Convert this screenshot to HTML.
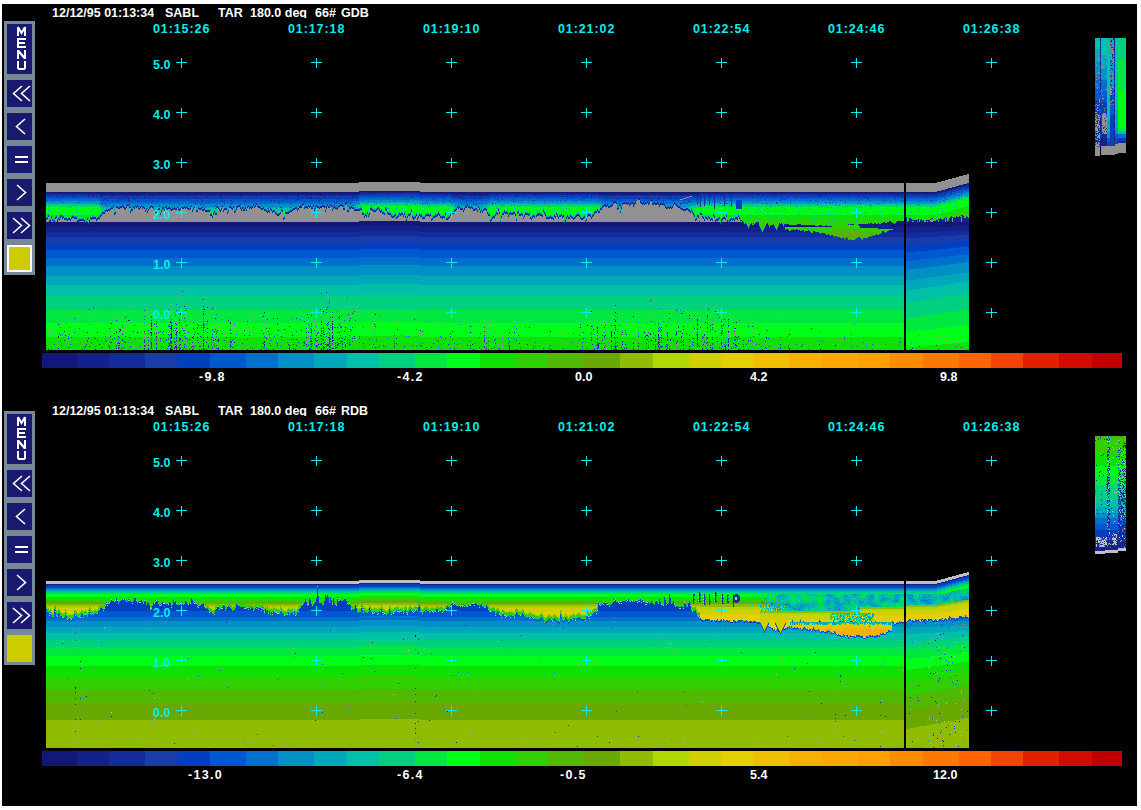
<!DOCTYPE html>
<html><head><meta charset="utf-8">
<style>
html,body{margin:0;padding:0;background:#fff;width:1141px;height:810px;overflow:hidden;position:relative}
.t,.c,.w,.ml{position:absolute;font-family:"Liberation Sans",sans-serif;font-weight:bold;white-space:pre;line-height:14px}
.t{color:#fff;font-size:12.5px;height:12px;overflow:hidden}
.c{color:#00eeee;font-size:12.5px}
.tm{letter-spacing:0.9px}
.w{color:#fff;font-size:12.5px}
.ml{color:#fff;font-size:11.5px;left:7px;width:25px;text-align:center}
svg{position:absolute;left:0;top:0}
</style></head><body>
<svg width="1141" height="810" viewBox="0 0 1141 810" shape-rendering="crispEdges">
<rect x="2" y="4" width="1135" height="802" fill="#000"/>
<path fill="#121878" d="M0 0m967 183h2v1h-2zm-4 1h4v1h-4zm-4 1h4v1h-4zm-3 1h3v1h-3zm-4 1h4v1h-4zm15 0h1v1h-1zm-19 1h4v1h-4zm-3 1h3v1h-3zm14 0h1v1h-1zm-18 1h4v1h-4zm7 0h1v1h-1zm-589 1h61v1h-61zm578 0h4v1h-4zm-891 1h314v1h-314zm374 0h517v1h-517zm-321 1h260v1h-260zm352 0h39v1h-39zm148 0h101v1h-101zm-509 1h1v1h-1zm4 0h1v1h-1zm14 0h1v1h-1zm4 0h1v1h-1zm14 0h1v1h-1zm3 0h2v1h-2zm7 0h1v1h-1zm4 0h1v1h-1zm23 0h1v1h-1zm23 0h1v1h-1zm14 0h1v1h-1zm22 0h1v1h-1zm36 0h1v1h-1zm13 0h1v1h-1zm13 0h2v1h-2zm21 0h1v1h-1zm3 0h1v1h-1zm2 0h1v1h-1zm5 0h1v1h-1zm3 0h3v1h-3zm5 0h1v1h-1zm17 0h1v1h-1zm2 0h1v1h-1zm2 0h1v1h-1zm17 0h1v1h-1zm9 0h1v1h-1zm4 0h1v1h-1zm72 0h1v1h-1zm5 0h1v1h-1zm12 0h1v1h-1zm11 0h1v1h-1zm2 0h1v1h-1zm20 0h1v1h-1zm5 0h1v1h-1zm2 0h1v1h-1zm22 0h1v1h-1zm9 0h2v1h-2zm33 0h1v1h-1zm5 0h1v1h-1zm27 0h1v1h-1zm8 0h2v1h-2zm3 0h1v1h-1zm18 0h1v1h-1zm4 0h1v1h-1zm11 0h1v2h-1zm12 0h1v1h-1zm12 0h1v1h-1zm8 0h1v1h-1zm5 0h1v1h-1zm28 0h1v1h-1zm13 0h1v1h-1zm28 0h1v1h-1zm8 0h1v1h-1zm14 0h1v1h-1zm9 0h1v1h-1zm69 0h1v1h-1zm29 0h1v1h-1zm14 0h1v1h-1zm5 0h1v1h-1zm5 0h1v1h-1zm5 0h1v1h-1zm5 0h1v1h-1zm15 0h1v1h-1zm-839 1h1v1h-1zm4 0h1v2h-1zm27 0h1v1h-1zm18 0h1v2h-1zm12 0h1v1h-1zm3 0h1v1h-1zm12 0h1v1h-1zm24 0h1v1h-1zm27 0h1v1h-1zm4 0h1v1h-1zm21 0h1v1h-1zm2 0h1v1h-1zm11 0h1v1h-1zm3 0h1v1h-1zm25 0h1v1h-1zm17 0h1v2h-1zm22 0h1v1h-1zm18 0h1v1h-1zm16 0h1v1h-1zm102 0h1v1h-1zm25 0h1v1h-1zm3 0h1v1h-1zm2 0h2v1h-2zm29 0h2v1h-2zm3 0h1v1h-1zm62 0h1v1h-1zm7 0h1v1h-1zm33 0h1v1h-1zm34 0h1v1h-1zm6 0h1v1h-1zm16 0h1v1h-1zm7 0h1v1h-1zm27 0h1v1h-1zm63 0h1v1h-1zm45 0h1v1h-1zm2 0h1v1h-1zm38 0h1v1h-1zm26 0h1v1h-1zm5 0h1v1h-1zm6 0h1v1h-1zm42 0h1v1h-1zm-841 1h1v1h-1zm5 0h1v1h-1zm11 0h1v1h-1zm10 0h1v1h-1zm4 0h1v1h-1zm18 0h1v1h-1zm33 0h1v1h-1zm9 0h1v1h-1zm20 0h1v1h-1zm14 0h1v1h-1zm57 0h1v1h-1zm10 0h1v1h-1zm19 0h1v1h-1zm18 0h1v1h-1zm28 0h1v1h-1zm103 0h1v1h-1zm16 0h1v1h-1zm8 0h1v1h-1zm87 0h1v1h-1zm103 0h1v1h-1zm54 0h1v1h-1zm17 0h1v1h-1zm175 0h1v1h-1zm7 0h1v1h-1zm-799 1h1v1h-1zm73 0h1v1h-1zm25 0h1v1h-1zm19 0h1v1h-1zm71 0h1v1h-1zm45 0h1v1h-1zm104 0h1v1h-1zm2 0h1v1h-1zm185 0h1v1h-1zm24 0h1v1h-1zm-553 1h1v1h-1zm143 0h1v1h-1zm49 0h1v1h-1zm341 2h1v1h-1zm-36 2h1v1h-1zm8 1h1v1h-1zm-1 1h1v1h-1zm8 0h1v1h-1zm30 0h1v1h-1zm-523 2h1v1h-1zm163 0h1v1h-1zm21 0h1v1h-1zm-201 1h1v1h-1zm20 0h1v1h-1zm23 0h1v1h-1zm14 0h1v1h-1zm129 0h1v1h-1zm18 0h1v1h-1zm2 0h1v1h-1zm133 0h1v1h-1zm7 0h1v1h-1zm3 0h1v1h-1zm-345 1h1v1h-1zm42 0h1v1h-1zm21 0h1v1h-1zm111 0h1v1h-1zm45 0h1v2h-1zm7 0h1v1h-1zm316 0h1v1h-1zm-445 1h1v1h-1zm11 0h1v1h-1zm247 0h1v1h-1zm6 0h1v1h-1zm-377 1h1v1h-1zm63 0h1v1h-1zm34 0h1v1h-1zm66 0h1v1h-1zm21 0h1v1h-1zm22 0h1v1h-1zm229 0h1v1h-1zm-338 1h2v1h-2zm69 0h1v1h-1zm106 0h1v1h-1zm124 0h1v1h-1zm-374 1h1v1h-1zm350 0h1v1h-1zm-377 1h1v1h-1zm402 0h1v1h-1zm8 0h1v1h-1zm-234 1h1v1h-1zm110 0h1v1h-1zm56 0h1v1h-1zm57 0h1v1h-1zm7 0h1v1h-1zm18 0h1v1h-1zm2 0h1v1h-1zm59 0h1v1h-1zm-310 1h1v1h-1zm88 0h1v1h-1zm50 0h1v1h-1zm160 0h1v1h-1zm386 0h1v1h-1zm-568 1h1v1h-1zm41 0h1v1h-1zm124 0h1v1h-1zm8 0h1v1h-1zm3 0h1v1h-1zm-78 1h1v1h-1zm58 0h1v1h-1zm25 0h1v1h-1zm130 0h1v1h-1zm252 0h1v1h-1zm3 0h1v1h-1zm-905 1h1v1h-1zm44 0h1v1h-1zm324 0h1v1h-1zm19 0h1v1h-1zm138 0h1v1h-1zm373 0h1v1h-1zm-894 1h1v1h-1zm37 0h1v1h-1zm435 0h1v1h-1zm202 0h1v1h-1zm197 0h1v1h-1zm-850 1h1v1h-1zm279 1h61v1h-61zm538 0h1v1h-1zm4 0h1v1h-1zm-855 1h7v1h-7zm8 0h31v1h-31zm33 0h1v1h-1zm2 0h446v2h-446zm447 0h28v2h-28zm29 0h20v1h-20zm21 0h113v1h-113zm114 0h20v1h-20zm21 0h7v2h-7zm8 0h14v1h-14zm160 0h2v1h-2zm8 0h10v1h-10zm11 0h11v1h-11zm12 0h4v1h-4zm6 0h43v1h-43zm-880 1h39v1h-39zm40 0h2v1h-2zm479 0h155v1h-155zm164 0h15v1h-15zm27 0h3v1h-3zm127 0h2v1h-2zm4 0h5v1h-5zm9 0h73v1h-73zm-850 1h42v1h-42zm43 0h631v1h-631zm632 0h23v1h-23zm24 0h1v1h-1zm6 0h1v1h-1zm4 0h4v1h-4zm12 0h1v1h-1zm12 0h1v1h-1zm2 0h1v1h-1zm6 0h1v1h-1zm104 0h78v2h-78zm-845 1h701v1h-701zm704 0h2v1h-2zm4 0h5v1h-5zm12 0h2v1h-2zm7 0h1v1h-1zm6 0h4v2h-4zm5 0h5v1h-5zm11 0h1v1h-1zm2 0h4v1h-4zm29 0h1v1h-1zm33 0h1v1h-1zm-813 1h313v1h-313zm374 0h327v1h-327zm330 0h9v1h-9zm16 0h3v1h-3zm4 0h4v1h-4zm14 0h31v1h-31zm35 0h3v1h-3zm6 0h2v1h-2zm6 0h1v1h-1zm60 0h61v1h-61zm-241 74h1v1h-1zm-466 6h1v1h-1zm28 2h1v1h-1zm-9 1h2v1h-2zm505 0h1v1h-1zm-32 1h1v1h-1zm-353 1h1v1h-1zm392 0h1v1h-1zm-451 1h1v1h-1zm-84 1h1v1h-1zm172 0h1v1h-1zm-45 1h1v1h-1zm68 0h1v1h-1zm-112 2h1v1h-1zm370 0h1v1h-1zm-301 1h1v1h-1zm-176 1h1v1h-1zm59 0h1v1h-1zm199 1h1v1h-1zm314 0h1v1h-1zm-600 1h1v1h-1zm79 1h1v1h-1zm97 0h1v1h-1zm311 0h1v1h-1zm106 0h1v1h-1zm-551 1h1v1h-1zm566 0h1v1h-1zm-625 1h1v1h-1zm45 0h1v1h-1zm19 0h1v1h-1zm55 0h1v1h-1zm97 0h1v1h-1zm5 0h1v1h-1zm-181 1h1v1h-1zm3 0h1v1h-1zm22 0h1v1h-1zm198 0h1v1h-1zm-47 1h1v1h-1zm260 0h1v1h-1zm27 0h1v1h-1zm114 0h1v1h-1zm24 1h1v1h-1zm-581 1h1v1h-1zm161 0h1v1h-1zm248 0h1v1h-1zm24 0h1v1h-1zm74 0h1v1h-1zm-569 1h1v1h-1zm98 0h1v1h-1zm114 0h1v1h-1zm7 0h1v1h-1zm269 0h1v1h-1zm-313 1h1v1h-1zm309 0h1v1h-1zm-473 1h1v1h-1zm28 0h1v1h-1zm96 0h1v1h-1zm34 0h1v1h-1zm-214 1h1v1h-1zm55 0h1v1h-1zm25 0h1v1h-1zm33 0h1v1h-1zm167 0h1v1h-1zm384 0h1v1h-1zm-641 1h1v1h-1zm29 0h1v1h-1zm21 0h1v1h-1zm21 0h1v1h-1zm18 0h1v2h-1zm3 0h1v1h-1zm132 0h1v1h-1zm21 0h1v1h-1zm138 0h1v1h-1zm44 0h1v1h-1zm108 0h1v1h-1zm22 0h1v1h-1zm-327 1h1v1h-1zm350 0h1v1h-1zm54 0h1v1h-1zm-550 1h1v1h-1zm23 0h1v1h-1zm130 0h1v1h-1zm302 0h1v1h-1zm24 0h1v1h-1zm8 0h1v1h-1zm18 0h1v1h-1zm113 0h1v1h-1zm-497 1h1v1h-1zm319 0h1v1h-1zm35 0h1v1h-1zm-588 1h1v1h-1zm52 0h1v1h-1zm8 0h1v1h-1zm7 0h1v1h-1zm31 0h1v1h-1zm15 0h1v2h-1zm433 0h1v1h-1zm-428 1h1v1h-1zm16 0h1v1h-1zm136 0h1v1h-1zm263 0h1v1h-1zm145 0h1v1h-1zm30 0h1v1h-1zm-678 1h1v1h-1zm7 0h1v1h-1zm171 0h1v1h-1zm49 0h1v1h-1zm24 0h1v1h-1zm320 0h1v1h-1zm185 0h1v1h-1zm-732 1h1v1h-1zm10 0h1v1h-1zm34 0h1v1h-1zm33 0h1v1h-1zm14 0h1v1h-1zm141 0h1v1h-1zm311 0h1v1h-1zm3 0h1v1h-1zm12 0h1v1h-1zm42 0h1v1h-1zm16 0h1v1h-1zm-515 1h1v1h-1zm110 0h1v1h-1zm9 0h1v1h-1zm152 0h1v1h-1zm167 0h1v1h-1zm92 0h1v1h-1zm-656 1h1v1h-1zm177 0h1v1h-1zm77 0h1v1h-1zm168 0h1v1h-1zm219 0h1v1h-1zm-584 1h1v1h-1zm453 0h1v1h-1zm84 0h1v1h-1zm26 0h1v1h-1zm14 0h1v2h-1zm-602 1h1v1h-1zm32 0h1v1h-1zm5 0h1v1h-1zm86 0h1v1h-1zm93 0h1v1h-1zm3 0h1v1h-1zm58 0h1v1h-1zm123 0h1v1h-1zm80 0h1v1h-1zm34 0h1v1h-1zm13 0h1v1h-1zm12 0h1v1h-1zm75 0h1v1h-1zm-634 1h1v1h-1zm81 0h1v1h-1zm84 0h1v1h-1zm42 0h1v1h-1zm12 0h1v1h-1zm9 0h1v1h-1zm145 0h1v1h-1zm187 0h1v1h-1zm38 0h1v1h-1zm-528 1h1v1h-1zm10 0h1v1h-1zm51 0h1v1h-1zm47 0h1v1h-1zm12 0h1v1h-1zm7 0h1v1h-1zm20 0h1v1h-1zm19 0h1v1h-1zm135 0h1v1h-1zm365 0h1v1h-1zm-750 1h1v1h-1zm76 0h1v1h-1zm14 0h1v1h-1zm19 0h1v1h-1zm117 0h1v1h-1zm18 0h1v1h-1zm16 0h1v1h-1zm59 0h1v1h-1zm207 0h1v1h-1zm27 0h1v1h-1zm17 0h1v1h-1zm34 0h1v1h-1zm10 0h1v1h-1zm25 0h1v1h-1zm19 0h1v1h-1zm176 0h1v1h-1zm-743 1h1v1h-1zm143 0h1v1h-1zm5 0h1v1h-1zm18 0h1v1h-1zm33 0h1v1h-1zm134 0h1v1h-1zm452 0h1v1h-1zm-845 1h1v1h-1zm58 0h1v1h-1zm19 0h1v1h-1zm10 0h1v1h-1zm90 0h1v1h-1zm30 0h1v1h-1zm9 0h1v1h-1zm211 0h1v1h-1zm68 0h1v1h-1zm13 0h1v1h-1zm2 0h1v1h-1zm95 0h1v1h-1zm10 0h1v1h-1zm58 0h1v1h-1zm-741 1h1v1h-1zm47 0h1v1h-1zm75 0h2v1h-2zm125 0h1v1h-1zm14 0h1v1h-1zm20 0h2v1h-2zm187 0h1v1h-1zm100 0h1v1h-1zm53 0h1v1h-1zm20 0h1v1h-1zm131 0h1v1h-1zm105 274h1v1h-1zm16 1h1v1h-1zm-866 2h1v1h-1zm488 2h1v1h-1zm-233 2h1v1h-1zm610 4h1v1h-1zm-525 1h1v2h-1zm547 0h1v1h-1zm-27 5h1v1h-1zm29 7h1v1h-1zm-546 6h1v1h-1zm-55 4h1v1h-1zm577 1h1v1h-1zm-860 3h1v1h-1zm0 7h1v1h-1zm714 0h1v1h-1zm136 5h1v1h-1zm3 0h1v1h-1zm-93 3h1v1h-1zm0 5h1v1h-1zm-442 2h1v1h-1zm520 2h1v1h-1zm-843 2h1v2h-1zm78 6h1v1h-1zm283 2h1v1h-1zm495 2h1v1h-1zm4 4h1v1h-1zm-488 10h1v1h-1zm492 2h1v1h-1zm-104 1h1v1h-1zm10 1h1v1h-1zm40 1h1v1h-1zm-456 4h1v1h-1zm-11 1h1v1h-1zm537 0h1v1h-1zm4 0h1v1h-1zm-544 2h1v1h-1zm531 4h1v1h-1zm-6 5h1v1h-1zm-7 1h1v1h-1zm0 2h1v1h-1zm4 3h1v1h-1zm6 3h1v1h-1zm-487 1h1v1h-1zm153 0h1v1h-1z"/>
<path fill="#13228a" d="M0 0m1100 38h1v4h-1zm13 0h2v2h-2zm-2 2h1v1h-1zm-1 1h2v1h-2zm4 0h1v4h-1zm-14 2h1v2h-1zm10 1h1v1h-1zm1 1h1v1h-1zm-11 1h1v2h-1zm14 0h1v3h-1zm-3 1h2v1h-2zm-11 2h1v4h-1zm13 0h2v1h-2zm1 1h1v3h-1zm-14 4h1v3h-1zm12 0h1v3h-1zm2 0h1v1h-1zm-1 3h2v1h-2zm-13 1h1v1h-1zm12 0h1v1h-1zm2 0h1v1h-1zm0 2h1v1h-1zm-14 1h1v5h-1zm10 0h2v1h-2zm0 2h1v1h-1zm2 0h1v1h-1zm-2 2h2v1h-2zm4 0h1v1h-1zm-3 3h1v1h-1zm-11 1h1v4h-1zm12 0h1v1h-1zm-2 1h1v1h-1zm4 1h1v1h-1zm0 2h1v7h-1zm-14 2h1v6h-1zm11 0h1v1h-1zm-1 1h1v1h-1zm1 4h1v2h-1zm-11 2h1v8h-1zm10 2h1v1h-1zm4 0h1v4h-1zm-3 1h1v1h-1zm1 3h1v1h-1zm2 1h1v1h-1zm-1 1h2v1h-2zm1 1h1v1h-1zm-2 1h1v1h-1zm-12 1h1v1h-1zm14 0h1v3h-1zm-4 2h1v1h-1zm1 1h1v1h-1zm2 1h1v1h-1zm-2 1h1v1h-1zm-1 1h1v1h-1zm-10 1h1v1h-1zm14 0h1v1h-1zm-14 2h1v4h-1zm12 0h1v1h-1zm2 1h1v3h-1zm-14 4h1v1h-1zm14 1h1v3h-1zm-14 3h1v1h-1zm0 2h1v2h-1zm14 1h1v6h-1zm-14 4h1v9h-1zm14 5h1v5h-1zm-14 6h1v2h-1zm14 1h1v4h-1zm-14 2h1v2h-1zm14 4h1v4h-1zm-14 1h1v1h-1zm0 1h7v1h-7zm1 1h6v1h-6zm-1 1h7v6h-7zm14 2h1v1h-1zm-14 4h1v1h-1zm-133 38h2v1h-2zm-4 1h4v1h-4zm-4 1h4v1h-4zm6 0h1v1h-1zm-9 1h3v1h-3zm-4 1h4v1h-4zm13 0h1v1h-1zm-17 1h4v1h-4zm-3 1h3v1h-3zm6 0h1v1h-1zm-10 1h4v1h-4zm5 0h1v1h-1zm-586 1h60v1h-60zm577 0h4v1h-4zm-891 1h53v1h-53zm313 0h1v1h-1zm9 0h1v1h-1zm4 0h1v1h-1zm12 0h1v1h-1zm35 0h32v1h-32zm71 0h109v1h-109zm210 0h237v1h-237zm245 0h1v1h-1zm6 0h1v1h-1zm-884 1h1v1h-1zm32 0h9v1h-9zm10 0h3v1h-3zm4 0h13v1h-13zm14 0h2v1h-2zm4 0h5v1h-5zm6 0h3v1h-3zm4 0h22v1h-22zm23 0h22v1h-22zm23 0h13v1h-13zm14 0h21v1h-21zm22 0h35v1h-35zm36 0h12v1h-12zm13 0h12v1h-12zm14 0h19v1h-19zm20 0h2v1h-2zm3 0h1v1h-1zm2 0h4v1h-4zm5 0h2v1h-2zm5 0h2v1h-2zm3 0h16v1h-16zm17 0h1v1h-1zm2 0h1v1h-1zm2 0h14v1h-14zm107 0h11v1h-11zm12 0h10v1h-10zm11 0h1v1h-1zm2 0h13v1h-13zm45 0h1v1h-1zm19 0h1v1h-1zm2 0h1v1h-1zm57 0h7v1h-7zm9 0h1v1h-1zm2 0h17v1h-17zm18 0h3v1h-3zm4 0h10v1h-10zm11 0h11v1h-11zm12 0h11v1h-11zm12 0h7v1h-7zm8 0h4v1h-4zm5 0h19v1h-19zm94 0h1v1h-1zm45 0h1v1h-1zm5 0h1v1h-1zm116 0h1v1h-1zm-893 1h1v1h-1zm25 0h1v1h-1zm148 0h1v1h-1zm147 0h1v1h-1zm85 0h1v1h-1zm138 0h1v1h-1zm74 0h1v1h-1zm97 0h1v1h-1zm33 0h1v2h-1zm41 0h1v1h-1zm61 0h1v1h-1zm-827 1h1v1h-1zm190 0h1v1h-1zm23 0h1v1h-1zm52 0h1v1h-1zm84 0h1v1h-1zm40 0h1v1h-1zm15 0h1v1h-1zm42 0h1v1h-1zm8 0h1v1h-1zm97 0h1v1h-1zm89 0h1v1h-1zm19 0h1v1h-1zm22 0h1v1h-1zm151 0h1v1h-1zm27 0h1v1h-1zm13 0h1v1h-1zm-854 1h1v1h-1zm104 0h1v1h-1zm3 0h1v1h-1zm30 0h1v1h-1zm91 0h1v1h-1zm96 0h1v1h-1zm171 0h2v1h-2zm4 0h1v1h-1zm4 0h1v1h-1zm152 0h1v1h-1zm9 0h1v1h-1zm35 0h1v1h-1zm139 0h1v1h-1zm-793 1h1v1h-1zm46 0h1v1h-1zm242 0h1v1h-1zm13 0h1v1h-1zm2 0h1v1h-1zm43 0h1v1h-1zm49 0h1v1h-1zm44 0h1v1h-1zm65 0h1v1h-1zm8 0h1v1h-1zm13 0h1v2h-1zm10 0h1v1h-1zm69 0h1v1h-1zm59 0h1v1h-1zm71 0h1v1h-1zm18 0h1v1h-1zm-781 1h1v1h-1zm24 0h1v2h-1zm6 0h1v1h-1zm152 0h1v1h-1zm11 0h2v1h-2zm165 0h1v1h-1zm176 0h2v1h-2zm38 0h1v1h-1zm8 0h1v1h-1zm-577 1h1v1h-1zm95 0h1v1h-1zm29 0h1v1h-1zm14 0h1v1h-1zm26 0h1v1h-1zm3 0h1v1h-1zm45 0h1v1h-1zm152 0h1v1h-1zm165 0h1v1h-1zm14 0h1v1h-1zm2 0h1v1h-1zm-540 1h1v1h-1zm45 0h1v1h-1zm17 0h1v1h-1zm48 0h1v1h-1zm418 0h1v2h-1zm-26 1h1v1h-1zm33 0h1v1h-1zm-301 1h1v1h-1zm267 0h1v1h-1zm3 0h1v1h-1zm8 0h3v1h-3zm4 0h1v1h-1zm3 0h2v1h-2zm4 0h1v1h-1zm6 0h1v1h-1zm2 0h1v1h-1zm2 0h2v1h-2zm4 0h1v1h-1zm5 0h1v1h-1zm3 0h2v1h-2zm17 0h1v1h-1zm-479 1h1v1h-1zm61 0h1v1h-1zm47 0h1v1h-1zm42 0h1v1h-1zm282 0h1v1h-1zm7 0h1v1h-1zm8 0h1v1h-1zm2 0h1v1h-1zm4 0h1v1h-1zm4 0h2v1h-2zm3 0h2v1h-2zm3 0h1v1h-1zm3 0h3v1h-3zm14 0h1v1h-1zm-548 1h2v1h-2zm126 0h1v1h-1zm49 0h1v1h-1zm25 0h1v1h-1zm3 0h1v1h-1zm10 0h3v1h-3zm127 0h1v1h-1zm137 0h1v1h-1zm3 0h1v1h-1zm5 0h1v1h-1zm7 0h1v1h-1zm10 0h1v1h-1zm35 0h1v1h-1zm9 0h1v1h-1zm3 0h1v1h-1zm-563 1h1v1h-1zm9 0h1v1h-1zm13 0h1v1h-1zm6 0h1v1h-1zm10 0h1v1h-1zm40 0h1v1h-1zm31 0h1v1h-1zm16 0h2v1h-2zm10 0h1v1h-1zm7 0h1v1h-1zm2 0h1v1h-1zm2 0h1v1h-1zm49 0h1v1h-1zm2 0h1v1h-1zm3 0h1v1h-1zm3 0h1v1h-1zm6 0h2v1h-2zm9 0h1v1h-1zm8 0h1v1h-1zm3 0h1v1h-1zm261 0h1v1h-1zm2 0h2v1h-2zm5 0h2v1h-2zm23 0h1v1h-1zm26 0h1v1h-1zm18 0h1v1h-1zm-561 1h2v1h-2zm5 0h1v1h-1zm2 0h2v1h-2zm3 0h1v1h-1zm3 0h1v1h-1zm4 0h1v1h-1zm3 0h1v1h-1zm7 0h1v1h-1zm7 0h1v1h-1zm2 0h1v1h-1zm13 0h1v1h-1zm4 0h1v1h-1zm15 0h1v1h-1zm2 0h1v1h-1zm8 0h1v1h-1zm23 0h1v1h-1zm12 0h2v1h-2zm4 0h1v1h-1zm4 0h1v1h-1zm10 0h1v1h-1zm3 0h1v1h-1zm2 0h1v1h-1zm2 0h1v1h-1zm4 0h2v1h-2zm41 0h3v1h-3zm6 0h1v1h-1zm4 0h1v1h-1zm8 0h2v1h-2zm3 0h2v1h-2zm8 0h2v1h-2zm6 0h1v1h-1zm4 0h1v1h-1zm13 0h1v1h-1zm106 0h1v1h-1zm8 0h1v1h-1zm3 0h1v1h-1zm3 0h1v1h-1zm7 0h1v1h-1zm124 0h1v1h-1zm6 0h2v1h-2zm57 0h1v1h-1zm3 0h1v1h-1zm2 0h1v1h-1zm2 0h1v1h-1zm6 0h2v1h-2zm-567 1h2v1h-2zm7 0h2v1h-2zm16 0h1v1h-1zm4 0h1v1h-1zm4 0h1v1h-1zm2 0h1v1h-1zm5 0h1v1h-1zm4 0h1v1h-1zm10 0h1v1h-1zm5 0h2v1h-2zm6 0h1v1h-1zm7 0h3v1h-3zm4 0h1v1h-1zm5 0h1v1h-1zm8 0h1v1h-1zm3 0h1v1h-1zm17 0h1v1h-1zm13 0h1v1h-1zm9 0h1v1h-1zm2 0h1v1h-1zm3 0h1v1h-1zm4 0h1v1h-1zm2 0h1v1h-1zm9 0h1v1h-1zm3 0h1v1h-1zm32 0h2v1h-2zm9 0h1v1h-1zm3 0h1v1h-1zm4 0h2v1h-2zm4 0h1v1h-1zm4 0h1v1h-1zm7 0h1v1h-1zm7 0h1v1h-1zm2 0h2v1h-2zm14 0h1v1h-1zm3 0h2v1h-2zm26 0h1v1h-1zm80 0h1v1h-1zm12 0h1v1h-1zm2 0h1v1h-1zm146 0h1v1h-1zm3 0h1v1h-1zm46 0h1v1h-1zm2 0h1v1h-1zm2 0h1v1h-1zm9 0h1v1h-1zm6 0h1v1h-1zm-576 1h1v1h-1zm15 0h1v1h-1zm14 0h1v1h-1zm7 0h1v1h-1zm12 0h2v1h-2zm4 0h1v1h-1zm2 0h1v2h-1zm3 0h1v1h-1zm3 0h1v1h-1zm2 0h2v1h-2zm3 0h2v1h-2zm3 0h1v1h-1zm2 0h1v1h-1zm8 0h2v1h-2zm5 0h1v1h-1zm6 0h2v1h-2zm5 0h1v1h-1zm20 0h3v1h-3zm12 0h1v1h-1zm25 0h2v1h-2zm9 0h1v1h-1zm23 0h2v1h-2zm5 0h1v1h-1zm39 0h1v1h-1zm7 0h1v1h-1zm16 0h2v1h-2zm10 0h2v1h-2zm7 0h1v1h-1zm8 0h1v1h-1zm71 0h1v1h-1zm4 0h3v1h-3zm4 0h1v1h-1zm11 0h2v1h-2zm8 0h2v1h-2zm117 0h2v1h-2zm17 0h1v1h-1zm64 0h2v1h-2zm5 0h2v1h-2zm-580 1h1v1h-1zm3 0h1v1h-1zm22 0h2v1h-2zm17 0h1v1h-1zm31 0h1v1h-1zm23 0h2v1h-2zm17 0h1v1h-1zm22 0h1v1h-1zm2 0h2v1h-2zm3 0h1v1h-1zm18 0h2v1h-2zm17 0h1v1h-1zm16 0h1v1h-1zm35 0h1v1h-1zm22 0h6v1h-6zm18 0h1v1h-1zm4 0h1v1h-1zm3 0h1v1h-1zm7 0h1v1h-1zm69 0h1v1h-1zm18 0h2v1h-2zm8 0h1v1h-1zm2 0h1v1h-1zm3 0h1v1h-1zm12 0h1v1h-1zm99 0h1v1h-1zm86 0h3v1h-3zm5 0h1v1h-1zm3 0h1v1h-1zm-586 1h1v1h-1zm2 0h1v1h-1zm38 0h1v1h-1zm9 0h1v1h-1zm3 0h1v1h-1zm4 0h1v1h-1zm31 0h1v1h-1zm4 0h2v1h-2zm11 0h3v1h-3zm13 0h1v1h-1zm3 0h1v1h-1zm5 0h1v1h-1zm7 0h1v1h-1zm31 0h1v1h-1zm2 0h1v1h-1zm5 0h1v1h-1zm9 0h1v1h-1zm8 0h2v1h-2zm35 0h1v1h-1zm22 0h2v1h-2zm26 0h3v1h-3zm8 0h1v1h-1zm30 0h1v1h-1zm43 0h1v1h-1zm9 0h1v1h-1zm14 0h1v1h-1zm66 0h1v1h-1zm146 0h1v1h-1zm-542 1h1v1h-1zm8 0h2v1h-2zm59 0h1v1h-1zm20 0h1v1h-1zm33 0h1v1h-1zm2 0h1v1h-1zm3 0h1v1h-1zm17 0h1v1h-1zm91 0h1v1h-1zm102 0h1v1h-1zm22 0h1v1h-1zm14 0h1v1h-1zm76 0h3v1h-3zm4 0h2v1h-2zm22 0h1v1h-1zm70 0h1v1h-1zm2 0h1v1h-1zm-590 1h1v1h-1zm2 0h1v1h-1zm11 0h1v1h-1zm112 0h1v1h-1zm48 0h1v1h-1zm5 0h1v1h-1zm5 0h4v1h-4zm82 0h1v1h-1zm15 0h2v1h-2zm5 0h1v1h-1zm65 0h2v1h-2zm35 0h1v1h-1zm9 0h1v1h-1zm3 0h1v1h-1zm7 0h2v1h-2zm4 0h1v1h-1zm4 0h1v1h-1zm3 0h1v1h-1zm27 0h1v1h-1zm50 0h1v1h-1zm-480 1h1v1h-1zm46 0h1v1h-1zm53 0h1v1h-1zm2 0h2v1h-2zm61 0h1v1h-1zm86 0h2v1h-2zm7 0h1v1h-1zm15 0h1v1h-1zm4 0h1v1h-1zm2 0h1v1h-1zm9 0h1v1h-1zm2 0h2v1h-2zm3 0h1v1h-1zm6 0h1v1h-1zm6 0h1v1h-1zm22 0h1v1h-1zm59 0h1v1h-1zm6 0h1v1h-1zm8 0h2v1h-2zm10 0h1v1h-1zm4 0h2v1h-2zm14 0h1v1h-1zm17 0h1v1h-1zm137 0h1v1h-1zm7 0h2v1h-2zm-599 1h1v1h-1zm109 0h2v1h-2zm67 0h1v1h-1zm88 0h1v1h-1zm30 0h1v1h-1zm3 0h1v2h-1zm2 0h1v1h-1zm8 0h2v1h-2zm11 0h1v1h-1zm7 0h3v1h-3zm4 0h1v1h-1zm7 0h1v1h-1zm2 0h1v1h-1zm11 0h2v1h-2zm38 0h2v1h-2zm7 0h1v1h-1zm20 0h1v1h-1zm4 0h2v1h-2zm3 0h1v1h-1zm6 0h1v1h-1zm9 0h2v1h-2zm3 0h2v1h-2zm5 0h1v1h-1zm16 0h1v1h-1zm9 0h1v1h-1zm7 0h2v1h-2zm11 0h2v1h-2zm5 0h1v1h-1zm120 0h1v1h-1zm248 0h1v1h-1zm-913 1h1v1h-1zm13 0h1v1h-1zm39 0h1v1h-1zm266 0h1v1h-1zm2 0h1v1h-1zm23 0h1v1h-1zm12 0h1v1h-1zm17 0h2v1h-2zm5 0h1v1h-1zm4 0h1v1h-1zm7 0h1v1h-1zm72 0h1v1h-1zm16 0h1v1h-1zm9 0h1v1h-1zm3 0h1v1h-1zm6 0h1v1h-1zm12 0h1v1h-1zm3 0h1v1h-1zm3 0h1v1h-1zm3 0h1v1h-1zm13 0h1v1h-1zm3 0h1v1h-1zm8 0h1v1h-1zm3 0h1v1h-1zm2 0h1v1h-1zm102 0h1v1h-1zm3 0h1v1h-1zm29 0h1v1h-1zm12 0h1v1h-1zm213 0h1v1h-1zm5 0h1v2h-1zm3 0h1v1h-1zm3 0h2v2h-2zm4 0h1v1h-1zm-915 1h1v1h-1zm5 0h1v1h-1zm4 0h1v1h-1zm3 0h1v1h-1zm9 0h2v1h-2zm140 0h1v1h-1zm152 0h1v1h-1zm28 0h2v1h-2zm5 0h1v1h-1zm8 0h1v1h-1zm2 0h1v1h-1zm5 0h1v1h-1zm3 0h1v1h-1zm3 0h1v1h-1zm15 0h2v1h-2zm7 0h2v1h-2zm3 0h2v1h-2zm6 0h1v1h-1zm44 0h2v1h-2zm8 0h1v1h-1zm31 0h1v1h-1zm2 0h1v1h-1zm12 0h1v1h-1zm9 0h1v1h-1zm7 0h1v1h-1zm9 0h1v1h-1zm13 0h1v1h-1zm114 0h1v1h-1zm4 0h1v1h-1zm6 0h1v1h-1zm6 0h1v1h-1zm192 0h1v3h-1zm39 0h1v1h-1zm5 0h3v1h-3zm4 0h1v1h-1zm4 0h2v1h-2zm8 0h2v1h-2zm-919 1h1v1h-1zm15 0h1v1h-1zm9 0h1v1h-1zm3 0h3v1h-3zm16 0h1v1h-1zm2 0h4v1h-4zm6 0h1v1h-1zm186 0h1v1h-1zm112 0h1v1h-1zm17 0h2v1h-2zm9 0h1v1h-1zm2 0h1v1h-1zm24 0h1v1h-1zm44 0h1v1h-1zm31 0h1v1h-1zm7 0h1v1h-1zm16 0h4v1h-4zm5 0h2v1h-2zm7 0h1v1h-1zm8 0h1v1h-1zm2 0h2v1h-2zm4 0h1v1h-1zm2 0h1v1h-1zm9 0h1v1h-1zm8 0h1v1h-1zm112 0h1v1h-1zm3 0h1v1h-1zm3 0h1v1h-1zm10 0h1v1h-1zm4 0h2v1h-2zm12 0h2v1h-2zm4 0h1v1h-1zm170 0h2v1h-2zm22 0h2v1h-2zm9 0h1v1h-1zm4 0h1v1h-1zm2 0h1v3h-1zm3 0h3v3h-3zm5 0h7v1h-7zm8 0h7v4h-7zm-916 1h1v1h-1zm12 0h1v1h-1zm6 0h3v1h-3zm4 0h2v1h-2zm19 0h1v1h-1zm4 0h1v1h-1zm6 0h1v1h-1zm186 0h1v1h-1zm130 0h1v1h-1zm4 0h1v1h-1zm15 0h1v1h-1zm14 0h2v1h-2zm107 0h1v1h-1zm20 0h1v1h-1zm8 0h2v1h-2zm115 0h1v1h-1zm11 0h1v1h-1zm4 0h1v1h-1zm7 0h1v1h-1zm4 0h1v1h-1zm3 0h1v1h-1zm6 0h1v1h-1zm6 0h1v1h-1zm172 0h3v1h-3zm9 0h1v1h-1zm3 0h1v1h-1zm17 0h4v1h-4zm5 0h2v1h-2zm10 0h8v3h-8zm-901 1h1v1h-1zm15 0h1v1h-1zm3 0h1v1h-1zm9 0h1v1h-1zm2 0h3v1h-3zm15 0h1v1h-1zm310 0h1v1h-1zm25 0h1v1h-1zm60 0h1v1h-1zm25 0h1v1h-1zm49 0h1v2h-1zm21 0h1v1h-1zm109 0h1v1h-1zm9 0h1v1h-1zm6 0h1v1h-1zm2 0h1v1h-1zm4 0h2v1h-2zm14 0h1v1h-1zm2 0h1v1h-1zm2 0h1v1h-1zm6 0h2v1h-2zm165 0h2v1h-2zm4 0h10v1h-10zm11 0h2v1h-2zm3 0h1v1h-1zm3 0h4v1h-4zm10 0h2v1h-2zm3 0h6v2h-6zm-890 1h2v1h-2zm5 0h1v1h-1zm3 0h1v1h-1zm20 0h2v1h-2zm7 0h1v1h-1zm5 0h1v1h-1zm401 0h1v1h-1zm225 0h1v1h-1zm6 0h1v1h-1zm6 0h1v1h-1zm2 0h1v1h-1zm13 0h1v1h-1zm147 0h2v1h-2zm9 0h3v1h-3zm4 0h3v1h-3zm4 0h1v1h-1zm2 0h4v1h-4zm6 0h3v1h-3zm4 0h1v1h-1zm2 0h4v1h-4zm6 0h1v1h-1zm2 0h2v1h-2zm5 0h5v1h-5zm13 0h6v1h-6zm-893 1h1v1h-1zm33 0h1v1h-1zm499 0h1v1h-1zm114 0h1v1h-1zm44 0h1v1h-1zm13 0h3v1h-3zm127 0h2v1h-2zm4 0h2v1h-2zm4 0h1v1h-1zm5 0h1v1h-1zm11 0h1v1h-1zm12 0h1v1h-1zm5 0h2v1h-2zm-839 1h1v1h-1zm450 0h1v1h-1zm29 0h1v1h-1zm164 0h1v1h-1zm17 0h1v1h-1zm10 0h1v1h-1zm12 0h1v1h-1zm12 0h1v1h-1zm2 0h1v1h-1zm87 0h1v1h-1zm2 0h2v1h-2zm4 0h2v1h-2zm4 0h1v1h-1zm3 0h2v1h-2zm4 0h2v1h-2zm7 0h2v1h-2zm3 0h1v1h-1zm-807 1h1v1h-1zm632 0h1v1h-1zm24 0h1v1h-1zm10 0h1v1h-1zm12 0h1v1h-1zm7 0h1v1h-1zm7 0h1v1h-1zm5 0h2v1h-2zm3 0h1v1h-1zm9 0h4v1h-4zm51 0h1v1h-1zm2 0h4v1h-4zm8 0h33v1h-33zm-105 1h1v1h-1zm18 0h2v1h-2zm18 0h6v1h-6zm7 0h1v1h-1zm5 0h14v1h-14zm18 0h3v1h-3zm41 0h31v2h-31zm-501 1h61v1h-61zm456 0h4v1h-4zm7 0h3v1h-3zm5 0h4v1h-4zm125 0h17v1h-17zm-906 1h702v2h-702zm703 0h11v2h-11zm16 0h4v1h-4zm5 0h5v1h-5zm8 0h7v2h-7zm82 0h109v1h-109zm-95 1h10v1h-10zm113 0h91v1h-91zm-832 1h715v2h-715zm718 0h12v2h-12zm13 0h8v1h-8zm9 0h2v1h-2zm7 0h1v1h-1zm3 0h1v1h-1zm97 0h76v1h-76zm-116 1h12v1h-12zm14 0h9v1h-9zm11 0h2v1h-2zm6 0h1v1h-1zm81 0h78v1h-78zm-843 1h313v1h-313zm374 0h342v1h-342zm343 0h41v1h-41zm42 0h5v1h-5zm8 0h2v1h-2zm69 0h2v1h-2zm5 0h55v1h-55zm19 1h11v1h-11zm-724 59h1v1h-1zm21 8h1v1h-1zm-110 8h1v1h-1zm92 3h1v1h-1zm406 1h1v1h-1zm24 1h1v1h-1zm-412 1h1v1h-1zm486 2h1v1h-1zm-564 2h1v1h-1zm59 1h1v1h-1zm89 0h1v1h-1zm23 0h1v1h-1zm43 0h1v1h-1zm350 0h1v1h-1zm8 1h1v1h-1zm27 0h1v1h-1zm-496 1h1v1h-1zm-58 1h1v1h-1zm162 0h1v1h-1zm-153 1h1v1h-1zm526 0h1v1h-1zm-502 2h1v1h-1zm118 0h1v1h-1zm11 0h1v1h-1zm7 0h1v1h-1zm358 0h1v1h-1zm-528 2h1v1h-1zm301 0h1v1h-1zm121 0h1v1h-1zm92 0h1v1h-1zm65 0h1v1h-1zm-48 1h1v1h-1zm7 0h1v1h-1zm-537 1h2v1h-2zm6 0h1v1h-1zm635 0h1v1h-1zm-691 1h1v1h-1zm31 0h1v1h-1zm160 0h1v1h-1zm18 0h1v1h-1zm3 0h1v1h-1zm18 0h1v1h-1zm360 0h1v1h-1zm-537 1h1v1h-1zm30 0h1v1h-1zm98 0h1v1h-1zm119 0h1v1h-1zm-249 1h1v1h-1zm43 0h1v1h-1zm107 0h1v1h-1zm131 0h1v1h-1zm98 0h1v1h-1zm130 0h1v1h-1zm-583 1h1v1h-1zm54 0h1v1h-1zm155 0h1v1h-1zm2 0h1v1h-1zm31 0h1v1h-1zm170 0h1v1h-1zm88 0h1v1h-1zm14 0h1v3h-1zm3 0h1v2h-1zm-500 1h1v1h-1zm102 0h1v1h-1zm15 0h1v1h-1zm90 0h1v1h-1zm355 0h1v1h-1zm6 0h1v1h-1zm-560 1h1v1h-1zm46 0h1v1h-1zm101 0h1v1h-1zm490 0h1v1h-1zm-694 1h1v1h-1zm86 0h1v1h-1zm20 0h1v1h-1zm73 0h1v1h-1zm5 0h1v1h-1zm67 0h1v1h-1zm286 0h1v1h-1zm3 0h1v1h-1zm53 0h1v1h-1zm46 0h1v1h-1zm-504 1h1v1h-1zm81 0h1v1h-1zm42 0h1v1h-1zm31 0h1v1h-1zm5 0h1v1h-1zm91 0h1v1h-1zm43 0h1v1h-1zm145 0h1v1h-1zm43 0h1v1h-1zm54 0h1v1h-1zm3 0h1v1h-1zm-680 1h1v1h-1zm139 0h1v1h-1zm6 0h1v1h-1zm4 0h1v1h-1zm19 0h1v1h-1zm92 0h1v1h-1zm14 0h1v1h-1zm282 0h1v1h-1zm98 0h1v1h-1zm68 0h1v1h-1zm-620 1h1v1h-1zm3 0h1v1h-1zm17 0h1v1h-1zm13 0h1v1h-1zm128 0h1v1h-1zm376 0h1v1h-1zm5 0h1v1h-1zm-487 1h1v1h-1zm3 0h1v1h-1zm75 0h1v1h-1zm37 0h1v1h-1zm337 0h1v1h-1zm-603 1h1v1h-1zm58 0h1v1h-1zm54 0h1v1h-1zm139 0h1v1h-1zm2 0h1v1h-1zm353 0h1v1h-1zm3 0h1v1h-1zm10 0h1v1h-1zm-480 1h1v1h-1zm107 0h2v1h-2zm312 0h1v1h-1zm36 0h1v2h-1zm107 0h1v1h-1zm-654 1h1v1h-1zm14 0h1v1h-1zm46 0h1v1h-1zm63 0h1v1h-1zm30 0h1v1h-1zm34 0h1v1h-1zm51 0h1v1h-1zm-146 1h1v1h-1zm101 0h1v1h-1zm19 0h1v1h-1zm40 0h1v1h-1zm238 0h1v1h-1zm37 0h1v1h-1zm-345 1h1v1h-1zm32 0h1v1h-1zm12 0h1v2h-1zm111 0h1v1h-1zm79 0h1v1h-1zm156 0h1v1h-1zm45 0h1v2h-1zm91 0h1v1h-1zm-549 1h1v1h-1zm38 0h1v1h-1zm86 0h1v1h-1zm299 0h1v1h-1zm42 0h1v1h-1zm53 0h1v1h-1zm148 0h1v1h-1zm-827 1h1v1h-1zm21 0h1v1h-1zm14 0h1v1h-1zm7 0h1v1h-1zm17 0h1v1h-1zm24 0h1v1h-1zm7 0h1v1h-1zm26 0h1v1h-1zm98 0h1v1h-1zm40 0h1v1h-1zm22 0h1v1h-1zm36 0h1v1h-1zm239 0h1v1h-1zm37 0h1v1h-1zm155 0h1v1h-1zm-689 1h1v1h-1zm167 0h1v1h-1zm6 0h1v1h-1zm58 0h1v1h-1zm32 0h1v1h-1zm5 0h1v1h-1zm173 0h1v1h-1zm11 0h1v1h-1zm6 0h1v1h-1zm27 0h1v1h-1zm62 0h1v1h-1zm9 0h1v1h-1zm46 0h1v1h-1zm23 0h1v1h-1zm-730 1h1v1h-1zm60 0h1v1h-1zm33 0h1v1h-1zm25 0h1v1h-1zm113 0h1v2h-1zm20 0h1v1h-1zm177 0h1v1h-1zm63 0h1v1h-1zm14 0h1v1h-1zm120 0h1v1h-1zm-535 1h1v1h-1zm31 0h1v1h-1zm13 0h1v1h-1zm12 0h1v1h-1zm14 0h1v1h-1zm281 0h1v1h-1zm229 0h1v1h-1zm10 0h1v1h-1zm51 0h1v1h-1zm311 87h1v1h-1zm8 0h1v1h-1zm13 0h1v1h-1zm-21 2h1v1h-1zm-2 1h1v1h-1zm6 0h1v1h-1zm2 0h2v1h-2zm3 0h1v1h-1zm-14 1h1v1h-1zm13 0h1v1h-1zm0 3h1v1h-1zm16 0h1v1h-1zm1 2h1v3h-1zm-2 1h1v2h-1zm-15 1h2v1h-2zm1 1h1v2h-1zm11 0h1v1h-1zm3 1h1v1h-1zm-15 1h1v1h-1zm10 0h2v1h-2zm-11 1h2v1h-2zm0 1h1v1h-1zm2 0h1v1h-1zm-6 2h1v1h-1zm4 0h2v2h-2zm18 0h1v1h-1zm-24 1h1v1h-1zm6 1h1v1h-1zm9 0h1v1h-1zm2 0h1v1h-1zm-9 1h1v1h-1zm-2 1h2v1h-2zm18 0h1v1h-1zm-17 1h1v1h-1zm11 0h1v1h-1zm3 0h1v1h-1zm1 2h1v1h-1zm-16 1h1v1h-1zm17 0h1v1h-1zm-15 1h1v2h-1zm12 1h1v1h-1zm-25 1h1v1h-1zm9 1h1v1h-1zm3 0h2v1h-2zm0 2h2v1h-2zm10 0h1v1h-1zm6 0h1v1h-1zm-17 1h1v1h-1zm2 0h1v1h-1zm16 0h1v1h-1zm-18 1h2v1h-2zm15 0h1v1h-1zm2 0h1v1h-1zm-24 1h1v1h-1zm20 0h1v1h-1zm3 0h1v1h-1zm-24 1h1v1h-1zm9 0h1v1h-1zm11 0h1v1h-1zm-10 1h1v2h-1zm14 0h2v1h-2zm-16 1h1v1h-1zm12 0h2v1h-2zm3 0h1v1h-1zm2 0h1v1h-1zm-25 1h1v1h-1zm4 0h1v1h-1zm15 0h1v1h-1zm5 0h1v1h-1zm-16 1h1v1h-1zm17 0h2v1h-2zm-17 1h3v1h-3zm0 1h1v2h-1zm11 0h1v1h-1zm5 0h1v1h-1zm2 0h1v1h-1zm-16 1h1v1h-1zm12 0h2v1h-2zm-25 1h1v1h-1zm11 0h3v1h-3zm0 1h1v1h-1zm13 0h1v1h-1zm2 0h1v1h-1zm2 0h2v1h-2zm-16 1h1v1h-1zm15 0h1v1h-1zm2 0h1v1h-1zm-18 1h3v1h-3zm13 0h1v1h-1zm4 0h1v1h-1zm-18 1h2v1h-2zm12 0h1v1h-1zm4 0h1v1h-1zm-15 1h1v4h-1zm2 0h1v1h-1zm11 0h1v1h-1zm-1 1h1v1h-1zm4 0h2v1h-2zm0 1h1v1h-1zm-14 1h1v1h-1zm9 0h1v2h-1zm2 0h1v1h-1zm2 0h1v1h-1zm3 0h1v1h-1zm-17 1h1v1h-1zm16 0h1v1h-1zm-18 1h1v1h-1zm2 0h2v1h-2zm11 0h2v1h-2zm4 0h1v1h-1zm2 0h1v2h-1zm-30 1h1v1h-1zm14 0h1v1h-1zm11 0h1v1h-1zm-13 1h1v1h-1zm14 0h1v1h-1zm2 0h1v1h-1zm-15 1h2v1h-2zm14 0h4v1h-4zm-21 1h1v1h-1zm6 0h1v1h-1zm13 0h1v1h-1zm-2 1h1v1h-1zm5 0h1v1h-1zm-4 1h1v3h-1zm2 0h1v1h-1zm3 0h1v1h-1zm-16 1h1v1h-1zm14 1h1v1h-1zm2 0h1v2h-1zm-23 1h1v1h-1zm17 0h2v1h-2zm3 0h2v1h-2zm-14 1h3v1h-3zm14 0h3v1h-3zm-14 1h1v1h-1zm2 0h1v1h-1zm10 0h1v1h-1zm3 0h3v1h-3zm-14 1h1v1h-1zm12 0h1v1h-1zm5 0h1v1h-1zm-18 1h1v1h-1zm11 0h1v1h-1zm5 0h2v1h-2zm-22 1h1v1h-1zm8 0h1v1h-1zm10 0h2v1h-2zm4 0h1v1h-1zm2 0h1v2h-1zm-18 1h2v1h-2zm11 0h1v1h-1zm3 0h1v1h-1zm-12 1h1v1h-1zm10 0h2v1h-2zm2 1h3v1h-3zm4 0h1v1h-1zm-20 1h1v1h-1zm6 0h1v1h-1zm8 0h1v1h-1zm2 0h2v1h-2zm-13 1h2v1h-2zm13 0h1v1h-1zm-24 1h1v1h-1zm12 0h1v1h-1zm9 0h1v2h-1zm2 0h1v1h-1zm3 0h2v1h-2zm-2 1h1v2h-1zm2 0h1v1h-1zm-15 1h1v1h-1zm11 0h1v1h-1zm-22 1h1v1h-1zm6 0h1v1h-1zm6 0h1v1h-1zm9 0h1v2h-1zm3 0h3v1h-3zm4 0h1v1h-1zm-17 1h2v1h-2zm12 0h2v1h-2zm3 0h1v2h-1zm-4 1h1v1h-1zm-12 1h1v1h-1zm11 0h1v1h-1zm2 0h1v1h-1zm2 0h1v1h-1zm-15 1h2v1h-2zm16 0h3v1h-3zm-15 1h2v1h-2zm10 0h2v1h-2zm4 0h1v1h-1zm2 0h1v1h-1zm-17 1h1v2h-1zm2 0h1v1h-1zm10 0h1v1h-1zm3 0h2v1h-2zm-4 1h2v1h-2zm7 0h1v1h-1zm-16 1h1v1h-1zm9 0h1v1h-1zm2 0h1v1h-1zm3 0h1v1h-1zm-16 1h3v1h-3zm12 0h1v1h-1zm2 0h1v2h-1zm2 0h2v1h-2zm-14 1h1v2h-1zm16 0h1v1h-1zm-7 1h1v1h-1zm0 1h2v1h-2zm5 0h3v1h-3zm-15 1h1v2h-1zm11 0h2v2h-2zm3 0h2v1h-2zm3 0h1v2h-1zm-3 1h1v1h-1zm-2 1h1v1h-1zm-1 1h1v1h-1zm2 0h1v1h-1zm-14 1h2v2h-2zm11 0h1v1h-1zm2 0h2v1h-2zm4 0h1v1h-1zm-5 1h1v2h-1zm6 0h1v1h-1zm-23 1h1v1h-1zm17 1h3v1h-3zm4 0h1v2h-1zm-16 1h2v1h-2zm11 0h1v1h-1zm2 0h1v2h-1zm5 0h1v1h-1zm-18 1h1v2h-1zm2 0h1v2h-1zm9 1h1v1h-1zm3 0h1v1h-1zm2 0h1v1h-1zm-3 1h2v1h-2zm4 0h1v1h-1zm-17 1h2v1h-2zm11 0h2v1h-2zm-10 1h1v1h-1zm13 0h3v1h-3zm-3 1h2v1h-2zm6 0h1v2h-1zm-16 1h1v2h-1zm-13 1h1v1h-1zm25 0h1v1h-1zm2 0h3v1h-3zm-15 1h1v1h-1zm11 0h4v1h-4zm5 0h3v1h-3zm-6 1h2v1h-2zm4 0h2v1h-2zm3 0h1v2h-1zm-6 1h1v1h-1zm2 0h1v1h-1zm2 0h1v1h-1zm-27 1h1v1h-1zm2 0h2v1h-2zm8 0h2v1h-2zm3 0h13v1h-13zm14 0h2v1h-2zm3 0h1v2h-1zm-30 1h15v1h-15zm16 0h7v1h-7zm8 0h5v1h-5zm-24 1h23v2h-23zm0 2h10v1h-10zm-128 25h2v1h-2zm-4 1h4v1h-4zm-4 1h4v1h-4zm-3 1h3v1h-3zm-4 1h4v1h-4zm-4 1h4v1h-4zm-3 1h3v1h-3zm-4 1h4v1h-4zm-582 1h61v1h-61zm578 0h4v1h-4zm-891 1h313v1h-313zm374 0h517v1h-517zm279 8h1v4h-1zm16 0h1v2h-1zm-11 2h1v1h-1zm18 0h1v3h-1zm5 1h1v1h-1zm-34 1h1v1h-1zm11 0h1v1h-1zm-5 1h1v1h-1zm10 0h1v3h-1zm6 0h1v1h-1zm7 1h1v4h-1zm-29 1h1v2h-1zm6 0h1v1h-1zm28 0h1v3h-1zm-23 1h1v2h-1zm11 0h1v2h-1zm-16 1h1v1h-1zm34 0h1v2h-1zm-24 2h1v1h-1zm13 0h1v1h-1zm11 3h1v1h-1zm216 11h2v1h-2zm10 0h2v1h-2zm7 0h2v1h-2zm-24 1h1v1h-1zm10 0h1v1h-1zm-30 1h1v1h-1zm3 0h1v1h-1zm3 0h1v1h-1zm2 0h1v1h-1zm21 0h1v1h-1zm-246 1h1v1h-1zm2 0h1v1h-1zm208 0h1v1h-1zm3 0h1v1h-1zm3 0h1v1h-1zm34 0h1v1h-1zm-253 1h1v1h-1zm9 0h1v1h-1zm4 0h2v1h-2zm3 0h1v1h-1zm2 0h1v1h-1zm5 0h1v1h-1zm15 0h1v1h-1zm79 0h1v1h-1zm21 0h1v1h-1zm83 0h1v1h-1zm11 0h1v1h-1zm2 0h1v1h-1zm-710 1h1v1h-1zm504 0h1v1h-1zm2 0h1v1h-1zm3 0h1v1h-1zm9 0h1v1h-1zm6 0h1v1h-1zm3 0h1v1h-1zm148 0h2v1h-2zm5 0h1v1h-1zm46 0h1v1h-1zm-195 1h1v1h-1zm139 0h1v1h-1zm2 0h1v1h-1zm9 2h1v1h-1zm41 2h1v1h-1zm-337 1h1v1h-1zm161 1h1v1h-1zm12 0h1v1h-1zm-6 2h1v1h-1zm-703 2h1v1h-1zm868 0h1v1h-1zm-422 2h1v1h-1zm-118 4h1v1h-1zm15 0h1v1h-1zm-46 3h1v1h-1zm-310 1h1v1h-1zm679 9h1v1h-1zm74 0h1v1h-1zm-520 1h1v1h-1zm76 5h1v1h-1zm576 7h1v1h-1zm-494 10h1v1h-1zm486 3h1v1h-1zm18 2h1v1h-1zm-542 8h1v1h-1zm-340 4h1v1h-1zm11 4h1v1h-1zm349 0h1v1h-1zm475 1h1v1h-1zm-835 1h1v1h-1zm843 2h1v1h-1zm-38 2h1v1h-1zm-59 1h1v1h-1zm-746 1h1v1h-1zm834 2h1v1h-1zm58 5h1v1h-1zm-58 2h1v1h-1zm-798 3h1v1h-1zm-36 3h1v1h-1zm240 1h1v1h-1zm640 12h1v1h-1zm-540 1h1v1h-1zm534 1h1v1h-1zm-311 2h1v1h-1zm304 4h1v1h-1zm-30 1h1v1h-1zm-494 1h1v1h-1zm-244 1h1v1h-1zm769 2h1v1h-1zm-366 1h1v1h-1zm303 0h1v1h-1zm78 0h1v1h-1zm-25 1h1v1h-1z"/>
<path fill="#132c9c" d="M0 0m1096 125h1v1h-1zm-1 1h1v1h-1zm3 0h1v1h-1zm-1 1h1v1h-1zm1 1h2v1h-2zm3 0h1v4h-1zm2 0h1v1h-1zm3 0h1v1h-1zm-8 1h1v1h-1zm7 0h1v1h-1zm-7 1h2v1h-2zm-3 1h2v1h-2zm4 0h1v1h-1zm5 0h1v1h-1zm2 0h1v1h-1zm-8 1h2v1h-2zm3 0h2v1h-2zm-6 1h4v1h-4zm6 0h1v1h-1zm2 0h1v1h-1zm-7 1h1v1h-1zm2 0h1v1h-1zm3 0h6v4h-6zm-4 1h1v1h-1zm-2 1h2v2h-2zm1 2h3v1h-3zm-1 1h1v1h-1zm3 0h2v1h-2zm-3 1h4v1h-4zm0 1h5v1h-5zm23 0h8v2h-8zm-23 1h1v1h-1zm2 0h1v2h-1zm2 0h1v1h-1zm-4 2h1v1h-1zm4 0h1v1h-1zm-2 2h1v1h-1zm2 0h1v1h-1zm-132 39h2v1h-2zm-4 1h2v1h-2zm3 0h1v1h-1zm-7 1h4v1h-4zm-3 1h3v1h-3zm-4 1h4v1h-4zm-3 1h2v1h-2zm-4 1h1v1h-1zm2 0h1v1h-1zm-6 1h4v1h-4zm-581 1h8v1h-8zm9 0h3v1h-3zm4 0h11v1h-11zm12 0h34v1h-34zm552 0h4v1h-4zm24 0h1v1h-1zm-915 1h21v1h-21zm22 0h22v1h-22zm23 0h3v1h-3zm4 0h4v1h-4zm264 0h1v1h-1zm27 0h1v1h-1zm34 0h26v1h-26zm27 0h4v1h-4zm43 0h6v1h-6zm7 0h4v1h-4zm5 0h1v1h-1zm2 0h18v1h-18zm19 0h2v1h-2zm3 0h8v1h-8zm10 0h5v1h-5zm6 0h1v1h-1zm2 0h23v1h-23zm24 0h4v1h-4zm5 0h26v1h-26zm127 0h8v1h-8zm9 0h12v1h-12zm13 0h27v1h-27zm28 0h7v1h-7zm8 0h13v1h-13zm14 0h3v1h-3zm4 0h4v1h-4zm5 0h39v1h-39zm40 0h4v1h-4zm5 0h23v1h-23zm24 0h28v1h-28zm29 0h13v1h-13zm14 0h4v1h-4zm5 0h4v1h-4zm5 0h4v1h-4zm5 0h4v1h-4zm5 0h14v1h-14zm15 0h9v1h-9zm17 0h1v1h-1zm-846 1h20v1h-20zm21 0h17v1h-17zm18 0h11v1h-11zm12 0h2v1h-2zm3 0h11v1h-11zm12 0h23v1h-23zm24 0h26v1h-26zm27 0h3v1h-3zm4 0h1v1h-1zm2 0h18v1h-18zm19 0h1v1h-1zm2 0h10v1h-10zm11 0h2v1h-2zm3 0h24v1h-24zm25 0h16v1h-16zm17 0h21v1h-21zm22 0h17v1h-17zm18 0h15v1h-15zm16 0h4v1h-4zm96 0h2v1h-2zm3 0h2v1h-2zm3 0h24v1h-24zm25 0h2v1h-2zm3 0h1v1h-1zm3 0h2v1h-2zm6 0h1v2h-1zm42 0h1v1h-1zm63 0h21v1h-21zm22 0h22v1h-22zm23 0h10v1h-10zm11 0h5v1h-5zm6 0h4v1h-4zm5 0h10v1h-10zm11 0h6v1h-6zm7 0h17v1h-17zm20 0h1v11h-1zm5 0h1v10h-1zm5 0h1v14h-1zm10 0h1v11h-1zm7 0h1v12h-1zm16 0h1v1h-1zm77 0h1v1h-1zm8 0h1v1h-1zm27 0h1v1h-1zm18 0h1v1h-1zm30 0h1v1h-1zm35 0h1v1h-1zm-886 1h1v1h-1zm18 0h1v2h-1zm36 0h1v1h-1zm45 0h1v1h-1zm38 0h1v1h-1zm42 0h1v1h-1zm22 0h1v1h-1zm84 0h1v1h-1zm71 0h1v1h-1zm68 0h1v1h-1zm107 0h1v1h-1zm101 0h1v1h-1zm8 0h2v1h-2zm4 0h1v11h-1zm114 0h1v1h-1zm31 0h1v1h-1zm20 0h1v1h-1zm28 0h1v1h-1zm32 0h1v1h-1zm-862 1h1v1h-1zm62 0h1v1h-1zm19 0h1v1h-1zm9 0h1v1h-1zm54 0h1v1h-1zm15 0h1v1h-1zm55 0h1v1h-1zm24 0h1v1h-1zm86 0h1v1h-1zm55 0h1v1h-1zm19 0h1v1h-1zm80 0h1v1h-1zm93 0h1v1h-1zm14 0h1v1h-1zm32 0h1v1h-1zm17 0h1v8h-1zm105 0h1v1h-1zm3 0h1v1h-1zm17 0h1v1h-1zm42 0h1v1h-1zm37 0h1v1h-1zm43 0h1v1h-1zm-885 1h1v1h-1zm79 0h1v1h-1zm94 0h1v1h-1zm87 0h1v1h-1zm28 0h1v1h-1zm106 0h1v1h-1zm48 0h1v1h-1zm66 0h1v1h-1zm193 0h1v1h-1zm54 0h1v1h-1zm34 0h1v1h-1zm-728 1h1v1h-1zm3 0h1v1h-1zm36 0h1v1h-1zm2 0h1v1h-1zm159 0h1v1h-1zm17 0h1v1h-1zm2 0h1v1h-1zm93 0h1v1h-1zm65 0h1v1h-1zm85 0h1v1h-1zm34 0h1v1h-1zm3 0h1v1h-1zm145 0h1v1h-1zm20 0h1v1h-1zm44 0h1v1h-1zm3 0h1v1h-1zm64 0h1v1h-1zm-849 1h1v1h-1zm46 0h1v1h-1zm11 0h1v1h-1zm22 0h1v1h-1zm45 0h1v1h-1zm27 0h1v1h-1zm81 0h1v1h-1zm78 0h1v1h-1zm93 0h1v1h-1zm37 0h1v1h-1zm47 0h1v1h-1zm27 0h1v1h-1zm113 0h1v1h-1zm98 0h1v1h-1zm39 0h1v1h-1zm30 0h1v1h-1zm91 0h1v1h-1zm-829 1h1v1h-1zm19 0h1v1h-1zm8 0h1v1h-1zm9 0h1v1h-1zm14 0h1v1h-1zm152 0h1v1h-1zm8 0h1v1h-1zm154 0h1v1h-1zm145 0h1v1h-1zm52 0h1v1h-1zm25 0h1v1h-1zm-571 1h1v1h-1zm77 0h1v1h-1zm8 0h1v1h-1zm3 0h1v1h-1zm19 0h1v1h-1zm55 0h1v2h-1zm57 0h1v1h-1zm348 0h1v1h-1zm-453 1h1v1h-1zm29 0h1v1h-1zm359 0h1v1h-1zm68 0h1v1h-1zm-377 2h1v1h-1zm-58 1h1v1h-1zm418 0h1v1h-1zm-355 1h1v1h-1zm-90 1h1v1h-1zm-94 1h1v1h-1zm367 0h1v1h-1zm186 0h2v1h-2zm-221 1h1v1h-1zm-308 1h1v1h-1zm122 3h1v1h-1zm149 0h1v1h-1zm-9 4h1v1h-1zm-338 1h1v1h-1zm625 0h1v1h-1zm263 11h2v1h-2zm-608 1h61v1h-61zm583 0h27v1h-27zm-896 1h716v1h-716zm717 0h48v1h-48zm50 0h6v1h-6zm69 0h3v1h-3zm4 0h20v1h-20zm31 0h52v1h-52zm-871 1h774v1h-774zm775 0h4v1h-4zm60 0h88v1h-88zm-835 1h780v1h-780zm782 0h1v1h-1zm48 0h1v1h-1zm3 0h90v1h-90zm-833 1h784v1h-784zm785 0h2v1h-2zm42 0h1v1h-1zm2 0h81v1h-81zm-829 1h313v1h-313zm374 0h414v1h-414zm415 0h2v1h-2zm34 0h1v1h-1zm2 0h68v1h-68zm35 1h15v1h-15zm-585 56h1v1h-1zm8 8h1v1h-1zm286 4h1v1h-1zm-412 1h1v1h-1zm4 1h1v1h-1zm-118 2h1v1h-1zm237 3h1v1h-1zm-146 2h1v1h-1zm168 0h1v1h-1zm-37 1h1v1h-1zm28 1h1v1h-1zm368 0h1v1h-1zm-633 2h1v1h-1zm203 0h1v1h-1zm73 0h1v1h-1zm-234 2h1v1h-1zm13 0h1v1h-1zm220 0h1v1h-1zm348 0h1v1h-1zm-450 1h1v1h-1zm481 0h1v1h-1zm-498 1h1v1h-1zm98 0h1v1h-1zm-177 1h1v1h-1zm507 0h1v1h-1zm-600 1h1v1h-1zm111 0h1v1h-1zm543 0h1v1h-1zm-541 1h1v2h-1zm15 0h1v1h-1zm12 0h1v1h-1zm5 0h1v1h-1zm463 0h1v1h-1zm44 0h1v1h-1zm-399 1h1v1h-1zm21 0h1v1h-1zm43 0h1v1h-1zm-171 1h1v1h-1zm325 0h1v1h-1zm68 0h1v1h-1zm62 0h1v1h-1zm-508 1h1v1h-1zm181 0h1v1h-1zm326 0h1v1h-1zm39 0h1v1h-1zm38 0h1v1h-1zm-520 1h1v1h-1zm15 0h1v1h-1zm482 0h1v1h-1zm-529 1h1v1h-1zm78 0h1v1h-1zm62 0h1v1h-1zm274 0h1v1h-1zm124 0h1v1h-1zm46 0h1v1h-1zm-604 1h1v1h-1zm515 0h1v1h-1zm44 0h1v1h-1zm-572 1h1v1h-1zm173 0h1v1h-1zm374 0h1v1h-1zm-546 1h1v1h-1zm3 0h1v1h-1zm109 0h1v1h-1zm423 0h1v1h-1zm-517 2h1v1h-1zm152 0h1v1h-1zm11 0h1v2h-1zm315 0h1v1h-1zm74 0h1v1h-1zm-24 1h1v1h-1zm5 0h1v1h-1zm51 0h1v1h-1zm-682 1h1v1h-1zm159 0h1v1h-1zm99 0h1v1h-1zm329 0h1v1h-1zm2 0h1v1h-1zm21 0h1v1h-1zm22 0h1v1h-1zm4 0h1v1h-1zm27 0h1v1h-1zm-666 1h1v1h-1zm117 0h1v1h-1zm147 0h1v1h-1zm20 0h1v1h-1zm7 0h1v1h-1zm37 0h1v1h-1zm49 0h1v1h-1zm248 0h1v1h-1zm38 0h1v1h-1zm8 0h1v1h-1zm29 0h1v1h-1zm-588 1h1v1h-1zm142 0h2v1h-2zm275 0h1v1h-1zm50 0h1v1h-1zm90 0h1v1h-1zm-589 1h1v1h-1zm34 0h1v1h-1zm21 0h1v1h-1zm14 0h2v1h-2zm7 0h1v1h-1zm46 0h1v1h-1zm41 0h1v1h-1zm36 0h1v1h-1zm147 0h1v1h-1zm22 0h1v1h-1zm75 0h1v1h-1zm11 0h1v1h-1zm95 0h1v1h-1zm-526 1h1v1h-1zm3 0h1v2h-1zm56 0h1v1h-1zm100 0h1v1h-1zm12 0h1v1h-1zm10 0h1v1h-1zm117 0h1v1h-1zm142 0h1v1h-1zm66 0h1v1h-1zm40 0h1v1h-1zm-607 1h1v1h-1zm82 0h1v1h-1zm111 0h1v1h-1zm34 0h1v1h-1zm22 0h1v1h-1zm300 0h1v1h-1zm17 0h1v1h-1zm-364 1h1v1h-1zm9 0h1v1h-1zm8 0h1v1h-1zm13 0h1v2h-1zm91 0h1v1h-1zm62 0h1v1h-1zm202 0h1v1h-1zm15 0h1v1h-1zm26 0h1v1h-1zm-652 1h1v1h-1zm98 0h1v1h-1zm104 0h1v1h-1zm40 0h1v2h-1zm45 0h1v1h-1zm219 0h1v1h-1zm30 0h1v1h-1zm99 0h1v1h-1zm14 0h1v1h-1zm45 0h1v1h-1zm16 0h1v1h-1zm-735 1h1v1h-1zm87 0h1v1h-1zm23 0h1v1h-1zm32 0h1v1h-1zm5 0h1v1h-1zm6 0h1v1h-1zm22 0h1v1h-1zm147 0h1v1h-1zm37 0h1v1h-1zm47 0h1v1h-1zm131 0h1v2h-1zm7 0h1v1h-1zm33 0h1v1h-1zm45 0h1v1h-1zm53 0h1v1h-1zm-647 1h1v1h-1zm227 0h1v1h-1zm168 0h1v1h-1zm93 0h1v1h-1zm38 0h2v1h-2zm47 0h1v1h-1zm107 0h1v1h-1zm32 0h1v1h-1zm155 0h1v1h-1zm-887 1h1v1h-1zm109 0h2v1h-2zm301 0h1v1h-1zm15 0h1v1h-1zm-324 1h1v1h-1zm82 0h1v1h-1zm281 0h1v1h-1zm64 0h1v1h-1zm18 0h1v1h-1zm18 0h1v1h-1zm69 0h1v2h-1zm-546 1h1v1h-1zm26 0h1v1h-1zm19 0h1v1h-1zm2 0h1v1h-1zm44 0h1v1h-1zm26 0h1v1h-1zm236 0h1v1h-1zm42 0h1v1h-1zm115 0h1v1h-1zm41 0h1v1h-1zm4 0h1v1h-1zm14 0h1v1h-1zm23 0h1v1h-1zm14 0h1v1h-1zm149 0h1v1h-1zm38 0h1v1h-1zm146 192h3v1h-3zm9 0h1v1h-1zm2 0h2v1h-2zm3 0h4v1h-4zm7 0h4v1h-4zm5 0h2v1h-2zm-24 1h1v1h-1zm3 0h1v1h-1zm2 0h1v1h-1zm5 0h1v1h-1zm2 0h5v1h-5zm8 0h2v1h-2zm4 0h1v1h-1zm-26 1h5v1h-5zm9 0h1v1h-1zm6 0h3v1h-3zm6 0h2v1h-2zm6 0h1v1h-1zm-27 1h1v2h-1zm2 0h2v1h-2zm3 0h3v1h-3zm7 0h1v1h-1zm2 0h1v1h-1zm2 0h1v1h-1zm3 0h1v1h-1zm5 0h2v1h-2zm-22 1h3v1h-3zm7 0h3v1h-3zm4 0h10v1h-10zm11 0h1v1h-1zm4 0h1v1h-1zm-388 49h3v1h-3zm-1 1h5v1h-5zm-1 1h7v1h-7zm0 1h2v3h-2zm4 0h3v3h-3zm-4 3h7v1h-7zm1 1h5v1h-5zm1 1h3v1h-3z"/>
<path fill="#1a3ca8" d="M0 0m1101 110h3v1h-3zm4 0h2v1h-2zm-4 1h6v2h-6zm-4 1h3v1h-3zm-2 1h5v1h-5zm6 0h2v1h-2zm5 0h1v2h-1zm-11 1h1v1h-1zm3 0h2v1h-2zm3 0h1v11h-1zm-5 1h2v1h-2zm-1 1h1v1h-1zm2 0h1v1h-1zm2 0h1v1h-1zm7 0h1v1h-1zm-10 1h2v1h-2zm1 1h2v1h-2zm7 0h1v1h-1zm-9 1h1v1h-1zm2 1h2v1h-2zm8 0h1v2h-1zm-9 1h2v1h-2zm3 0h1v4h-1zm-2 1h1v1h-1zm-2 1h3v1h-3zm6 2h2v1h-2zm0 1h1v2h-1zm4 0h1v1h-1zm-2 1h2v1h-2zm7 8h4v7h-4zm5 4h3v5h-3zm-8 3h7v4h-7zm-140 44h2v1h-2zm-4 1h4v1h-4zm-4 1h4v1h-4zm-3 1h3v1h-3zm10 0h1v1h-1zm-14 1h4v1h-4zm-4 1h4v1h-4zm-3 1h3v1h-3zm14 0h1v1h-1zm-18 1h4v1h-4zm-581 1h1v1h-1zm2 0h8v1h-8zm9 0h3v1h-3zm4 0h11v1h-11zm12 0h33v1h-33zm550 0h4v1h-4zm-891 1h2v1h-2zm3 0h24v1h-24zm25 0h14v1h-14zm15 0h3v1h-3zm4 0h6v1h-6zm266 0h1v1h-1zm19 0h1v2h-1zm41 0h32v1h-32zm71 0h4v1h-4zm5 0h20v1h-20zm22 0h1v1h-1zm2 0h17v1h-17zm18 0h43v1h-43zm44 0h6v1h-6zm7 0h3v1h-3zm4 0h7v1h-7zm109 0h3v1h-3zm4 0h4v1h-4zm6 0h3v1h-3zm4 0h9v1h-9zm10 0h6v1h-6zm7 0h15v1h-15zm16 0h14v1h-14zm15 0h10v1h-10zm11 0h21v1h-21zm22 0h22v1h-22zm23 0h1v1h-1zm2 0h3v1h-3zm4 0h7v1h-7zm8 0h3v1h-3zm4 0h21v1h-21zm23 0h17v1h-17zm18 0h6v1h-6zm7 0h4v1h-4zm5 0h5v1h-5zm6 0h1v1h-1zm2 0h9v1h-9zm10 0h29v1h-29zm51 0h1v1h-1zm-879 1h1v1h-1zm19 0h2v1h-2zm3 0h8v1h-8zm9 0h1v1h-1zm2 0h9v1h-9zm10 0h3v1h-3zm4 0h10v1h-10zm11 0h6v1h-6zm7 0h10v1h-10zm11 0h21v1h-21zm22 0h8v1h-8zm9 0h6v1h-6zm7 0h12v1h-12zm13 0h13v1h-13zm14 0h14v1h-14zm15 0h21v1h-21zm22 0h2v1h-2zm3 0h16v1h-16zm17 0h5v1h-5zm6 0h3v1h-3zm4 0h10v1h-10zm11 0h7v1h-7zm8 0h17v1h-17zm18 0h10v1h-10zm11 0h5v1h-5zm6 0h10v1h-10zm11 0h6v1h-6zm35 0h1v1h-1zm34 0h1v1h-1zm6 0h1v1h-1zm23 0h4v1h-4zm5 0h3v1h-3zm4 0h11v1h-11zm12 0h2v1h-2zm3 0h4v1h-4zm6 0h9v1h-9zm19 0h1v1h-1zm6 0h1v1h-1zm31 0h1v1h-1zm62 0h22v1h-22zm23 0h47v1h-47zm48 0h18v1h-18zm22 0h4v1h-4zm6 0h2v1h-2zm44 0h1v1h-1zm25 0h1v1h-1zm-681 1h1v1h-1zm8 0h1v1h-1zm9 0h20v1h-20zm21 0h1v1h-1zm2 0h18v1h-18zm19 0h8v1h-8zm9 0h38v1h-38zm39 0h2v1h-2zm4 0h10v1h-10zm11 0h13v1h-13zm15 0h2v1h-2zm3 0h14v1h-14zm15 0h36v1h-36zm37 0h23v1h-23zm24 0h9v1h-9zm10 0h4v1h-4zm5 0h35v1h-35zm51 0h1v1h-1zm88 0h1v1h-1zm117 0h1v1h-1zm21 0h1v1h-1zm11 0h29v1h-29zm30 0h12v1h-12zm14 0h22v1h-22zm23 0h8v1h-8zm9 0h5v1h-5zm65 0h1v1h-1zm3 0h1v1h-1zm84 0h1v1h-1zm6 0h1v1h-1zm24 0h1v1h-1zm-816 1h1v1h-1zm72 0h1v2h-1zm41 0h1v1h-1zm24 0h1v1h-1zm33 0h1v1h-1zm41 0h1v1h-1zm18 0h1v1h-1zm15 0h1v1h-1zm115 0h1v1h-1zm52 0h1v1h-1zm25 0h1v1h-1zm30 0h1v1h-1zm24 0h1v1h-1zm6 0h1v1h-1zm56 0h1v1h-1zm28 0h1v1h-1zm91 0h1v1h-1zm26 0h1v1h-1zm42 0h1v1h-1zm72 0h1v1h-1zm-644 1h1v1h-1zm50 0h1v1h-1zm28 0h1v1h-1zm2 0h1v1h-1zm62 0h1v1h-1zm88 0h1v1h-1zm135 0h1v1h-1zm92 0h1v1h-1zm18 0h1v1h-1zm93 0h1v1h-1zm79 0h1v1h-1zm21 0h1v1h-1zm-782 1h1v1h-1zm52 0h1v1h-1zm5 0h1v1h-1zm67 0h1v1h-1zm103 0h1v1h-1zm67 0h1v1h-1zm127 0h1v1h-1zm24 0h1v1h-1zm20 0h1v1h-1zm11 0h1v1h-1zm80 0h1v1h-1zm159 0h1v1h-1zm43 0h1v1h-1zm28 0h1v1h-1zm17 0h1v1h-1zm24 0h1v1h-1zm-875 1h1v1h-1zm143 0h1v1h-1zm26 0h1v1h-1zm24 0h1v1h-1zm41 0h1v1h-1zm9 0h1v1h-1zm110 0h1v1h-1zm37 0h1v1h-1zm7 0h1v1h-1zm24 0h1v1h-1zm25 0h1v1h-1zm20 0h1v1h-1zm97 0h1v1h-1zm4 0h1v1h-1zm93 0h1v1h-1zm5 0h1v1h-1zm128 0h1v1h-1zm56 0h1v1h-1zm17 0h1v1h-1zm-855 1h1v1h-1zm145 0h1v1h-1zm4 0h1v1h-1zm20 0h1v1h-1zm118 0h1v1h-1zm76 0h1v1h-1zm10 0h1v1h-1zm7 0h1v1h-1zm101 0h1v1h-1zm80 0h1v1h-1zm11 0h1v1h-1zm31 0h1v1h-1zm110 0h1v1h-1zm9 0h1v1h-1zm40 0h1v1h-1zm4 0h1v1h-1zm3 0h1v1h-1zm51 0h1v1h-1zm-674 1h1v1h-1zm46 0h1v1h-1zm10 0h1v1h-1zm221 0h1v1h-1zm194 0h1v2h-1zm5 0h1v1h-1zm-579 1h1v1h-1zm23 0h1v1h-1zm72 0h1v1h-1zm29 0h1v1h-1zm10 0h1v1h-1zm4 0h1v1h-1zm46 0h1v1h-1zm12 0h1v1h-1zm32 0h1v1h-1zm139 0h1v1h-1zm132 0h1v1h-1zm68 0h1v1h-1zm-551 1h1v1h-1zm37 0h1v1h-1zm56 0h1v1h-1zm42 0h1v1h-1zm43 0h1v1h-1zm37 0h1v1h-1zm16 0h1v1h-1zm113 0h1v1h-1zm-360 1h1v1h-1zm130 0h1v1h-1zm89 0h1v1h-1zm7 0h1v1h-1zm11 0h1v1h-1zm-224 1h1v1h-1zm123 0h1v1h-1zm19 1h1v1h-1zm-82 1h1v1h-1zm27 1h1v1h-1zm271 0h1v1h-1zm-264 3h1v1h-1zm316 0h1v1h-1zm-120 1h1v1h-1zm16 1h1v1h-1zm313 0h1v1h-1zm-643 2h1v1h-1zm473 0h1v1h-1zm-491 3h1v1h-1zm487 2h1v1h-1zm392 13h13v1h-13zm-597 1h61v1h-61zm580 0h30v1h-30zm-893 1h794v1h-794zm797 0h1v1h-1zm3 0h1v1h-1zm12 0h2v1h-2zm10 0h38v1h-38zm53 0h48v1h-48zm-875 1h798v1h-798zm800 0h2v1h-2zm10 0h5v1h-5zm7 0h106v2h-106zm-817 1h802v1h-802zm804 0h1v1h-1zm5 0h7v1h-7zm-809 1h918v1h-918zm0 1h905v1h-905zm0 1h313v1h-313zm374 0h518v1h-518zm486 1h19v1h-19zm0 1h6v1h-6zm189 292h12v1h-12zm13 0h1v1h-1zm2 0h6v1h-6zm7 0h1v1h-1zm8 0h1v1h-1zm-30 1h1v4h-1zm5 0h3v1h-3zm4 0h2v1h-2zm3 0h6v1h-6zm7 0h2v1h-2zm3 0h2v1h-2zm5 0h2v1h-2zm-24 1h1v1h-1zm4 0h3v1h-3zm8 0h2v2h-2zm6 0h2v1h-2zm4 0h3v1h-3zm-19 1h3v1h-3zm4 0h1v1h-1zm2 0h1v1h-1zm9 0h4v1h-4zm9 0h1v2h-1zm-28 1h1v1h-1zm2 0h3v1h-3zm7 0h8v1h-8zm9 0h1v1h-1zm2 0h1v1h-1zm3 0h1v1h-1zm2 0h2v1h-2zm-155 36h2v1h-2zm-4 1h4v1h-4zm-4 1h4v1h-4zm-3 1h3v1h-3zm-4 1h4v1h-4zm-4 1h4v1h-4zm-3 1h3v1h-3zm-4 1h4v1h-4zm-582 1h61v1h-61zm578 0h4v1h-4zm-891 1h313v1h-313zm374 0h517v1h-517zm273 9h1v2h-1zm16 0h1v3h-1zm6 0h1v3h-1zm18 0h1v2h-1zm-29 1h1v1h-1zm-5 1h1v1h-1zm28 0h1v3h-1zm-34 1h1v2h-1zm11 0h1v3h-1zm18 0h1v1h-1zm-23 1h1v1h-1zm16 0h1v2h-1zm-16 2h1v1h-1zm10 0h1v3h-1zm-16 1h1v3h-1zm11 1h1v3h-1zm18 0h1v1h-1zm5 0h1v1h-1zm6 1h1v3h-1zm-24 1h1v1h-1z"/>
<path fill="#0040c0" d="M0 0m1114 40h1v1h-1zm0 5h1v1h-1zm0 8h1v1h-1zm0 2h1v2h-1zm0 4h1v1h-1zm0 2h1v4h-1zm0 5h1v5h-1zm0 6h1v1h-1zm0 8h1v4h-1zm0 8h1v1h-1zm0 4h1v1h-1zm0 4h1v4h-1zm-19 4h4v3h-4zm19 1h1v2h-1zm-13 1h6v2h-6zm-6 1h5v1h-5zm0 1h1v1h-1zm2 0h2v1h-2zm4 0h1v1h-1zm2 0h4v1h-4zm-7 1h1v1h-1zm3 0h1v1h-1zm2 0h6v3h-6zm-6 1h5v1h-5zm19 0h1v2h-1zm-19 1h2v2h-2zm3 0h2v2h-2zm3 1h3v1h-3zm4 0h2v1h-2zm-10 1h1v1h-1zm2 0h3v1h-3zm4 0h6v1h-6zm-6 1h2v1h-2zm3 0h1v1h-1zm-3 1h5v1h-5zm19 0h1v3h-1zm-4 4h4v5h-4zm0 5h5v3h-5zm0 3h4v5h-4zm0 5h5v2h-5zm0 2h4v4h-4zm0 4h5v1h-5zm4 1h1v1h-1zm4 3h8v3h-8zm-4 2h1v2h-1zm0 3h1v3h-1zm-146 44h1v1h-1zm-5 1h2v1h-2zm3 0h1v1h-1zm-6 1h3v1h-3zm-4 1h3v1h-3zm-4 1h4v1h-4zm-4 1h4v1h-4zm-2 1h2v1h-2zm-4 1h3v1h-3zm-582 1h8v1h-8zm9 0h9v1h-9zm10 0h40v1h-40zm559 0h3v1h-3zm10 0h1v1h-1zm-902 1h10v1h-10zm11 0h13v1h-13zm14 0h3v1h-3zm4 0h5v1h-5zm6 0h11v1h-11zm12 0h3v1h-3zm4 0h2v1h-2zm262 0h1v1h-1zm13 0h1v1h-1zm3 0h1v1h-1zm45 0h2v1h-2zm3 0h5v1h-5zm6 0h22v1h-22zm61 0h4v1h-4zm5 0h5v1h-5zm6 0h5v1h-5zm6 0h9v1h-9zm10 0h7v1h-7zm8 0h12v1h-12zm13 0h28v1h-28zm29 0h20v1h-20zm21 0h11v1h-11zm113 0h3v1h-3zm4 0h4v1h-4zm6 0h3v1h-3zm4 0h8v1h-8zm10 0h4v1h-4zm5 0h1v2h-1zm2 0h8v1h-8zm9 0h1v1h-1zm2 0h8v1h-8zm9 0h15v1h-15zm16 0h27v1h-27zm28 0h18v1h-18zm19 0h30v1h-30zm31 0h19v1h-19zm20 0h27v1h-27zm28 0h8v1h-8zm9 0h12v1h-12zm13 0h6v1h-6zm7 0h2v1h-2zm3 0h3v1h-3zm4 0h7v1h-7zm-831 1h4v1h-4zm253 0h4v1h-4zm5 0h2v1h-2zm42 0h1v1h-1zm9 0h1v1h-1zm3 0h1v1h-1zm40 0h5v1h-5zm6 0h3v1h-3zm6 0h27v1h-27zm31 0h1v1h-1zm99 0h1v1h-1zm6 0h6v1h-6zm90 0h8v1h-8zm9 0h2v1h-2zm69 0h1v1h-1zm7 0h1v2h-1zm88 0h1v1h-1zm91 0h1v1h-1zm-901 1h1v1h-1zm50 0h16v1h-16zm18 0h13v1h-13zm14 0h4v1h-4zm5 0h21v1h-21zm22 0h18v1h-18zm19 0h4v1h-4zm5 0h32v1h-32zm33 0h14v1h-14zm15 0h25v1h-25zm26 0h2v1h-2zm3 0h14v1h-14zm15 0h14v1h-14zm15 0h18v1h-18zm19 0h8v1h-8zm9 0h27v1h-27zm28 0h6v1h-6zm83 0h1v1h-1zm2 0h1v1h-1zm24 0h1v1h-1zm2 0h20v1h-20zm21 0h3v1h-3zm17 0h1v1h-1zm9 0h1v1h-1zm23 0h1v1h-1zm11 0h1v1h-1zm13 0h1v1h-1zm9 0h1v1h-1zm22 0h1v1h-1zm20 0h23v1h-23zm24 0h9v1h-9zm10 0h7v1h-7zm8 0h12v1h-12zm13 0h9v1h-9zm10 0h14v1h-14zm17 0h3v1h-3zm15 0h1v1h-1zm6 0h1v1h-1zm15 0h1v1h-1zm29 0h1v1h-1zm105 0h1v1h-1zm12 0h1v1h-1zm22 0h1v1h-1zm17 0h1v1h-1zm17 0h1v1h-1zm-799 1h1v1h-1zm72 0h1v1h-1zm121 0h1v1h-1zm184 0h1v1h-1zm12 0h1v1h-1zm35 0h1v1h-1zm87 0h1v1h-1zm14 0h2v1h-2zm16 0h1v1h-1zm54 0h1v1h-1zm61 0h1v1h-1zm149 0h1v2h-1zm16 0h1v1h-1zm-892 1h1v1h-1zm30 0h1v1h-1zm33 0h1v1h-1zm21 0h1v1h-1zm7 0h1v1h-1zm76 0h1v1h-1zm61 0h1v1h-1zm80 0h1v1h-1zm83 0h1v1h-1zm9 0h1v1h-1zm96 0h1v1h-1zm7 0h1v1h-1zm18 0h1v1h-1zm7 0h1v1h-1zm32 0h1v2h-1zm7 0h1v1h-1zm23 0h1v1h-1zm44 0h1v1h-1zm38 0h1v1h-1zm10 0h6v9h-6zm44 0h1v2h-1zm90 0h1v1h-1zm14 0h1v1h-1zm22 0h1v1h-1zm37 0h1v1h-1zm-808 1h1v1h-1zm157 0h1v1h-1zm16 0h1v1h-1zm10 0h1v1h-1zm50 0h1v1h-1zm145 0h1v1h-1zm2 0h1v1h-1zm37 0h1v1h-1zm95 0h1v1h-1zm2 0h1v2h-1zm41 0h1v1h-1zm25 0h1v1h-1zm41 0h1v1h-1zm34 0h1v1h-1zm105 0h1v1h-1zm7 0h1v1h-1zm30 0h1v1h-1zm-853 1h1v1h-1zm53 0h1v1h-1zm19 0h1v1h-1zm168 0h1v1h-1zm15 0h1v1h-1zm12 0h1v1h-1zm106 0h1v1h-1zm69 0h1v1h-1zm92 0h1v1h-1zm3 0h1v1h-1zm7 0h1v1h-1zm2 0h2v1h-2zm3 0h1v1h-1zm3 0h2v1h-2zm10 0h1v1h-1zm2 0h1v1h-1zm2 0h2v1h-2zm9 0h1v1h-1zm3 0h1v1h-1zm17 0h1v1h-1zm79 0h1v1h-1zm5 0h1v1h-1zm132 0h1v1h-1zm-789 1h2v1h-2zm4 0h1v1h-1zm50 0h1v1h-1zm40 0h1v1h-1zm61 0h1v1h-1zm47 0h1v1h-1zm19 0h1v1h-1zm17 0h1v1h-1zm6 0h1v1h-1zm5 0h1v1h-1zm72 0h1v1h-1zm3 0h1v1h-1zm49 0h1v1h-1zm18 0h1v1h-1zm130 0h1v1h-1zm5 0h1v1h-1zm3 0h1v1h-1zm4 0h1v1h-1zm8 0h1v1h-1zm2 0h1v1h-1zm4 0h1v1h-1zm4 0h2v1h-2zm3 0h2v1h-2zm5 0h4v1h-4zm15 0h1v1h-1zm45 0h1v1h-1zm5 0h2v1h-2zm37 0h1v1h-1zm4 0h1v1h-1zm11 0h1v1h-1zm13 0h1v1h-1zm70 0h1v1h-1zm-738 1h1v1h-1zm5 0h2v1h-2zm52 0h1v1h-1zm21 0h1v1h-1zm53 0h1v1h-1zm74 0h1v1h-1zm3 0h1v1h-1zm10 0h2v1h-2zm127 0h1v1h-1zm9 0h1v1h-1zm128 0h1v1h-1zm3 0h1v1h-1zm5 0h1v1h-1zm7 0h1v1h-1zm10 0h1v1h-1zm4 0h1v2h-1zm31 0h1v1h-1zm12 0h1v1h-1zm-563 1h1v1h-1zm22 0h1v1h-1zm2 0h1v1h-1zm4 0h1v1h-1zm10 0h1v1h-1zm40 0h1v1h-1zm31 0h1v1h-1zm16 0h2v1h-2zm10 0h1v1h-1zm7 0h1v1h-1zm53 0h1v1h-1zm5 0h1v1h-1zm2 0h2v1h-2zm7 0h2v1h-2zm9 0h1v1h-1zm2 0h1v1h-1zm6 0h1v1h-1zm8 0h1v1h-1zm111 0h1v1h-1zm145 0h1v1h-1zm2 0h2v1h-2zm5 0h2v1h-2zm10 0h1v1h-1zm39 0h1v1h-1zm18 0h1v1h-1zm-561 1h2v1h-2zm4 0h2v1h-2zm3 0h1v1h-1zm3 0h1v1h-1zm3 0h1v1h-1zm4 0h1v1h-1zm3 0h1v1h-1zm2 0h1v2h-1zm2 0h1v1h-1zm3 0h1v1h-1zm7 0h1v1h-1zm2 0h1v1h-1zm7 0h1v1h-1zm6 0h1v1h-1zm12 0h1v1h-1zm7 0h1v1h-1zm2 0h1v1h-1zm8 0h1v1h-1zm10 0h1v1h-1zm12 0h2v1h-2zm13 0h2v1h-2zm4 0h1v1h-1zm4 0h1v1h-1zm10 0h1v1h-1zm3 0h1v1h-1zm4 0h1v1h-1zm4 0h1v1h-1zm41 0h1v1h-1zm2 0h1v1h-1zm4 0h2v1h-2zm4 0h1v1h-1zm8 0h2v1h-2zm3 0h1v1h-1zm4 0h1v1h-1zm2 0h1v1h-1zm2 0h2v1h-2zm6 0h1v1h-1zm4 0h1v1h-1zm13 0h1v1h-1zm106 0h1v1h-1zm2 0h1v1h-1zm6 0h2v1h-2zm3 0h2v1h-2zm3 0h1v1h-1zm7 0h1v1h-1zm124 0h1v1h-1zm6 0h2v1h-2zm57 0h1v1h-1zm3 0h1v1h-1zm4 0h1v1h-1zm6 0h2v1h-2zm-567 1h2v1h-2zm7 0h1v1h-1zm12 0h1v1h-1zm4 0h1v1h-1zm8 0h1v1h-1zm2 0h1v1h-1zm5 0h1v1h-1zm4 0h1v1h-1zm13 0h1v1h-1zm2 0h1v1h-1zm6 0h1v1h-1zm7 0h3v1h-3zm4 0h1v1h-1zm2 0h1v1h-1zm3 0h1v1h-1zm8 0h1v1h-1zm3 0h2v1h-2zm17 0h1v1h-1zm13 0h1v1h-1zm9 0h1v1h-1zm5 0h1v1h-1zm4 0h1v1h-1zm2 0h1v1h-1zm9 0h1v1h-1zm3 0h1v1h-1zm6 0h1v1h-1zm11 0h2v1h-2zm10 0h1v1h-1zm5 0h2v1h-2zm9 0h1v1h-1zm3 0h1v1h-1zm4 0h2v1h-2zm8 0h1v1h-1zm14 0h1v1h-1zm2 0h2v1h-2zm14 0h2v1h-2zm3 0h2v1h-2zm26 0h1v1h-1zm80 0h1v1h-1zm12 0h1v1h-1zm2 0h1v1h-1zm146 0h1v1h-1zm3 0h1v1h-1zm45 0h2v1h-2zm3 0h1v1h-1zm2 0h1v1h-1zm9 0h1v1h-1zm-570 1h1v1h-1zm15 0h1v1h-1zm14 0h1v1h-1zm7 0h1v1h-1zm12 0h2v1h-2zm4 0h1v1h-1zm5 0h1v1h-1zm3 0h1v1h-1zm2 0h2v1h-2zm3 0h2v1h-2zm3 0h1v1h-1zm2 0h1v1h-1zm8 0h2v1h-2zm5 0h1v1h-1zm6 0h2v1h-2zm5 0h1v1h-1zm17 0h1v1h-1zm3 0h1v1h-1zm2 0h1v1h-1zm6 0h1v1h-1zm4 0h1v1h-1zm26 0h1v1h-1zm8 0h1v1h-1zm23 0h2v1h-2zm44 0h1v1h-1zm7 0h1v1h-1zm16 0h2v1h-2zm10 0h2v1h-2zm7 0h1v1h-1zm8 0h1v1h-1zm71 0h1v1h-1zm4 0h3v1h-3zm4 0h1v1h-1zm11 0h2v1h-2zm4 0h1v1h-1zm5 0h2v1h-2zm116 0h2v1h-2zm17 0h1v1h-1zm64 0h2v1h-2zm6 0h1v1h-1zm-581 1h1v1h-1zm2 0h2v1h-2zm24 0h1v1h-1zm16 0h1v1h-1zm23 0h1v1h-1zm31 0h2v1h-2zm17 0h1v1h-1zm22 0h1v1h-1zm2 0h2v1h-2zm3 0h1v1h-1zm18 0h2v1h-2zm7 0h1v1h-1zm10 0h1v1h-1zm11 0h1v1h-1zm5 0h1v1h-1zm17 0h1v1h-1zm18 0h1v1h-1zm22 0h6v1h-6zm18 0h1v1h-1zm4 0h1v1h-1zm3 0h1v1h-1zm7 0h1v1h-1zm69 0h1v1h-1zm18 0h2v1h-2zm8 0h1v1h-1zm5 0h1v1h-1zm111 0h1v1h-1zm86 0h1v1h-1zm5 0h2v1h-2zm3 0h1v1h-1zm-586 1h1v1h-1zm2 0h1v1h-1zm38 0h1v1h-1zm9 0h1v1h-1zm3 0h1v1h-1zm4 0h1v1h-1zm31 0h1v1h-1zm4 0h2v1h-2zm11 0h3v1h-3zm13 0h1v1h-1zm3 0h1v1h-1zm5 0h1v1h-1zm7 0h1v1h-1zm31 0h1v1h-1zm2 0h1v1h-1zm5 0h2v1h-2zm9 0h1v1h-1zm8 0h2v1h-2zm35 0h1v1h-1zm22 0h2v1h-2zm26 0h3v1h-3zm8 0h1v1h-1zm30 0h1v1h-1zm43 0h1v1h-1zm235 0h1v1h-1zm-559 1h1v1h-1zm17 0h1v1h-1zm9 0h1v1h-1zm58 0h1v1h-1zm20 0h1v1h-1zm33 0h1v1h-1zm2 0h1v1h-1zm3 0h1v1h-1zm17 0h1v1h-1zm191 0h1v1h-1zm2 0h1v1h-1zm36 0h1v1h-1zm77 0h2v1h-2zm3 0h2v1h-2zm22 0h1v1h-1zm70 0h1v1h-1zm2 0h1v1h-1zm-590 1h3v1h-3zm13 0h1v1h-1zm112 0h1v1h-1zm48 0h1v1h-1zm5 0h1v1h-1zm5 0h4v1h-4zm82 0h1v1h-1zm15 0h2v1h-2zm5 0h1v1h-1zm65 0h2v1h-2zm35 0h1v1h-1zm9 0h1v1h-1zm3 0h1v1h-1zm6 0h3v1h-3zm5 0h1v1h-1zm3 0h2v1h-2zm4 0h1v1h-1zm27 0h1v1h-1zm-430 1h1v1h-1zm46 0h1v1h-1zm55 0h2v1h-2zm61 0h1v1h-1zm3 0h1v1h-1zm83 0h2v1h-2zm7 0h1v1h-1zm15 0h1v1h-1zm4 0h3v1h-3zm11 0h1v1h-1zm2 0h2v1h-2zm3 0h1v1h-1zm6 0h1v1h-1zm28 0h1v1h-1zm7 0h1v1h-1zm52 0h1v1h-1zm5 0h2v1h-2zm7 0h1v1h-1zm2 0h2v1h-2zm10 0h1v1h-1zm4 0h3v1h-3zm13 0h2v1h-2zm18 0h1v1h-1zm137 0h1v1h-1zm7 0h2v1h-2zm-599 1h1v1h-1zm109 0h2v1h-2zm68 0h1v1h-1zm87 0h1v1h-1zm30 0h1v1h-1zm5 0h1v1h-1zm8 0h1v1h-1zm11 0h1v1h-1zm2 0h1v1h-1zm6 0h2v1h-2zm3 0h1v1h-1zm7 0h1v1h-1zm2 0h1v1h-1zm11 0h2v1h-2zm38 0h2v1h-2zm7 0h1v1h-1zm20 0h1v1h-1zm4 0h2v1h-2zm3 0h1v1h-1zm6 0h1v1h-1zm9 0h2v1h-2zm3 0h2v1h-2zm5 0h1v1h-1zm16 0h1v1h-1zm16 0h2v1h-2zm12 0h1v1h-1zm4 0h1v1h-1zm120 0h1v1h-1zm-665 1h1v1h-1zm12 0h2v1h-2zm40 0h1v1h-1zm268 0h1v1h-1zm23 0h1v1h-1zm3 0h1v1h-1zm9 0h1v1h-1zm17 0h2v1h-2zm9 0h1v1h-1zm6 0h2v1h-2zm73 0h1v1h-1zm16 0h1v1h-1zm9 0h1v1h-1zm3 0h1v1h-1zm6 0h1v1h-1zm12 0h1v1h-1zm3 0h1v1h-1zm2 0h2v1h-2zm4 0h1v1h-1zm4 0h1v1h-1zm12 0h1v1h-1zm8 0h1v1h-1zm3 0h1v1h-1zm2 0h1v1h-1zm102 0h1v1h-1zm3 0h2v1h-2zm29 0h1v1h-1zm-675 1h1v1h-1zm5 0h1v1h-1zm4 0h1v1h-1zm3 0h1v1h-1zm9 0h2v1h-2zm140 0h1v1h-1zm152 0h1v1h-1zm28 0h2v1h-2zm5 0h1v1h-1zm8 0h1v1h-1zm2 0h1v1h-1zm5 0h1v1h-1zm3 0h1v1h-1zm3 0h1v1h-1zm15 0h2v1h-2zm7 0h2v1h-2zm3 0h2v1h-2zm6 0h1v1h-1zm44 0h2v1h-2zm8 0h1v1h-1zm31 0h1v1h-1zm2 0h1v1h-1zm16 0h1v1h-1zm5 0h1v1h-1zm7 0h1v1h-1zm9 0h1v1h-1zm4 0h1v1h-1zm9 0h1v1h-1zm114 0h1v1h-1zm4 0h1v1h-1zm3 0h1v1h-1zm3 0h1v1h-1zm6 0h1v1h-1zm-667 1h1v1h-1zm8 0h1v1h-1zm7 0h1v1h-1zm9 0h1v1h-1zm3 0h3v1h-3zm16 0h1v1h-1zm2 0h3v1h-3zm6 0h2v1h-2zm186 0h1v1h-1zm112 0h1v1h-1zm17 0h2v1h-2zm9 0h3v1h-3zm20 0h1v1h-1zm6 0h1v1h-1zm75 0h1v1h-1zm7 0h1v1h-1zm17 0h3v1h-3zm4 0h2v1h-2zm7 0h1v1h-1zm8 0h1v1h-1zm3 0h1v1h-1zm3 0h1v1h-1zm2 0h1v1h-1zm6 0h1v1h-1zm3 0h1v1h-1zm8 0h1v1h-1zm112 0h1v1h-1zm3 0h1v1h-1zm3 0h1v1h-1zm10 0h1v1h-1zm4 0h2v1h-2zm12 0h2v1h-2zm4 0h1v1h-1zm-693 1h1v1h-1zm12 0h2v1h-2zm6 0h3v1h-3zm4 0h2v1h-2zm19 0h1v1h-1zm4 0h1v1h-1zm6 0h1v1h-1zm186 0h1v1h-1zm149 0h1v1h-1zm14 0h2v1h-2zm85 0h1v1h-1zm22 0h1v1h-1zm20 0h1v1h-1zm8 0h2v1h-2zm115 0h1v1h-1zm11 0h1v1h-1zm4 0h1v1h-1zm7 0h1v1h-1zm4 0h1v1h-1zm3 0h1v1h-1zm6 0h1v1h-1zm2 0h1v1h-1zm4 0h1v1h-1zm-685 1h1v1h-1zm15 0h1v1h-1zm3 0h1v1h-1zm10 0h4v1h-4zm326 0h1v1h-1zm25 0h1v1h-1zm60 0h1v1h-1zm25 0h1v1h-1zm70 0h1v1h-1zm109 0h1v1h-1zm15 0h1v1h-1zm2 0h1v1h-1zm4 0h2v1h-2zm5 0h1v2h-1zm9 0h1v1h-1zm2 0h1v1h-1zm2 0h1v1h-1zm-685 1h2v1h-2zm5 0h1v1h-1zm3 0h1v1h-1zm21 0h1v1h-1zm6 0h1v1h-1zm5 0h1v1h-1zm401 0h1v1h-1zm225 0h1v1h-1zm12 0h1v1h-1zm2 0h1v1h-1zm-676 1h1v1h-1zm33 0h1v1h-1zm414 0h1v1h-1zm85 0h1v1h-1zm114 0h1v1h-1zm-614 1h1v1h-1zm450 0h1v1h-1zm193 0h1v1h-1zm-640 1h1v1h-1zm632 0h1v1h-1zm31 0h1v1h-1zm2 0h1v1h-1zm-7 1h1v1h-1zm4 0h1v1h-1zm32 0h1v1h-1zm2 0h1v1h-1zm-32 1h1v1h-1zm16 0h1v1h-1zm2 0h1v1h-1zm-23 1h1v1h-1zm2 0h1v1h-1zm10 0h1v1h-1zm6 0h1v1h-1zm9 0h1v1h-1zm4 0h1v1h-1zm5 0h1v1h-1zm-14 1h1v1h-1zm-21 1h1v1h-1zm12 0h1v1h-1zm4 0h1v1h-1zm11 0h1v1h-1zm2 0h1v1h-1zm-16 2h1v1h-1zm2 0h1v1h-1zm13 0h1v1h-1zm-14 2h1v1h-1zm202 8h5v1h-5zm-13 1h18v1h-18zm-592 1h61v1h-61zm579 0h31v1h-31zm-892 1h860v2h-860zm879 0h44v1h-44zm-13 1h57v1h-57zm-866 1h923v2h-923zm0 2h913v1h-913zm0 1h903v1h-903zm0 1h313v1h-313zm374 0h518v1h-518zm486 1h22v1h-22zm0 1h11v1h-11zm0 1h1v1h-1zm-580 40h1v1h-1zm21 5h1v1h-1zm-20 10h1v1h-1zm-141 1h1v1h-1zm-18 1h1v1h-1zm158 0h1v1h-1zm-182 1h1v1h-1zm210 1h1v1h-1zm-13 4h1v1h-1zm-33 2h1v1h-1zm22 0h1v1h-1zm389 0h1v1h-1zm-50 1h1v1h-1zm-402 1h1v1h-1zm347 0h1v1h-1zm-463 1h1v1h-1zm28 0h1v1h-1zm-23 1h1v1h-1zm165 0h1v1h-1zm330 0h1v1h-1zm46 0h1v1h-1zm-546 1h1v1h-1zm546 1h1v1h-1zm10 0h1v1h-1zm147 1h1v1h-1zm-703 1h1v2h-1zm460 0h1v1h-1zm9 0h1v1h-1zm77 0h1v1h-1zm26 0h1v1h-1zm-567 1h1v1h-1zm133 0h1v1h-1zm225 0h1v1h-1zm164 0h1v1h-1zm43 0h1v1h-1zm7 0h1v1h-1zm-531 1h1v2h-1zm4 0h1v1h-1zm52 0h1v1h-1zm84 0h1v1h-1zm15 0h1v1h-1zm132 0h1v1h-1zm177 0h1v1h-1zm-468 1h1v1h-1zm10 0h1v1h-1zm63 0h1v1h-1zm3 0h1v1h-1zm37 0h1v1h-1zm4 0h1v1h-1zm13 0h1v1h-1zm24 0h1v1h-1zm347 0h1v1h-1zm28 0h1v1h-1zm-551 1h1v1h-1zm4 1h1v1h-1zm37 0h1v1h-1zm5 0h1v1h-1zm104 0h1v1h-1zm-188 1h1v1h-1zm27 0h1v1h-1zm56 0h1v1h-1zm52 0h1v1h-1zm43 0h1v1h-1zm173 0h1v1h-1zm231 0h1v1h-1zm105 0h1v1h-1zm-746 1h1v1h-1zm114 0h1v1h-1zm19 0h1v1h-1zm111 0h1v1h-1zm19 0h1v1h-1zm246 0h1v1h-1zm84 0h1v1h-1zm9 0h1v1h-1zm45 0h1v1h-1zm7 0h1v1h-1zm-669 1h1v1h-1zm97 0h1v1h-1zm41 0h2v1h-2zm33 0h1v1h-1zm99 0h1v1h-1zm121 0h1v1h-1zm30 0h1v1h-1zm93 0h1v1h-1zm77 0h1v1h-1zm-29 1h1v1h-1zm75 0h2v1h-2zm8 0h1v1h-1zm147 0h1v1h-1zm-791 1h1v1h-1zm122 0h1v1h-1zm147 0h1v1h-1zm332 0h1v1h-1zm6 0h1v2h-1zm30 0h1v1h-1zm-423 1h1v1h-1zm52 0h1v1h-1zm285 0h1v1h-1zm34 0h1v1h-1zm142 0h1v1h-1zm-657 1h1v1h-1zm82 0h1v1h-1zm94 0h1v1h-1zm135 0h1v1h-1zm47 0h1v1h-1zm129 0h1v1h-1zm89 0h1v1h-1zm-592 1h1v1h-1zm54 0h1v1h-1zm2 0h1v1h-1zm6 0h1v1h-1zm21 0h1v1h-1zm145 0h1v1h-1zm12 0h1v1h-1zm130 0h1v1h-1zm99 0h1v1h-1zm124 0h1v1h-1zm59 0h1v1h-1zm-648 1h1v1h-1zm33 0h1v1h-1zm28 0h1v2h-1zm32 0h1v1h-1zm85 0h1v1h-1zm73 0h1v1h-1zm277 0h1v1h-1zm43 0h1v1h-1zm17 0h1v1h-1zm145 0h1v1h-1zm-754 1h1v1h-1zm8 0h1v1h-1zm39 0h1v1h-1zm22 0h1v1h-1zm4 0h1v1h-1zm27 0h1v1h-1zm136 0h1v1h-1zm334 0h1v1h-1zm81 0h1v1h-1zm2 0h1v1h-1zm-644 1h1v1h-1zm18 0h1v1h-1zm26 0h1v1h-1zm13 0h1v1h-1zm55 0h1v1h-1zm98 0h1v1h-1zm13 0h1v1h-1zm47 0h1v1h-1zm112 0h1v1h-1zm127 0h1v1h-1zm65 0h1v1h-1zm21 0h1v1h-1zm198 0h1v1h-1zm-808 1h1v1h-1zm115 0h1v1h-1zm24 0h2v1h-2zm46 0h1v1h-1zm11 0h1v1h-1zm17 0h1v1h-1zm231 0h1v1h-1zm37 0h1v1h-1zm10 0h1v1h-1zm111 0h1v1h-1zm-504 1h1v1h-1zm72 0h1v1h-1zm8 0h1v1h-1zm8 0h1v1h-1zm55 0h1v1h-1zm8 0h1v1h-1zm54 0h1v1h-1zm92 0h1v1h-1zm129 0h1v1h-1zm91 0h1v1h-1zm-636 1h1v1h-1zm99 0h1v1h-1zm6 0h1v1h-1zm36 0h1v1h-1zm246 0h1v1h-1zm140 0h2v1h-2zm28 0h1v1h-1zm78 0h1v1h-1zm40 0h1v1h-1zm3 0h1v1h-1zm10 0h1v1h-1zm46 0h1v1h-1zm70 0h1v1h-1zm13 0h1v1h-1zm-769 1h1v1h-1zm3 0h1v1h-1zm57 0h1v2h-1zm150 0h1v1h-1zm19 0h1v1h-1zm67 0h1v1h-1zm76 0h1v1h-1zm20 0h1v1h-1zm109 0h1v1h-1zm31 0h1v1h-1zm19 0h1v1h-1zm43 0h1v1h-1zm15 0h1v2h-1zm173 0h1v1h-1zm-698 1h1v1h-1zm3 0h1v1h-1zm5 0h1v1h-1zm22 0h1v1h-1zm76 0h1v1h-1zm73 0h1v1h-1zm203 0h1v1h-1zm32 0h1v1h-1zm44 0h1v1h-1zm8 0h1v1h-1zm3 0h1v1h-1zm92 0h1v1h-1zm-700 1h1v1h-1zm7 0h1v1h-1zm51 0h1v1h-1zm5 0h1v1h-1zm32 0h1v2h-1zm19 0h1v1h-1zm16 0h1v1h-1zm42 0h1v1h-1zm56 0h1v1h-1zm195 0h1v1h-1zm175 0h1v1h-1zm2 0h1v1h-1zm51 0h1v1h-1zm21 0h1v1h-1zm47 0h1v2h-1zm-636 1h1v2h-1zm4 0h1v1h-1zm32 0h1v1h-1zm86 0h1v1h-1zm55 0h1v1h-1zm12 0h1v1h-1zm2 0h1v1h-1zm156 0h1v1h-1zm110 0h1v1h-1zm66 0h1v1h-1zm2 0h1v1h-1zm-548 1h1v1h-1zm101 0h1v1h-1zm39 0h1v1h-1zm193 0h1v1h-1zm19 0h1v1h-1zm121 0h1v1h-1zm20 0h1v1h-1zm8 0h1v1h-1zm70 0h1v1h-1zm48 0h1v1h-1zm68 0h1v1h-1zm311 93h1v1h-1zm4 0h1v1h-1zm2 1h1v1h-1zm-2 2h2v1h-2zm-2 6h1v1h-1zm-3 1h1v1h-1zm2 0h1v1h-1zm-1 2h1v1h-1zm4 1h1v1h-1zm-4 1h1v1h-1zm2 1h1v1h-1zm4 2h1v1h-1zm-3 1h1v1h-1zm0 2h2v1h-2zm-4 2h1v1h-1zm4 1h1v1h-1zm0 4h2v1h-2zm-3 1h2v1h-2zm6 1h1v1h-1zm-7 2h2v1h-2zm2 3h2v1h-2zm-2 3h1v1h-1zm0 1h2v1h-2zm1 1h1v1h-1zm6 2h1v1h-1zm-6 1h1v1h-1zm-1 1h1v1h-1zm5 0h1v1h-1zm-4 3h1v1h-1zm1 4h1v1h-1zm-2 1h1v1h-1zm3 0h1v1h-1zm1 1h2v1h-2zm-1 1h1v1h-1zm3 0h1v1h-1zm-6 1h1v1h-1zm2 0h1v1h-1zm3 0h1v1h-1zm-2 1h1v1h-1zm2 1h1v1h-1zm2 0h1v2h-1zm-5 1h1v1h-1zm-2 1h1v3h-1zm2 1h1v1h-1zm-1 2h2v1h-2zm6 0h1v1h-1zm-4 3h2v1h-2zm-2 1h1v1h-1zm-1 1h1v2h-1zm2 0h1v1h-1zm3 1h1v1h-1zm1 2h1v1h-1zm-5 2h1v1h-1zm3 1h1v2h-1zm-4 1h1v1h-1zm6 0h1v1h-1zm-5 1h1v1h-1zm-1 1h2v1h-2zm6 2h1v3h-1zm-3 2h1v1h-1zm-3 1h1v1h-1zm2 0h1v1h-1zm4 1h1v1h-1zm-2 1h2v1h-2zm3 0h1v1h-1zm-3 1h1v1h-1zm-4 2h1v1h-1zm6 0h1v1h-1zm-3 1h1v1h-1zm-3 1h1v1h-1zm-23 1h12v2h-12zm14 0h9v2h-9zm10 0h1v1h-1zm4 0h1v1h-1zm2 0h1v1h-1zm-5 1h5v1h-5zm-25 1h7v1h-7zm8 0h6v1h-6zm7 0h9v1h-9zm10 0h6v1h-6zm-25 1h14v1h-14zm15 0h3v1h-3zm4 0h5v1h-5zm8 0h1v1h-1zm2 0h2v1h-2zm-29 1h12v2h-12zm15 0h4v1h-4zm7 0h1v1h-1zm2 0h1v1h-1zm2 0h2v1h-2zm3 0h1v1h-1zm-14 1h2v1h-2zm3 0h1v1h-1zm2 0h1v1h-1zm2 0h3v1h-3zm4 0h1v1h-1zm2 0h3v1h-3zm-4 1h2v1h-2zm5 0h1v1h-1zm1 1h1v2h-1zm-2 1h1v1h-1zm-3 1h1v1h-1zm4 0h1v1h-1zm-1 2h1v1h-1zm2 0h1v2h-1zm-6 1h1v1h-1zm4 2h1v1h-1zm2 0h1v2h-1zm-4 1h1v2h-1zm3 1h1v1h-1zm-6 1h1v1h-1zm-151 30h2v1h-2zm-4 1h4v1h-4zm-4 1h4v1h-4zm-3 1h3v1h-3zm-4 1h4v1h-4zm-4 1h4v1h-4zm-3 1h3v1h-3zm-4 1h4v1h-4zm-582 1h61v1h-61zm578 0h4v1h-4zm-891 1h271v1h-271zm272 0h41v1h-41zm102 0h517v1h-517zm-103 1h1v9h-1zm399 6h1v1h-1zm-47 1h1v4h-1zm25 0h1v2h-1zm6 0h1v2h-1zm-375 1h1v2h-1zm2 0h1v2h-1zm389 0h1v1h-1zm12 0h1v1h-1zm-411 1h2v2h-2zm8 1h4v4h-4zm5 0h1v3h-1zm7 0h1v1h-1zm327 0h1v3h-1zm36 0h1v2h-1zm5 0h1v1h-1zm-589 1h1v3h-1zm18 0h2v3h-2zm57 0h1v2h-1zm118 0h1v2h-1zm7 0h3v4h-3zm17 0h1v3h-1zm336 0h2v5h-2zm54 0h1v1h-1zm5 0h1v1h-1zm-606 1h1v1h-1zm2 0h1v1h-1zm4 0h1v1h-1zm177 0h1v3h-1zm32 0h1v2h-1zm7 0h2v1h-2zm270 0h1v1h-1zm14 0h1v2h-1zm12 0h1v1h-1zm19 0h1v3h-1zm35 0h1v1h-1zm11 0h1v1h-1zm-594 1h1v1h-1zm10 0h4v1h-4zm5 0h1v1h-1zm15 0h1v1h-1zm14 0h1v1h-1zm18 0h1v2h-1zm18 0h2v3h-2zm118 0h2v4h-2zm21 0h2v3h-2zm10 0h1v1h-1zm3 0h3v1h-3zm272 0h1v1h-1zm11 0h1v1h-1zm12 0h3v1h-3zm4 0h1v1h-1zm22 0h2v3h-2zm-553 1h3v1h-3zm4 0h3v1h-3zm5 0h6v1h-6zm7 0h4v1h-4zm6 0h4v1h-4zm6 0h3v1h-3zm5 0h1v1h-1zm12 0h2v1h-2zm19 0h1v1h-1zm10 0h1v1h-1zm139 0h5v2h-5zm9 0h2v1h-2zm4 0h10v1h-10zm268 0h1v1h-1zm9 0h2v1h-2zm8 0h4v1h-4zm5 0h2v1h-2zm4 0h1v1h-1zm2 0h1v1h-1zm2 0h3v1h-3zm5 0h3v1h-3zm11 0h1v2h-1zm5 0h1v1h-1zm17 0h1v2h-1zm16 0h1v2h-1zm11 0h1v1h-1zm10 0h1v1h-1zm6 0h1v1h-1zm12 0h1v2h-1zm-622 1h1v1h-1zm4 0h27v1h-27zm28 0h1v1h-1zm3 0h2v1h-2zm3 0h2v2h-2zm3 0h1v1h-1zm8 0h3v2h-3zm7 0h1v1h-1zm7 0h1v1h-1zm4 0h3v2h-3zm12 0h2v2h-2zm9 0h1v1h-1zm110 0h3v2h-3zm11 0h4v1h-4zm18 0h1v1h-1zm4 0h11v1h-11zm276 0h5v1h-5zm6 0h18v1h-18zm19 0h3v1h-3zm4 0h3v1h-3zm6 0h1v1h-1zm7 0h3v2h-3zm4 0h2v2h-2zm-549 1h8v1h-8zm9 0h13v1h-13zm14 0h10v1h-10zm14 0h2v2h-2zm6 0h1v1h-1zm8 0h2v1h-2zm8 0h2v2h-2zm20 0h1v1h-1zm2 0h3v1h-3zm12 0h1v1h-1zm111 0h8v1h-8zm10 0h8v2h-8zm9 0h2v2h-2zm4 0h10v1h-10zm115 0h1v1h-1zm23 0h1v1h-1zm123 0h1v2h-1zm5 0h5v1h-5zm9 0h7v1h-7zm8 0h1v1h-1zm2 0h27v1h-27zm28 0h3v1h-3zm14 0h3v1h-3zm4 0h3v1h-3zm4 0h2v1h-2zm12 0h1v1h-1zm4 0h2v1h-2zm35 0h1v1h-1zm-618 1h41v1h-41zm48 0h6v2h-6zm7 0h1v1h-1zm2 0h6v1h-6zm11 0h4v1h-4zm7 0h1v1h-1zm2 0h1v1h-1zm2 0h4v1h-4zm5 0h8v1h-8zm12 0h3v1h-3zm35 0h1v1h-1zm67 0h4v1h-4zm6 0h3v1h-3zm4 0h9v1h-9zm24 0h11v1h-11zm12 0h1v1h-1zm102 0h2v1h-2zm3 0h1v1h-1zm9 0h1v1h-1zm8 0h6v1h-6zm10 0h1v1h-1zm119 0h1v1h-1zm2 0h1v1h-1zm2 0h2v1h-2zm7 0h34v1h-34zm36 0h7v1h-7zm8 0h6v1h-6zm9 0h2v1h-2zm3 0h7v1h-7zm17 0h2v2h-2zm4 0h3v1h-3zm17 0h1v1h-1zm-599 1h1v1h-1zm2 0h42v1h-42zm53 0h10v1h-10zm11 0h26v1h-26zm28 0h4v1h-4zm23 0h1v1h-1zm13 0h2v1h-2zm66 0h5v1h-5zm6 0h4v1h-4zm5 0h23v1h-23zm24 0h14v1h-14zm18 0h1v3h-1zm63 0h1v1h-1zm32 0h1v1h-1zm2 0h4v1h-4zm12 0h1v1h-1zm4 0h1v1h-1zm3 0h3v1h-3zm4 0h4v1h-4zm5 0h2v1h-2zm6 0h1v2h-1zm112 0h2v1h-2zm3 0h62v1h-62zm63 0h11v1h-11zm24 0h2v1h-2zm-583 1h45v3h-45zm47 0h45v1h-45zm46 0h6v1h-6zm25 0h2v1h-2zm5 0h1v1h-1zm8 0h4v1h-4zm65 0h50v2h-50zm60 0h1v1h-1zm58 0h1v1h-1zm28 0h1v1h-1zm4 0h9v1h-9zm10 0h1v1h-1zm2 0h1v1h-1zm2 0h1v1h-1zm3 0h15v1h-15zm130 0h11v1h-11zm12 0h65v1h-65zm66 0h2v1h-2zm5 0h1v1h-1zm3 0h3v1h-3zm4 0h3v1h-3zm-536 1h19v1h-19zm20 0h26v1h-26zm27 0h6v1h-6zm18 0h2v1h-2zm5 0h3v1h-3zm5 0h3v1h-3zm9 0h9v1h-9zm15 0h1v1h-1zm5 0h2v1h-2zm6 0h1v1h-1zm156 0h2v3h-2zm29 0h2v1h-2zm3 0h29v1h-29zm30 0h4v1h-4zm6 0h2v1h-2zm112 0h93v1h-93zm-498 1h2v1h-2zm52 0h54v1h-54zm55 0h1v1h-1zm10 0h3v1h-3zm6 0h2v1h-2zm4 0h4v1h-4zm8 0h9v1h-9zm12 0h3v1h-3zm4 0h2v1h-2zm4 0h1v1h-1zm2 0h4v1h-4zm43 0h51v1h-51zm55 0h2v1h-2zm6 0h2v1h-2zm8 0h1v2h-1zm77 0h3v1h-3zm4 0h38v1h-38zm148 0h81v1h-81zm83 0h2v1h-2zm3 0h7v1h-7zm-638 1h1v2h-1zm8 0h1v1h-1zm46 0h50v1h-50zm51 0h57v1h-57zm65 0h3v1h-3zm4 0h12v1h-12zm15 0h13v1h-13zm14 0h5v1h-5zm6 0h3v1h-3zm4 0h4v1h-4zm6 0h1v2h-1zm34 0h52v1h-52zm53 0h1v1h-1zm2 0h3v1h-3zm7 0h1v1h-1zm20 0h1v1h-1zm8 0h1v1h-1zm21 0h1v1h-1zm26 0h2v2h-2zm11 0h41v1h-41zm151 0h93v1h-93zm-544 1h2v1h-2zm35 0h1v1h-1zm10 0h4v1h-4zm5 0h105v1h-105zm111 0h10v1h-10zm11 0h6v1h-6zm7 0h20v1h-20zm21 0h7v1h-7zm8 0h2v1h-2zm5 0h1v1h-1zm31 0h59v1h-59zm122 0h1v1h-1zm5 0h2v1h-2zm16 0h1v1h-1zm4 0h44v1h-44zm153 0h94v1h-94zm97 0h1v1h-1zm-230 15h1v1h-1zm404 1h1v1h-1zm-56 1h1v1h-1zm-738 13h1v1h-1zm426 0h1v1h-1zm423 1h1v1h-1zm-12 1h1v1h-1zm36 4h1v1h-1zm12 5h1v1h-1zm-529 2h1v1h-1zm513 1h1v1h-1zm7 2h1v1h-1zm-763 2h1v1h-1zm134 6h1v1h-1zm93 4h1v1h-1zm-195 2h1v1h-1zm726 0h1v1h-1zm-488 2h1v1h-1zm477 0h1v1h-1zm-593 1h1v1h-1zm498 2h1v1h-1zm116 0h1v1h-1zm-758 1h1v1h-1zm-49 14h1v1h-1zm660 1h1v1h-1zm-126 1h1v1h-1zm-268 2h1v1h-1zm-335 4h1v1h-1zm335 3h1v1h-1zm-93 11h1v1h-1zm93 1h1v1h-1zm465 2h1v1h-1zm82 1h1v1h-1zm-566 2h1v1h-1zm439 0h1v1h-1zm97 0h1v1h-1zm-852 1h1v1h-1zm755 2h1v1h-1zm-267 4h1v1h-1zm-153 3h1v1h-1zm539 0h1v1h-1zm-879 3h1v1h-1zm480 1h1v1h-1zm42 4h1v1h-1zm257 4h1v1h-1z"/>
<path fill="#0058d0" d="M0 0m1100 42h1v1h-1zm0 3h1v1h-1zm0 3h1v1h-1zm0 5h1v1h-1zm0 4h1v1h-1zm0 2h1v2h-1zm0 7h1v3h-1zm0 7h1v2h-1zm0 8h1v1h-1zm-5 7h2v1h-2zm3 0h2v1h-2zm-3 1h5v1h-5zm0 1h6v2h-6zm16 0h2v1h-2zm1 1h2v1h-2zm-17 1h2v1h-2zm3 0h9v1h-9zm15 0h1v1h-1zm-18 1h5v1h-5zm7 0h5v1h-5zm9 0h2v1h-2zm-16 1h12v1h-12zm17 0h2v1h-2zm-17 1h7v1h-7zm8 0h4v1h-4zm8 0h3v1h-3zm-16 1h12v2h-12zm15 0h1v1h-1zm2 0h2v1h-2zm-2 1h3v1h-3zm-15 1h7v1h-7zm9 0h3v1h-3zm6 0h1v1h-1zm2 0h2v1h-2zm-17 1h4v1h-4zm5 0h7v1h-7zm11 0h3v1h-3zm-10 1h6v1h-6zm9 0h2v1h-2zm-10 1h7v1h-7zm10 0h1v1h-1zm2 0h2v1h-2zm-1 1h1v1h-1zm2 0h1v1h-1zm-3 1h4v1h-4zm1 1h2v1h-2zm-1 1h4v10h-4zm-10 1h1v1h-1zm0 2h1v3h-1zm0 4h1v1h-1zm0 3h1v3h-1zm0 12h1v2h-1zm0 4h1v1h-1zm0 3h1v3h-1zm15 0h3v5h-3zm-8 4h3v4h-3zm-7 1h1v1h-1zm-133 49h2v2h-2zm-4 1h3v1h-3zm-4 1h8v1h-8zm-3 1h7v1h-7zm-4 1h7v1h-7zm9 0h1v1h-1zm-13 1h3v1h-3zm4 0h4v1h-4zm-6 1h6v1h-6zm10 0h1v1h-1zm-15 1h1v1h-1zm2 0h5v1h-5zm18 0h1v1h-1zm6 0h1v1h-1zm-607 1h12v1h-12zm13 0h2v1h-2zm3 0h2v1h-2zm3 0h9v1h-9zm10 0h23v1h-23zm24 0h6v1h-6zm524 0h5v1h-5zm6 0h2v1h-2zm-897 1h17v1h-17zm18 0h10v1h-10zm11 0h11v1h-11zm12 0h1v1h-1zm2 0h5v1h-5zm6 0h4v1h-4zm264 0h9v1h-9zm10 0h18v1h-18zm19 0h11v1h-11zm12 0h8v1h-8zm9 0h2v1h-2zm4 0h29v1h-29zm30 0h8v1h-8zm47 0h4v1h-4zm5 0h46v1h-46zm47 0h31v1h-31zm32 0h9v1h-9zm11 0h2v1h-2zm3 0h3v1h-3zm4 0h1v1h-1zm3 0h4v1h-4zm106 0h3v1h-3zm4 0h4v1h-4zm5 0h4v2h-4zm5 0h9v1h-9zm10 0h5v1h-5zm7 0h11v1h-11zm12 0h2v1h-2zm3 0h2v1h-2zm3 0h2v1h-2zm3 0h14v1h-14zm15 0h6v1h-6zm7 0h12v1h-12zm13 0h14v1h-14zm15 0h2v1h-2zm3 0h16v1h-16zm17 0h10v1h-10zm11 0h5v1h-5zm6 0h22v1h-22zm25 0h36v1h-36zm37 0h24v1h-24zm25 0h14v1h-14zm-881 1h1v1h-1zm2 0h4v1h-4zm5 0h6v1h-6zm7 0h42v1h-42zm294 0h6v1h-6zm17 0h1v1h-1zm49 0h1v1h-1zm2 0h9v1h-9zm10 0h1v1h-1zm3 0h1v1h-1zm2 0h16v1h-16zm17 0h3v1h-3zm30 0h13v1h-13zm14 0h3v1h-3zm4 0h4v1h-4zm5 0h6v1h-6zm7 0h14v1h-14zm16 0h7v1h-7zm8 0h2v1h-2zm3 0h2v1h-2zm3 0h9v1h-9zm10 0h8v1h-8zm9 0h4v1h-4zm5 0h4v1h-4zm5 0h11v1h-11zm12 0h14v1h-14zm15 0h4v1h-4zm89 0h8v1h-8zm9 0h2v2h-2zm4 0h2v1h-2zm3 0h2v1h-2zm3 0h1v1h-1zm7 0h3v1h-3zm4 0h3v1h-3zm4 0h1v1h-1zm2 0h6v1h-6zm7 0h5v1h-5zm6 0h6v1h-6zm7 0h6v1h-6zm7 0h8v1h-8zm9 0h13v1h-13zm14 0h11v1h-11zm12 0h9v1h-9zm10 0h17v1h-17zm18 0h33v1h-33zm34 0h7v1h-7zm8 0h1v1h-1zm2 0h8v1h-8zm10 0h16v1h-16zm17 0h4v1h-4zm5 0h16v1h-16zm17 0h16v1h-16zm17 0h12v1h-12zm-870 1h1v1h-1zm5 0h1v1h-1zm30 0h1v1h-1zm9 0h5v1h-5zm6 0h14v1h-14zm16 0h2v1h-2zm3 0h1v1h-1zm2 0h2v2h-2zm3 0h5v1h-5zm6 0h24v1h-24zm25 0h1v1h-1zm2 0h35v1h-35zm36 0h16v1h-16zm17 0h49v1h-49zm50 0h21v1h-21zm22 0h5v1h-5zm6 0h1v1h-1zm2 0h2v1h-2zm4 0h19v1h-19zm20 0h1v1h-1zm2 0h16v1h-16zm17 0h1v1h-1zm2 0h16v1h-16zm17 0h2v1h-2zm40 0h1v1h-1zm8 0h1v1h-1zm22 0h1v1h-1zm24 0h11v1h-11zm12 0h27v1h-27zm32 0h1v1h-1zm43 0h1v1h-1zm61 0h17v1h-17zm18 0h2v1h-2zm3 0h16v1h-16zm20 0h10v1h-10zm12 0h6v1h-6zm7 0h7v1h-7zm8 0h4v1h-4zm5 0h4v1h-4zm5 0h3v1h-3zm6 0h1v1h-1zm2 0h4v1h-4zm5 0h7v1h-7zm70 0h1v1h-1zm108 0h1v1h-1zm-767 1h2v1h-2zm3 0h3v1h-3zm4 0h9v1h-9zm10 0h7v1h-7zm11 0h9v1h-9zm10 0h6v1h-6zm7 0h6v1h-6zm7 0h4v2h-4zm5 0h12v1h-12zm13 0h26v1h-26zm27 0h4v1h-4zm5 0h18v1h-18zm19 0h2v1h-2zm3 0h6v1h-6zm7 0h13v1h-13zm14 0h25v1h-25zm26 0h2v1h-2zm3 0h3v1h-3zm4 0h3v1h-3zm4 0h36v1h-36zm37 0h7v1h-7zm8 0h27v1h-27zm53 0h1v1h-1zm26 0h2v1h-2zm30 0h1v1h-1zm19 0h15v1h-15zm16 0h13v1h-13zm39 0h1v1h-1zm23 0h1v1h-1zm68 0h12v1h-12zm13 0h6v1h-6zm7 0h14v1h-14zm18 0h4v1h-4zm5 0h5v1h-5zm8 0h3v1h-3zm4 0h16v1h-16zm17 0h14v1h-14zm15 0h3v1h-3zm12 0h1v1h-1zm28 0h2v1h-2zm4 0h1v1h-1zm183 0h1v1h-1zm-856 1h1v1h-1zm43 0h9v1h-9zm10 0h8v1h-8zm9 0h7v1h-7zm8 0h5v1h-5zm6 0h2v1h-2zm3 0h13v1h-13zm19 0h16v1h-16zm17 0h20v1h-20zm21 0h25v1h-25zm27 0h22v1h-22zm23 0h40v1h-40zm41 0h5v1h-5zm6 0h2v1h-2zm3 0h8v1h-8zm9 0h3v1h-3zm4 0h3v1h-3zm4 0h5v1h-5zm6 0h33v1h-33zm70 0h1v1h-1zm37 0h1v1h-1zm8 0h1v1h-1zm16 0h1v1h-1zm135 0h1v1h-1zm11 0h1v1h-1zm2 0h1v1h-1zm15 0h1v1h-1zm85 0h1v1h-1zm109 0h1v1h-1zm9 0h1v1h-1zm128 0h1v1h-1zm-825 1h1v1h-1zm218 0h1v1h-1zm10 0h1v1h-1zm27 0h1v1h-1zm228 0h1v1h-1zm58 0h1v1h-1zm3 0h1v1h-1zm5 0h1v1h-1zm14 0h1v2h-1zm23 0h1v1h-1zm130 0h1v1h-1zm62 0h1v1h-1zm33 0h1v1h-1zm-834 1h1v1h-1zm67 0h1v1h-1zm147 0h1v1h-1zm11 0h1v1h-1zm15 0h1v1h-1zm6 0h1v1h-1zm17 0h1v1h-1zm8 0h1v1h-1zm9 0h1v1h-1zm38 0h1v1h-1zm13 0h1v1h-1zm68 0h1v1h-1zm272 0h1v1h-1zm9 0h1v1h-1zm54 0h1v1h-1zm15 0h1v1h-1zm12 0h1v1h-1zm22 0h1v1h-1zm-780 1h1v1h-1zm104 0h1v1h-1zm13 0h1v1h-1zm8 0h1v1h-1zm15 0h1v1h-1zm74 0h1v1h-1zm148 0h1v1h-1zm31 0h1v1h-1zm53 0h1v1h-1zm272 0h1v1h-1zm-710 1h1v1h-1zm2 0h1v1h-1zm17 0h1v1h-1zm40 0h1v2h-1zm22 0h1v1h-1zm29 0h1v1h-1zm45 0h1v1h-1zm62 0h1v1h-1zm19 0h1v1h-1zm-153 1h1v1h-1zm23 0h1v1h-1zm59 0h1v1h-1zm25 0h1v1h-1zm158 0h1v1h-1zm-293 1h1v1h-1zm9 0h1v1h-1zm45 0h1v1h-1zm27 0h1v1h-1zm142 0h1v1h-1zm-170 1h1v1h-1zm52 0h1v1h-1zm9 0h1v1h-1zm38 0h1v1h-1zm184 0h1v1h-1zm-384 1h1v1h-1zm324 3h1v1h-1zm152 2h1v1h-1zm-148 2h1v1h-1zm295 1h1v1h-1zm222 30h10v1h-10zm-10 1h20v1h-20zm-590 1h61v1h-61zm579 0h31v1h-31zm-892 1h860v3h-860zm882 0h41v1h-41zm-11 1h52v1h-52zm-10 1h62v1h-62zm-861 1h923v1h-923zm0 1h920v1h-920zm0 1h911v1h-911zm0 1h902v1h-902zm0 1h313v1h-313zm374 0h519v1h-519zm486 1h25v1h-25zm0 1h16v1h-16zm0 1h7v1h-7zm-580 42h1v1h-1zm3 1h1v1h-1zm-153 1h1v1h-1zm152 2h1v1h-1zm-149 1h1v1h-1zm120 0h1v1h-1zm361 1h1v1h-1zm-340 1h1v1h-1zm-144 1h1v1h-1zm504 0h1v1h-1zm-477 1h1v1h-1zm134 0h1v1h-1zm346 0h1v1h-1zm-351 1h1v1h-1zm-9 1h1v1h-1zm294 0h1v1h-1zm52 0h1v1h-1zm12 0h2v1h-2zm-478 1h1v1h-1zm13 0h1v1h-1zm100 0h1v1h-1zm401 0h1v1h-1zm-542 1h1v1h-1zm6 0h1v1h-1zm198 0h1v1h-1zm315 0h1v1h-1zm13 0h1v1h-1zm-563 1h1v1h-1zm7 0h1v2h-1zm18 1h1v1h-1zm61 0h1v1h-1zm108 0h1v1h-1zm279 0h1v1h-1zm-414 1h1v1h-1zm88 0h1v1h-1zm416 0h1v1h-1zm-563 1h1v1h-1zm27 0h1v1h-1zm8 0h1v1h-1zm120 0h1v1h-1zm45 1h1v1h-1zm11 0h1v1h-1zm260 0h1v1h-1zm124 0h1v1h-1zm-554 1h1v1h-1zm18 0h1v1h-1zm-32 1h1v2h-1zm22 0h1v1h-1zm128 0h1v1h-1zm317 0h1v1h-1zm95 0h1v1h-1zm-530 1h1v1h-1zm74 0h1v2h-1zm34 0h1v2h-1zm335 0h1v1h-1zm82 0h1v1h-1zm-639 1h1v1h-1zm108 0h1v1h-1zm9 0h1v1h-1zm28 0h1v1h-1zm74 0h1v1h-1zm18 0h1v1h-1zm2 0h1v1h-1zm132 0h1v1h-1zm120 0h1v1h-1zm75 0h1v1h-1zm68 0h1v1h-1zm-601 1h1v1h-1zm12 0h1v1h-1zm34 0h1v2h-1zm4 0h1v1h-1zm9 0h1v1h-1zm20 0h1v1h-1zm3 0h1v1h-1zm126 0h1v1h-1zm275 0h1v1h-1zm10 0h1v1h-1zm43 0h1v1h-1zm63 0h1v1h-1zm-551 1h1v1h-1zm139 0h1v1h-1zm7 0h1v1h-1zm24 0h2v2h-2zm185 0h1v1h-1zm67 0h1v1h-1zm101 0h1v1h-1zm40 0h1v1h-1zm-673 1h1v1h-1zm9 0h1v1h-1zm53 0h1v1h-1zm81 0h1v1h-1zm120 0h1v1h-1zm7 0h1v1h-1zm4 0h2v1h-2zm11 0h1v1h-1zm18 0h1v1h-1zm252 0h1v1h-1zm97 0h1v1h-1zm-633 1h1v1h-1zm95 0h1v1h-1zm8 0h1v1h-1zm334 0h1v1h-1zm144 0h1v2h-1zm47 0h1v1h-1zm27 0h1v1h-1zm-615 1h1v1h-1zm75 0h1v1h-1zm18 0h1v1h-1zm133 0h1v1h-1zm52 0h1v1h-1zm19 0h1v1h-1zm92 0h1v1h-1zm107 0h1v1h-1zm68 0h1v1h-1zm14 0h1v1h-1zm-513 1h1v1h-1zm46 0h1v1h-1zm81 0h1v1h-1zm3 0h1v1h-1zm37 0h1v1h-1zm274 0h1v1h-1zm33 0h2v1h-2zm3 0h1v1h-1zm-545 1h1v1h-1zm64 0h1v1h-1zm116 0h1v1h-1zm27 0h1v1h-1zm27 0h1v1h-1zm72 0h1v1h-1zm72 0h1v1h-1zm103 0h1v1h-1zm14 0h1v1h-1zm6 0h1v1h-1zm41 0h1v1h-1zm2 0h1v1h-1zm16 0h1v1h-1zm31 0h1v1h-1zm3 0h1v1h-1zm24 0h1v1h-1zm-572 1h1v1h-1zm33 0h1v1h-1zm8 0h1v1h-1zm388 0h1v1h-1zm13 0h1v1h-1zm21 0h1v1h-1zm23 0h1v1h-1zm-504 1h1v1h-1zm4 0h1v1h-1zm23 0h1v1h-1zm8 0h2v1h-2zm5 0h1v1h-1zm38 0h1v1h-1zm100 0h1v1h-1zm5 0h1v1h-1zm326 0h1v1h-1zm69 0h1v1h-1zm-660 1h1v1h-1zm7 0h1v1h-1zm82 0h1v1h-1zm12 0h1v1h-1zm7 0h1v1h-1zm5 0h2v1h-2zm37 0h1v1h-1zm24 0h1v1h-1zm87 0h1v1h-1zm268 0h1v1h-1zm3 0h1v1h-1zm44 0h1v1h-1zm-462 1h1v1h-1zm4 0h1v1h-1zm140 0h1v1h-1zm20 0h1v1h-1zm9 0h1v1h-1zm45 0h1v1h-1zm7 0h1v1h-1zm83 0h1v1h-1zm34 0h1v1h-1zm61 0h1v1h-1zm18 0h1v1h-1zm58 0h1v1h-1zm20 0h1v1h-1zm14 0h1v1h-1zm-621 1h1v1h-1zm37 0h1v1h-1zm79 0h1v1h-1zm9 0h1v1h-1zm23 0h1v1h-1zm48 0h1v1h-1zm46 0h1v1h-1zm11 0h1v1h-1zm24 0h1v1h-1zm61 0h1v1h-1zm2 0h1v1h-1zm32 0h1v1h-1zm208 0h1v1h-1zm10 0h1v1h-1zm-564 1h1v1h-1zm25 0h1v1h-1zm10 0h1v1h-1zm19 0h1v1h-1zm8 0h1v1h-1zm14 0h1v1h-1zm31 0h1v1h-1zm10 0h1v1h-1zm24 0h1v1h-1zm30 0h1v1h-1zm17 0h1v1h-1zm59 0h1v1h-1zm97 0h1v1h-1zm41 0h1v1h-1zm132 0h1v1h-1zm33 0h1v1h-1zm9 0h1v1h-1zm44 0h1v1h-1zm19 0h1v1h-1zm21 0h1v1h-1zm13 0h1v1h-1zm166 0h1v1h-1zm-781 1h1v1h-1zm4 0h1v1h-1zm32 0h1v1h-1zm3 0h1v1h-1zm5 0h1v1h-1zm7 0h1v1h-1zm124 0h2v1h-2zm19 0h2v1h-2zm59 0h1v1h-1zm120 0h1v1h-1zm6 0h1v1h-1zm83 0h1v1h-1zm7 0h1v1h-1zm11 0h1v1h-1zm18 0h1v1h-1zm28 0h1v1h-1zm2 0h1v1h-1zm65 0h1v1h-1zm171 0h1v1h-1zm-755 1h1v1h-1zm22 0h1v1h-1zm2 0h1v1h-1zm62 0h1v1h-1zm3 0h1v1h-1zm11 0h1v1h-1zm3 0h1v1h-1zm44 0h1v1h-1zm38 0h1v2h-1zm8 0h1v1h-1zm39 0h1v1h-1zm76 0h1v1h-1zm43 0h1v1h-1zm71 0h1v1h-1zm25 0h1v1h-1zm106 0h1v1h-1zm37 0h2v2h-2zm-647 1h1v1h-1zm14 0h1v1h-1zm53 0h1v1h-1zm6 0h1v1h-1zm27 0h1v1h-1zm45 0h1v1h-1zm27 0h1v1h-1zm90 0h1v1h-1zm23 0h1v1h-1zm65 0h1v1h-1zm142 0h1v1h-1zm32 0h1v1h-1zm44 0h1v2h-1zm4 0h1v1h-1zm2 0h1v1h-1zm60 0h1v1h-1zm7 0h1v1h-1zm92 0h1v1h-1zm-760 1h1v1h-1zm84 0h1v1h-1zm12 0h1v1h-1zm14 0h1v2h-1zm6 0h1v1h-1zm3 0h1v1h-1zm52 0h1v1h-1zm73 0h1v1h-1zm17 0h1v1h-1zm11 0h1v1h-1zm8 0h1v1h-1zm54 0h1v1h-1zm44 0h1v1h-1zm46 0h1v1h-1zm164 0h1v1h-1zm34 0h1v1h-1zm7 0h1v1h-1zm15 0h1v2h-1zm44 0h1v1h-1zm4 0h1v1h-1zm70 0h1v1h-1zm-704 1h1v1h-1zm33 0h1v1h-1zm24 0h1v1h-1zm23 0h1v1h-1zm13 0h1v1h-1zm52 0h1v2h-1zm61 0h1v1h-1zm5 0h1v1h-1zm15 0h1v1h-1zm273 0h1v1h-1zm5 0h1v1h-1zm11 0h1v1h-1zm28 0h1v1h-1zm22 0h1v1h-1zm9 0h1v1h-1zm5 0h1v1h-1zm28 0h1v1h-1zm3 0h1v1h-1zm135 0h1v1h-1zm37 0h1v1h-1zm11 0h1v1h-1zm-794 1h2v1h-2zm51 0h4v1h-4zm143 0h1v1h-1zm36 0h1v1h-1zm75 0h1v1h-1zm21 0h1v1h-1zm11 0h1v1h-1zm6 0h1v1h-1zm14 0h1v1h-1zm34 0h1v1h-1zm89 0h2v1h-2zm7 0h1v1h-1zm72 0h1v1h-1zm-622 1h1v1h-1zm97 0h1v2h-1zm5 0h1v1h-1zm47 0h1v1h-1zm27 0h1v1h-1zm80 0h2v1h-2zm4 0h1v1h-1zm6 0h2v1h-2zm9 0h1v1h-1zm3 0h1v1h-1zm6 0h1v1h-1zm7 0h1v1h-1zm4 0h2v1h-2zm20 0h1v1h-1zm284 0h1v1h-1zm4 0h1v1h-1zm9 0h2v1h-2zm26 0h1v1h-1zm20 0h1v1h-1zm12 0h1v1h-1zm35 0h1v1h-1zm-713 1h1v1h-1zm62 0h1v1h-1zm10 0h1v1h-1zm26 0h2v1h-2zm26 0h1v1h-1zm46 0h1v1h-1zm48 0h1v2h-1zm39 0h2v1h-2zm14 0h1v1h-1zm10 0h1v1h-1zm3 0h1v1h-1zm19 0h1v1h-1zm160 0h1v2h-1zm41 0h1v1h-1zm46 0h2v1h-2zm19 0h1v1h-1zm7 0h1v1h-1zm36 0h1v1h-1zm23 0h1v1h-1zm17 0h1v1h-1zm4 0h1v1h-1zm5 0h1v1h-1zm137 0h1v1h-1zm-749 1h1v1h-1zm21 0h1v1h-1zm24 0h1v1h-1zm31 0h1v3h-1zm13 0h1v2h-1zm2 0h1v1h-1zm7 0h1v1h-1zm38 0h1v1h-1zm30 0h1v1h-1zm19 0h1v1h-1zm35 0h1v1h-1zm101 0h1v1h-1zm22 0h1v1h-1zm67 0h1v1h-1zm28 0h1v1h-1zm2 0h1v1h-1zm4 0h1v1h-1zm94 0h1v1h-1zm28 0h1v1h-1zm4 0h1v1h-1zm40 0h1v1h-1zm17 0h1v1h-1zm6 0h1v1h-1zm8 0h1v1h-1zm121 0h1v1h-1zm9 0h1v1h-1zm-782 1h1v1h-1zm17 0h2v1h-2zm8 0h1v2h-1zm9 0h1v1h-1zm4 0h1v1h-1zm29 0h1v1h-1zm23 0h1v1h-1zm34 0h1v1h-1zm4 0h1v2h-1zm6 0h1v1h-1zm12 0h1v1h-1zm2 0h1v1h-1zm18 0h1v1h-1zm13 0h2v1h-2zm48 0h1v1h-1zm6 0h1v1h-1zm6 0h1v1h-1zm6 0h1v1h-1zm6 0h1v1h-1zm2 0h1v1h-1zm35 0h1v1h-1zm5 0h1v1h-1zm77 0h1v1h-1zm16 0h1v2h-1zm50 0h1v1h-1zm77 0h2v1h-2zm29 0h1v1h-1zm20 0h1v1h-1zm9 0h1v1h-1zm3 0h1v1h-1zm9 0h1v1h-1zm10 0h1v1h-1zm48 0h1v2h-1zm10 0h1v1h-1zm49 0h1v1h-1zm128 0h1v2h-1zm-783 1h1v1h-1zm38 0h1v1h-1zm12 0h1v1h-1zm4 0h1v1h-1zm2 0h1v1h-1zm4 0h1v2h-1zm27 0h3v1h-3zm94 0h1v1h-1zm140 0h1v1h-1zm48 0h1v1h-1zm11 0h1v1h-1zm73 0h1v1h-1zm5 0h1v1h-1zm7 0h1v1h-1zm4 0h1v1h-1zm61 0h1v1h-1zm30 0h1v1h-1zm17 0h1v1h-1zm6 0h1v2h-1zm54 0h1v1h-1zm55 0h1v1h-1zm-770 1h1v1h-1zm31 0h1v1h-1zm90 0h1v1h-1zm4 0h1v1h-1zm23 0h1v1h-1zm7 0h1v1h-1zm24 0h1v1h-1zm35 0h1v1h-1zm3 0h1v1h-1zm42 0h2v1h-2zm11 0h1v1h-1zm2 0h1v1h-1zm4 0h1v1h-1zm15 0h1v1h-1zm85 0h1v1h-1zm14 0h1v1h-1zm40 0h1v1h-1zm4 0h1v1h-1zm3 0h1v1h-1zm32 0h1v1h-1zm60 0h1v1h-1zm23 0h1v1h-1zm12 0h1v1h-1zm18 0h1v1h-1zm5 0h1v1h-1zm8 0h1v1h-1zm9 0h1v1h-1zm2 0h3v1h-3zm23 0h1v1h-1zm43 0h1v1h-1zm20 0h1v1h-1zm129 0h1v1h-1zm66 0h1v1h-1zm157 175h12v1h-12zm13 0h1v1h-1zm2 0h8v1h-8zm9 0h3v1h-3zm5 0h1v1h-1zm-29 1h23v1h-23zm26 0h1v3h-1zm-26 1h12v1h-12zm14 0h10v1h-10zm15 0h1v1h-1zm-29 1h13v1h-13zm14 0h9v1h-9zm14 0h1v1h-1zm-28 1h25v1h-25zm27 0h2v1h-2zm3 0h1v1h-1zm-30 1h12v1h-12zm13 0h1v1h-1zm2 0h8v1h-8zm10 0h1v1h-1zm2 0h4v1h-4zm-155 49h2v1h-2zm-4 1h4v1h-4zm-4 1h4v1h-4zm-3 1h3v1h-3zm-4 1h4v1h-4zm-4 1h4v1h-4zm-3 1h3v1h-3zm-4 1h4v1h-4zm-582 1h61v1h-61zm578 0h4v1h-4zm-891 1h271v1h-271zm272 0h41v1h-41zm102 0h517v1h-517zm-59 23h2v1h-2zm8 0h2v2h-2zm12 0h1v1h-1zm8 0h1v1h-1zm7 0h1v2h-1zm2 0h1v1h-1zm7 0h1v1h-1zm4 0h2v1h-2zm5 0h1v1h-1zm2 0h1v1h-1zm2 0h2v1h-2zm-372 1h1v1h-1zm8 0h1v1h-1zm44 0h111v2h-111zm117 0h49v2h-49zm50 0h3v2h-3zm4 0h1v2h-1zm4 0h1v1h-1zm7 0h1v1h-1zm14 0h1v3h-1zm5 0h58v1h-58zm62 0h4v1h-4zm13 0h1v1h-1zm5 0h1v1h-1zm2 0h2v1h-2zm8 0h2v2h-2zm13 0h1v1h-1zm2 0h3v1h-3zm5 0h3v1h-3zm4 0h1v1h-1zm2 0h5v1h-5zm9 0h1v1h-1zm2 0h3v1h-3zm5 0h1v1h-1zm2 0h1v1h-1zm3 0h2v1h-2zm3 0h4v1h-4zm5 0h45v1h-45zm48 0h3v1h-3zm5 0h1v1h-1zm100 0h95v1h-95zm96 0h3v1h-3zm-647 1h3v2h-3zm4 0h1v1h-1zm4 0h2v2h-2zm35 0h2v1h-2zm121 0h2v1h-2zm61 0h1v1h-1zm2 0h2v1h-2zm7 0h2v1h-2zm8 0h1v1h-1zm4 0h1v1h-1zm5 0h61v1h-61zm62 0h4v1h-4zm5 0h2v1h-2zm4 0h4v1h-4zm5 0h1v1h-1zm2 0h2v1h-2zm3 0h4v1h-4zm16 0h5v1h-5zm6 0h3v1h-3zm4 0h2v1h-2zm4 0h5v1h-5zm6 0h8v1h-8zm9 0h6v1h-6zm7 0h3v1h-3zm4 0h8v1h-8zm9 0h52v1h-52zm54 0h2v1h-2zm19 0h1v1h-1zm78 0h102v1h-102zm-536 1h2v2h-2zm7 0h1v1h-1zm24 0h1v1h-1zm6 0h1v1h-1zm3 0h114v1h-114zm116 0h54v1h-54zm55 0h8v1h-8zm11 0h3v1h-3zm7 0h6v1h-6zm10 0h75v1h-75zm77 0h4v1h-4zm5 0h5v1h-5zm9 0h5v1h-5zm6 0h9v1h-9zm10 0h3v1h-3zm4 0h14v1h-14zm15 0h72v1h-72zm73 0h3v1h-3zm20 0h2v1h-2zm6 0h1v1h-1zm71 0h3v1h-3zm4 0h100v1h-100zm-551 1h5v1h-5zm8 0h3v1h-3zm20 0h2v1h-2zm7 0h2v2h-2zm7 0h3v1h-3zm4 0h1v1h-1zm2 0h120v1h-120zm121 0h55v1h-55zm56 0h1v1h-1zm2 0h11v1h-11zm15 0h1v1h-1zm2 0h3v1h-3zm4 0h2v1h-2zm3 0h80v1h-80zm81 0h5v1h-5zm6 0h2v1h-2zm3 0h4v1h-4zm5 0h15v1h-15zm16 0h91v1h-91zm94 0h2v2h-2zm13 0h3v1h-3zm7 0h2v1h-2zm38 0h1v3h-1zm26 0h1v2h-1zm6 0h105v2h-105zm-546 1h3v1h-3zm4 0h2v1h-2zm4 0h2v1h-2zm3 0h3v1h-3zm8 0h1v1h-1zm9 0h1v1h-1zm2 0h1v1h-1zm8 0h3v1h-3zm4 0h196v1h-196zm197 0h10v1h-10zm11 0h199v1h-199zm200 0h4v1h-4zm13 0h1v1h-1zm2 0h1v1h-1zm4 0h5v1h-5zm6 0h3v1h-3zm67 0h1v1h-1zm377 0h1v2h-1zm-919 1h6v1h-6zm8 0h3v1h-3zm4 0h4v1h-4zm7 0h2v1h-2zm9 0h3v1h-3zm6 0h7v1h-7zm8 0h271v1h-271zm298 0h1v1h-1zm34 0h86v1h-86zm87 0h7v1h-7zm8 0h10v1h-10zm15 0h1v1h-1zm56 0h2v1h-2zm4 0h108v1h-108zm109 0h1v1h-1zm250 0h1v1h-1zm10 0h3v1h-3zm-907 1h2v2h-2zm8 0h2v1h-2zm4 0h1v1h-1zm2 0h1v1h-1zm11 0h2v1h-2zm10 0h1v2h-1zm413 0h1v1h-1zm6 0h3v1h-3zm6 0h2v1h-2zm12 0h1v1h-1zm2 0h1v1h-1zm2 0h2v1h-2zm3 0h1v1h-1zm10 0h1v1h-1zm20 0h1v2h-1zm4 0h1v2h-1zm13 0h2v1h-2zm11 0h1v1h-1zm2 0h1v1h-1zm106 0h2v1h-2zm264 0h5v1h-5zm-899 1h3v1h-3zm7 0h1v1h-1zm3 0h2v2h-2zm5 0h3v1h-3zm437 0h1v1h-1zm11 0h4v1h-4zm6 0h2v1h-2zm3 0h1v1h-1zm6 0h3v1h-3zm9 0h1v1h-1zm5 0h1v1h-1zm19 0h2v2h-2zm3 0h5v1h-5zm124 0h1v1h-1zm245 0h1v1h-1zm3 0h2v2h-2zm3 0h1v1h-1zm2 0h2v1h-2zm3 0h3v1h-3zm5 0h3v1h-3zm7 0h1v1h-1zm-906 1h1v1h-1zm6 0h3v1h-3zm457 0h1v1h-1zm2 0h1v1h-1zm5 0h5v1h-5zm6 0h3v1h-3zm4 0h1v1h-1zm6 0h2v1h-2zm5 0h3v1h-3zm13 0h1v1h-1zm4 0h2v1h-2zm6 0h2v1h-2zm4 0h6v1h-6zm120 0h2v1h-2zm5 0h5v1h-5zm12 0h1v1h-1zm4 0h1v1h-1zm2 0h1v1h-1zm181 0h1v1h-1zm5 0h2v1h-2zm6 0h1v1h-1zm3 0h1v1h-1zm3 0h1v1h-1zm3 0h1v1h-1zm5 0h1v1h-1zm2 0h1v1h-1zm4 0h1v1h-1zm4 0h3v1h-3zm5 0h3v1h-3zm10 0h4v1h-4zm-887 1h2v1h-2zm4 0h1v1h-1zm155 0h1v1h-1zm309 0h5v1h-5zm8 0h1v1h-1zm4 0h2v1h-2zm3 0h2v2h-2zm3 0h1v1h-1zm2 0h2v1h-2zm7 0h1v1h-1zm2 0h1v1h-1zm2 0h2v1h-2zm4 0h3v1h-3zm11 0h4v1h-4zm120 0h4v1h-4zm5 0h1v1h-1zm2 0h2v1h-2zm3 0h2v1h-2zm3 0h1v2h-1zm2 0h2v1h-2zm4 0h2v1h-2zm3 0h2v1h-2zm3 0h2v1h-2zm3 0h1v1h-1zm4 0h2v1h-2zm5 0h5v1h-5zm8 0h1v1h-1zm46 0h1v2h-1zm8 0h1v2h-1zm19 0h1v1h-1zm85 0h2v1h-2zm4 0h3v1h-3zm4 0h1v1h-1zm4 0h2v1h-2zm7 0h4v1h-4zm5 0h2v1h-2zm4 0h1v1h-1zm2 0h3v1h-3zm4 0h6v1h-6zm8 0h2v1h-2zm-409 1h1v1h-1zm6 0h2v1h-2zm3 0h2v1h-2zm10 0h3v1h-3zm6 0h3v1h-3zm5 0h1v1h-1zm2 0h1v1h-1zm6 0h1v1h-1zm135 0h1v1h-1zm2 0h1v1h-1zm7 0h1v2h-1zm3 0h1v1h-1zm5 0h3v1h-3zm6 0h3v1h-3zm4 0h3v1h-3zm6 0h5v1h-5zm6 0h3v1h-3zm4 0h3v1h-3zm50 0h1v1h-1zm17 0h1v1h-1zm13 0h1v1h-1zm6 0h1v1h-1zm3 0h1v1h-1zm8 0h2v1h-2zm15 0h1v1h-1zm6 0h1v1h-1zm4 0h1v1h-1zm17 0h1v1h-1zm7 0h1v1h-1zm6 0h1v1h-1zm2 0h1v1h-1zm4 0h7v1h-7zm8 0h1v1h-1zm5 0h1v2h-1zm3 0h2v1h-2zm3 0h1v2h-1zm2 0h2v1h-2zm5 0h1v1h-1zm5 0h2v1h-2zm5 0h1v1h-1zm-402 1h2v1h-2zm7 0h1v1h-1zm5 0h3v1h-3zm6 0h1v1h-1zm5 0h2v1h-2zm145 0h1v1h-1zm15 0h1v1h-1zm3 0h1v1h-1zm5 0h2v1h-2zm11 0h3v1h-3zm4 0h2v1h-2zm3 0h6v1h-6zm138 0h2v1h-2zm5 0h1v2h-1zm2 0h2v1h-2zm4 0h1v2h-1zm9 0h2v1h-2zm8 0h1v1h-1zm13 0h1v1h-1zm-388 1h1v1h-1zm14 0h1v1h-1zm9 0h1v1h-1zm190 0h3v1h-3zm10 0h1v2h-1zm7 0h1v2h-1zm10 0h1v2h-1zm108 0h1v1h-1zm7 0h1v1h-1zm11 0h1v2h-1zm-151 1h1v1h-1zm134 0h2v1h-2zm-133 1h1v2h-1zm6 0h1v1h-1zm9 0h1v2h-1zm8 0h1v2h-1zm110 0h1v1h-1zm-127 1h2v1h-2zm22 0h1v1h-1zm2 0h1v2h-1zm-29 1h1v2h-1zm4 0h1v2h-1zm3 0h2v1h-2zm8 0h1v2h-1zm6 0h1v2h-1zm4 0h3v1h-3zm7 0h1v1h-1zm3 0h1v1h-1zm7 0h1v1h-1zm-33 1h2v1h-2zm14 0h3v1h-3zm5 0h1v1h-1zm2 0h7v1h-7zm8 0h1v1h-1zm3 0h3v1h-3zm10 0h1v1h-1zm-50 1h1v2h-1zm2 0h1v2h-1zm9 0h1v1h-1zm3 0h2v1h-2zm5 0h2v1h-2zm3 0h1v1h-1zm8 0h1v1h-1zm3 0h1v1h-1zm3 0h2v1h-2zm3 0h2v1h-2zm3 0h3v1h-3zm4 0h2v1h-2zm3 0h3v1h-3zm6 0h1v1h-1zm-93 1h1v1h-1zm48 0h2v1h-2zm3 0h3v1h-3zm6 0h1v1h-1zm19 0h2v1h-2zm6 0h4v1h-4zm5 0h1v1h-1zm2 0h5v1h-5zm14 0h1v1h-1zm60 0h2v1h-2zm-124 1h1v2h-1zm11 0h1v1h-1zm4 0h1v2h-1zm2 0h1v2h-1zm30 0h1v1h-1zm4 0h1v1h-1zm4 0h1v1h-1zm2 0h3v1h-3zm5 0h4v1h-4zm8 0h1v1h-1zm54 0h4v1h-4zm-68 1h2v1h-2zm4 0h4v1h-4zm5 0h1v1h-1zm2 0h1v1h-1zm3 0h2v1h-2zm52 0h2v1h-2zm-106 1h1v2h-1zm45 0h1v1h-1zm5 0h4v1h-4zm5 0h1v1h-1zm45 0h1v1h-1zm2 0h2v1h-2zm4 0h1v1h-1zm-50 1h1v1h-1zm2 0h1v1h-1zm5 0h1v1h-1zm37 0h6v1h-6zm-43 1h4v1h-4zm6 0h2v1h-2zm3 0h2v1h-2zm4 0h1v1h-1zm6 0h4v1h-4zm13 0h2v1h-2zm3 0h1v1h-1zm4 0h2v1h-2zm3 0h1v1h-1zm-39 1h3v1h-3zm4 0h1v1h-1zm3 0h1v1h-1zm2 0h6v1h-6zm7 0h7v1h-7zm10 0h2v1h-2zm3 0h11v1h-11zm-24 1h1v1h-1zm3 0h1v2h-1zm6 0h2v1h-2zm6 0h3v1h-3zm6 0h3v1h-3zm8 0h2v1h-2zm-11 1h3v1h-3zm74 0h1v1h-1zm-227 3h1v1h-1zm-609 1h1v1h-1zm827 1h1v1h-1zm8 4h1v1h-1zm2 3h1v1h-1zm20 3h1v1h-1zm-665 5h1v1h-1zm247 1h1v1h-1zm406 1h1v1h-1zm-62 2h1v1h-1zm64 0h1v1h-1zm4 0h1v1h-1zm-145 1h1v1h-1zm143 7h1v1h-1zm-575 1h1v1h-1zm567 0h1v1h-1zm-474 1h1v1h-1zm86 0h1v1h-1zm396 5h1v1h-1zm-883 1h1v1h-1zm210 1h1v1h-1zm661 1h1v2h-1zm14 2h1v1h-1zm1 2h1v1h-1zm3 0h1v1h-1zm-728 3h1v1h-1zm409 4h1v1h-1zm280 6h1v1h-1zm19 6h1v1h-1zm-250 2h1v1h-1zm-70 6h1v1h-1zm-437 1h1v1h-1zm760 11h1v1h-1zm9 2h1v1h-1zm6 1h1v1h-1zm-13 4h1v1h-1zm-684 4h1v1h-1zm530 2h1v1h-1zm56 0h1v1h-1zm-570 9h1v1h-1z"/>
<path fill="#0070cc" d="M0 0m1095 75h5v1h-5zm0 1h1v1h-1zm3 0h2v1h-2zm-3 1h4v1h-4zm0 1h3v1h-3zm4 0h1v1h-1zm-4 1h1v1h-1zm2 0h3v1h-3zm-2 1h5v3h-5zm6 0h6v9h-6zm-5 3h4v1h-4zm-1 1h1v1h-1zm2 0h3v1h-3zm-2 1h5v2h-5zm0 2h2v1h-2zm3 0h2v1h-2zm3 2h5v1h-5zm1 1h5v1h-5zm-1 1h6v1h-6zm17 43h8v4h-8zm-151 56h2v1h-2zm-4 1h6v1h-6zm-3 1h1v1h-1zm2 0h5v1h-5zm-6 1h5v1h-5zm6 0h1v1h-1zm-10 1h4v1h-4zm5 0h2v1h-2zm-8 1h7v1h-7zm-4 1h7v1h-7zm-4 1h3v1h-3zm4 0h3v1h-3zm-585 1h11v1h-11zm12 0h34v1h-34zm35 0h13v1h-13zm530 0h8v1h-8zm22 0h1v1h-1zm-913 1h9v1h-9zm10 0h4v1h-4zm5 0h29v1h-29zm30 0h8v1h-8zm268 0h38v1h-38zm39 0h7v1h-7zm8 0h21v1h-21zm22 0h4v1h-4zm5 0h11v1h-11zm12 0h6v1h-6zm45 0h5v1h-5zm6 0h1v1h-1zm2 0h4v1h-4zm5 0h11v1h-11zm12 0h23v1h-23zm24 0h10v1h-10zm11 0h29v1h-29zm30 0h2v1h-2zm3 0h16v1h-16zm118 0h3v1h-3zm4 0h4v2h-4zm5 0h4v2h-4zm5 0h5v1h-5zm6 0h3v1h-3zm4 0h6v1h-6zm7 0h28v1h-28zm29 0h3v1h-3zm4 0h16v1h-16zm18 0h1v1h-1zm2 0h43v1h-43zm44 0h2v1h-2zm3 0h29v1h-29zm30 0h6v1h-6zm7 0h13v1h-13zm14 0h12v1h-12zm13 0h34v1h-34zm35 0h10v1h-10zm-884 1h7v1h-7zm8 0h29v1h-29zm30 0h7v1h-7zm8 0h7v1h-7zm262 0h1v1h-1zm2 0h3v1h-3zm16 0h1v1h-1zm28 0h1v1h-1zm19 0h17v1h-17zm18 0h7v1h-7zm8 0h3v1h-3zm4 0h4v1h-4zm5 0h1v1h-1zm30 0h1v1h-1zm2 0h24v1h-24zm25 0h9v1h-9zm10 0h11v1h-11zm13 0h10v1h-10zm11 0h4v1h-4zm5 0h6v1h-6zm7 0h2v1h-2zm3 0h4v1h-4zm5 0h9v1h-9zm11 0h5v1h-5zm6 0h19v1h-19zm109 0h5v1h-5zm6 0h2v1h-2zm4 0h2v1h-2zm13 0h9v1h-9zm10 0h1v1h-1zm2 0h2v1h-2zm5 0h1v1h-1zm2 0h2v1h-2zm8 0h29v1h-29zm30 0h8v1h-8zm9 0h29v1h-29zm30 0h4v1h-4zm5 0h24v1h-24zm25 0h17v1h-17zm18 0h11v1h-11zm12 0h13v1h-13zm14 0h1v1h-1zm2 0h16v1h-16zm17 0h2v1h-2zm3 0h9v1h-9zm10 0h10v1h-10zm11 0h2v1h-2zm4 0h5v1h-5zm-833 1h3v1h-3zm253 0h7v1h-7zm28 0h1v1h-1zm71 0h15v1h-15zm16 0h6v1h-6zm7 0h16v1h-16zm73 0h1v1h-1zm52 0h12v1h-12zm13 0h1v1h-1zm4 0h3v1h-3zm4 0h16v1h-16zm21 0h6v1h-6zm7 0h1v2h-1zm4 0h11v1h-11zm12 0h24v1h-24zm25 0h1v1h-1zm2 0h6v1h-6zm8 0h1v1h-1zm20 0h1v1h-1zm15 0h1v1h-1zm16 0h1v1h-1zm15 0h1v1h-1zm53 0h1v1h-1zm14 0h1v1h-1zm50 0h1v1h-1zm9 0h1v1h-1zm29 0h1v1h-1zm9 0h1v1h-1zm-852 1h1v1h-1zm3 0h1v1h-1zm21 0h16v1h-16zm17 0h1v1h-1zm2 0h12v1h-12zm13 0h18v1h-18zm19 0h42v1h-42zm43 0h7v1h-7zm8 0h2v1h-2zm3 0h2v1h-2zm3 0h3v1h-3zm4 0h11v1h-11zm12 0h7v1h-7zm8 0h46v1h-46zm47 0h39v1h-39zm40 0h14v1h-14zm15 0h1v1h-1zm3 0h8v1h-8zm10 0h2v1h-2zm3 0h6v1h-6zm93 0h1v1h-1zm11 0h31v1h-31zm106 0h1v1h-1zm30 0h1v1h-1zm12 0h10v1h-10zm14 0h6v1h-6zm10 0h1v1h-1zm2 0h2v1h-2zm4 0h2v1h-2zm9 0h1v1h-1zm2 0h1v1h-1zm8 0h2v1h-2zm3 0h2v1h-2zm3 0h2v1h-2zm3 0h2v1h-2zm3 0h2v1h-2zm3 0h1v1h-1zm2 0h5v1h-5zm6 0h7v1h-7zm8 0h1v1h-1zm2 0h9v1h-9zm98 0h1v1h-1zm4 0h1v1h-1zm7 0h1v1h-1zm27 0h1v1h-1zm5 0h1v1h-1zm99 0h1v1h-1zm8 0h1v1h-1zm6 0h1v1h-1zm-836 1h2v1h-2zm3 0h49v1h-49zm50 0h7v1h-7zm8 0h31v1h-31zm32 0h13v1h-13zm14 0h21v1h-21zm22 0h23v1h-23zm25 0h3v1h-3zm4 0h4v1h-4zm5 0h13v1h-13zm14 0h23v1h-23zm24 0h6v1h-6zm7 0h10v1h-10zm12 0h13v1h-13zm14 0h2v1h-2zm3 0h2v1h-2zm3 0h2v1h-2zm4 0h3v1h-3zm4 0h2v1h-2zm66 0h1v1h-1zm2 0h1v1h-1zm10 0h1v1h-1zm29 0h16v1h-16zm17 0h8v1h-8zm29 0h1v1h-1zm13 0h1v1h-1zm79 0h1v1h-1zm8 0h9v1h-9zm13 0h2v1h-2zm3 0h2v1h-2zm9 0h1v1h-1zm4 0h1v1h-1zm26 0h1v1h-1zm5 0h10v1h-10zm12 0h4v1h-4zm5 0h1v1h-1zm2 0h2v1h-2zm3 0h1v1h-1zm32 0h1v1h-1zm9 0h1v1h-1zm81 0h1v1h-1zm69 0h1v1h-1zm13 0h1v1h-1zm-786 1h1v1h-1zm9 0h1v1h-1zm107 0h1v1h-1zm85 0h1v1h-1zm24 0h1v1h-1zm78 0h1v1h-1zm8 0h1v1h-1zm355 0h1v1h-1zm66 0h1v1h-1zm34 0h1v2h-1zm49 0h1v1h-1zm-713 1h1v1h-1zm70 0h1v1h-1zm75 0h2v1h-2zm124 0h1v1h-1zm27 0h1v1h-1zm9 0h1v1h-1zm27 0h1v1h-1zm173 0h1v1h-1zm11 0h1v1h-1zm7 0h1v1h-1zm49 0h1v1h-1zm4 0h1v1h-1zm14 0h1v1h-1zm43 0h1v1h-1zm-665 1h1v1h-1zm96 0h1v1h-1zm428 0h1v1h-1zm-495 1h1v1h-1zm2 0h1v1h-1zm31 0h1v1h-1zm119 0h1v1h-1zm126 0h1v1h-1zm-334 1h1v1h-1zm96 0h1v1h-1zm25 0h1v1h-1zm91 0h1v1h-1zm52 1h1v1h-1zm43 0h1v1h-1zm-350 1h1v1h-1zm165 0h1v1h-1zm19 1h1v1h-1zm-174 1h1v1h-1zm423 1h1v1h-1zm20 1h1v1h-1zm173 4h1v1h-1zm236 36h3v1h-3zm-9 1h12v1h-12zm-9 1h21v1h-21zm-589 1h61v1h-61zm580 0h30v1h-30zm-893 1h860v3h-860zm885 0h38v1h-38zm-9 1h47v1h-47zm-9 1h56v1h-56zm-867 1h923v1h-923zm0 1h919v1h-919zm0 1h911v1h-911zm0 1h903v1h-903zm0 1h313v1h-313zm374 0h521v1h-521zm486 1h27v1h-27zm0 1h20v1h-20zm0 1h12v1h-12zm0 1h4v1h-4zm189 249h12v5h-12zm15 0h8v1h-8zm10 0h2v1h-2zm5 0h1v2h-1zm-17 1h1v1h-1zm2 0h9v1h-9zm10 0h1v1h-1zm-11 1h9v1h-9zm11 0h4v1h-4zm-12 1h1v1h-1zm2 0h4v1h-4zm5 0h3v1h-3zm4 0h1v1h-1zm3 0h1v2h-1zm3 0h1v2h-1zm-15 1h3v1h-3zm4 0h4v1h-4zm-19 1h14v1h-14zm15 0h8v1h-8zm9 0h2v1h-2zm3 0h2v1h-2zm-155 56h2v1h-2zm-4 1h4v1h-4zm-4 1h4v1h-4zm-3 1h3v1h-3zm-4 1h4v1h-4zm-4 1h4v1h-4zm-3 1h3v1h-3zm-4 1h4v1h-4zm-582 1h61v1h-61zm578 0h4v1h-4zm-891 1h271v1h-271zm272 0h41v1h-41zm102 0h517v1h-517zm435 6h1v1h-1zm-25 1h1v1h-1zm41 0h1v1h-1zm39 0h1v1h-1zm-130 1h1v1h-1zm132 0h1v1h-1zm-3 2h1v1h-1zm35 0h1v1h-1zm-61 1h1v1h-1zm84 0h1v1h-1zm-71 1h1v1h-1zm25 0h1v1h-1zm2 0h3v1h-3zm4 0h1v1h-1zm-64 1h1v1h-1zm-26 1h1v1h-1zm23 0h1v1h-1zm67 0h2v1h-2zm-165 1h1v1h-1zm9 0h1v2h-1zm158 0h1v1h-1zm-141 1h1v1h-1zm53 0h1v1h-1zm-47 4h1v1h-1zm64 0h1v1h-1zm-19 1h1v1h-1zm-480 7h27v1h-27zm28 0h33v1h-33zm-341 1h6v2h-6zm8 0h6v1h-6zm11 0h1v1h-1zm9 0h3v2h-3zm7 0h2v1h-2zm3 0h3v1h-3zm4 0h412v1h-412zm414 0h3v1h-3zm7 0h1v1h-1zm2 0h1v1h-1zm4 0h9v1h-9zm45 0h1v2h-1zm26 0h3v2h-3zm4 0h1v1h-1zm2 0h105v1h-105zm-538 1h8v1h-8zm11 0h2v1h-2zm15 0h7v1h-7zm8 0h426v1h-426zm427 0h10v1h-10zm15 0h1v1h-1zm60 0h110v1h-110zm369 0h2v1h-2zm5 0h4v1h-4zm-918 1h16v1h-16zm17 0h4v1h-4zm11 0h451v1h-451zm452 0h1v1h-1zm2 0h4v1h-4zm13 0h1v1h-1zm19 0h2v2h-2zm5 0h1v2h-1zm13 0h2v1h-2zm8 0h114v1h-114zm366 0h2v1h-2zm6 0h11v1h-11zm-912 1h21v1h-21zm23 0h2v1h-2zm3 0h154v1h-154zm155 0h132v1h-132zm193 0h115v1h-115zm120 0h3v1h-3zm9 0h1v1h-1zm5 0h1v1h-1zm19 0h2v1h-2zm3 0h5v1h-5zm10 0h115v1h-115zm345 0h1v1h-1zm13 0h2v1h-2zm4 0h7v1h-7zm8 0h13v1h-13z"/>
<path fill="#0090c4" d="M0 0m1110 60h3v1h-3zm2 1h1v1h-1zm-17 1h5v3h-5zm15 0h2v1h-2zm3 0h1v1h-1zm-3 2h4v1h-4zm-15 1h1v1h-1zm2 0h3v1h-3zm15 0h2v1h-2zm-17 1h5v6h-5zm15 0h3v1h-3zm1 1h2v1h-2zm-10 1h2v1h-2zm3 0h3v1h-3zm6 0h1v1h-1zm2 0h2v1h-2zm-11 1h6v6h-6zm9 0h2v1h-2zm3 0h1v1h-1zm-1 1h2v1h-2zm-1 1h3v1h-3zm-16 1h3v1h-3zm4 0h1v1h-1zm11 0h4v1h-4zm-15 1h2v1h-2zm3 0h2v1h-2zm12 0h2v1h-2zm3 0h1v1h-1zm-18 1h5v1h-5zm16 0h2v1h-2zm-10 1h5v1h-5zm9 0h1v1h-1zm2 0h2v1h-2zm-11 1h4v1h-4zm5 0h1v1h-1zm5 0h1v1h-1zm2 0h1v1h-1zm-11 1h5v1h-5zm8 0h3v1h-3zm-9 1h6v2h-6zm9 0h2v1h-2zm3 0h1v1h-1zm-3 1h4v1h-4zm0 1h1v2h-1zm2 0h2v1h-2zm1 1h1v1h-1zm-3 1h4v1h-4zm0 1h1v1h-1zm3 0h1v1h-1zm-2 1h3v1h-3zm-1 1h1v1h-1zm2 0h2v1h-2zm-1 1h3v1h-3zm-1 1h2v1h-2zm1 1h1v1h-1zm2 0h1v1h-1zm-1 1h2v1h-2zm3 39h3v6h-3zm-8 4h3v6h-3zm-140 60h2v1h-2zm-4 1h6v1h-6zm-4 1h8v1h-8zm-3 1h3v1h-3zm4 0h1v1h-1zm2 0h1v1h-1zm-10 1h7v1h-7zm-4 1h5v1h-5zm6 0h2v1h-2zm-9 1h7v1h-7zm-4 1h5v1h-5zm6 0h1v1h-1zm-587 1h2v1h-2zm3 0h10v1h-10zm11 0h7v1h-7zm8 0h12v1h-12zm13 0h6v1h-6zm7 0h5v1h-5zm7 0h11v1h-11zm528 0h6v1h-6zm7 0h1v1h-1zm-898 1h6v1h-6zm7 0h7v1h-7zm8 0h38v1h-38zm298 0h9v1h-9zm10 0h11v1h-11zm12 0h8v1h-8zm9 0h15v1h-15zm16 0h20v1h-20zm21 0h7v1h-7zm8 0h7v1h-7zm8 0h6v1h-6zm47 0h8v1h-8zm9 0h14v1h-14zm15 0h1v1h-1zm2 0h2v1h-2zm3 0h28v1h-28zm29 0h4v1h-4zm5 0h32v1h-32zm33 0h10v1h-10zm11 0h1v1h-1zm104 0h3v2h-3zm4 0h4v1h-4zm5 0h2v1h-2zm3 0h1v1h-1zm3 0h1v1h-1zm2 0h1v1h-1zm2 0h4v1h-4zm5 0h6v2h-6zm7 0h2v1h-2zm3 0h1v1h-1zm7 0h8v1h-8zm9 0h5v1h-5zm6 0h8v1h-8zm9 0h14v1h-14zm15 0h9v1h-9zm10 0h16v1h-16zm17 0h8v1h-8zm9 0h1v1h-1zm2 0h13v1h-13zm14 0h12v1h-12zm13 0h36v1h-36zm37 0h8v1h-8zm9 0h3v1h-3zm4 0h5v1h-5zm7 0h15v1h-15zm16 0h1v1h-1zm2 0h8v1h-8zm9 0h2v1h-2zm3 0h8v1h-8zm-887 1h17v1h-17zm18 0h13v1h-13zm14 0h1v1h-1zm3 0h20v1h-20zm276 0h3v1h-3zm63 0h6v1h-6zm7 0h9v1h-9zm10 0h6v1h-6zm8 0h7v1h-7zm8 0h2v1h-2zm33 0h35v1h-35zm36 0h22v1h-22zm23 0h16v1h-16zm17 0h29v1h-29zm30 0h10v1h-10zm102 0h3v1h-3zm4 0h2v2h-2zm8 0h3v1h-3zm4 0h4v1h-4zm5 0h9v1h-9zm17 0h4v1h-4zm10 0h11v1h-11zm12 0h4v1h-4zm5 0h17v1h-17zm18 0h6v1h-6zm7 0h1v1h-1zm2 0h1v1h-1zm2 0h6v1h-6zm7 0h26v1h-26zm27 0h3v1h-3zm5 0h2v1h-2zm3 0h2v1h-2zm3 0h2v1h-2zm3 0h47v1h-47zm48 0h6v1h-6zm7 0h6v1h-6zm7 0h27v1h-27zm28 0h4v1h-4zm5 0h2v1h-2zm3 0h3v1h-3zm-835 1h2v1h-2zm254 0h6v1h-6zm27 0h1v1h-1zm5 0h1v1h-1zm48 0h1v1h-1zm18 0h7v1h-7zm32 0h3v1h-3zm4 0h3v1h-3zm42 0h1v1h-1zm5 0h1v1h-1zm22 0h1v1h-1zm43 0h5v1h-5zm89 0h9v1h-9zm64 0h1v1h-1zm75 0h1v1h-1zm-727 1h4v1h-4zm5 0h1v1h-1zm2 0h6v1h-6zm7 0h8v2h-8zm9 0h4v1h-4zm7 0h49v1h-49zm50 0h15v1h-15zm16 0h4v1h-4zm6 0h1v1h-1zm2 0h12v1h-12zm13 0h3v1h-3zm4 0h3v1h-3zm4 0h5v1h-5zm6 0h8v1h-8zm10 0h3v1h-3zm4 0h8v1h-8zm9 0h2v1h-2zm3 0h33v1h-33zm34 0h11v1h-11zm13 0h1v1h-1zm2 0h7v1h-7zm8 0h13v1h-13zm14 0h1v1h-1zm3 0h3v1h-3zm4 0h5v1h-5zm7 0h3v1h-3zm5 0h10v1h-10zm43 0h1v1h-1zm33 0h1v1h-1zm31 0h7v1h-7zm8 0h5v1h-5zm6 0h5v1h-5zm6 0h2v1h-2zm3 0h10v1h-10zm43 0h1v1h-1zm13 0h1v1h-1zm45 0h1v1h-1zm23 0h3v1h-3zm5 0h1v1h-1zm2 0h4v1h-4zm9 0h2v3h-2zm3 0h2v1h-2zm39 0h1v1h-1zm6 0h8v2h-8zm12 0h3v1h-3zm4 0h14v1h-14zm26 0h1v1h-1zm4 0h1v1h-1zm109 0h1v1h-1zm96 0h2v1h-2zm-814 1h5v1h-5zm6 0h1v1h-1zm2 0h3v1h-3zm13 0h3v1h-3zm6 0h6v1h-6zm7 0h1v1h-1zm2 0h3v1h-3zm4 0h9v1h-9zm10 0h7v1h-7zm8 0h6v1h-6zm7 0h21v1h-21zm22 0h2v1h-2zm3 0h3v1h-3zm4 0h10v1h-10zm11 0h8v1h-8zm9 0h1v1h-1zm2 0h4v2h-4zm5 0h15v1h-15zm17 0h8v1h-8zm9 0h4v1h-4zm5 0h1v1h-1zm4 0h4v1h-4zm5 0h13v1h-13zm14 0h23v1h-23zm24 0h1v1h-1zm3 0h4v1h-4zm5 0h1v1h-1zm2 0h2v2h-2zm3 0h1v1h-1zm3 0h5v1h-5zm8 0h2v1h-2zm3 0h2v1h-2zm4 0h1v1h-1zm2 0h3v1h-3zm4 0h1v1h-1zm6 0h1v2h-1zm4 0h3v1h-3zm109 0h1v1h-1zm2 0h7v1h-7zm9 0h7v1h-7zm8 0h8v1h-8zm38 0h1v1h-1zm94 0h2v1h-2zm13 0h1v1h-1zm57 0h12v1h-12zm112 0h1v1h-1zm27 0h1v1h-1zm17 0h1v1h-1zm62 0h1v1h-1zm43 0h1v1h-1zm-870 1h1v1h-1zm34 0h3v1h-3zm4 0h6v1h-6zm7 0h2v1h-2zm4 0h2v1h-2zm6 0h2v1h-2zm6 0h3v1h-3zm4 0h1v1h-1zm5 0h1v1h-1zm3 0h1v1h-1zm2 0h6v1h-6zm9 0h6v1h-6zm7 0h5v1h-5zm7 0h7v1h-7zm8 0h2v1h-2zm3 0h6v1h-6zm7 0h1v1h-1zm2 0h3v1h-3zm5 0h2v1h-2zm4 0h8v1h-8zm9 0h8v1h-8zm9 0h2v1h-2zm9 0h6v1h-6zm8 0h2v1h-2zm3 0h2v1h-2zm6 0h7v1h-7zm9 0h1v1h-1zm2 0h1v1h-1zm9 0h10v1h-10zm11 0h1v1h-1zm2 0h24v1h-24zm25 0h1v1h-1zm6 0h1v1h-1zm3 0h1v1h-1zm7 0h2v1h-2zm5 0h1v1h-1zm14 0h1v1h-1zm2 0h3v1h-3zm12 0h4v1h-4zm82 0h1v1h-1zm90 0h1v1h-1zm30 0h1v1h-1zm71 0h2v1h-2zm46 0h2v1h-2zm3 0h1v1h-1zm2 0h1v1h-1zm9 0h6v1h-6zm90 0h1v1h-1zm39 0h1v1h-1zm13 0h1v1h-1zm3 0h1v1h-1zm22 0h1v1h-1zm-669 1h1v1h-1zm98 0h1v1h-1zm184 0h1v1h-1zm-351 1h1v1h-1zm22 0h1v1h-1zm79 1h1v2h-1zm58 0h1v1h-1zm236 1h1v1h-1zm-66 1h1v1h-1zm101 0h1v1h-1zm-119 2h1v1h-1zm15 0h1v1h-1zm152 0h1v1h-1zm-540 2h1v1h-1zm12 1h1v1h-1zm906 46h4v1h-4zm-8 1h12v1h-12zm-8 1h20v1h-20zm-590 1h61v1h-61zm582 0h28v1h-28zm-895 1h860v4h-860zm887 0h36v1h-36zm-7 1h43v1h-43zm-8 1h51v1h-51zm-8 1h59v1h-59zm-864 1h923v2h-923zm0 2h920v1h-920zm0 1h913v1h-913zm0 1h906v1h-906zm0 1h313v1h-313zm374 0h525v1h-525zm486 1h31v1h-31zm0 1h24v1h-24zm0 1h17v1h-17zm0 1h10v1h-10zm0 1h3v1h-3zm190 233h1v1h-1zm2 0h5v1h-5zm6 0h5v1h-5zm6 0h8v2h-8zm10 0h1v1h-1zm-24 1h12v1h-12zm23 0h1v1h-1zm6 0h1v2h-1zm-30 1h18v1h-18zm19 0h4v1h-4zm6 0h1v1h-1zm-25 1h12v2h-12zm13 0h10v1h-10zm16 0h2v1h-2zm-15 1h9v1h-9zm11 0h3v1h-3zm-153 63h2v1h-2zm-4 1h4v1h-4zm-4 1h4v1h-4zm-3 1h3v1h-3zm-4 1h4v1h-4zm-4 1h4v1h-4zm-3 1h3v1h-3zm-4 1h4v1h-4zm-582 1h61v1h-61zm578 0h4v1h-4zm-891 1h271v1h-271zm272 0h41v1h-41zm102 0h517v1h-517zm537 1h1v1h-1zm-8 3h1v1h-1zm-171 1h1v1h-1zm49 0h2v1h-2zm25 0h1v1h-1zm2 0h1v1h-1zm2 0h1v1h-1zm42 0h2v1h-2zm9 0h1v2h-1zm2 0h2v1h-2zm15 0h1v1h-1zm3 0h1v1h-1zm2 0h1v3h-1zm21 0h1v1h-1zm-171 1h1v2h-1zm3 0h1v1h-1zm44 0h1v1h-1zm2 0h1v1h-1zm16 0h2v1h-2zm11 0h1v1h-1zm17 0h1v1h-1zm23 0h1v1h-1zm2 0h2v1h-2zm12 0h1v1h-1zm3 0h1v1h-1zm33 0h1v1h-1zm-164 1h1v1h-1zm48 0h3v1h-3zm16 0h1v1h-1zm2 0h1v1h-1zm24 0h2v2h-2zm25 0h1v1h-1zm12 0h1v1h-1zm3 0h1v1h-1zm8 0h1v1h-1zm5 0h1v1h-1zm19 0h1v1h-1zm4 0h2v1h-2zm14 0h1v1h-1zm3 0h3v1h-3zm-120 1h1v1h-1zm25 0h1v3h-1zm40 0h2v1h-2zm3 0h1v1h-1zm10 0h3v1h-3zm4 0h1v1h-1zm10 0h1v1h-1zm8 0h5v1h-5zm19 0h2v2h-2zm3 0h1v1h-1zm-138 1h1v1h-1zm6 0h1v1h-1zm2 0h1v1h-1zm36 0h1v1h-1zm11 0h1v1h-1zm2 0h1v2h-1zm23 0h1v1h-1zm2 0h2v1h-2zm8 0h3v1h-3zm6 0h1v1h-1zm3 0h1v1h-1zm15 0h1v1h-1zm5 0h1v1h-1zm14 0h1v1h-1zm6 0h1v1h-1zm-132 1h2v1h-2zm47 0h1v1h-1zm13 0h2v1h-2zm3 0h1v1h-1zm11 0h1v1h-1zm2 0h2v1h-2zm3 0h1v1h-1zm8 0h2v1h-2zm4 0h1v2h-1zm2 0h3v1h-3zm8 0h1v1h-1zm9 0h3v1h-3zm18 0h4v1h-4zm-137 1h1v1h-1zm2 0h1v1h-1zm10 0h1v1h-1zm9 0h1v1h-1zm13 0h1v1h-1zm8 0h1v1h-1zm2 0h1v1h-1zm10 0h5v1h-5zm13 0h1v1h-1zm2 0h1v1h-1zm2 0h1v1h-1zm13 0h1v1h-1zm3 0h1v1h-1zm7 0h1v1h-1zm8 0h1v1h-1zm2 0h1v1h-1zm3 0h2v1h-2zm-172 1h2v1h-2zm65 0h2v1h-2zm3 0h1v1h-1zm5 0h2v1h-2zm5 0h1v1h-1zm9 0h2v1h-2zm23 0h1v1h-1zm23 0h4v1h-4zm17 0h1v1h-1zm3 0h1v1h-1zm9 0h8v1h-8zm20 0h1v1h-1zm12 0h1v1h-1zm-194 1h1v1h-1zm2 0h2v1h-2zm20 0h1v1h-1zm4 0h1v1h-1zm39 0h1v1h-1zm2 0h1v2h-1zm8 0h1v1h-1zm12 0h1v1h-1zm10 0h1v1h-1zm4 0h1v1h-1zm6 0h2v1h-2zm27 0h1v1h-1zm28 0h1v1h-1zm3 0h1v1h-1zm3 0h4v1h-4zm-166 1h1v1h-1zm7 0h1v2h-1zm2 0h1v1h-1zm2 0h1v1h-1zm11 0h2v1h-2zm50 0h1v2h-1zm3 0h1v4h-1zm6 0h1v1h-1zm16 0h1v1h-1zm6 0h1v1h-1zm49 0h1v1h-1zm12 0h1v1h-1zm-161 1h1v1h-1zm7 0h1v1h-1zm4 0h1v1h-1zm8 0h3v1h-3zm15 0h1v1h-1zm7 0h1v1h-1zm56 0h1v1h-1zm7 0h2v1h-2zm3 0h1v1h-1zm44 0h1v1h-1zm-138 1h1v1h-1zm5 0h3v1h-3zm4 0h2v1h-2zm8 0h1v1h-1zm2 0h1v1h-1zm4 0h2v1h-2zm4 0h1v1h-1zm66 0h1v2h-1zm2 0h1v1h-1zm3 0h1v1h-1zm-108 1h1v1h-1zm6 0h1v1h-1zm14 0h1v1h-1zm2 0h1v1h-1zm6 0h2v1h-2zm3 0h3v1h-3zm4 0h1v1h-1zm4 0h1v1h-1zm19 0h1v1h-1zm15 0h1v1h-1zm32 0h3v1h-3zm-96 1h1v1h-1zm7 0h1v1h-1zm7 0h1v1h-1zm8 0h2v1h-2zm36 0h2v1h-2zm21 0h1v1h-1zm-82 1h1v2h-1zm2 0h1v1h-1zm16 0h1v1h-1zm5 0h2v1h-2zm3 0h1v2h-1zm27 0h1v1h-1zm7 0h2v1h-2zm3 0h2v1h-2zm-42 1h1v1h-1zm3 0h1v1h-1zm35 0h1v1h-1zm4 0h1v2h-1zm2 0h1v1h-1zm-63 1h1v1h-1zm22 0h2v1h-2zm36 0h2v1h-2zm23 0h1v1h-1zm-25 3h1v1h-1zm7 0h1v1h-1zm4 0h1v1h-1zm5 0h1v1h-1zm10 0h1v1h-1zm9 0h3v1h-3zm-37 1h1v1h-1zm6 0h1v1h-1zm9 0h1v1h-1zm8 0h1v1h-1zm11 0h1v2h-1zm8 0h1v1h-1zm-33 1h2v1h-2zm4 0h1v1h-1zm28 0h2v1h-2zm-25 1h1v1h-1zm2 0h1v1h-1zm3 0h1v1h-1zm3 0h1v1h-1zm6 0h1v1h-1zm7 0h1v1h-1zm4 0h1v2h-1zm-32 1h1v1h-1zm3 0h1v1h-1zm14 0h1v1h-1zm2 0h1v1h-1zm10 0h2v1h-2zm-21 1h2v1h-2zm12 0h2v1h-2zm-26 1h1v1h-1zm3 0h1v1h-1zm5 0h1v1h-1zm14 0h1v1h-1zm6 0h1v1h-1zm5 0h1v1h-1zm3 0h1v1h-1zm-511 1h61v1h-61zm484 0h1v2h-1zm10 0h1v1h-1zm6 0h1v1h-1zm-813 1h104v1h-104zm105 0h386v1h-386zm387 0h5v1h-5zm10 0h2v1h-2zm5 0h3v1h-3zm7 0h2v1h-2zm5 0h2v1h-2zm5 0h5v1h-5zm6 0h38v1h-38zm39 0h87v1h-87zm88 0h7v1h-7zm14 0h1v1h-1zm4 0h1v1h-1zm2 0h2v1h-2zm3 0h1v1h-1zm15 0h2v1h-2zm111 0h1v2h-1zm3 0h1v1h-1zm2 0h1v1h-1zm47 0h1v1h-1zm4 0h3v1h-3zm10 0h1v1h-1zm3 0h2v1h-2zm4 0h2v1h-2zm6 0h1v1h-1zm4 0h1v1h-1zm3 0h4v1h-4zm6 0h3v1h-3zm4 0h10v1h-10zm11 0h10v1h-10zm-913 1h180v1h-180zm181 0h317v1h-317zm320 0h5v1h-5zm6 0h4v1h-4zm7 0h3v1h-3zm4 0h4v1h-4zm6 0h143v1h-143zm144 0h5v1h-5zm6 0h8v1h-8zm9 0h1v1h-1zm4 0h2v1h-2zm5 0h6v1h-6zm7 0h2v1h-2zm103 0h1v1h-1zm56 0h2v1h-2zm3 0h4v1h-4zm7 0h6v1h-6zm7 0h3v1h-3zm4 0h5v1h-5zm6 0h2v1h-2zm3 0h3v1h-3zm4 0h14v1h-14zm15 0h16v1h-16zm-907 1h499v1h-499zm500 0h13v1h-13zm14 0h8v1h-8zm9 0h188v1h-188zm284 0h1v1h-1zm39 0h1v1h-1zm7 0h1v1h-1zm2 0h2v1h-2zm3 0h7v1h-7zm8 0h13v1h-13zm14 0h9v1h-9zm10 0h17v1h-17zm18 0h15v1h-15zm-908 1h506v1h-506zm507 0h207v1h-207zm339 0h2v2h-2zm4 0h15v1h-15zm16 0h29v1h-29zm30 0h14v1h-14zm15 0h5v1h-5zm6 0h1v1h-1zm2 0h4v1h-4zm-919 1h104v1h-104zm105 0h286v1h-286zm287 0h27v1h-27zm28 0h295v1h-295zm429 0h12v1h-12zm13 0h61v1h-61zm-862 1h29v1h-29zm30 0h283v1h-283zm344 0h158v1h-158zm159 0h182v1h-182zm313 0h54v1h-54zm14 1h5v1h-5z"/>
<path fill="#00a8bc" d="M0 0m1110 38h2v1h-2zm0 1h3v1h-3zm2 1h2v1h-2zm1 1h1v1h-1zm-2 1h3v1h-3zm-1 1h3v1h-3zm1 1h3v1h-3zm1 1h2v1h-2zm-1 1h1v1h-1zm2 0h1v3h-1zm-2 2h1v1h-1zm-16 1h5v5h-5zm15 0h3v1h-3zm0 1h1v1h-1zm3 0h1v1h-1zm-3 1h4v1h-4zm1 1h1v1h-1zm-1 1h4v1h-4zm-15 1h3v1h-3zm4 0h1v1h-1zm11 0h2v1h-2zm3 0h1v2h-1zm-18 1h5v3h-5zm6 0h6v2h-6zm9 1h1v1h-1zm-9 1h4v1h-4zm5 0h1v1h-1zm4 0h3v1h-3zm-15 1h2v1h-2zm3 0h2v1h-2zm4 0h5v1h-5zm8 0h1v1h-1zm3 0h1v1h-1zm-18 1h3v1h-3zm4 0h1v1h-1zm2 0h6v3h-6zm9 0h2v1h-2zm-15 1h5v2h-5zm6 2h2v1h-2zm3 0h3v1h-3zm-3 1h5v1h-5zm0 1h6v2h-6zm0 2h1v2h-1zm2 0h4v2h-4zm12 44h3v18h-3zm-8 10h3v12h-3zm-140 74h2v1h-2zm-4 1h4v1h-4zm-4 1h4v1h-4zm5 0h1v1h-1zm-8 1h3v1h-3zm-4 1h4v1h-4zm-4 1h4v1h-4zm-3 1h3v1h-3zm20 0h1v1h-1zm-24 1h3v1h-3zm9 0h1v1h-1zm-590 1h14v1h-14zm15 0h45v1h-45zm562 0h2v1h-2zm3 0h1v1h-1zm9 0h1v1h-1zm-903 1h50v1h-50zm51 0h2v1h-2zm263 0h1v1h-1zm60 0h2v1h-2zm3 0h2v1h-2zm3 0h1v1h-1zm2 0h1v1h-1zm2 0h3v1h-3zm4 0h17v1h-17zm56 0h2v1h-2zm3 0h2v1h-2zm3 0h8v1h-8zm9 0h12v1h-12zm13 0h11v1h-11zm12 0h4v1h-4zm5 0h21v1h-21zm22 0h39v1h-39zm40 0h2v1h-2zm104 0h3v1h-3zm4 0h4v1h-4zm5 0h4v1h-4zm5 0h3v1h-3zm4 0h1v1h-1zm2 0h3v1h-3zm7 0h3v1h-3zm4 0h4v1h-4zm10 0h10v1h-10zm11 0h9v1h-9zm10 0h3v1h-3zm5 0h8v1h-8zm10 0h12v1h-12zm13 0h17v1h-17zm18 0h18v1h-18zm19 0h2v1h-2zm3 0h14v1h-14zm15 0h11v1h-11zm12 0h2v1h-2zm3 0h16v1h-16zm17 0h1v1h-1zm2 0h10v1h-10zm11 0h46v1h-46zm64 0h1v1h-1zm-598 1h2v1h-2zm70 0h1v1h-1zm2 0h1v1h-1zm22 0h3v1h-3zm36 0h3v1h-3zm112 0h2v1h-2zm96 0h2v1h-2zm3 0h2v1h-2zm55 0h1v1h-1zm79 0h1v1h-1zm28 0h1v1h-1zm49 0h1v1h-1zm-809 1h2v1h-2zm254 0h3v1h-3zm17 0h1v1h-1zm11 0h1v1h-1zm55 0h1v1h-1zm17 0h3v1h-3zm30 0h3v1h-3zm17 0h1v1h-1zm19 0h1v1h-1zm27 0h1v1h-1zm49 0h1v1h-1zm4 0h3v1h-3zm90 0h5v1h-5zm29 0h1v1h-1zm32 0h1v1h-1zm84 0h1v1h-1zm67 0h1v1h-1zm16 0h2v1h-2zm-857 1h1v1h-1zm40 0h2v1h-2zm251 0h3v1h-3zm5 0h1v1h-1zm21 0h1v1h-1zm78 0h1v2h-1zm2 0h1v1h-1zm2 0h5v1h-5zm10 0h1v1h-1zm2 0h6v1h-6zm7 0h6v1h-6zm38 0h1v1h-1zm43 0h1v1h-1zm126 0h5v1h-5zm37 0h1v1h-1zm52 0h1v1h-1zm21 0h1v1h-1zm134 0h1v1h-1zm24 0h1v1h-1zm-888 1h1v1h-1zm3 0h1v1h-1zm2 0h1v1h-1zm32 0h8v1h-8zm11 0h2v1h-2zm11 0h1v1h-1zm6 0h2v1h-2zm8 0h1v1h-1zm6 0h4v1h-4zm9 0h8v1h-8zm10 0h1v2h-1zm3 0h1v1h-1zm3 0h1v1h-1zm2 0h2v1h-2zm3 0h2v1h-2zm4 0h2v1h-2zm9 0h2v1h-2zm4 0h2v1h-2zm4 0h2v1h-2zm3 0h2v1h-2zm5 0h1v1h-1zm2 0h10v1h-10zm13 0h3v1h-3zm4 0h6v1h-6zm9 0h1v1h-1zm2 0h2v1h-2zm7 0h1v2h-1zm3 0h1v2h-1zm2 0h1v2h-1zm15 0h2v1h-2zm3 0h5v1h-5zm6 0h6v1h-6zm7 0h3v1h-3zm5 0h8v1h-8zm9 0h4v1h-4zm6 0h2v1h-2zm17 0h1v1h-1zm11 0h1v1h-1zm7 0h1v2h-1zm5 0h1v1h-1zm6 0h2v1h-2zm4 0h2v1h-2zm13 0h2v1h-2zm10 0h2v1h-2zm7 0h1v1h-1zm84 0h2v1h-2zm3 0h1v1h-1zm11 0h2v1h-2zm4 0h1v1h-1zm5 0h2v1h-2zm12 0h1v2h-1zm6 0h1v1h-1zm23 0h1v1h-1zm75 0h2v1h-2zm17 0h1v1h-1zm3 0h1v1h-1zm61 0h7v1h-7zm66 0h1v1h-1zm72 0h1v1h-1zm8 0h1v1h-1zm4 0h1v1h-1zm6 0h1v1h-1zm8 0h1v1h-1zm14 0h1v1h-1zm2 0h1v1h-1zm10 0h1v1h-1zm34 0h1v1h-1zm5 0h1v1h-1zm-813 1h1v1h-1zm9 0h1v1h-1zm2 0h1v1h-1zm24 0h1v1h-1zm16 0h1v1h-1zm23 0h1v1h-1zm8 0h1v1h-1zm23 0h2v1h-2zm17 0h1v1h-1zm45 0h2v1h-2zm7 0h1v1h-1zm10 0h2v1h-2zm11 0h1v1h-1zm5 0h1v1h-1zm57 0h5v1h-5zm18 0h1v1h-1zm4 0h1v1h-1zm3 0h1v1h-1zm7 0h3v1h-3zm11 0h1v1h-1zm58 0h1v1h-1zm18 0h2v1h-2zm8 0h1v1h-1zm2 0h1v1h-1zm3 0h1v1h-1zm56 0h1v1h-1zm24 0h1v1h-1zm17 0h1v1h-1zm14 0h1v1h-1zm86 0h3v1h-3zm5 0h1v1h-1zm3 0h1v1h-1zm34 0h1v1h-1zm34 0h1v1h-1zm8 0h1v1h-1zm-691 1h1v1h-1zm29 0h1v1h-1zm2 0h1v1h-1zm38 0h1v1h-1zm9 0h1v1h-1zm3 0h1v1h-1zm4 0h1v1h-1zm31 0h1v1h-1zm4 0h2v1h-2zm9 0h5v1h-5zm15 0h1v1h-1zm3 0h1v1h-1zm5 0h1v1h-1zm7 0h1v1h-1zm31 0h1v1h-1zm7 0h2v1h-2zm9 0h1v1h-1zm8 0h2v1h-2zm35 0h1v1h-1zm22 0h2v1h-2zm26 0h3v1h-3zm8 0h1v1h-1zm14 0h1v1h-1zm68 0h1v1h-1zm14 0h1v1h-1zm66 0h1v1h-1zm25 0h1v1h-1zm201 0h1v1h-1zm91 0h1v1h-1zm-812 1h1v1h-1zm43 0h1v1h-1zm2 0h1v1h-1zm37 0h1v1h-1zm17 0h1v1h-1zm8 0h2v1h-2zm59 0h1v1h-1zm20 0h1v1h-1zm33 0h1v1h-1zm5 0h1v1h-1zm17 0h1v1h-1zm91 0h1v1h-1zm37 0h1v1h-1zm63 0h1v1h-1zm2 0h1v1h-1zm36 0h1v1h-1zm18 0h1v1h-1zm59 0h2v1h-2zm3 0h2v1h-2zm22 0h1v1h-1zm70 0h1v1h-1zm2 0h1v1h-1zm72 0h1v1h-1zm13 0h1v1h-1zm-728 1h1v1h-1zm41 0h1v1h-1zm12 0h3v1h-3zm13 0h1v1h-1zm112 0h1v1h-1zm48 0h1v1h-1zm5 0h1v1h-1zm5 0h3v1h-3zm82 0h1v1h-1zm15 0h2v1h-2zm5 0h1v1h-1zm2 0h1v1h-1zm63 0h2v1h-2zm35 0h1v1h-1zm9 0h1v1h-1zm3 0h1v1h-1zm6 0h3v1h-3zm5 0h1v1h-1zm3 0h2v1h-2zm4 0h1v1h-1zm20 0h1v1h-1zm7 0h1v1h-1zm19 0h1v1h-1zm31 0h1v1h-1zm175 0h1v1h-1zm106 0h1v1h-1zm62 0h1v1h-1zm5 0h1v1h-1zm-883 1h1v1h-1zm101 0h1v1h-1zm51 0h1v1h-1zm2 0h1v1h-1zm2 0h2v1h-2zm61 0h1v1h-1zm3 0h1v1h-1zm83 0h2v1h-2zm7 0h1v1h-1zm15 0h1v1h-1zm4 0h3v1h-3zm6 0h1v1h-1zm4 0h2v1h-2zm3 0h2v1h-2zm3 0h2v1h-2zm6 0h1v1h-1zm35 0h1v1h-1zm43 0h1v1h-1zm9 0h1v1h-1zm5 0h2v1h-2zm7 0h1v1h-1zm2 0h2v1h-2zm10 0h1v1h-1zm4 0h3v1h-3zm4 0h1v1h-1zm10 0h1v1h-1zm17 0h1v1h-1zm9 0h1v1h-1zm13 0h1v1h-1zm115 0h1v1h-1zm7 0h2v1h-2zm121 0h1v1h-1zm16 0h1v1h-1zm28 0h1v1h-1zm52 0h1v1h-1zm-816 1h1v1h-1zm109 0h2v1h-2zm67 0h2v1h-2zm88 0h1v1h-1zm30 0h1v1h-1zm5 0h1v1h-1zm8 0h2v1h-2zm8 0h1v1h-1zm3 0h1v1h-1zm7 0h3v1h-3zm4 0h1v1h-1zm7 0h1v1h-1zm2 0h1v1h-1zm11 0h2v1h-2zm38 0h2v1h-2zm7 0h1v1h-1zm20 0h1v1h-1zm4 0h2v1h-2zm3 0h1v1h-1zm6 0h1v1h-1zm12 0h2v1h-2zm5 0h1v1h-1zm16 0h1v1h-1zm16 0h2v1h-2zm11 0h2v1h-2zm5 0h1v1h-1zm120 0h1v1h-1zm36 0h1v1h-1zm115 0h1v1h-1zm69 0h1v1h-1zm-885 1h1v1h-1zm13 0h1v1h-1zm36 0h1v1h-1zm3 0h1v1h-1zm266 0h1v1h-1zm2 0h1v1h-1zm23 0h1v1h-1zm2 0h2v1h-2zm5 0h1v1h-1zm5 0h1v1h-1zm17 0h1v1h-1zm5 0h1v1h-1zm4 0h1v1h-1zm6 0h2v1h-2zm73 0h1v1h-1zm16 0h1v1h-1zm9 0h1v1h-1zm3 0h1v1h-1zm6 0h1v1h-1zm12 0h1v1h-1zm5 0h2v1h-2zm4 0h1v1h-1zm4 0h1v1h-1zm3 0h1v1h-1zm6 0h1v1h-1zm3 0h1v1h-1zm8 0h1v1h-1zm5 0h1v1h-1zm102 0h1v1h-1zm3 0h1v1h-1zm29 0h1v1h-1zm12 0h1v1h-1zm61 0h1v1h-1zm90 0h1v1h-1zm42 0h1v1h-1zm-880 1h1v1h-1zm5 0h1v1h-1zm7 0h1v1h-1zm9 0h2v1h-2zm20 0h2v1h-2zm120 0h1v1h-1zm152 0h1v1h-1zm28 0h2v1h-2zm5 0h1v1h-1zm8 0h1v1h-1zm2 0h1v1h-1zm5 0h1v1h-1zm3 0h1v1h-1zm3 0h1v1h-1zm15 0h2v1h-2zm7 0h2v1h-2zm3 0h2v1h-2zm6 0h1v1h-1zm44 0h2v1h-2zm8 0h1v1h-1zm31 0h1v1h-1zm2 0h1v1h-1zm16 0h1v1h-1zm5 0h1v1h-1zm7 0h1v1h-1zm9 0h1v1h-1zm4 0h1v1h-1zm9 0h1v1h-1zm118 0h1v1h-1zm3 0h1v1h-1zm3 0h1v1h-1zm6 0h1v1h-1zm-667 1h1v1h-1zm8 0h1v1h-1zm7 0h1v1h-1zm9 0h1v1h-1zm3 0h3v1h-3zm16 0h1v1h-1zm2 0h4v1h-4zm6 0h2v1h-2zm186 0h1v1h-1zm112 0h1v1h-1zm18 0h1v1h-1zm8 0h3v1h-3zm26 0h1v1h-1zm44 0h1v1h-1zm31 0h1v1h-1zm7 0h1v1h-1zm16 0h4v1h-4zm5 0h2v1h-2zm7 0h1v1h-1zm8 0h1v1h-1zm2 0h2v1h-2zm4 0h1v1h-1zm2 0h1v1h-1zm6 0h1v1h-1zm3 0h1v1h-1zm8 0h1v1h-1zm112 0h1v1h-1zm3 0h1v1h-1zm3 0h1v1h-1zm10 0h1v1h-1zm4 0h2v1h-2zm8 0h1v2h-1zm4 0h2v1h-2zm4 0h1v1h-1zm-693 1h1v1h-1zm12 0h2v1h-2zm6 0h3v1h-3zm4 0h2v1h-2zm19 0h1v1h-1zm4 0h1v1h-1zm6 0h1v1h-1zm186 0h1v1h-1zm134 0h1v1h-1zm15 0h1v1h-1zm14 0h2v1h-2zm85 0h1v1h-1zm22 0h1v1h-1zm20 0h1v1h-1zm8 0h2v1h-2zm115 0h1v1h-1zm11 0h1v1h-1zm4 0h1v1h-1zm7 0h1v1h-1zm4 0h1v1h-1zm3 0h1v1h-1zm8 0h1v1h-1zm-681 1h1v1h-1zm15 0h1v1h-1zm3 0h1v1h-1zm9 0h5v1h-5zm17 0h1v1h-1zm310 0h1v1h-1zm25 0h1v1h-1zm60 0h1v1h-1zm25 0h1v1h-1zm70 0h1v1h-1zm109 0h1v1h-1zm9 0h1v1h-1zm6 0h1v1h-1zm2 0h1v1h-1zm4 0h2v1h-2zm16 0h1v1h-1zm2 0h1v1h-1zm-685 1h2v1h-2zm5 0h1v1h-1zm3 0h1v1h-1zm20 0h2v1h-2zm7 0h1v1h-1zm5 0h1v1h-1zm401 0h1v1h-1zm75 0h1v1h-1zm150 0h1v1h-1zm12 0h1v1h-1zm2 0h1v1h-1zm-676 1h1v1h-1zm33 0h1v1h-1zm414 0h1v1h-1zm85 0h1v1h-1zm114 0h1v1h-1zm-614 1h1v1h-1zm450 0h1v1h-1zm29 0h1v1h-1zm164 0h1v1h-1zm-640 1h1v1h-1zm632 0h1v1h-1zm246 50h3v1h-3zm-7 1h10v1h-10zm-7 1h17v1h-17zm-593 1h61v1h-61zm586 0h24v1h-24zm-899 1h860v5h-860zm891 0h32v1h-32zm-7 1h39v1h-39zm-7 1h46v1h-46zm-7 1h53v1h-53zm-7 1h60v1h-60zm-863 1h923v1h-923zm0 1h916v1h-916zm0 1h909v1h-909zm0 1h313v1h-313zm374 0h528v1h-528zm486 1h36v1h-36zm0 1h29v1h-29zm0 1h22v1h-22zm0 1h15v1h-15zm0 1h8v1h-8zm0 1h2v1h-2zm-223 7h1v1h-1zm-365 5h1v1h-1zm-167 5h1v1h-1zm-42 2h1v1h-1zm220 2h1v1h-1zm304 1h1v1h-1zm-458 1h1v1h-1zm22 0h1v1h-1zm114 1h1v1h-1zm-141 1h1v1h-1zm497 0h1v1h-1zm-464 1h1v1h-1zm412 0h1v1h-1zm177 0h1v1h-1zm-471 1h1v1h-1zm431 0h1v1h-1zm-585 1h1v1h-1zm133 0h1v1h-1zm387 0h1v1h-1zm10 0h1v1h-1zm-360 1h1v1h-1zm4 0h1v1h-1zm335 0h1v1h-1zm47 0h1v1h-1zm-516 1h1v1h-1zm-83 1h1v1h-1zm539 0h1v2h-1zm-519 1h1v1h-1zm28 0h1v1h-1zm505 0h1v1h-1zm-381 1h1v1h-1zm10 0h1v1h-1zm32 0h1v1h-1zm331 0h1v1h-1zm-322 1h1v1h-1zm313 0h1v1h-1zm51 0h1v1h-1zm-567 1h1v1h-1zm35 0h1v1h-1zm24 1h1v1h-1zm147 0h1v1h-1zm-82 1h1v1h-1zm-149 1h1v1h-1zm367 0h1v1h-1zm105 0h1v1h-1zm24 0h1v1h-1zm-470 1h1v1h-1zm34 0h1v1h-1zm149 0h1v1h-1zm-177 1h1v1h-1zm20 0h1v1h-1zm18 0h1v1h-1zm143 0h1v1h-1zm279 0h1v1h-1zm4 0h1v1h-1zm7 0h1v1h-1zm67 0h1v1h-1zm-513 1h1v1h-1zm29 0h1v1h-1zm16 0h1v1h-1zm120 0h1v1h-1zm6 0h1v1h-1zm482 0h1v1h-1zm-673 1h1v1h-1zm15 0h1v1h-1zm125 0h1v1h-1zm14 0h1v1h-1zm18 0h1v1h-1zm46 0h1v1h-1zm264 0h1v1h-1zm87 0h1v1h-1zm26 0h1v1h-1zm-440 1h1v1h-1zm21 0h1v1h-1zm152 0h1v1h-1zm-213 1h1v1h-1zm5 0h1v1h-1zm71 0h1v1h-1zm26 0h1v1h-1zm117 0h1v1h-1zm125 0h1v1h-1zm51 0h1v1h-1zm-463 1h1v1h-1zm74 0h1v1h-1zm34 0h1v2h-1zm293 0h1v1h-1zm315 0h1v1h-1zm-750 1h1v1h-1zm7 0h1v1h-1zm31 0h1v1h-1zm5 0h1v1h-1zm94 0h1v1h-1zm47 0h1v1h-1zm131 0h1v1h-1zm360 0h1v1h-1zm-741 1h1v1h-1zm6 0h1v1h-1zm19 0h1v1h-1zm16 0h1v1h-1zm7 0h1v2h-1zm81 0h1v1h-1zm142 0h1v1h-1zm188 0h1v1h-1zm-469 1h1v1h-1zm13 0h1v1h-1zm12 0h1v1h-1zm251 0h1v1h-1zm4 0h1v1h-1zm108 0h1v1h-1zm103 0h1v1h-1zm74 0h1v1h-1zm15 0h1v1h-1zm53 0h1v1h-1zm-602 1h1v1h-1zm51 0h1v1h-1zm25 0h1v1h-1zm4 0h1v2h-1zm8 0h1v2h-1zm77 0h1v1h-1zm19 0h1v1h-1zm6 0h1v1h-1zm80 0h1v1h-1zm41 0h1v2h-1zm66 0h1v1h-1zm158 0h1v1h-1zm12 0h1v1h-1zm10 0h1v2h-1zm-512 1h1v1h-1zm147 0h1v1h-1zm-195 1h1v1h-1zm30 0h1v1h-1zm49 0h1v1h-1zm183 0h1v1h-1zm214 0h1v1h-1zm28 0h1v1h-1zm25 0h1v1h-1zm75 0h1v1h-1zm-597 1h1v1h-1zm22 0h1v1h-1zm47 0h1v1h-1zm19 0h1v1h-1zm79 0h1v1h-1zm2 0h1v1h-1zm26 0h1v1h-1zm4 0h1v1h-1zm20 0h1v1h-1zm73 0h1v1h-1zm59 0h1v1h-1zm7 0h1v1h-1zm22 0h2v1h-2zm103 0h1v1h-1zm111 0h1v1h-1zm67 0h1v1h-1zm-728 1h1v1h-1zm2 0h1v1h-1zm113 0h1v1h-1zm3 0h1v1h-1zm22 0h1v1h-1zm13 0h1v1h-1zm16 0h1v1h-1zm100 0h1v1h-1zm42 0h1v1h-1zm112 0h1v1h-1zm98 0h1v1h-1zm113 0h1v1h-1zm39 0h1v3h-1zm14 0h1v1h-1zm71 0h1v1h-1zm-710 1h1v1h-1zm13 0h1v1h-1zm63 0h1v1h-1zm47 0h1v1h-1zm76 0h1v1h-1zm126 0h1v1h-1zm192 0h1v1h-1zm29 0h1v2h-1zm52 0h1v1h-1zm19 0h1v1h-1zm140 0h1v1h-1zm-792 1h1v1h-1zm106 0h1v1h-1zm131 0h1v1h-1zm85 0h1v1h-1zm90 0h1v1h-1zm105 0h1v1h-1zm20 0h1v1h-1zm58 0h1v1h-1zm35 0h1v1h-1zm18 0h1v1h-1zm135 0h1v1h-1zm-750 1h1v1h-1zm49 0h1v1h-1zm56 0h1v1h-1zm86 0h1v1h-1zm32 0h1v1h-1zm9 0h1v1h-1zm35 0h1v1h-1zm83 0h1v1h-1zm93 0h1v1h-1zm47 0h1v1h-1zm62 0h1v1h-1zm31 0h1v1h-1zm-579 1h1v1h-1zm28 0h1v1h-1zm31 0h1v1h-1zm2 0h1v1h-1zm8 0h2v1h-2zm97 0h1v1h-1zm209 0h1v1h-1zm22 0h1v1h-1zm78 0h1v1h-1zm23 0h1v1h-1zm7 0h1v1h-1zm-532 1h1v1h-1zm37 0h1v1h-1zm15 0h1v1h-1zm32 0h1v1h-1zm39 0h1v1h-1zm54 0h1v1h-1zm67 0h1v1h-1zm19 0h1v1h-1zm91 0h1v1h-1zm128 0h1v1h-1zm30 0h1v1h-1zm59 0h1v1h-1zm24 0h1v1h-1zm73 0h1v1h-1zm8 0h1v1h-1zm18 0h2v1h-2zm-626 1h1v1h-1zm168 0h1v1h-1zm262 0h1v1h-1zm15 0h1v1h-1zm14 0h1v1h-1zm133 0h1v1h-1zm363 88h1v1h-1zm1 1h3v1h-3zm-1 6h1v1h-1zm0 3h1v1h-1zm5 6h1v1h-1zm-3 1h1v1h-1zm-1 6h1v1h-1zm1 1h1v1h-1zm0 4h1v1h-1zm-2 1h1v1h-1zm0 2h1v1h-1zm1 3h1v1h-1zm0 4h1v2h-1zm0 3h2v1h-2zm0 6h1v1h-1zm-1 5h1v1h-1zm2 0h1v1h-1zm-1 2h1v1h-1zm0 3h2v1h-2zm0 2h1v1h-1zm7 1h1v1h-1zm2 0h1v1h-1zm-8 1h1v2h-1zm6 3h1v1h-1zm-6 4h1v1h-1zm-13 2h13v1h-13zm14 0h9v1h-9zm10 0h1v1h-1zm4 0h1v1h-1zm-28 1h9v1h-9zm10 0h5v1h-5zm6 0h6v1h-6zm11 0h3v1h-3zm-27 1h12v1h-12zm14 0h8v2h-8zm9 0h2v1h-2zm5 0h2v1h-2zm-28 1h1v1h-1zm2 0h9v1h-9zm10 0h1v1h-1zm13 0h1v1h-1zm4 0h1v2h-1zm-29 1h16v1h-16zm17 0h5v1h-5zm6 0h2v1h-2zm3 0h1v1h-1zm-26 1h11v1h-11zm13 0h10v1h-10zm13 0h4v1h-4zm-15 6h1v1h-1zm0 3h1v1h-1zm6 1h1v1h-1zm-6 7h1v1h-1zm2 5h1v1h-1zm-1 1h1v1h-1zm1 3h1v2h-1zm-1 5h1v2h-1zm-1 2h1v2h-1zm3 2h1v1h-1zm-143 34h2v1h-2zm-4 1h4v1h-4zm-4 1h4v1h-4zm-3 1h3v1h-3zm-4 1h4v1h-4zm-4 1h4v1h-4zm-3 1h3v1h-3zm-4 1h4v1h-4zm-582 1h61v1h-61zm578 0h4v1h-4zm26 0h2v1h-2zm3 0h2v1h-2zm-920 1h271v1h-271zm272 0h41v1h-41zm102 0h517v1h-517zm538 0h2v1h-2zm-6 1h2v1h-2zm3 0h1v1h-1zm-4 1h1v1h-1zm3 0h2v1h-2zm3 0h1v1h-1zm-9 1h1v1h-1zm2 0h2v1h-2zm3 0h1v2h-1zm2 0h2v2h-2zm3 0h1v1h-1zm-185 1h1v1h-1zm2 0h1v1h-1zm4 0h1v1h-1zm2 0h3v1h-3zm29 0h1v1h-1zm5 0h1v1h-1zm14 0h2v1h-2zm20 0h1v1h-1zm4 0h1v1h-1zm4 0h3v1h-3zm13 0h2v1h-2zm11 0h1v2h-1zm2 0h1v2h-1zm4 0h1v1h-1zm9 0h2v1h-2zm4 0h1v1h-1zm2 0h2v1h-2zm6 0h1v2h-1zm3 0h3v1h-3zm9 0h1v1h-1zm3 0h1v1h-1zm2 0h2v1h-2zm3 0h1v1h-1zm2 0h1v1h-1zm3 0h1v1h-1zm6 0h1v1h-1zm6 0h1v1h-1zm4 0h1v1h-1zm10 0h1v1h-1zm-183 1h1v1h-1zm2 0h1v1h-1zm7 0h1v1h-1zm3 0h1v1h-1zm21 0h1v1h-1zm16 0h1v1h-1zm2 0h1v1h-1zm2 0h1v1h-1zm4 0h1v1h-1zm13 0h2v1h-2zm7 0h2v1h-2zm3 0h1v1h-1zm2 0h1v1h-1zm9 0h1v1h-1zm2 0h2v1h-2zm16 0h1v1h-1zm8 0h2v1h-2zm3 0h1v1h-1zm3 0h2v1h-2zm3 0h1v1h-1zm4 0h1v1h-1zm5 0h1v1h-1zm8 0h1v1h-1zm2 0h1v1h-1zm2 0h3v1h-3zm4 0h2v1h-2zm3 0h2v1h-2zm6 0h1v1h-1zm4 0h1v1h-1zm2 0h2v1h-2zm4 0h1v2h-1zm2 0h2v1h-2zm5 0h2v1h-2zm5 0h1v1h-1zm2 0h1v2h-1zm5 0h1v1h-1zm-188 1h2v1h-2zm7 0h2v1h-2zm15 0h1v1h-1zm29 0h1v1h-1zm4 0h2v1h-2zm12 0h1v1h-1zm2 0h1v1h-1zm2 0h1v1h-1zm2 0h1v1h-1zm3 0h1v1h-1zm2 0h1v1h-1zm13 0h3v1h-3zm5 0h1v3h-1zm8 0h3v1h-3zm14 0h1v1h-1zm2 0h3v1h-3zm10 0h1v1h-1zm2 0h2v1h-2zm12 0h3v1h-3zm4 0h2v1h-2zm6 0h2v1h-2zm8 0h4v1h-4zm10 0h2v1h-2zm3 0h1v1h-1zm3 0h3v1h-3zm7 0h2v1h-2zm5 0h1v2h-1zm-201 1h1v1h-1zm15 0h3v1h-3zm4 0h2v1h-2zm44 0h1v2h-1zm2 0h2v1h-2zm4 0h1v2h-1zm8 0h1v1h-1zm3 0h2v1h-2zm3 0h1v1h-1zm8 0h1v1h-1zm10 0h2v1h-2zm3 0h1v1h-1zm10 0h1v1h-1zm2 0h6v1h-6zm7 0h1v2h-1zm5 0h6v1h-6zm13 0h2v1h-2zm4 0h1v1h-1zm10 0h1v1h-1zm4 0h1v2h-1zm2 0h4v1h-4zm5 0h1v1h-1zm2 0h2v1h-2zm5 0h5v1h-5zm20 0h4v1h-4zm6 0h1v1h-1zm-200 1h2v1h-2zm12 0h1v1h-1zm2 0h2v1h-2zm3 0h2v1h-2zm49 0h3v1h-3zm7 0h2v1h-2zm6 0h2v1h-2zm4 0h1v1h-1zm22 0h2v1h-2zm11 0h2v1h-2zm3 0h1v2h-1zm2 0h2v1h-2zm8 0h5v1h-5zm18 0h1v1h-1zm2 0h1v1h-1zm9 0h1v1h-1zm5 0h2v1h-2zm3 0h1v1h-1zm3 0h1v1h-1zm9 0h1v1h-1zm2 0h2v1h-2zm3 0h1v1h-1zm6 0h1v2h-1zm6 0h1v1h-1zm2 0h1v1h-1zm3 0h2v1h-2zm3 0h1v2h-1zm-204 1h1v1h-1zm17 0h1v1h-1zm2 0h1v1h-1zm2 0h1v1h-1zm43 0h1v1h-1zm2 0h1v1h-1zm3 0h1v1h-1zm4 0h2v1h-2zm6 0h1v1h-1zm2 0h5v1h-5zm7 0h1v1h-1zm12 0h1v1h-1zm2 0h2v1h-2zm4 0h3v1h-3zm9 0h3v1h-3zm7 0h3v1h-3zm4 0h1v1h-1zm4 0h1v2h-1zm3 0h1v1h-1zm10 0h2v1h-2zm3 0h1v1h-1zm3 0h1v1h-1zm2 0h1v1h-1zm3 0h1v1h-1zm2 0h2v1h-2zm4 0h2v1h-2zm3 0h1v1h-1zm4 0h3v1h-3zm4 0h1v3h-1zm7 0h1v1h-1zm2 0h1v1h-1zm12 0h1v1h-1zm5 0h2v1h-2zm-182 1h1v1h-1zm48 0h1v1h-1zm2 0h2v1h-2zm4 0h5v1h-5zm13 0h1v1h-1zm2 0h2v1h-2zm8 0h1v1h-1zm2 0h2v1h-2zm3 0h1v1h-1zm6 0h1v2h-1zm4 0h2v1h-2zm8 0h1v1h-1zm6 0h2v1h-2zm3 0h1v1h-1zm4 0h1v1h-1zm6 0h1v2h-1zm10 0h2v1h-2zm3 0h2v1h-2zm3 0h2v1h-2zm8 0h1v1h-1zm7 0h1v1h-1zm2 0h2v1h-2zm10 0h1v1h-1zm2 0h4v1h-4zm5 0h1v1h-1zm8 0h3v1h-3zm4 0h1v1h-1zm2 0h1v1h-1zm-188 1h1v1h-1zm2 0h1v1h-1zm2 0h1v2h-1zm38 0h1v1h-1zm12 0h1v1h-1zm2 0h1v2h-1zm3 0h1v4h-1zm3 0h2v1h-2zm8 0h3v1h-3zm11 0h1v1h-1zm3 0h5v1h-5zm7 0h1v1h-1zm4 0h1v1h-1zm3 0h2v2h-2zm8 0h3v1h-3zm5 0h1v1h-1zm2 0h1v1h-1zm3 0h1v1h-1zm2 0h2v1h-2zm14 0h1v1h-1zm4 0h1v1h-1zm2 0h2v1h-2zm3 0h1v1h-1zm2 0h1v1h-1zm3 0h3v2h-3zm11 0h3v1h-3zm13 0h1v1h-1zm12 0h1v1h-1zm-189 1h2v1h-2zm3 0h3v1h-3zm5 0h2v1h-2zm6 0h1v1h-1zm32 0h1v1h-1zm4 0h1v1h-1zm8 0h1v1h-1zm2 0h1v1h-1zm8 0h1v1h-1zm3 0h2v1h-2zm5 0h1v1h-1zm4 0h1v1h-1zm12 0h1v3h-1zm5 0h1v1h-1zm6 0h1v1h-1zm23 0h2v1h-2zm3 0h1v1h-1zm13 0h8v1h-8zm15 0h2v1h-2zm9 0h1v2h-1zm4 0h1v1h-1zm-171 1h2v1h-2zm7 0h1v1h-1zm3 0h1v1h-1zm6 0h3v1h-3zm5 0h4v1h-4zm11 0h1v1h-1zm2 0h6v1h-6zm8 0h1v1h-1zm6 0h1v1h-1zm2 0h1v1h-1zm9 0h3v1h-3zm4 0h2v1h-2zm7 0h2v2h-2zm3 0h2v2h-2zm3 0h2v1h-2zm3 0h1v1h-1zm3 0h1v1h-1zm13 0h3v1h-3zm7 0h4v1h-4zm5 0h1v1h-1zm2 0h2v1h-2zm37 0h3v1h-3zm5 0h1v1h-1zm5 0h1v1h-1zm2 0h3v1h-3zm4 0h1v1h-1zm2 0h2v2h-2zm-170 1h1v1h-1zm12 0h1v1h-1zm2 0h3v1h-3zm5 0h6v1h-6zm10 0h2v1h-2zm6 0h1v1h-1zm7 0h2v1h-2zm3 0h1v1h-1zm3 0h2v1h-2zm4 0h3v1h-3zm12 0h2v1h-2zm4 0h1v2h-1zm14 0h1v1h-1zm2 0h1v1h-1zm5 0h1v1h-1zm12 0h2v1h-2zm3 0h1v1h-1zm2 0h1v1h-1zm6 0h1v1h-1zm2 0h3v1h-3zm33 0h1v1h-1zm8 0h2v1h-2zm4 0h1v1h-1zm7 0h3v1h-3zm-165 1h3v1h-3zm4 0h1v1h-1zm3 0h8v1h-8zm10 0h1v1h-1zm2 0h1v1h-1zm3 0h1v2h-1zm4 0h1v1h-1zm3 0h2v1h-2zm4 0h1v1h-1zm3 0h1v1h-1zm3 0h2v1h-2zm4 0h2v1h-2zm3 0h1v1h-1zm4 0h2v1h-2zm4 0h1v1h-1zm8 0h1v1h-1zm2 0h2v1h-2zm7 0h1v1h-1zm2 0h4v1h-4zm5 0h3v1h-3zm20 0h2v1h-2zm11 0h1v1h-1zm6 0h1v1h-1zm2 0h2v1h-2zm-115 1h1v1h-1zm8 0h1v1h-1zm5 0h3v1h-3zm9 0h2v1h-2zm3 0h1v1h-1zm2 0h1v1h-1zm2 0h4v1h-4zm7 0h1v1h-1zm4 0h1v1h-1zm3 0h1v2h-1zm4 0h2v1h-2zm23 0h3v1h-3zm4 0h1v1h-1zm2 0h2v1h-2zm5 0h1v1h-1zm27 0h1v1h-1zm2 0h1v1h-1zm4 0h2v1h-2zm3 0h1v1h-1zm-111 1h1v1h-1zm5 0h1v1h-1zm2 0h1v1h-1zm3 0h1v1h-1zm7 0h6v1h-6zm7 0h2v1h-2zm3 0h4v1h-4zm7 0h2v1h-2zm6 0h1v1h-1zm2 0h1v1h-1zm2 0h1v1h-1zm21 0h2v1h-2zm4 0h3v1h-3zm5 0h1v1h-1zm12 0h1v1h-1zm-85 1h1v3h-1zm2 0h2v1h-2zm7 0h2v1h-2zm13 0h1v1h-1zm3 0h3v1h-3zm5 0h1v2h-1zm2 0h1v2h-1zm8 0h1v1h-1zm19 0h2v1h-2zm5 0h1v1h-1zm3 0h1v1h-1zm3 0h3v1h-3zm4 0h1v1h-1zm12 0h2v1h-2zm-88 1h1v1h-1zm9 0h5v1h-5zm13 0h2v1h-2zm3 0h3v1h-3zm4 0h2v2h-2zm11 0h1v1h-1zm19 0h4v1h-4zm6 0h1v1h-1zm2 0h3v1h-3zm6 0h1v1h-1zm4 0h1v2h-1zm9 0h2v1h-2zm4 0h2v1h-2zm-83 1h1v1h-1zm3 0h2v1h-2zm23 0h3v1h-3zm30 0h4v1h-4zm8 0h2v1h-2zm3 0h2v1h-2zm13 0h3v1h-3zm-19 3h1v1h-1zm10 0h1v1h-1zm12 0h1v1h-1zm7 0h1v1h-1zm7 0h1v2h-1zm-30 1h1v1h-1zm3 0h1v1h-1zm4 0h1v1h-1zm6 0h2v1h-2zm6 0h1v1h-1zm6 0h1v1h-1zm-11 1h1v1h-1zm6 0h1v1h-1zm2 0h1v1h-1zm-27 1h1v1h-1zm3 0h1v1h-1zm3 0h1v1h-1zm20 0h1v1h-1zm-32 1h2v1h-2zm3 0h1v1h-1zm10 0h1v1h-1zm16 0h1v1h-1zm8 0h1v1h-1zm-32 1h1v1h-1zm2 0h1v1h-1zm14 0h1v1h-1zm11 0h2v1h-2zm6 0h1v2h-1zm2 0h1v1h-1zm-31 1h1v1h-1zm8 0h1v1h-1zm2 0h1v1h-1zm3 0h1v1h-1zm10 0h3v1h-3zm9 0h1v1h-1zm-14 1h1v1h-1zm2 0h1v1h-1zm-11 1h1v3h-1zm17 0h1v2h-1zm92 0h1v1h-1zm-168 1h3v1h-3zm4 0h1v3h-1zm3 0h4v1h-4zm5 0h3v1h-3zm4 0h1v3h-1zm2 0h1v3h-1zm3 0h4v1h-4zm5 0h2v2h-2zm3 0h3v2h-3zm4 0h4v3h-4zm5 0h1v2h-1zm2 0h6v1h-6zm7 0h3v2h-3zm4 0h2v1h-2zm3 0h1v1h-1zm3 0h1v1h-1zm4 0h1v1h-1zm2 0h2v1h-2zm3 0h1v1h-1zm3 0h2v1h-2zm3 0h1v1h-1zm2 0h1v3h-1zm4 0h2v1h-2zm3 0h1v2h-1zm2 0h1v3h-1zm3 0h10v1h-10zm12 0h3v3h-3zm-98 1h1v2h-1zm2 0h1v2h-1zm5 0h1v2h-1zm2 0h1v2h-1zm5 0h1v2h-1zm8 0h1v2h-1zm2 0h1v2h-1zm18 0h4v2h-4zm9 0h1v1h-1zm13 0h1v2h-1zm3 0h1v2h-1zm3 0h3v1h-3zm9 0h1v1h-1zm7 0h4v1h-4zm5 0h5v1h-5zm-64 1h1v1h-1zm3 0h1v1h-1zm19 0h1v1h-1zm38 0h1v1h-1zm5 0h1v1h-1zm2 0h1v1h-1zm-447 1h1v1h-1zm-78 1h61v1h-61zm219 0h1v1h-1zm368 0h23v1h-23zm-900 1h58v1h-58zm59 0h657v1h-657zm662 0h2v1h-2zm125 0h14v1h-14zm19 0h37v1h-37zm38 0h20v1h-20zm-903 1h517v1h-517zm518 0h47v1h-47zm48 0h150v1h-150zm155 0h4v1h-4zm21 0h2v1h-2zm3 0h1v1h-1zm101 0h77v3h-77zm-846 1h717v1h-717zm720 0h6v1h-6zm20 0h7v1h-7zm8 0h2v1h-2zm3 0h2v1h-2zm7 0h1v1h-1zm-758 1h284v1h-284zm285 0h394v1h-394zm395 0h37v1h-37zm40 0h7v1h-7zm17 0h18v1h-18zm20 0h4v1h-4zm10 0h1v1h-1zm-767 1h718v1h-718zm719 0h10v1h-10zm11 0h2v1h-2zm6 0h29v1h-29zm30 0h3v1h-3zm4 0h3v1h-3zm76 0h66v1h-66zm-846 1h313v1h-313zm374 0h294v1h-294zm295 0h49v1h-49zm50 0h14v1h-14zm17 0h38v1h-38zm40 0h2v1h-2zm6 0h1v1h-1zm60 0h51v1h-51zm18 1h14v1h-14zm50 1h1v1h-1zm-406 1h1v1h-1zm154 1h1v1h-1zm28 3h1v1h-1zm203 0h1v1h-1zm-280 6h1v1h-1zm180 0h1v1h-1zm97 1h1v1h-1zm15 2h1v1h-1zm-872 1h1v1h-1zm340 0h1v1h-1zm90 3h1v1h-1zm463 1h1v1h-1zm-40 3h1v1h-1zm23 1h1v1h-1zm-116 1h1v1h-1zm-744 7h1v1h-1zm789 0h1v1h-1zm-45 3h1v1h-1zm0 6h1v1h-1zm-589 3h1v1h-1zm76 4h1v1h-1zm150 8h1v1h-1zm483 1h1v1h-1zm-27 3h1v1h-1zm40 0h1v1h-1zm-893 1h1v1h-1zm760 0h1v1h-1zm45 3h1v1h-1zm-708 8h1v1h-1zm-105 2h1v1h-1zm134 2h1v1h-1zm147 1h1v1h-1zm-273 4h1v1h-1zm892 3h1v1h-1zm-157 2h1v1h-1zm143 2h1v1h-1zm-801 1h1v1h-1zm-54 3h1v1h-1zm834 4h1v1h-1zm35 1h1v1h-1zm-552 1h1v1h-1zm3 6h1v1h-1zm545 1h1v1h-1zm-720 1h1v1h-1zm172 0h1v1h-1zm255 0h1v1h-1zm258 1h1v1h-1zm-387 1h1v1h-1zm-251 4h1v1h-1zm653 2h1v1h-1z"/>
<path fill="#00c0a8" d="M0 0m1095 38h5v5h-5zm6 0h9v10h-9zm14 0h3v72h-3zm-20 5h1v1h-1zm3 0h2v1h-2zm-3 1h5v2h-5zm0 2h2v1h-2zm3 0h2v1h-2zm-3 1h5v2h-5zm6 1h4v1h-4zm5 0h4v1h-4zm-5 1h9v6h-9zm6 6h3v65h-3zm11 76h8v3h-8zm-150 64h1v1h-1zm-5 1h1v1h-1zm2 0h2v1h-2zm-6 1h4v1h-4zm-3 1h3v1h-3zm-4 1h4v1h-4zm-4 1h4v1h-4zm-3 1h3v1h-3zm6 0h1v1h-1zm7 0h1v1h-1zm-17 1h4v1h-4zm-580 1h6v1h-6zm7 0h8v1h-8zm9 0h3v1h-3zm4 0h4v1h-4zm5 0h28v1h-28zm29 0h2v1h-2zm3 0h1v1h-1zm519 0h4v1h-4zm-891 1h53v1h-53zm313 0h1v1h-1zm9 0h1v1h-1zm38 0h1v1h-1zm14 0h3v1h-3zm4 0h3v1h-3zm4 0h1v1h-1zm2 0h21v1h-21zm60 0h2v1h-2zm3 0h27v1h-27zm28 0h12v1h-12zm13 0h11v1h-11zm12 0h32v1h-32zm33 0h20v1h-20zm122 0h3v1h-3zm4 0h2v1h-2zm3 0h1v1h-1zm2 0h1v1h-1zm2 0h2v1h-2zm3 0h9v1h-9zm10 0h6v1h-6zm7 0h4v1h-4zm10 0h11v1h-11zm12 0h16v1h-16zm17 0h46v1h-46zm47 0h2v1h-2zm3 0h11v1h-11zm12 0h3v1h-3zm4 0h23v1h-23zm24 0h9v1h-9zm10 0h38v1h-38zm39 0h6v1h-6zm8 0h1v1h-1zm2 0h17v1h-17zm-865 1h1v1h-1zm25 0h1v1h-1zm3 0h2v1h-2zm16 0h1v1h-1zm258 0h2v1h-2zm50 0h1v1h-1zm29 0h1v1h-1zm15 0h3v1h-3zm36 0h3v1h-3zm26 0h1v1h-1zm45 0h1v1h-1zm41 0h1v1h-1zm96 0h5v1h-5zm63 0h1v1h-1zm29 0h1v1h-1zm-716 1h1v1h-1zm10 0h2v1h-2zm19 0h1v1h-1zm255 0h2v1h-2zm62 0h1v1h-1zm36 0h2v1h-2zm32 0h3v1h-3zm55 0h1v1h-1zm61 0h1v1h-1zm90 0h5v1h-5zm61 0h1v1h-1zm4 0h1v1h-1zm15 0h1v1h-1zm26 0h1v1h-1zm4 0h1v1h-1zm64 0h1v1h-1zm57 0h1v1h-1zm-873 1h1v1h-1zm27 0h1v1h-1zm25 0h2v1h-2zm253 0h1v1h-1zm42 0h1v2h-1zm32 0h1v1h-1zm35 0h1v2h-1zm10 0h2v1h-2zm4 0h1v2h-1zm3 0h1v2h-1zm2 0h2v1h-2zm53 0h1v1h-1zm59 0h1v1h-1zm94 0h3v1h-3zm20 0h1v1h-1zm113 0h1v1h-1zm21 0h1v1h-1zm55 0h1v2h-1zm59 0h1v1h-1zm-878 1h1v1h-1zm24 0h4v1h-4zm5 0h1v1h-1zm7 0h2v1h-2zm16 0h1v2h-1zm15 0h1v1h-1zm9 0h4v1h-4zm6 0h2v1h-2zm32 0h1v1h-1zm4 0h2v1h-2zm9 0h10v1h-10zm11 0h1v1h-1zm4 0h1v1h-1zm3 0h1v1h-1zm4 0h2v1h-2zm7 0h2v1h-2zm32 0h1v1h-1zm3 0h1v2h-1zm3 0h4v1h-4zm5 0h4v1h-4zm6 0h9v1h-9zm42 0h1v1h-1zm22 0h2v1h-2zm55 0h1v1h-1zm22 0h1v1h-1zm24 0h1v1h-1zm34 0h1v1h-1zm32 0h1v1h-1zm55 0h1v1h-1zm51 0h1v1h-1zm161 0h1v1h-1zm24 0h1v1h-1zm31 0h1v2h-1zm31 0h1v1h-1zm18 0h1v1h-1zm31 0h1v1h-1zm21 0h1v1h-1zm4 0h1v1h-1zm-838 1h2v1h-2zm12 0h1v1h-1zm32 0h1v1h-1zm8 0h2v1h-2zm5 0h1v1h-1zm51 0h6v1h-6zm16 0h1v1h-1zm7 0h1v1h-1zm33 0h1v1h-1zm5 0h1v1h-1zm3 0h6v1h-6zm8 0h7v1h-7zm161 0h1v1h-1zm141 0h1v2h-1zm144 0h1v1h-1zm7 0h1v1h-1zm18 0h1v1h-1zm10 0h1v1h-1zm20 0h2v1h-2zm25 0h1v1h-1zm-732 1h1v1h-1zm291 0h1v1h-1zm69 0h1v1h-1zm68 0h1v1h-1zm49 0h1v1h-1zm7 0h1v1h-1zm140 0h1v1h-1zm12 0h1v1h-1zm68 0h1v1h-1zm58 0h1v1h-1zm103 0h1v1h-1zm-843 1h1v1h-1zm326 0h1v1h-1zm99 0h1v1h-1zm45 0h1v1h-1zm8 0h1v1h-1zm177 0h1v1h-1zm6 0h1v2h-1zm7 0h2v1h-2zm33 0h1v1h-1zm92 0h1v1h-1zm38 0h1v1h-1zm-866 1h1v1h-1zm14 0h1v1h-1zm19 0h1v1h-1zm335 0h1v1h-1zm341 0h1v1h-1zm55 0h1v1h-1zm32 0h1v1h-1zm38 0h1v1h-1zm12 0h1v1h-1zm-496 1h1v1h-1zm151 0h1v1h-1zm2 0h1v1h-1zm196 0h1v1h-1zm36 0h1v1h-1zm27 0h1v1h-1zm124 0h1v1h-1zm-855 1h1v1h-1zm317 0h2v1h-2zm291 0h1v1h-1zm117 0h1v1h-1zm8 0h1v1h-1zm2 0h1v1h-1zm2 0h1v1h-1zm-768 1h1v1h-1zm35 0h1v1h-1zm185 0h1v1h-1zm246 0h1v1h-1zm21 0h1v1h-1zm168 0h1v1h-1zm25 0h1v1h-1zm7 0h1v1h-1zm26 0h1v1h-1zm11 0h1v1h-1zm9 0h1v1h-1zm12 0h1v1h-1zm136 0h1v1h-1zm-216 1h1v1h-1zm21 0h1v1h-1zm79 0h1v1h-1zm50 0h1v1h-1zm-796 1h1v1h-1zm822 0h1v1h-1zm3 0h1v1h-1zm-209 1h1v1h-1zm50 0h1v1h-1zm23 0h1v1h-1zm8 0h1v1h-1zm32 0h1v1h-1zm-759 1h1v1h-1zm909 63h7v1h-7zm-7 1h14v1h-14zm-596 1h61v1h-61zm589 0h21v1h-21zm-902 1h860v6h-860zm896 0h27v1h-27zm-7 1h34v1h-34zm-7 1h41v1h-41zm-7 1h48v1h-48zm-7 1h55v1h-55zm-6 1h61v1h-61zm-862 1h136v1h-136zm137 0h786v1h-786zm-137 1h280v1h-280zm281 0h642v1h-642zm-281 1h140v1h-140zm141 0h134v1h-134zm135 0h647v1h-647zm-276 1h916v1h-916zm0 1h313v1h-313zm374 0h535v1h-535zm486 1h42v1h-42zm0 1h36v1h-36zm0 1h29v1h-29zm0 1h22v1h-22zm0 1h15v1h-15zm0 1h8v1h-8zm0 1h2v1h-2zm190 198h11v2h-11zm14 0h1v1h-1zm2 0h6v1h-6zm7 0h2v1h-2zm5 0h2v1h-2zm-16 1h1v1h-1zm2 0h5v1h-5zm6 0h2v1h-2zm5 0h1v1h-1zm4 0h1v1h-1zm-29 1h12v1h-12zm13 0h9v2h-9zm10 0h1v1h-1zm2 0h4v1h-4zm-25 1h11v1h-11zm25 0h2v2h-2zm-25 1h5v1h-5zm6 0h5v1h-5zm6 0h1v1h-1zm2 0h9v1h-9zm14 0h1v2h-1zm-28 1h11v1h-11zm14 0h8v1h-8zm10 0h1v1h-1zm2 0h1v1h-1zm-26 1h13v1h-13zm14 0h9v1h-9zm13 0h3v1h-3zm-156 76h2v1h-2zm-4 1h4v1h-4zm-4 1h4v1h-4zm-3 1h3v1h-3zm-4 1h4v1h-4zm-4 1h4v1h-4zm-3 1h3v1h-3zm-4 1h4v1h-4zm24 0h1v1h-1zm3 0h1v2h-1zm-609 1h61v1h-61zm578 0h4v1h-4zm23 0h2v1h-2zm5 0h2v1h-2zm-919 1h271v1h-271zm272 0h41v1h-41zm102 0h517v1h-517zm531 0h1v1h-1zm3 0h1v1h-1zm2 0h6v1h-6zm8 0h1v1h-1zm2 0h3v1h-3zm-16 1h1v1h-1zm2 0h2v1h-2zm4 0h1v1h-1zm2 0h4v1h-4zm8 0h1v1h-1zm2 0h1v1h-1zm-21 1h1v1h-1zm5 0h1v1h-1zm2 0h1v2h-1zm3 0h1v1h-1zm2 0h3v1h-3zm7 0h3v1h-3zm-204 1h1v1h-1zm6 0h1v1h-1zm3 0h2v1h-2zm14 0h1v1h-1zm6 0h1v1h-1zm8 0h1v1h-1zm7 0h4v1h-4zm6 0h3v1h-3zm11 0h1v2h-1zm2 0h2v1h-2zm6 0h3v1h-3zm12 0h2v1h-2zm3 0h3v1h-3zm4 0h2v1h-2zm18 0h2v1h-2zm4 0h3v1h-3zm7 0h2v1h-2zm3 0h1v2h-1zm2 0h1v2h-1zm2 0h1v1h-1zm8 0h1v1h-1zm7 0h1v2h-1zm5 0h1v1h-1zm13 0h1v1h-1zm13 0h1v2h-1zm2 0h2v1h-2zm3 0h1v2h-1zm4 0h1v2h-1zm2 0h2v1h-2zm3 0h2v1h-2zm11 0h2v1h-2zm3 0h2v1h-2zm3 0h2v1h-2zm4 0h2v2h-2zm-206 1h1v1h-1zm6 0h1v1h-1zm2 0h1v1h-1zm6 0h1v1h-1zm5 0h2v1h-2zm3 0h2v1h-2zm4 0h1v1h-1zm11 0h1v1h-1zm2 0h1v1h-1zm7 0h2v1h-2zm3 0h1v1h-1zm3 0h1v1h-1zm3 0h1v1h-1zm16 0h1v1h-1zm2 0h2v1h-2zm8 0h2v1h-2zm6 0h5v1h-5zm11 0h1v1h-1zm14 0h1v1h-1zm5 0h3v1h-3zm9 0h1v1h-1zm3 0h2v1h-2zm13 0h1v1h-1zm10 0h1v1h-1zm7 0h1v2h-1zm2 0h1v1h-1zm4 0h1v1h-1zm8 0h1v1h-1zm5 0h1v1h-1zm5 0h1v1h-1zm3 0h1v1h-1zm3 0h3v1h-3zm5 0h1v1h-1zm2 0h1v1h-1zm2 0h1v1h-1zm2 0h4v1h-4zm-206 1h1v1h-1zm2 0h1v1h-1zm11 0h1v1h-1zm7 0h2v1h-2zm7 0h2v1h-2zm4 0h3v1h-3zm10 0h3v1h-3zm13 0h1v1h-1zm12 0h1v1h-1zm4 0h3v1h-3zm9 0h1v1h-1zm7 0h3v1h-3zm8 0h1v1h-1zm2 0h2v1h-2zm3 0h1v1h-1zm2 0h3v1h-3zm10 0h1v1h-1zm8 0h1v3h-1zm5 0h2v1h-2zm5 0h3v1h-3zm5 0h1v1h-1zm3 0h2v1h-2zm8 0h2v2h-2zm6 0h1v2h-1zm7 0h2v1h-2zm14 0h2v1h-2zm3 0h1v1h-1zm3 0h6v1h-6zm11 0h2v1h-2zm7 0h1v1h-1zm2 0h2v1h-2zm5 0h2v1h-2zm10 0h1v2h-1zm-215 1h1v1h-1zm11 0h1v1h-1zm13 0h4v1h-4zm7 0h1v1h-1zm3 0h1v1h-1zm11 0h4v1h-4zm17 0h1v1h-1zm3 0h1v1h-1zm5 0h1v1h-1zm2 0h4v1h-4zm5 0h1v2h-1zm3 0h2v1h-2zm3 0h1v1h-1zm4 0h3v1h-3zm5 0h1v1h-1zm3 0h1v1h-1zm2 0h2v1h-2zm3 0h2v1h-2zm5 0h1v1h-1zm7 0h2v1h-2zm13 0h2v1h-2zm3 0h1v1h-1zm7 0h1v2h-1zm4 0h1v1h-1zm21 0h1v2h-1zm4 0h4v1h-4zm14 0h1v1h-1zm2 0h1v1h-1zm4 0h2v1h-2zm12 0h4v1h-4zm5 0h2v1h-2zm3 0h1v1h-1zm-181 1h1v2h-1zm2 0h1v1h-1zm3 0h1v1h-1zm3 0h5v1h-5zm11 0h1v1h-1zm3 0h1v1h-1zm5 0h1v1h-1zm21 0h1v1h-1zm2 0h1v1h-1zm11 0h1v1h-1zm3 0h1v1h-1zm2 0h2v1h-2zm4 0h2v1h-2zm4 0h3v1h-3zm5 0h6v1h-6zm8 0h6v1h-6zm15 0h1v1h-1zm2 0h1v1h-1zm10 0h4v1h-4zm9 0h1v5h-1zm8 0h1v1h-1zm10 0h1v2h-1zm4 0h2v1h-2zm5 0h1v1h-1zm4 0h1v1h-1zm2 0h2v1h-2zm3 0h1v1h-1zm2 0h5v2h-5zm12 0h2v1h-2zm3 0h2v2h-2zm3 0h2v1h-2zm-193 1h1v1h-1zm3 0h1v3h-1zm13 0h3v1h-3zm4 0h1v2h-1zm2 0h1v1h-1zm16 0h1v1h-1zm26 0h2v1h-2zm3 0h1v1h-1zm2 0h2v4h-2zm3 0h1v1h-1zm5 0h2v2h-2zm3 0h1v1h-1zm2 0h1v1h-1zm7 0h1v1h-1zm5 0h2v1h-2zm3 0h1v1h-1zm2 0h3v1h-3zm7 0h1v1h-1zm5 0h2v2h-2zm16 0h1v1h-1zm2 0h3v1h-3zm15 0h1v1h-1zm13 0h1v1h-1zm15 0h1v1h-1zm9 0h1v1h-1zm5 0h2v1h-2zm7 0h1v1h-1zm2 0h4v1h-4zm-190 1h1v1h-1zm2 0h1v1h-1zm3 0h2v1h-2zm3 0h3v1h-3zm5 0h1v1h-1zm4 0h4v1h-4zm7 0h1v1h-1zm9 0h3v1h-3zm14 0h1v1h-1zm9 0h1v1h-1zm19 0h4v1h-4zm8 0h3v1h-3zm4 0h2v1h-2zm3 0h1v1h-1zm6 0h4v1h-4zm6 0h1v1h-1zm18 0h1v1h-1zm2 0h3v1h-3zm17 0h2v1h-2zm10 0h4v1h-4zm20 0h2v1h-2zm6 0h1v1h-1zm5 0h1v1h-1zm7 0h2v1h-2zm5 0h1v1h-1zm2 0h1v1h-1zm-204 1h1v1h-1zm13 0h3v1h-3zm5 0h1v1h-1zm2 0h1v2h-1zm2 0h3v1h-3zm5 0h1v1h-1zm2 0h3v1h-3zm4 0h2v1h-2zm11 0h1v1h-1zm2 0h1v1h-1zm3 0h1v1h-1zm5 0h5v1h-5zm7 0h1v1h-1zm5 0h3v1h-3zm15 0h1v1h-1zm2 0h1v1h-1zm2 0h2v1h-2zm5 0h1v1h-1zm3 0h2v1h-2zm3 0h2v1h-2zm11 0h1v1h-1zm2 0h1v1h-1zm2 0h1v1h-1zm2 0h1v1h-1zm5 0h1v1h-1zm2 0h1v1h-1zm2 0h1v1h-1zm4 0h2v1h-2zm5 0h2v1h-2zm3 0h1v1h-1zm16 0h3v1h-3zm9 0h1v1h-1zm2 0h2v1h-2zm16 0h1v1h-1zm2 0h3v1h-3zm4 0h3v1h-3zm5 0h4v1h-4zm5 0h2v1h-2zm3 0h2v1h-2zm-180 1h1v1h-1zm6 0h2v1h-2zm3 0h1v1h-1zm2 0h3v1h-3zm4 0h2v1h-2zm4 0h1v2h-1zm8 0h1v1h-1zm2 0h1v1h-1zm2 0h8v1h-8zm10 0h2v1h-2zm7 0h1v1h-1zm2 0h2v1h-2zm6 0h1v1h-1zm5 0h1v3h-1zm6 0h3v1h-3zm4 0h3v1h-3zm5 0h2v1h-2zm5 0h4v1h-4zm7 0h1v1h-1zm2 0h1v1h-1zm2 0h3v1h-3zm9 0h1v2h-1zm2 0h5v1h-5zm6 0h2v1h-2zm5 0h6v1h-6zm10 0h1v2h-1zm4 0h1v1h-1zm2 0h1v1h-1zm4 0h2v2h-2zm10 0h3v1h-3zm17 0h2v1h-2zm4 0h4v1h-4zm9 0h1v1h-1zm-170 1h5v1h-5zm19 0h2v1h-2zm3 0h1v1h-1zm7 0h1v2h-1zm3 0h1v1h-1zm3 0h2v1h-2zm3 0h1v1h-1zm2 0h1v1h-1zm5 0h3v1h-3zm19 0h1v1h-1zm5 0h2v1h-2zm3 0h1v1h-1zm2 0h1v2h-1zm5 0h1v1h-1zm2 0h1v1h-1zm6 0h2v1h-2zm3 0h1v1h-1zm5 0h1v1h-1zm6 0h5v1h-5zm12 0h1v1h-1zm3 0h1v1h-1zm2 0h1v1h-1zm15 0h2v1h-2zm6 0h1v1h-1zm2 0h4v1h-4zm5 0h1v1h-1zm12 0h1v1h-1zm2 0h4v1h-4zm-179 1h1v1h-1zm33 0h2v1h-2zm3 0h1v1h-1zm2 0h4v1h-4zm5 0h1v1h-1zm3 0h1v1h-1zm6 0h2v1h-2zm5 0h4v1h-4zm7 0h1v1h-1zm4 0h2v1h-2zm3 0h3v1h-3zm14 0h1v1h-1zm2 0h1v1h-1zm2 0h2v1h-2zm10 0h2v1h-2zm3 0h1v1h-1zm5 0h1v1h-1zm2 0h3v1h-3zm10 0h1v1h-1zm2 0h2v1h-2zm9 0h1v2h-1zm4 0h1v1h-1zm2 0h1v1h-1zm12 0h1v1h-1zm2 0h3v1h-3zm4 0h3v1h-3zm6 0h1v1h-1zm2 0h6v1h-6zm9 0h1v1h-1zm3 0h1v1h-1zm2 0h5v1h-5zm-174 1h1v1h-1zm17 0h1v1h-1zm4 0h1v1h-1zm11 0h2v1h-2zm3 0h1v1h-1zm4 0h1v1h-1zm9 0h3v1h-3zm5 0h1v1h-1zm3 0h1v1h-1zm2 0h2v1h-2zm6 0h1v1h-1zm3 0h1v1h-1zm2 0h2v1h-2zm13 0h5v1h-5zm6 0h1v2h-1zm2 0h1v1h-1zm2 0h2v1h-2zm6 0h1v1h-1zm3 0h9v1h-9zm10 0h1v1h-1zm2 0h1v1h-1zm2 0h1v1h-1zm5 0h1v1h-1zm6 0h1v1h-1zm5 0h1v1h-1zm-131 1h2v1h-2zm5 0h2v1h-2zm5 0h1v1h-1zm2 0h1v1h-1zm2 0h1v1h-1zm5 0h2v1h-2zm3 0h1v1h-1zm5 0h1v1h-1zm9 0h1v1h-1zm9 0h1v3h-1zm2 0h1v1h-1zm2 0h1v1h-1zm3 0h7v1h-7zm11 0h1v1h-1zm2 0h2v1h-2zm3 0h1v1h-1zm3 0h2v1h-2zm5 0h1v1h-1zm5 0h1v1h-1zm2 0h1v1h-1zm2 0h1v2h-1zm7 0h1v1h-1zm5 0h6v1h-6zm13 0h1v1h-1zm9 0h1v1h-1zm2 0h1v1h-1zm2 0h1v1h-1zm3 0h3v1h-3zm17 0h1v1h-1zm-142 1h1v1h-1zm10 0h1v1h-1zm2 0h1v1h-1zm4 0h1v1h-1zm4 0h4v1h-4zm14 0h1v1h-1zm7 0h1v1h-1zm5 0h2v1h-2zm3 0h1v1h-1zm2 0h1v2h-1zm2 0h2v1h-2zm4 0h1v1h-1zm6 0h2v1h-2zm3 0h7v1h-7zm14 0h2v1h-2zm6 0h2v1h-2zm4 0h1v1h-1zm7 0h2v1h-2zm-96 1h1v1h-1zm5 0h2v1h-2zm7 0h1v1h-1zm11 0h1v1h-1zm2 0h2v1h-2zm3 0h2v1h-2zm13 0h1v1h-1zm4 0h3v1h-3zm9 0h1v1h-1zm8 0h1v1h-1zm2 0h2v1h-2zm5 0h3v1h-3zm12 0h1v1h-1zm2 0h3v1h-3zm7 0h2v1h-2zm7 0h1v1h-1zm-94 1h1v2h-1zm8 0h1v1h-1zm9 0h2v1h-2zm5 0h1v1h-1zm5 0h1v1h-1zm12 0h2v1h-2zm5 0h2v1h-2zm6 0h2v1h-2zm11 0h1v2h-1zm5 0h2v1h-2zm11 0h3v1h-3zm4 0h2v1h-2zm3 0h2v1h-2zm7 0h2v1h-2zm-88 1h1v1h-1zm5 0h2v1h-2zm7 0h1v1h-1zm6 0h1v1h-1zm3 0h1v1h-1zm4 0h4v1h-4zm11 0h1v1h-1zm2 0h1v1h-1zm2 0h1v1h-1zm9 0h2v1h-2zm3 0h2v1h-2zm4 0h1v1h-1zm4 0h2v1h-2zm9 0h1v1h-1zm4 0h1v1h-1zm3 0h1v1h-1zm2 0h6v1h-6zm13 0h1v1h-1zm-16 3h1v1h-1zm5 0h1v1h-1zm6 0h1v1h-1zm9 0h1v1h-1zm3 0h1v2h-1zm-34 1h1v1h-1zm15 0h1v1h-1zm21 0h1v1h-1zm-38 1h1v1h-1zm8 0h1v1h-1zm9 0h2v1h-2zm4 0h1v1h-1zm3 0h1v1h-1zm-21 1h1v1h-1zm8 0h1v1h-1zm12 0h1v1h-1zm5 0h1v1h-1zm6 0h1v1h-1zm3 0h1v1h-1zm3 0h1v1h-1zm-20 1h1v1h-1zm2 0h1v1h-1zm4 0h1v1h-1zm9 0h1v1h-1zm6 0h1v1h-1zm-37 1h1v1h-1zm3 0h1v1h-1zm7 0h1v2h-1zm12 0h3v1h-3zm10 0h1v1h-1zm-35 1h1v1h-1zm4 0h1v1h-1zm16 0h1v1h-1zm7 0h1v1h-1zm2 0h1v1h-1zm-27 1h2v1h-2zm7 0h1v1h-1zm7 0h1v2h-1zm2 0h1v1h-1zm17 0h2v1h-2zm4 0h1v1h-1zm-26 1h1v1h-1zm-51 1h1v3h-1zm2 0h2v2h-2zm6 0h1v3h-1zm4 0h1v2h-1zm2 0h1v3h-1zm2 0h2v1h-2zm6 0h1v2h-1zm3 0h1v3h-1zm4 0h1v3h-1zm5 0h1v3h-1zm2 0h1v1h-1zm7 0h1v3h-1zm4 0h1v3h-1zm3 0h1v2h-1zm3 0h1v1h-1zm17 0h1v1h-1zm2 0h1v2h-1zm2 0h1v2h-1zm3 0h1v3h-1zm2 0h1v3h-1zm2 0h2v1h-2zm12 0h2v1h-2zm5 0h1v1h-1zm-82 1h1v1h-1zm36 0h1v2h-1zm13 0h1v2h-1zm16 0h1v2h-1zm12 0h1v2h-1zm-91 1h1v1h-1zm163 7h11v1h-11zm-599 1h61v1h-61zm580 0h30v1h-30zm-893 1h29v1h-29zm30 0h704v1h-704zm705 0h44v1h-44zm45 0h4v1h-4zm8 0h1v1h-1zm53 0h19v1h-19zm33 0h17v1h-17zm18 0h5v1h-5zm6 0h25v1h-25zm-898 1h734v1h-734zm735 0h55v1h-55zm105 0h54v1h-54zm55 0h15v1h-15zm16 0h12v1h-12zm-911 1h369v2h-369zm370 0h105v1h-105zm106 0h28v1h-28zm29 0h286v1h-286zm329 0h82v1h-82zm83 0h6v1h-6zm-547 1h243v1h-243zm244 0h44v1h-44zm45 0h135v1h-135zm138 0h1v1h-1zm3 0h1v1h-1zm34 0h89v1h-89zm-834 1h799v1h-799zm800 0h2v1h-2zm3 0h5v1h-5zm7 0h4v1h-4zm13 0h5v1h-5zm7 0h87v1h-87zm-830 1h802v1h-802zm803 0h14v1h-14zm17 0h71v1h-71zm72 0h12v1h-12zm-892 1h313v1h-313zm374 0h312v1h-312zm313 0h199v1h-199zm200 0h2v1h-2zm3 0h1v1h-1zm-30 1h18v1h-18zm0 1h4v1h-4z"/>
<path fill="#00d080" d="M0 0m1118 38h8v22h-8zm-151 158h2v1h-2zm-4 1h4v1h-4zm-3 1h3v1h-3zm-4 1h3v1h-3zm12 0h1v1h-1zm-16 1h4v1h-4zm-4 1h2v1h-2zm-3 1h3v1h-3zm5 0h1v1h-1zm-9 1h4v1h-4zm17 0h1v1h-1zm3 0h1v1h-1zm-601 1h8v1h-8zm9 0h21v1h-21zm22 0h15v1h-15zm17 0h7v1h-7zm8 0h4v1h-4zm521 0h4v1h-4zm18 0h1v1h-1zm-909 1h9v1h-9zm10 0h24v1h-24zm25 0h2v1h-2zm4 0h14v1h-14zm274 0h1v1h-1zm37 0h1v1h-1zm9 0h1v1h-1zm15 0h16v1h-16zm18 0h13v1h-13zm52 0h11v1h-11zm13 0h8v1h-8zm9 0h1v1h-1zm3 0h5v1h-5zm6 0h17v1h-17zm18 0h8v1h-8zm9 0h10v1h-10zm11 0h37v1h-37zm38 0h2v1h-2zm104 0h3v1h-3zm4 0h6v1h-6zm7 0h2v1h-2zm3 0h4v1h-4zm5 0h2v1h-2zm3 0h1v1h-1zm2 0h4v1h-4zm5 0h1v1h-1zm2 0h4v1h-4zm10 0h9v1h-9zm10 0h6v1h-6zm7 0h19v1h-19zm20 0h3v1h-3zm4 0h4v1h-4zm5 0h2v1h-2zm3 0h5v1h-5zm6 0h20v1h-20zm21 0h16v1h-16zm18 0h3v1h-3zm4 0h30v1h-30zm31 0h25v1h-25zm26 0h5v1h-5zm6 0h15v1h-15zm17 0h17v1h-17zm41 0h1v1h-1zm-864 1h1v1h-1zm2 0h1v1h-1zm259 0h1v1h-1zm27 0h2v1h-2zm66 0h2v1h-2zm37 0h2v1h-2zm16 0h1v1h-1zm95 0h2v1h-2zm97 0h2v1h-2zm3 0h1v1h-1zm46 0h1v1h-1zm20 0h1v1h-1zm142 0h1v1h-1zm25 0h1v1h-1zm27 0h1v1h-1zm-859 1h1v1h-1zm256 0h2v1h-2zm66 0h1v1h-1zm31 0h3v1h-3zm33 0h2v1h-2zm7 0h1v2h-1zm15 0h1v1h-1zm30 0h1v1h-1zm41 0h1v1h-1zm112 0h5v1h-5zm58 0h1v1h-1zm9 0h1v1h-1zm12 0h1v1h-1zm60 0h1v1h-1zm23 0h1v1h-1zm78 0h1v1h-1zm15 0h1v1h-1zm-845 1h1v1h-1zm324 0h1v1h-1zm16 0h1v1h-1zm50 0h1v1h-1zm16 0h1v1h-1zm40 0h1v1h-1zm7 0h1v1h-1zm6 0h1v1h-1zm4 0h1v1h-1zm125 0h2v1h-2zm56 0h1v1h-1zm3 0h1v1h-1zm60 0h1v1h-1zm111 0h1v1h-1zm40 0h1v1h-1zm4 0h1v1h-1zm-861 1h1v1h-1zm335 0h1v1h-1zm43 0h1v1h-1zm2 0h1v1h-1zm6 0h1v1h-1zm132 0h1v1h-1zm70 0h1v1h-1zm84 0h1v1h-1zm94 0h1v1h-1zm59 0h1v1h-1zm40 0h1v1h-1zm-864 1h1v1h-1zm11 0h2v1h-2zm46 0h1v1h-1zm51 0h3v1h-3zm4 0h2v1h-2zm12 0h1v1h-1zm48 0h6v1h-6zm8 0h6v1h-6zm140 0h1v1h-1zm101 0h1v1h-1zm39 0h1v1h-1zm19 0h1v1h-1zm149 0h1v1h-1zm25 0h1v1h-1zm124 0h1v1h-1zm39 0h1v1h-1zm20 0h1v1h-1zm-876 1h1v1h-1zm349 0h1v1h-1zm181 0h1v1h-1zm182 0h1v1h-1zm12 0h1v1h-1zm-392 1h1v1h-1zm135 0h1v1h-1zm37 0h1v1h-1zm152 0h1v1h-1zm37 0h2v1h-2zm11 0h1v1h-1zm11 0h1v1h-1zm18 0h1v1h-1zm19 0h1v1h-1zm4 0h1v1h-1zm28 0h1v1h-1zm35 0h1v1h-1zm20 0h1v1h-1zm9 0h1v1h-1zm23 0h1v1h-1zm-834 1h1v1h-1zm336 0h1v1h-1zm133 0h1v1h-1zm153 0h1v1h-1zm28 0h1v1h-1zm125 0h1v1h-1zm16 0h1v1h-1zm3 0h2v1h-2zm-810 1h1v1h-1zm15 0h1v1h-1zm739 0h1v1h-1zm24 0h1v1h-1zm16 0h1v1h-1zm69 0h1v1h-1zm2 0h1v1h-1zm18 0h1v1h-1zm-554 1h1v1h-1zm344 0h1v1h-1zm5 0h1v1h-1zm30 0h1v1h-1zm161 0h1v1h-1zm-249 1h1v1h-1zm30 0h1v1h-1zm31 0h1v1h-1zm5 0h1v1h-1zm136 0h1v1h-1zm30 0h1v1h-1zm-887 1h1v1h-1zm681 0h1v1h-1zm43 0h1v1h-1zm14 0h1v1h-1zm65 0h1v1h-1zm-36 1h1v1h-1zm83 0h1v1h-1zm-135 1h1v1h-1zm20 0h1v1h-1zm66 0h1v1h-1zm15 0h1v1h-1zm-121 1h1v1h-1zm33 0h1v1h-1zm13 0h1v1h-1zm24 0h1v1h-1zm18 0h1v1h-1zm2 0h1v1h-1zm10 0h1v1h-1zm12 0h1v1h-1zm41 0h1v1h-1zm-135 1h1v1h-1zm69 0h1v1h-1zm-38 1h1v1h-1zm35 0h1v1h-1zm-10 1h1v1h-1zm3 0h1v1h-1zm31 0h1v1h-1zm25 0h1v1h-1zm85 71h7v1h-7zm-603 1h61v1h-61zm596 0h14v1h-14zm-909 1h134v1h-134zm135 0h725v1h-725zm767 0h21v1h-21zm-902 1h301v1h-301zm302 0h335v1h-335zm336 0h222v1h-222zm258 0h27v1h-27zm-896 1h860v1h-860zm889 0h34v1h-34zm-889 1h157v2h-157zm158 0h702v1h-702zm724 0h41v1h-41zm-724 1h446v1h-446zm447 0h255v1h-255zm270 0h48v1h-48zm-875 1h283v1h-283zm284 0h576v1h-576zm584 0h55v1h-55zm-868 1h272v1h-272zm273 0h7v1h-7zm8 0h579v1h-579zm581 0h61v1h-61zm-862 1h157v1h-157zm158 0h125v1h-125zm126 0h639v1h-639zm-284 1h130v1h-130zm131 0h26v1h-26zm27 0h765v1h-765zm-158 1h123v1h-123zm124 0h445v1h-445zm446 0h353v1h-353zm-570 1h83v1h-83zm84 0h54v1h-54zm55 0h18v1h-18zm19 0h124v1h-124zm125 0h640v1h-640zm-283 1h47v1h-47zm48 0h57v1h-57zm58 0h27v1h-27zm28 0h27v1h-27zm28 0h91v1h-91zm92 0h27v1h-27zm28 0h21v1h-21zm22 0h619v1h-619zm-304 1h105v1h-105zm106 0h34v1h-34zm35 0h25v1h-25zm26 0h447v1h-447zm448 0h308v1h-308zm-615 1h43v1h-43zm44 0h19v1h-19zm20 0h58v1h-58zm59 0h34v1h-34zm36 0h115v1h-115zm116 0h2v1h-2zm3 0h2v1h-2zm3 0h32v1h-32zm93 0h261v1h-261zm262 0h26v1h-26zm27 0h259v1h-259zm197 1h55v1h-55zm0 1h47v1h-47zm0 1h40v1h-40zm0 1h33v1h-33zm0 1h25v1h-25zm0 1h18v1h-18zm0 1h11v1h-11zm0 1h4v1h-4zm189 168h12v5h-12zm13 0h1v1h-1zm2 0h8v1h-8zm9 0h1v1h-1zm2 0h2v1h-2zm4 0h1v2h-1zm-17 1h11v1h-11zm12 0h3v1h-3zm-11 1h11v1h-11zm12 0h2v1h-2zm3 0h2v1h-2zm-14 1h8v2h-8zm11 0h1v1h-1zm2 0h2v1h-2zm-4 1h5v1h-5zm6 0h1v1h-1zm-30 1h11v1h-11zm12 0h1v1h-1zm3 0h9v1h-9zm11 0h2v1h-2zm3 0h1v1h-1zm-28 1h12v1h-12zm14 0h10v1h-10zm11 0h4v1h-4zm-26 1h12v1h-12zm13 0h6v1h-6zm7 0h1v1h-1zm2 0h2v1h-2zm5 0h1v1h-1zm2 0h2v1h-2zm-29 1h13v1h-13zm15 0h8v1h-8zm9 0h2v1h-2zm-24 1h6v1h-6zm7 0h5v1h-5zm8 0h10v1h-10zm11 0h1v1h-1zm-26 1h23v1h-23zm27 0h1v2h-1zm3 0h1v1h-1zm-29 1h12v2h-12zm13 0h9v1h-9zm0 1h6v1h-6zm7 0h1v1h-1zm2 0h1v1h-1zm2 0h1v1h-1zm2 0h4v1h-4zm-26 1h13v1h-13zm14 0h9v1h-9zm11 0h1v1h-1zm-25 1h5v1h-5zm6 0h6v1h-6zm8 0h8v1h-8zm13 0h1v1h-1zm-156 84h2v1h-2zm-4 1h4v1h-4zm-4 1h4v1h-4zm-3 1h3v1h-3zm-4 1h4v1h-4zm-4 1h4v1h-4zm-3 1h3v1h-3zm-4 1h4v1h-4zm21 0h3v1h-3zm5 0h1v1h-1zm-608 1h61v1h-61zm578 0h4v1h-4zm25 0h2v2h-2zm3 0h1v2h-1zm-919 1h271v1h-271zm272 0h41v1h-41zm102 0h279v1h-279zm280 0h15v1h-15zm16 0h221v1h-221zm232 0h2v1h-2zm19 0h1v1h-1zm-28 1h8v1h-8zm23 0h1v2h-1zm2 0h2v1h-2zm-210 1h1v1h-1zm4 0h1v1h-1zm9 0h1v1h-1zm17 0h1v1h-1zm2 0h5v1h-5zm6 0h5v1h-5zm6 0h1v1h-1zm2 0h2v1h-2zm5 0h1v1h-1zm6 0h1v1h-1zm5 0h2v1h-2zm4 0h1v1h-1zm2 0h1v1h-1zm2 0h1v2h-1zm10 0h3v1h-3zm5 0h1v1h-1zm3 0h1v1h-1zm3 0h1v1h-1zm15 0h3v1h-3zm5 0h3v1h-3zm11 0h1v1h-1zm2 0h1v1h-1zm7 0h1v1h-1zm3 0h1v2h-1zm2 0h2v1h-2zm3 0h1v1h-1zm2 0h1v1h-1zm19 0h5v1h-5zm7 0h2v1h-2zm10 0h1v1h-1zm5 0h1v1h-1zm2 0h1v2h-1zm2 0h1v1h-1zm2 0h1v1h-1zm6 0h1v1h-1zm3 0h2v1h-2zm14 0h2v1h-2zm-215 1h1v1h-1zm5 0h2v1h-2zm7 0h1v1h-1zm3 0h1v1h-1zm3 0h1v1h-1zm2 0h2v1h-2zm3 0h1v1h-1zm13 0h1v1h-1zm3 0h4v1h-4zm5 0h4v1h-4zm5 0h1v1h-1zm5 0h2v1h-2zm7 0h2v1h-2zm3 0h1v1h-1zm3 0h3v1h-3zm4 0h1v1h-1zm10 0h1v1h-1zm5 0h1v1h-1zm2 0h1v1h-1zm2 0h1v1h-1zm17 0h1v1h-1zm4 0h2v1h-2zm3 0h1v1h-1zm2 0h1v1h-1zm2 0h1v1h-1zm6 0h2v1h-2zm18 0h1v1h-1zm22 0h1v1h-1zm2 0h3v1h-3zm17 0h1v1h-1zm2 0h1v1h-1zm21 0h1v1h-1zm10 0h1v1h-1zm-207 1h1v1h-1zm13 0h1v1h-1zm2 0h1v1h-1zm15 0h2v1h-2zm4 0h1v1h-1zm7 0h3v1h-3zm4 0h1v1h-1zm2 0h2v1h-2zm6 0h5v1h-5zm7 0h2v1h-2zm3 0h3v1h-3zm13 0h3v1h-3zm4 0h2v1h-2zm20 0h3v1h-3zm6 0h1v1h-1zm2 0h1v1h-1zm8 0h1v1h-1zm3 0h1v1h-1zm9 0h2v1h-2zm3 0h2v2h-2zm4 0h1v1h-1zm8 0h2v1h-2zm13 0h4v1h-4zm-161 1h1v1h-1zm4 0h1v1h-1zm3 0h1v1h-1zm8 0h1v1h-1zm4 0h1v1h-1zm3 0h1v1h-1zm12 0h5v1h-5zm7 0h3v1h-3zm8 0h1v1h-1zm4 0h3v1h-3zm4 0h1v1h-1zm2 0h2v1h-2zm3 0h2v1h-2zm3 0h1v1h-1zm2 0h1v1h-1zm3 0h1v1h-1zm13 0h3v1h-3zm15 0h1v1h-1zm3 0h2v1h-2zm4 0h1v1h-1zm2 0h3v1h-3zm14 0h3v2h-3zm18 0h1v1h-1zm21 0h3v1h-3zm39 0h1v1h-1zm3 0h1v1h-1zm2 0h1v1h-1zm-195 1h1v1h-1zm4 0h2v1h-2zm7 0h2v1h-2zm15 0h3v1h-3zm4 0h1v1h-1zm3 0h2v1h-2zm4 0h2v1h-2zm10 0h6v1h-6zm7 0h2v1h-2zm8 0h1v3h-1zm2 0h1v1h-1zm14 0h1v4h-1zm8 0h1v1h-1zm4 0h2v1h-2zm8 0h2v1h-2zm18 0h1v1h-1zm21 0h2v1h-2zm6 0h1v1h-1zm9 0h1v1h-1zm21 0h1v1h-1zm15 0h1v1h-1zm6 0h3v1h-3zm-197 1h1v1h-1zm9 0h1v1h-1zm3 0h2v1h-2zm14 0h1v1h-1zm4 0h1v1h-1zm7 0h3v1h-3zm6 0h1v2h-1zm5 0h6v1h-6zm7 0h5v1h-5zm8 0h1v1h-1zm27 0h1v1h-1zm3 0h3v1h-3zm5 0h1v1h-1zm2 0h1v1h-1zm5 0h1v1h-1zm10 0h1v1h-1zm2 0h2v1h-2zm23 0h1v1h-1zm16 0h1v1h-1zm34 0h2v1h-2zm-195 1h1v1h-1zm13 0h1v1h-1zm2 0h2v1h-2zm11 0h1v1h-1zm2 0h1v1h-1zm6 0h2v1h-2zm5 0h1v1h-1zm2 0h1v1h-1zm2 0h1v2h-1zm10 0h2v1h-2zm4 0h2v1h-2zm3 0h3v1h-3zm7 0h1v1h-1zm31 0h1v1h-1zm9 0h1v1h-1zm14 0h3v1h-3zm24 0h2v2h-2zm38 0h3v1h-3zm11 0h5v1h-5zm-199 1h1v2h-1zm32 0h1v1h-1zm3 0h1v1h-1zm4 0h1v1h-1zm4 0h1v1h-1zm2 0h2v1h-2zm5 0h1v1h-1zm2 0h1v1h-1zm2 0h2v1h-2zm3 0h4v1h-4zm10 0h1v1h-1zm2 0h4v1h-4zm33 0h1v1h-1zm4 0h2v1h-2zm18 0h1v1h-1zm2 0h1v1h-1zm2 0h1v1h-1zm8 0h1v1h-1zm17 0h1v1h-1zm36 0h1v1h-1zm10 0h1v1h-1zm3 0h1v1h-1zm-162 1h2v1h-2zm3 0h5v1h-5zm6 0h1v1h-1zm4 0h1v1h-1zm9 0h1v1h-1zm4 0h1v1h-1zm3 0h1v1h-1zm3 0h1v1h-1zm30 0h2v1h-2zm19 0h1v1h-1zm4 0h1v1h-1zm6 0h1v1h-1zm3 0h3v1h-3zm14 0h1v2h-1zm2 0h1v1h-1zm2 0h1v1h-1zm4 0h1v2h-1zm30 0h1v2h-1zm6 0h2v1h-2zm4 0h1v1h-1zm2 0h3v1h-3zm-193 1h1v1h-1zm2 0h2v1h-2zm34 0h1v1h-1zm3 0h2v1h-2zm13 0h1v1h-1zm3 0h2v1h-2zm8 0h3v1h-3zm13 0h2v1h-2zm19 0h1v2h-1zm2 0h4v1h-4zm5 0h1v1h-1zm20 0h1v1h-1zm6 0h2v1h-2zm4 0h3v1h-3zm4 0h2v1h-2zm3 0h1v1h-1zm2 0h1v1h-1zm4 0h4v1h-4zm9 0h1v1h-1zm23 0h1v1h-1zm2 0h1v1h-1zm7 0h4v1h-4zm-184 1h1v1h-1zm36 0h1v1h-1zm26 0h1v1h-1zm2 0h1v1h-1zm2 0h1v1h-1zm9 0h1v1h-1zm14 0h1v1h-1zm8 0h3v1h-3zm24 0h1v1h-1zm3 0h1v2h-1zm2 0h1v2h-1zm4 0h1v1h-1zm2 0h3v1h-3zm4 0h1v1h-1zm4 0h4v1h-4zm6 0h1v1h-1zm8 0h1v1h-1zm22 0h1v1h-1zm-167 1h1v1h-1zm48 0h1v1h-1zm6 0h3v1h-3zm11 0h1v1h-1zm2 0h1v1h-1zm14 0h1v1h-1zm2 0h1v1h-1zm2 0h1v1h-1zm5 0h2v1h-2zm34 0h1v1h-1zm2 0h1v1h-1zm3 0h1v1h-1zm7 0h2v1h-2zm-83 1h1v2h-1zm2 0h1v1h-1zm3 0h1v1h-1zm5 0h2v1h-2zm20 0h3v1h-3zm6 0h2v1h-2zm8 0h5v1h-5zm6 0h1v1h-1zm15 0h2v1h-2zm5 0h2v1h-2zm4 0h1v1h-1zm6 0h2v1h-2zm-139 1h1v1h-1zm3 0h1v1h-1zm3 0h1v2h-1zm51 0h1v2h-1zm4 0h3v1h-3zm5 0h1v1h-1zm18 0h1v1h-1zm2 0h1v1h-1zm3 0h2v1h-2zm4 0h2v1h-2zm3 0h1v1h-1zm-92 1h1v1h-1zm17 0h2v1h-2zm3 0h1v1h-1zm5 0h1v1h-1zm15 0h1v1h-1zm2 0h1v1h-1zm5 0h1v1h-1zm3 0h2v1h-2zm5 0h3v1h-3zm6 0h1v1h-1zm24 0h3v1h-3zm5 0h2v1h-2zm-87 1h1v1h-1zm17 0h3v1h-3zm4 0h2v1h-2zm15 0h1v1h-1zm3 0h2v1h-2zm5 0h2v1h-2zm6 0h3v1h-3zm6 0h3v1h-3zm25 0h1v1h-1zm3 0h3v1h-3zm-90 1h2v1h-2zm21 0h2v1h-2zm3 0h1v1h-1zm2 0h2v1h-2zm3 0h3v1h-3zm15 0h1v1h-1zm4 0h1v1h-1zm4 0h4v1h-4zm6 0h1v1h-1zm3 0h2v1h-2zm3 0h1v1h-1zm2 0h1v1h-1zm3 0h1v1h-1zm22 0h3v1h-3zm-15 3h1v1h-1zm2 0h1v2h-1zm25 0h1v1h-1zm9 0h1v1h-1zm-39 1h1v1h-1zm9 0h1v1h-1zm19 0h1v1h-1zm-3 1h2v1h-2zm7 0h1v1h-1zm-31 1h2v1h-2zm4 0h1v1h-1zm3 0h1v1h-1zm2 0h1v1h-1zm13 0h1v1h-1zm8 0h1v1h-1zm8 0h1v1h-1zm-43 1h1v2h-1zm16 0h1v1h-1zm7 0h1v1h-1zm-14 1h1v1h-1zm2 0h1v1h-1zm13 0h1v2h-1zm16 0h1v1h-1zm-34 1h1v1h-1zm7 0h1v1h-1zm16 0h1v1h-1zm9 0h1v1h-1zm5 0h1v1h-1zm-35 1h1v2h-1zm3 0h1v1h-1zm7 0h1v1h-1zm2 0h1v1h-1zm19 0h1v1h-1zm-15 1h1v1h-1zm8 0h1v1h-1zm-17 1h1v1h-1zm5 0h1v1h-1zm5 0h1v1h-1zm2 0h1v1h-1zm-6 1h2v1h-2zm5 0h1v1h-1zm107 14h6v1h-6zm-13 1h19v1h-19zm-591 1h44v1h-44zm45 0h14v1h-14zm15 0h1v1h-1zm518 0h32v1h-32zm-891 1h29v1h-29zm30 0h425v1h-425zm426 0h404v1h-404zm422 0h11v1h-11zm12 0h33v1h-33zm-890 1h664v1h-664zm665 0h195v1h-195zm199 0h14v1h-14zm15 0h44v1h-44zm-879 1h55v1h-55zm56 0h270v1h-270zm271 0h539v1h-539zm540 0h42v1h-42zm43 0h13v1h-13zm-910 1h16v1h-16zm17 0h607v1h-607zm608 0h257v1h-257zm258 0h38v1h-38zm-883 1h29v1h-29zm30 0h881v1h-881zm-30 1h609v1h-609zm610 0h179v1h-179zm180 0h62v1h-62zm63 0h48v1h-48zm-853 1h313v1h-313zm374 0h512v1h-512zm513 0h4v1h-4zm-27 1h20v1h-20zm0 1h10v1h-10z"/>
<path fill="#00e840" d="M0 0m1118 60h8v30h-8zm0 68h8v3h-8zm-151 69h2v1h-2zm-4 1h4v1h-4zm-4 1h4v1h-4zm5 0h2v1h-2zm-8 1h3v1h-3zm-4 1h4v1h-4zm-4 1h1v1h-1zm3 0h1v1h-1zm-6 1h3v1h-3zm20 0h1v1h-1zm-24 1h4v1h-4zm-581 1h11v1h-11zm12 0h10v1h-10zm11 0h13v1h-13zm14 0h8v1h-8zm9 0h1v1h-1zm2 0h12v1h-12zm529 0h2v1h-2zm3 0h1v1h-1zm9 0h1v1h-1zm-903 1h15v1h-15zm16 0h7v1h-7zm8 0h1v1h-1zm2 0h9v1h-9zm11 0h14v1h-14zm15 0h1v1h-1zm261 0h3v1h-3zm11 0h2v1h-2zm7 0h1v1h-1zm43 0h9v1h-9zm10 0h21v1h-21zm60 0h14v1h-14zm15 0h12v1h-12zm13 0h1v1h-1zm2 0h20v1h-20zm21 0h8v1h-8zm9 0h10v1h-10zm11 0h38v1h-38zm140 0h13v1h-13zm14 0h8v1h-8zm9 0h7v1h-7zm8 0h4v1h-4zm10 0h3v1h-3zm4 0h6v1h-6zm7 0h3v1h-3zm4 0h8v1h-8zm9 0h4v1h-4zm6 0h3v1h-3zm4 0h20v1h-20zm22 0h3v1h-3zm4 0h7v1h-7zm8 0h12v1h-12zm13 0h2v1h-2zm3 0h21v1h-21zm22 0h17v1h-17zm18 0h41v1h-41zm42 0h14v1h-14zm15 0h7v1h-7zm8 0h1v1h-1zm2 0h4v1h-4zm-839 1h1v1h-1zm5 0h1v1h-1zm259 0h2v1h-2zm14 0h2v1h-2zm4 0h1v1h-1zm3 0h1v1h-1zm4 0h1v1h-1zm3 0h1v1h-1zm33 0h1v1h-1zm32 0h2v1h-2zm37 0h3v1h-3zm10 0h1v1h-1zm16 0h1v1h-1zm51 0h1v1h-1zm8 0h1v1h-1zm24 0h1v1h-1zm2 0h1v1h-1zm97 0h4v1h-4zm10 0h1v2h-1zm16 0h1v1h-1zm21 0h1v1h-1zm44 0h1v1h-1zm31 0h1v1h-1zm10 0h1v2h-1zm21 0h1v1h-1zm7 0h1v1h-1zm91 0h1v1h-1zm-882 1h1v1h-1zm35 0h1v1h-1zm273 0h3v1h-3zm8 0h1v1h-1zm14 0h1v1h-1zm16 0h1v1h-1zm25 0h1v1h-1zm17 0h2v1h-2zm34 0h1v1h-1zm12 0h1v1h-1zm22 0h1v1h-1zm22 0h1v1h-1zm8 0h1v1h-1zm19 0h1v1h-1zm7 0h1v1h-1zm115 0h4v1h-4zm78 0h1v1h-1zm99 0h1v1h-1zm-768 1h1v1h-1zm279 0h1v1h-1zm9 0h1v1h-1zm8 0h1v1h-1zm33 0h1v1h-1zm74 0h1v1h-1zm14 0h1v1h-1zm8 0h1v1h-1zm11 0h1v1h-1zm44 0h1v1h-1zm14 0h2v1h-2zm3 0h2v1h-2zm94 0h1v1h-1zm87 0h1v1h-1zm27 0h1v1h-1zm4 0h1v1h-1zm34 0h1v1h-1zm3 0h1v1h-1zm6 0h1v1h-1zm-795 1h1v1h-1zm44 0h1v1h-1zm265 0h1v1h-1zm15 0h2v1h-2zm5 0h1v1h-1zm52 0h1v1h-1zm13 0h2v1h-2zm35 0h1v1h-1zm9 0h1v1h-1zm3 0h1v1h-1zm7 0h2v1h-2zm4 0h1v1h-1zm3 0h2v1h-2zm4 0h1v1h-1zm27 0h1v1h-1zm18 0h1v1h-1zm10 0h1v1h-1zm22 0h1v1h-1zm241 0h1v1h-1zm19 0h1v1h-1zm35 0h1v1h-1zm40 0h1v1h-1zm-860 1h1v1h-1zm16 0h1v1h-1zm29 0h1v1h-1zm46 0h1v1h-1zm50 0h4v1h-4zm5 0h2v1h-2zm61 0h4v1h-4zm7 0h2v1h-2zm79 0h2v1h-2zm7 0h1v1h-1zm15 0h1v1h-1zm4 0h1v1h-1zm2 0h1v1h-1zm9 0h1v1h-1zm2 0h2v1h-2zm3 0h1v1h-1zm3 0h1v1h-1zm3 0h1v1h-1zm35 0h1v1h-1zm52 0h1v1h-1zm5 0h2v1h-2zm7 0h1v1h-1zm2 0h2v1h-2zm10 0h1v1h-1zm4 0h3v1h-3zm4 0h1v1h-1zm3 0h1v1h-1zm24 0h1v1h-1zm137 0h1v1h-1zm7 0h2v1h-2zm25 0h1v1h-1zm17 0h1v1h-1zm23 0h1v1h-1zm6 0h1v1h-1zm28 0h1v1h-1zm15 0h1v1h-1zm33 0h1v1h-1zm49 0h1v1h-1zm40 0h1v1h-1zm23 0h1v1h-1zm7 0h1v1h-1zm-877 1h1v1h-1zm12 0h1v1h-1zm109 0h1v1h-1zm67 0h2v1h-2zm88 0h1v1h-1zm35 0h1v1h-1zm8 0h2v1h-2zm8 0h1v1h-1zm3 0h1v1h-1zm3 0h1v1h-1zm4 0h3v1h-3zm4 0h1v1h-1zm7 0h1v1h-1zm2 0h1v1h-1zm11 0h2v1h-2zm39 0h1v1h-1zm6 0h1v1h-1zm20 0h1v1h-1zm4 0h2v1h-2zm3 0h1v1h-1zm6 0h1v1h-1zm9 0h2v1h-2zm3 0h2v1h-2zm5 0h1v1h-1zm16 0h1v1h-1zm16 0h1v1h-1zm11 0h2v1h-2zm5 0h1v1h-1zm120 0h1v1h-1zm22 0h1v1h-1zm105 0h1v1h-1zm8 0h1v1h-1zm13 0h1v1h-1zm-813 1h1v1h-1zm13 0h1v1h-1zm305 0h1v1h-1zm2 0h1v1h-1zm23 0h1v1h-1zm3 0h1v1h-1zm4 0h1v1h-1zm5 0h1v1h-1zm2 0h1v2h-1zm16 0h1v1h-1zm4 0h1v1h-1zm4 0h1v1h-1zm79 0h1v1h-1zm16 0h1v1h-1zm9 0h1v1h-1zm3 0h1v1h-1zm6 0h1v1h-1zm12 0h1v1h-1zm3 0h1v1h-1zm2 0h2v1h-2zm4 0h1v1h-1zm7 0h2v1h-2zm6 0h1v1h-1zm3 0h1v1h-1zm11 0h1v1h-1zm2 0h1v1h-1zm102 0h1v1h-1zm3 0h1v1h-1zm29 0h1v1h-1zm12 0h1v1h-1zm119 0h1v2h-1zm66 0h1v1h-1zm-872 1h1v1h-1zm3 0h1v1h-1zm2 0h1v1h-1zm4 0h1v1h-1zm3 0h1v1h-1zm9 0h2v1h-2zm6 0h1v1h-1zm2 0h1v1h-1zm132 0h1v1h-1zm152 0h1v1h-1zm28 0h1v1h-1zm5 0h1v1h-1zm10 0h1v1h-1zm8 0h1v1h-1zm3 0h1v1h-1zm15 0h2v1h-2zm7 0h2v1h-2zm3 0h2v1h-2zm6 0h1v1h-1zm44 0h2v1h-2zm8 0h1v1h-1zm31 0h1v1h-1zm2 0h1v1h-1zm16 0h1v1h-1zm5 0h1v1h-1zm7 0h1v1h-1zm9 0h1v1h-1zm4 0h1v1h-1zm9 0h1v1h-1zm114 0h1v1h-1zm4 0h1v1h-1zm3 0h1v1h-1zm3 0h1v1h-1zm6 0h1v1h-1zm56 0h1v1h-1zm73 0h1v2h-1zm3 0h1v1h-1zm45 0h1v1h-1zm5 0h1v1h-1zm42 0h1v1h-1zm-883 1h1v1h-1zm7 0h1v1h-1zm9 0h1v1h-1zm3 0h3v1h-3zm10 0h1v1h-1zm6 0h1v1h-1zm4 0h2v1h-2zm4 0h1v1h-1zm298 0h1v1h-1zm18 0h1v1h-1zm8 0h3v1h-3zm20 0h1v1h-1zm6 0h1v1h-1zm44 0h1v1h-1zm31 0h1v1h-1zm23 0h4v1h-4zm6 0h1v1h-1zm6 0h1v1h-1zm8 0h1v1h-1zm2 0h2v1h-2zm4 0h1v1h-1zm2 0h1v1h-1zm6 0h1v1h-1zm3 0h1v1h-1zm8 0h1v1h-1zm112 0h1v1h-1zm3 0h1v1h-1zm3 0h1v1h-1zm14 0h2v1h-2zm12 0h2v1h-2zm4 0h1v1h-1zm7 0h1v1h-1zm106 0h1v1h-1zm107 0h1v1h-1zm8 0h1v1h-1zm-921 1h1v1h-1zm12 0h1v1h-1zm6 0h3v1h-3zm4 0h2v1h-2zm19 0h1v1h-1zm4 0h1v1h-1zm6 0h1v1h-1zm186 0h1v1h-1zm130 0h1v1h-1zm4 0h1v1h-1zm15 0h1v1h-1zm14 0h2v1h-2zm85 0h1v1h-1zm22 0h1v1h-1zm20 0h1v1h-1zm8 0h2v1h-2zm115 0h1v1h-1zm11 0h1v1h-1zm4 0h1v1h-1zm7 0h1v1h-1zm2 0h1v1h-1zm2 0h1v1h-1zm3 0h1v1h-1zm8 0h1v1h-1zm4 0h1v1h-1zm207 0h1v1h-1zm-892 1h1v1h-1zm15 0h1v1h-1zm3 0h1v1h-1zm9 0h4v1h-4zm17 0h1v1h-1zm310 0h1v1h-1zm25 0h1v1h-1zm60 0h1v1h-1zm25 0h1v1h-1zm70 0h1v1h-1zm109 0h1v1h-1zm9 0h1v1h-1zm6 0h1v1h-1zm2 0h1v1h-1zm4 0h2v1h-2zm16 0h1v1h-1zm2 0h1v1h-1zm64 0h1v1h-1zm52 0h1v1h-1zm3 0h1v1h-1zm8 0h1v1h-1zm52 0h1v1h-1zm-864 1h2v1h-2zm5 0h1v1h-1zm3 0h1v1h-1zm20 0h2v1h-2zm7 0h1v1h-1zm5 0h1v1h-1zm401 0h1v1h-1zm75 0h1v1h-1zm150 0h1v1h-1zm6 0h1v1h-1zm6 0h1v1h-1zm2 0h1v1h-1zm49 0h1v1h-1zm5 0h1v1h-1zm10 0h1v1h-1zm18 0h1v1h-1zm105 0h1v1h-1zm-830 1h1v1h-1zm414 0h1v1h-1zm85 0h1v1h-1zm114 0h1v1h-1zm165 0h1v1h-1zm18 0h1v1h-1zm20 0h1v1h-1zm-817 1h1v1h-1zm450 0h1v1h-1zm29 0h1v1h-1zm164 0h1v1h-1zm194 0h1v1h-1zm-834 1h1v1h-1zm632 0h1v1h-1zm66 0h1v1h-1zm70 0h1v1h-1zm-6 1h1v1h-1zm4 0h1v1h-1zm26 0h1v1h-1zm-74 1h1v1h-1zm29 0h1v1h-1zm2 0h1v1h-1zm-30 1h1v1h-1zm-448 85h61v1h-61zm609 0h1v1h-1zm-922 1h98v1h-98zm99 0h25v1h-25zm26 0h5v1h-5zm6 0h8v1h-8zm9 0h17v1h-17zm18 0h117v2h-117zm118 0h34v1h-34zm35 0h312v1h-312zm313 0h6v1h-6zm7 0h3v1h-3zm5 0h224v1h-224zm279 0h8v1h-8zm-915 1h123v1h-123zm124 0h33v1h-33zm152 0h1v1h-1zm2 0h5v1h-5zm6 0h7v1h-7zm8 0h16v1h-16zm17 0h236v1h-236zm237 0h91v1h-91zm92 0h31v1h-31zm32 0h190v1h-190zm237 0h16v1h-16zm-907 1h157v1h-157zm158 0h60v2h-60zm61 0h61v1h-61zm62 0h5v2h-5zm6 0h282v1h-282zm283 0h17v1h-17zm18 0h272v1h-272zm312 0h23v1h-23zm-900 1h125v1h-125zm126 0h3v1h-3zm5 0h3v1h-3zm4 0h16v1h-16zm17 0h5v1h-5zm67 0h58v1h-58zm59 0h2v1h-2zm9 0h19v1h-19zm20 0h262v1h-262zm263 0h1v1h-1zm2 0h51v1h-51zm52 0h11v1h-11zm13 0h223v1h-223zm256 0h30v1h-30zm-893 1h47v1h-47zm48 0h86v1h-86zm87 0h22v1h-22zm23 0h12v1h-12zm13 0h90v1h-90zm91 0h3v1h-3zm4 0h4v1h-4zm5 0h31v1h-31zm32 0h26v1h-26zm27 0h274v1h-274zm275 0h56v1h-56zm57 0h9v1h-9zm10 0h188v1h-188zm213 0h38v1h-38zm-885 1h103v1h-103zm104 0h20v1h-20zm21 0h4v1h-4zm5 0h3v1h-3zm6 0h11v1h-11zm12 0h9v1h-9zm10 0h74v1h-74zm75 0h32v1h-32zm33 0h11v1h-11zm12 0h17v1h-17zm18 0h37v1h-37zm38 0h287v1h-287zm288 0h21v1h-21zm22 0h4v1h-4zm5 0h12v1h-12zm13 0h198v1h-198zm216 0h45v1h-45zm-878 1h98v1h-98zm99 0h3v1h-3zm4 0h2v1h-2zm3 0h51v1h-51zm52 0h3v1h-3zm4 0h41v1h-41zm42 0h13v1h-13zm14 0h65v1h-65zm66 0h9v1h-9zm10 0h275v1h-275zm276 0h17v1h-17zm18 0h63v1h-63zm64 0h9v1h-9zm10 0h84v1h-84zm85 0h113v1h-113zm124 0h52v1h-52zm-871 1h79v1h-79zm80 0h25v1h-25zm26 0h17v1h-17zm18 0h19v1h-19zm20 0h13v1h-13zm14 0h26v1h-26zm27 0h33v1h-33zm34 0h3v1h-3zm4 0h38v1h-38zm40 0h12v1h-12zm13 0h8v1h-8zm9 0h1v1h-1zm2 0h5v1h-5zm6 0h278v1h-278zm279 0h17v1h-17zm18 0h31v1h-31zm32 0h51v1h-51zm52 0h32v1h-32zm33 0h25v1h-25zm26 0h127v1h-127zm131 0h59v1h-59zm-864 1h28v1h-28zm29 0h41v1h-41zm42 0h34v1h-34zm35 0h4v1h-4zm5 0h10v1h-10zm11 0h15v1h-15zm17 0h18v1h-18zm19 0h11v1h-11zm12 0h57v1h-57zm58 0h3v1h-3zm4 0h11v1h-11zm12 0h1v1h-1zm2 0h4v1h-4zm5 0h3v1h-3zm4 0h31v1h-31zm32 0h6v1h-6zm7 0h10v1h-10zm11 0h264v1h-264zm265 0h53v1h-53zm54 0h17v1h-17zm18 0h1v1h-1zm2 0h2v1h-2zm3 0h4v1h-4zm5 0h9v2h-9zm10 0h261v1h-261zm-662 1h98v1h-98zm99 0h11v1h-11zm12 0h14v1h-14zm15 0h7v1h-7zm8 0h23v2h-23zm24 0h8v1h-8zm9 0h4v1h-4zm5 0h49v1h-49zm50 0h31v1h-31zm32 0h29v1h-29zm30 0h7v1h-7zm8 0h3v1h-3zm4 0h72v1h-72zm73 0h197v1h-197zm198 0h1v1h-1zm2 0h19v1h-19zm20 0h41v1h-41zm42 0h12v1h-12zm13 0h7v1h-7zm18 0h15v1h-15zm17 0h3v1h-3zm4 0h240v1h-240zm-683 1h70v1h-70zm71 0h11v1h-11zm13 0h21v1h-21zm22 0h27v1h-27zm52 0h3v2h-3zm4 0h20v1h-20zm21 0h85v1h-85zm86 0h17v1h-17zm18 0h8v1h-8zm9 0h2v1h-2zm3 0h4v1h-4zm5 0h5v1h-5zm6 0h259v1h-259zm260 0h53v1h-53zm54 0h27v1h-27zm28 0h23v2h-23zm24 0h17v1h-17zm18 0h229v1h-229zm-694 1h78v1h-78zm79 0h19v1h-19zm20 0h11v1h-11zm12 0h13v1h-13zm14 0h5v1h-5zm6 0h8v1h-8zm9 0h17v1h-17zm22 0h39v1h-39zm40 0h41v1h-41zm42 0h14v1h-14zm15 0h16v1h-16zm17 0h4v1h-4zm5 0h2v1h-2zm4 0h1v1h-1zm2 0h50v1h-50zm51 0h231v1h-231zm232 0h35v1h-35zm36 0h11v1h-11zm12 0h33v1h-33zm58 0h6v1h-6zm7 0h240v1h-240zm-683 1h98v1h-98zm99 0h6v1h-6zm7 0h18v1h-18zm21 0h3v1h-3zm4 0h2v1h-2zm3 0h13v1h-13zm14 0h9v1h-9zm10 0h26v1h-26zm27 0h80v1h-80zm81 0h9v1h-9zm10 0h6v1h-6zm7 0h12v1h-12zm13 0h17v1h-17zm78 0h186v1h-186zm187 0h24v1h-24zm25 0h6v1h-6zm7 0h24v1h-24zm25 0h13v1h-13zm14 0h19v1h-19zm20 0h7v1h-7zm8 0h6v1h-6zm7 0h20v1h-20zm21 0h1v1h-1zm3 0h232v1h-232zm169 1h63v2h-63zm0 2h57v1h-57zm0 1h48v1h-48zm0 1h40v1h-40zm0 1h31v1h-31zm0 1h23v1h-23zm0 1h14v1h-14zm0 1h6v1h-6zm189 145h12v4h-12zm14 0h11v1h-11zm14 0h1v1h-1zm-13 1h8v4h-8zm9 0h3v1h-3zm4 0h3v1h-3zm-3 1h3v1h-3zm4 0h1v1h-1zm-16 1h1v1h-1zm11 0h2v1h-2zm4 0h3v2h-3zm-28 1h1v1h-1zm2 0h10v1h-10zm23 0h2v1h-2zm-25 1h12v1h-12zm13 0h10v1h-10zm13 0h1v1h-1zm2 0h1v1h-1zm-28 1h13v1h-13zm14 0h14v1h-14zm15 0h1v1h-1zm-29 1h12v1h-12zm15 0h10v1h-10zm11 0h2v1h-2zm-26 1h11v1h-11zm15 0h8v1h-8zm10 0h1v1h-1zm3 0h3v1h-3zm-156 100h2v1h-2zm-4 1h4v1h-4zm-4 1h4v1h-4zm-3 1h3v1h-3zm-4 1h4v1h-4zm-4 1h4v1h-4zm-3 1h3v1h-3zm-4 1h4v1h-4zm-582 1h61v1h-61zm578 0h4v1h-4zm8 0h3v1h-3zm19 0h1v1h-1zm-918 1h271v1h-271zm272 0h41v1h-41zm102 0h279v1h-279zm280 0h15v1h-15zm17 0h220v1h-220zm246 0h1v1h-1zm-645 1h1v1h-1zm7 0h1v1h-1zm2 0h1v1h-1zm470 0h1v1h-1zm5 0h3v1h-3zm16 0h2v1h-2zm3 0h1v1h-1zm16 0h2v1h-2zm3 0h2v1h-2zm23 0h2v1h-2zm12 0h1v1h-1zm2 0h1v1h-1zm12 0h1v2h-1zm3 0h1v1h-1zm-141 1h1v1h-1zm42 0h1v1h-1zm8 0h3v1h-3zm5 0h1v1h-1zm9 0h1v1h-1zm5 0h1v1h-1zm2 0h1v1h-1zm15 0h1v1h-1zm2 0h1v1h-1zm2 0h1v1h-1zm19 0h1v1h-1zm3 0h1v1h-1zm2 0h1v1h-1zm11 0h2v2h-2zm10 0h1v1h-1zm29 0h1v1h-1zm-589 1h1v1h-1zm2 0h1v1h-1zm2 0h1v1h-1zm3 0h1v1h-1zm4 0h1v1h-1zm327 0h1v1h-1zm97 0h2v1h-2zm10 0h1v1h-1zm20 0h2v1h-2zm3 0h2v1h-2zm9 0h1v1h-1zm2 0h1v1h-1zm3 0h1v1h-1zm2 0h2v1h-2zm7 0h2v1h-2zm21 0h1v1h-1zm24 0h3v1h-3zm-746 1h1v1h-1zm18 0h2v1h-2zm57 0h1v1h-1zm118 0h1v1h-1zm7 0h1v1h-1zm354 0h1v1h-1zm104 0h1v1h-1zm19 0h2v1h-2zm9 0h1v2h-1zm2 0h3v1h-3zm6 0h1v1h-1zm2 0h1v1h-1zm8 0h1v1h-1zm2 0h1v1h-1zm38 0h1v1h-1zm4 0h1v1h-1zm38 0h2v2h-2zm-791 1h1v1h-1zm11 0h3v1h-3zm6 0h1v1h-1zm177 0h1v1h-1zm39 0h2v1h-2zm270 0h2v1h-2zm14 0h1v1h-1zm12 0h1v1h-1zm19 0h1v1h-1zm112 0h3v1h-3zm21 0h1v1h-1zm2 0h1v1h-1zm5 0h1v1h-1zm5 0h6v1h-6zm12 0h1v1h-1zm3 0h5v1h-5zm97 0h1v1h-1zm-801 1h1v1h-1zm2 0h1v1h-1zm4 0h1v1h-1zm5 0h1v1h-1zm10 0h1v1h-1zm5 0h1v1h-1zm3 0h1v1h-1zm11 0h2v1h-2zm18 0h1v1h-1zm19 0h1v1h-1zm118 0h1v1h-1zm21 0h1v1h-1zm7 0h1v1h-1zm2 0h1v1h-1zm3 0h1v1h-1zm283 0h2v1h-2zm10 0h1v1h-1zm2 0h2v1h-2zm4 0h1v1h-1zm23 0h1v1h-1zm88 0h1v1h-1zm17 0h1v1h-1zm17 0h3v1h-3zm4 0h6v1h-6zm10 0h2v1h-2zm3 0h4v2h-4zm10 0h1v1h-1zm6 0h3v1h-3zm4 0h1v2h-1zm52 0h1v1h-1zm25 0h3v1h-3zm-789 1h3v1h-3zm8 0h1v1h-1zm5 0h1v1h-1zm2 0h1v1h-1zm2 0h2v1h-2zm4 0h1v1h-1zm6 0h2v1h-2zm18 0h1v1h-1zm17 0h2v1h-2zm11 0h1v1h-1zm139 0h1v1h-1zm10 0h1v1h-1zm5 0h1v1h-1zm2 0h2v1h-2zm5 0h1v1h-1zm259 0h1v1h-1zm15 0h1v1h-1zm2 0h4v1h-4zm9 0h3v1h-3zm4 0h1v1h-1zm2 0h1v1h-1zm4 0h1v1h-1zm2 0h1v1h-1zm8 0h1v1h-1zm5 0h1v1h-1zm17 0h1v1h-1zm16 0h1v1h-1zm99 0h1v1h-1zm4 0h2v1h-2zm3 0h1v1h-1zm2 0h1v2h-1zm2 0h1v2h-1zm11 0h2v1h-2zm8 0h4v1h-4zm57 0h1v1h-1zm27 0h2v1h-2zm-796 1h1v1h-1zm4 0h1v1h-1zm8 0h2v1h-2zm13 0h2v1h-2zm7 0h1v1h-1zm4 0h1v1h-1zm3 0h1v1h-1zm2 0h1v1h-1zm15 0h1v1h-1zm7 0h1v1h-1zm17 0h1v1h-1zm8 0h1v1h-1zm110 0h1v1h-1zm2 0h1v1h-1zm9 0h1v1h-1zm32 0h1v1h-1zm105 0h1v1h-1zm161 0h1v1h-1zm3 0h4v1h-4zm5 0h1v1h-1zm8 0h2v1h-2zm5 0h1v1h-1zm10 0h1v1h-1zm3 0h2v1h-2zm8 0h1v1h-1zm2 0h1v1h-1zm3 0h1v1h-1zm24 0h1v1h-1zm71 0h1v1h-1zm37 0h1v1h-1zm2 0h1v1h-1zm108 0h1v1h-1zm-765 1h1v1h-1zm11 0h1v1h-1zm5 0h2v1h-2zm8 0h1v1h-1zm2 0h2v1h-2zm7 0h1v1h-1zm6 0h1v1h-1zm4 0h1v1h-1zm9 0h2v1h-2zm4 0h1v1h-1zm2 0h1v1h-1zm8 0h1v1h-1zm110 0h2v1h-2zm6 0h3v1h-3zm10 0h1v1h-1zm20 0h1v1h-1zm124 0h1v1h-1zm2 0h1v1h-1zm123 0h1v1h-1zm5 0h2v1h-2zm3 0h2v1h-2zm6 0h1v1h-1zm33 0h2v1h-2zm5 0h1v1h-1zm2 0h1v1h-1zm6 0h1v1h-1zm8 0h1v1h-1zm2 0h1v1h-1zm4 0h1v1h-1zm16 0h1v1h-1zm110 0h1v1h-1zm3 0h1v1h-1zm17 0h1v1h-1zm2 0h1v1h-1zm31 0h1v1h-1zm93 0h2v1h-2zm-839 1h1v1h-1zm2 0h3v1h-3zm36 0h1v1h-1zm15 0h1v1h-1zm2 0h1v1h-1zm5 0h4v1h-4zm16 0h2v1h-2zm3 0h1v1h-1zm3 0h2v1h-2zm9 0h1v1h-1zm4 0h3v1h-3zm23 0h1v1h-1zm13 0h1v1h-1zm66 0h2v1h-2zm6 0h1v1h-1zm3 0h1v1h-1zm21 0h1v1h-1zm119 0h1v1h-1zm2 0h2v1h-2zm10 0h1v1h-1zm8 0h2v1h-2zm3 0h1v1h-1zm2 0h1v1h-1zm5 0h1v1h-1zm118 0h2v1h-2zm3 0h1v1h-1zm9 0h1v1h-1zm38 0h1v1h-1zm4 0h1v1h-1zm8 0h1v1h-1zm6 0h1v1h-1zm4 0h1v1h-1zm3 0h1v1h-1zm11 0h1v1h-1zm5 0h1v1h-1zm62 0h1v2h-1zm41 0h1v1h-1zm28 0h1v1h-1zm64 0h2v1h-2zm14 0h1v1h-1zm-753 1h1v1h-1zm3 0h1v1h-1zm23 0h1v1h-1zm5 0h3v1h-3zm6 0h1v1h-1zm14 0h1v1h-1zm40 0h1v1h-1zm75 0h1v1h-1zm10 0h2v1h-2zm13 0h2v1h-2zm13 0h1v1h-1zm2 0h1v1h-1zm5 0h1v1h-1zm63 0h1v1h-1zm32 0h1v1h-1zm5 0h1v1h-1zm9 0h1v1h-1zm4 0h1v1h-1zm2 0h1v1h-1zm7 0h2v1h-2zm3 0h1v1h-1zm2 0h1v1h-1zm4 0h1v1h-1zm115 0h1v1h-1zm7 0h3v1h-3zm46 0h1v1h-1zm8 0h2v1h-2zm93 0h1v1h-1zm65 0h1v1h-1zm32 0h2v1h-2zm30 0h1v3h-1zm2 0h3v1h-3zm11 0h2v1h-2zm6 0h2v1h-2zm-749 1h1v1h-1zm7 0h1v1h-1zm12 0h1v1h-1zm27 0h2v1h-2zm6 0h1v1h-1zm13 0h1v1h-1zm7 0h1v1h-1zm3 0h2v1h-2zm11 0h2v1h-2zm19 0h1v1h-1zm44 0h1v1h-1zm6 0h1v1h-1zm54 0h1v1h-1zm58 0h1v1h-1zm28 0h1v1h-1zm9 0h7v1h-7zm9 0h1v1h-1zm2 0h1v1h-1zm2 0h1v1h-1zm10 0h1v1h-1zm196 0h3v1h-3zm6 0h1v1h-1zm5 0h1v1h-1zm131 0h1v1h-1zm37 0h2v1h-2zm30 0h2v1h-2zm3 0h1v1h-1zm2 0h1v1h-1zm4 0h2v1h-2zm3 0h6v1h-6zm-691 1h1v1h-1zm13 0h1v1h-1zm4 0h1v1h-1zm7 0h1v1h-1zm11 0h5v1h-5zm7 0h1v1h-1zm4 0h1v1h-1zm5 0h1v1h-1zm6 0h1v1h-1zm186 0h1v1h-1zm18 0h1v1h-1zm17 0h1v1h-1zm4 0h1v1h-1zm191 0h3v1h-3zm4 0h2v1h-2zm5 0h1v1h-1zm133 0h1v2h-1zm2 0h1v1h-1zm24 0h2v1h-2zm7 0h2v1h-2zm15 0h1v1h-1zm23 0h2v1h-2zm3 0h5v1h-5zm7 0h2v1h-2zm-801 1h2v1h-2zm4 0h1v1h-1zm47 0h1v1h-1zm56 0h1v1h-1zm12 0h1v1h-1zm2 0h1v1h-1zm9 0h1v1h-1zm5 0h1v1h-1zm10 0h1v1h-1zm3 0h2v1h-2zm4 0h1v1h-1zm3 0h1v1h-1zm3 0h3v1h-3zm42 0h1v1h-1zm56 0h1v1h-1zm6 0h1v1h-1zm7 0h1v1h-1zm77 0h1v1h-1zm38 0h2v1h-2zm332 0h1v1h-1zm36 0h1v1h-1zm-806 1h1v1h-1zm8 0h1v1h-1zm45 0h1v1h-1zm3 0h2v1h-2zm48 0h1v1h-1zm56 0h1v1h-1zm10 0h1v1h-1zm4 0h1v1h-1zm5 0h2v1h-2zm6 0h1v1h-1zm15 0h1v1h-1zm4 0h1v1h-1zm3 0h1v1h-1zm8 0h1v1h-1zm4 0h1v1h-1zm34 0h1v1h-1zm52 0h2v1h-2zm3 0h1v1h-1zm27 0h1v1h-1zm8 0h1v1h-1zm21 0h1v1h-1zm26 0h2v1h-2zm9 0h1v1h-1zm4 0h1v1h-1zm39 0h1v1h-1zm203 0h1v1h-1zm95 0h1v1h-1zm27 0h1v1h-1zm5 0h1v1h-1zm4 0h2v1h-2zm26 0h1v1h-1zm-793 1h1v1h-1zm34 0h1v1h-1zm119 0h1v1h-1zm7 0h1v1h-1zm18 0h2v1h-2zm21 0h1v1h-1zm9 0h1v1h-1zm4 0h1v1h-1zm13 0h1v1h-1zm18 0h1v1h-1zm55 0h1v1h-1zm17 0h1v1h-1zm26 0h1v1h-1zm2 0h1v1h-1zm7 0h1v1h-1zm4 0h1v1h-1zm5 0h3v1h-3zm6 0h1v1h-1zm5 0h2v1h-2zm15 0h2v1h-2zm157 0h1v1h-1zm98 0h1v1h-1zm66 0h1v1h-1zm52 0h2v1h-2zm7 0h3v1h-3zm-722 1h1v1h-1zm134 0h1v1h-1zm34 0h1v1h-1zm3 0h1v1h-1zm4 0h2v1h-2zm21 0h1v1h-1zm69 0h2v1h-2zm11 0h1v1h-1zm5 0h1v1h-1zm3 0h1v1h-1zm8 0h1v1h-1zm4 0h1v1h-1zm3 0h1v1h-1zm5 0h1v1h-1zm2 0h1v1h-1zm2 0h1v1h-1zm5 0h1v1h-1zm2 0h1v1h-1zm4 0h1v1h-1zm7 0h1v1h-1zm3 0h2v1h-2zm4 0h3v1h-3zm7 0h2v1h-2zm4 0h1v1h-1zm2 0h1v1h-1zm46 0h1v1h-1zm2 0h3v1h-3zm5 0h1v1h-1zm195 0h3v1h-3zm92 0h1v1h-1zm23 0h1v1h-1zm3 0h3v1h-3zm-763 1h2v1h-2zm3 0h1v1h-1zm40 0h1v1h-1zm119 0h3v1h-3zm55 0h1v1h-1zm7 0h1v1h-1zm5 0h1v1h-1zm5 0h1v1h-1zm7 0h1v1h-1zm4 0h1v1h-1zm5 0h1v1h-1zm60 0h1v1h-1zm2 0h2v1h-2zm6 0h1v1h-1zm3 0h1v1h-1zm3 0h1v1h-1zm2 0h1v1h-1zm2 0h2v1h-2zm3 0h1v1h-1zm2 0h1v1h-1zm15 0h1v1h-1zm5 0h2v1h-2zm8 0h1v1h-1zm4 0h1v1h-1zm9 0h1v1h-1zm2 0h1v1h-1zm7 0h1v1h-1zm4 0h2v1h-2zm9 0h1v1h-1zm46 0h1v1h-1zm2 0h1v1h-1zm7 0h1v1h-1zm18 0h1v1h-1zm78 0h3v1h-3zm-536 1h2v1h-2zm7 0h1v1h-1zm30 0h1v1h-1zm119 0h1v1h-1zm54 0h1v1h-1zm2 0h1v1h-1zm2 0h1v1h-1zm3 0h1v1h-1zm2 0h2v1h-2zm5 0h1v1h-1zm5 0h1v1h-1zm2 0h3v1h-3zm69 0h1v1h-1zm8 0h2v1h-2zm6 0h1v1h-1zm5 0h1v1h-1zm6 0h2v1h-2zm5 0h1v1h-1zm3 0h3v1h-3zm8 0h1v1h-1zm23 0h1v1h-1zm7 0h1v1h-1zm67 0h1v1h-1zm6 0h1v1h-1zm13 0h1v1h-1zm2 0h1v1h-1zm5 0h1v1h-1zm71 0h1v1h-1zm103 0h1v1h-1zm-647 1h1v1h-1zm7 0h1v1h-1zm18 0h2v1h-2zm7 0h2v1h-2zm4 0h1v1h-1zm3 0h1v1h-1zm4 0h1v1h-1zm2 0h1v1h-1zm2 0h2v1h-2zm116 0h2v1h-2zm67 0h1v1h-1zm4 0h1v1h-1zm12 0h1v1h-1zm90 0h1v1h-1zm2 0h1v1h-1zm16 0h1v1h-1zm4 0h1v1h-1zm88 0h1v1h-1zm4 0h1v1h-1zm4 0h1v1h-1zm20 0h1v1h-1zm37 0h1v1h-1zm26 0h1v1h-1zm6 0h1v1h-1zm240 0h1v1h-1zm3 0h1v1h-1zm3 0h1v1h-1zm3 0h2v1h-2zm6 0h1v1h-1zm4 0h2v1h-2zm4 0h2v1h-2zm5 0h3v1h-3zm-809 1h1v1h-1zm6 0h1v1h-1zm19 0h1v1h-1zm8 0h1v1h-1zm2 0h1v1h-1zm5 0h1v1h-1zm2 0h1v1h-1zm191 0h3v1h-3zm9 0h1v1h-1zm3 0h1v1h-1zm90 0h1v1h-1zm118 0h1v1h-1zm5 0h1v1h-1zm2 0h1v1h-1zm7 0h4v1h-4zm69 0h2v1h-2zm3 0h1v1h-1zm243 0h1v1h-1zm3 0h1v1h-1zm4 0h1v1h-1zm8 0h1v1h-1zm4 0h2v1h-2zm5 0h2v1h-2zm6 0h1v2h-1zm-803 1h2v1h-2zm6 0h1v1h-1zm14 0h1v1h-1zm3 0h1v1h-1zm417 0h2v1h-2zm5 0h4v1h-4zm5 0h1v1h-1zm2 0h2v1h-2zm12 0h1v1h-1zm6 0h1v1h-1zm61 0h1v1h-1zm106 0h3v1h-3zm140 0h1v1h-1zm6 0h1v1h-1zm24 0h1v1h-1zm2 0h1v2h-1zm-817 1h2v1h-2zm11 0h2v1h-2zm14 0h3v1h-3zm10 0h1v1h-1zm427 0h1v1h-1zm12 0h1v1h-1zm2 0h2v1h-2zm3 0h1v1h-1zm10 0h1v1h-1zm20 0h1v1h-1zm4 0h1v1h-1zm13 0h2v1h-2zm11 0h1v1h-1zm241 0h2v1h-2zm4 0h1v1h-1zm25 0h2v1h-2zm-797 1h1v1h-1zm7 0h2v1h-2zm3 0h2v1h-2zm453 0h1v1h-1zm2 0h1v1h-1zm5 0h3v1h-3zm8 0h1v1h-1zm2 0h1v1h-1zm7 0h1v1h-1zm5 0h1v1h-1zm19 0h2v1h-2zm3 0h2v1h-2zm4 0h1v1h-1zm257 0h1v1h-1zm2 0h1v1h-1zm27 0h2v1h-2zm-799 1h2v1h-2zm4 0h1v1h-1zm464 0h2v1h-2zm3 0h2v1h-2zm10 0h1v1h-1zm5 0h1v1h-1zm2 0h1v1h-1zm11 0h1v1h-1zm4 0h3v1h-3zm11 0h5v1h-5zm261 0h2v1h-2zm5 0h1v1h-1zm3 0h1v1h-1zm5 0h1v1h-1zm13 0h1v1h-1zm36 0h1v1h-1zm-367 1h1v1h-1zm6 0h1v1h-1zm4 0h1v1h-1zm3 0h2v1h-2zm6 0h1v1h-1zm6 0h1v1h-1zm2 0h1v1h-1zm3 0h1v1h-1zm8 0h1v1h-1zm255 0h1v1h-1zm9 0h1v1h-1zm10 0h1v1h-1zm22 0h1v1h-1zm34 0h1v1h-1zm-361 1h1v1h-1zm2 0h1v1h-1zm6 0h1v1h-1zm5 0h2v1h-2zm6 0h1v1h-1zm6 0h1v1h-1zm273 0h1v1h-1zm3 0h2v1h-2zm6 0h1v1h-1zm5 0h2v1h-2zm7 0h1v1h-1zm2 0h1v1h-1zm65 0h1v1h-1zm-385 1h1v1h-1zm14 0h1v1h-1zm9 0h1v1h-1zm273 0h1v1h-1zm5 0h1v1h-1zm13 0h3v1h-3zm-1 1h1v1h-1zm3 0h1v1h-1zm50 0h1v1h-1zm-61 1h1v1h-1zm5 0h1v1h-1zm112 20h2v1h-2zm-10 1h12v1h-12zm-10 1h22v1h-22zm-588 1h61v1h-61zm578 0h11v1h-11zm12 0h20v1h-20zm-903 1h860v1h-860zm880 0h10v1h-10zm11 0h27v1h-27zm28 0h4v1h-4zm-919 1h369v1h-369zm370 0h490v1h-490zm500 0h31v1h-31zm32 0h21v1h-21zm-902 1h29v1h-29zm30 0h339v1h-339zm340 0h553v1h-553zm-370 1h362v1h-362zm363 0h6v1h-6zm7 0h522v1h-522zm523 0h12v1h-12zm13 0h17v1h-17zm-906 1h361v1h-361zm362 0h528v1h-528zm529 0h23v1h-23zm24 0h8v1h-8zm-915 1h459v1h-459zm460 0h167v1h-167zm168 0h67v1h-67zm68 0h73v1h-73zm74 0h146v1h-146zm-770 1h249v1h-249zm250 0h122v1h-122zm123 0h12v1h-12zm13 0h448v1h-448zm449 0h72v1h-72zm-835 1h898v1h-898zm0 1h313v1h-313zm374 0h517v1h-517zm486 1h22v1h-22zm0 1h15v1h-15zm0 1h7v1h-7z"/>
<path fill="#00ff18" d="M0 0m1118 90h8v38h-8zm-151 108h2v1h-2zm-4 1h1v1h-1zm3 0h2v1h-2zm-7 1h6v1h-6zm7 0h3v1h-3zm-10 1h2v1h-2zm3 0h10v1h-10zm-7 1h17v1h-17zm-4 1h7v1h-7zm8 0h2v1h-2zm3 0h2v1h-2zm3 0h3v1h-3zm4 0h3v1h-3zm-21 1h10v1h-10zm11 0h13v1h-13zm-15 1h8v1h-8zm9 0h11v1h-11zm12 0h7v1h-7zm-600 1h8v4h-8zm10 0h5v1h-5zm7 0h6v1h-6zm8 0h30v1h-30zm31 0h2v1h-2zm519 0h17v1h-17zm18 0h4v1h-4zm5 0h7v1h-7zm-914 1h3v1h-3zm4 0h16v1h-16zm17 0h2v1h-2zm3 0h1v1h-1zm2 0h4v1h-4zm5 0h17v1h-17zm18 0h4v1h-4zm279 0h2v1h-2zm6 0h3v1h-3zm4 0h1v1h-1zm3 0h9v1h-9zm10 0h22v1h-22zm23 0h2v1h-2zm3 0h5v1h-5zm6 0h22v1h-22zm62 0h2v1h-2zm3 0h2v2h-2zm3 0h1v2h-1zm2 0h3v1h-3zm4 0h5v1h-5zm6 0h5v1h-5zm6 0h10v1h-10zm11 0h9v1h-9zm10 0h2v1h-2zm3 0h26v1h-26zm27 0h7v1h-7zm8 0h5v1h-5zm6 0h14v1h-14zm15 0h2v1h-2zm3 0h1v1h-1zm102 0h6v1h-6zm7 0h1v1h-1zm2 0h5v1h-5zm6 0h7v1h-7zm8 0h13v1h-13zm19 0h1v1h-1zm2 0h3v1h-3zm4 0h1v1h-1zm2 0h8v1h-8zm9 0h11v1h-11zm12 0h16v1h-16zm17 0h30v1h-30zm32 0h1v1h-1zm2 0h5v1h-5zm7 0h1v1h-1zm3 0h5v1h-5zm6 0h4v1h-4zm5 0h2v1h-2zm3 0h3v1h-3zm4 0h3v1h-3zm4 0h2v1h-2zm3 0h2v1h-2zm3 0h1v1h-1zm2 0h9v1h-9zm10 0h25v1h-25zm26 0h7v1h-7zm8 0h4v1h-4zm5 0h20v1h-20zm21 0h14v1h-14zm16 0h8v1h-8zm9 0h6v1h-6zm-911 1h19v1h-19zm20 0h12v1h-12zm13 0h18v1h-18zm19 0h2v1h-2zm282 0h1v1h-1zm2 0h3v2h-3zm7 0h6v1h-6zm9 0h4v1h-4zm5 0h8v1h-8zm9 0h12v1h-12zm14 0h10v1h-10zm11 0h4v1h-4zm5 0h6v1h-6zm7 0h4v1h-4zm39 0h3v1h-3zm4 0h1v1h-1zm8 0h7v1h-7zm8 0h6v1h-6zm7 0h6v1h-6zm7 0h20v1h-20zm22 0h3v1h-3zm4 0h3v1h-3zm4 0h2v1h-2zm3 0h5v1h-5zm6 0h3v1h-3zm4 0h1v1h-1zm2 0h2v1h-2zm4 0h6v1h-6zm7 0h5v1h-5zm6 0h13v1h-13zm14 0h2v1h-2zm98 0h10v1h-10zm11 0h7v1h-7zm8 0h10v1h-10zm11 0h10v1h-10zm16 0h3v1h-3zm4 0h2v1h-2zm3 0h10v1h-10zm11 0h7v1h-7zm8 0h2v1h-2zm3 0h10v1h-10zm11 0h23v1h-23zm24 0h2v1h-2zm3 0h19v1h-19zm20 0h7v1h-7zm8 0h30v1h-30zm31 0h1v1h-1zm2 0h15v1h-15zm16 0h11v1h-11zm12 0h18v1h-18zm19 0h2v1h-2zm3 0h17v1h-17zm18 0h3v1h-3zm4 0h17v1h-17zm24 0h1v1h-1zm-920 1h30v1h-30zm31 0h24v1h-24zm310 0h2v1h-2zm3 0h5v1h-5zm6 0h1v1h-1zm2 0h13v1h-13zm14 0h18v1h-18zm19 0h6v1h-6zm7 0h6v1h-6zm7 0h9v1h-9zm42 0h1v1h-1zm2 0h9v1h-9zm10 0h5v1h-5zm6 0h13v1h-13zm14 0h7v1h-7zm8 0h10v1h-10zm11 0h5v1h-5zm6 0h24v1h-24zm25 0h12v1h-12zm13 0h3v1h-3zm4 0h9v1h-9zm107 0h36v1h-36zm37 0h6v1h-6zm7 0h17v1h-17zm18 0h9v1h-9zm10 0h4v1h-4zm5 0h4v1h-4zm5 0h4v1h-4zm5 0h4v1h-4zm6 0h20v1h-20zm21 0h2v1h-2zm4 0h25v1h-25zm26 0h7v1h-7zm8 0h2v1h-2zm3 0h5v1h-5zm6 0h6v1h-6zm7 0h7v1h-7zm8 0h58v1h-58zm59 0h28v1h-28zm36 0h1v1h-1zm-918 1h2v1h-2zm3 0h9v1h-9zm10 0h18v1h-18zm19 0h13v1h-13zm14 0h1v1h-1zm2 0h8v1h-8zm268 0h5v1h-5zm7 0h1v1h-1zm15 0h1v1h-1zm4 0h23v1h-23zm24 0h5v1h-5zm6 0h5v1h-5zm6 0h13v1h-13zm14 0h1v1h-1zm2 0h12v1h-12zm48 0h8v2h-8zm9 0h1v1h-1zm3 0h4v1h-4zm8 0h2v1h-2zm3 0h2v1h-2zm4 0h2v2h-2zm4 0h5v1h-5zm6 0h11v1h-11zm12 0h6v1h-6zm8 0h9v1h-9zm10 0h6v1h-6zm9 0h8v1h-8zm9 0h9v1h-9zm10 0h2v1h-2zm3 0h8v1h-8zm107 0h8v1h-8zm9 0h11v1h-11zm12 0h17v1h-17zm18 0h24v1h-24zm25 0h7v1h-7zm8 0h12v1h-12zm13 0h3v1h-3zm4 0h53v1h-53zm54 0h3v1h-3zm4 0h14v1h-14zm15 0h25v1h-25zm26 0h8v1h-8zm9 0h29v1h-29zm30 0h9v1h-9zm10 0h9v1h-9zm10 0h2v1h-2zm3 0h9v1h-9zm24 0h1v1h-1zm-921 1h3v1h-3zm4 0h13v1h-13zm14 0h5v1h-5zm6 0h15v1h-15zm16 0h4v1h-4zm5 0h8v1h-8zm9 0h2v1h-2zm264 0h3v1h-3zm4 0h1v2h-1zm23 0h8v1h-8zm9 0h1v1h-1zm3 0h1v2h-1zm2 0h2v1h-2zm3 0h2v1h-2zm5 0h12v1h-12zm13 0h12v1h-12zm13 0h6v1h-6zm7 0h6v1h-6zm54 0h2v3h-2zm8 0h1v2h-1zm11 0h2v1h-2zm3 0h2v1h-2zm6 0h1v1h-1zm2 0h2v1h-2zm3 0h4v1h-4zm5 0h1v1h-1zm2 0h3v1h-3zm5 0h11v1h-11zm12 0h6v1h-6zm7 0h5v1h-5zm6 0h7v1h-7zm8 0h15v1h-15zm116 0h6v2h-6zm8 0h23v1h-23zm24 0h16v1h-16zm17 0h11v1h-11zm12 0h5v1h-5zm6 0h4v1h-4zm5 0h1v1h-1zm4 0h1v1h-1zm2 0h3v1h-3zm4 0h11v1h-11zm12 0h11v1h-11zm13 0h13v1h-13zm14 0h32v1h-32zm33 0h27v1h-27zm28 0h16v1h-16zm17 0h3v1h-3zm4 0h33v1h-33zm34 0h5v1h-5zm7 0h4v1h-4zm5 0h5v1h-5zm-897 1h13v1h-13zm14 0h4v1h-4zm5 0h13v1h-13zm14 0h10v1h-10zm11 0h7v1h-7zm8 0h3v1h-3zm114 0h1v2h-1zm71 0h2v3h-2zm81 0h1v2h-1zm2 0h1v1h-1zm25 0h3v1h-3zm5 0h2v2h-2zm10 0h2v2h-2zm6 0h4v1h-4zm5 0h2v2h-2zm3 0h2v1h-2zm3 0h3v1h-3zm6 0h1v1h-1zm2 0h1v1h-1zm2 0h4v1h-4zm7 0h5v2h-5zm6 0h4v2h-4zm44 0h5v2h-5zm26 0h1v3h-1zm7 0h2v1h-2zm8 0h6v1h-6zm11 0h1v1h-1zm4 0h10v1h-10zm11 0h4v1h-4zm5 0h3v1h-3zm4 0h1v2h-1zm2 0h9v1h-9zm11 0h9v1h-9zm11 0h3v1h-3zm112 0h11v2h-11zm12 0h5v1h-5zm6 0h15v1h-15zm16 0h20v1h-20zm22 0h2v1h-2zm3 0h6v1h-6zm7 0h5v1h-5zm6 0h4v1h-4zm5 0h17v1h-17zm18 0h18v1h-18zm19 0h3v1h-3zm4 0h1v1h-1zm2 0h6v1h-6zm7 0h8v1h-8zm9 0h2v1h-2zm3 0h6v1h-6zm8 0h11v1h-11zm13 0h3v1h-3zm4 0h16v1h-16zm17 0h15v1h-15zm16 0h3v1h-3zm4 0h7v1h-7zm9 0h5v1h-5zm6 0h16v1h-16zm17 0h10v1h-10zm-889 1h2v2h-2zm3 0h12v1h-12zm13 0h38v1h-38zm330 0h2v1h-2zm20 0h2v1h-2zm3 0h1v1h-1zm7 0h3v2h-3zm9 0h4v1h-4zm92 0h1v2h-1zm7 0h3v1h-3zm4 0h2v1h-2zm12 0h8v1h-8zm9 0h1v1h-1zm3 0h1v2h-1zm4 0h1v1h-1zm2 0h1v1h-1zm4 0h1v1h-1zm4 0h4v1h-4zm8 0h7v1h-7zm11 0h1v2h-1zm104 0h2v3h-2zm3 0h2v1h-2zm16 0h8v1h-8zm9 0h3v1h-3zm4 0h11v2h-11zm12 0h10v1h-10zm12 0h12v1h-12zm13 0h35v1h-35zm36 0h26v1h-26zm27 0h30v1h-30zm31 0h6v1h-6zm7 0h10v1h-10zm11 0h15v1h-15zm16 0h2v1h-2zm4 0h27v1h-27zm28 0h9v1h-9zm10 0h7v1h-7zm27 0h1v1h-1zm7 0h1v1h-1zm-919 1h2v1h-2zm3 0h2v1h-2zm3 0h1v1h-1zm2 0h3v1h-3zm5 0h1v1h-1zm2 0h8v1h-8zm10 0h4v1h-4zm5 0h1v1h-1zm2 0h3v1h-3zm4 0h10v1h-10zm11 0h1v1h-1zm2 0h1v1h-1zm333 0h2v1h-2zm11 0h1v1h-1zm4 0h3v1h-3zm44 0h3v1h-3zm10 0h1v1h-1zm30 0h2v1h-2zm5 0h1v1h-1zm11 0h4v1h-4zm5 0h3v1h-3zm13 0h3v1h-3zm4 0h2v1h-2zm4 0h3v1h-3zm8 0h4v1h-4zm5 0h2v1h-2zm114 0h1v2h-1zm5 0h1v1h-1zm2 0h2v1h-2zm3 0h4v1h-4zm6 0h11v1h-11zm24 0h31v1h-31zm32 0h28v1h-28zm29 0h20v1h-20zm21 0h7v1h-7zm8 0h1v1h-1zm2 0h1v1h-1zm2 0h5v1h-5zm6 0h4v1h-4zm5 0h2v1h-2zm3 0h10v1h-10zm11 0h4v1h-4zm5 0h15v1h-15zm16 0h10v1h-10zm11 0h1v1h-1zm2 0h4v1h-4zm5 0h34v1h-34zm35 0h5v1h-5zm-649 1h1v1h-1zm504 0h1v1h-1zm96 0h1v2h-1zm35 0h1v1h-1zm18 0h2v1h-2zm21 0h1v1h-1zm-262 1h1v1h-1zm49 0h1v1h-1zm7 0h1v1h-1zm59 0h1v1h-1zm11 0h1v1h-1zm11 0h1v1h-1zm88 0h1v1h-1zm32 0h1v1h-1zm-173 1h1v1h-1zm160 0h1v1h-1zm10 0h1v1h-1zm-103 1h1v1h-1zm2 0h1v1h-1zm74 0h1v1h-1zm-156 1h1v1h-1zm16 0h1v1h-1zm26 0h1v1h-1zm-24 1h1v1h-1zm29 0h1v1h-1zm89 0h1v1h-1zm-158 1h1v1h-1zm11 0h1v1h-1zm20 0h1v1h-1zm7 0h1v1h-1zm15 1h1v1h-1zm-6 1h1v1h-1zm9 0h1v1h-1zm76 0h1v1h-1zm-517 99h37v1h-37zm38 0h23v1h-23zm-351 1h65v1h-65zm66 0h39v1h-39zm40 0h4v1h-4zm5 0h14v1h-14zm15 0h3v1h-3zm4 0h3v1h-3zm4 0h23v1h-23zm24 0h3v1h-3zm4 0h22v1h-22zm23 0h46v1h-46zm47 0h11v1h-11zm12 0h6v1h-6zm7 0h9v1h-9zm10 0h4v1h-4zm5 0h11v1h-11zm12 0h3v1h-3zm4 0h4v1h-4zm5 0h5v1h-5zm6 0h10v1h-10zm11 0h85v1h-85zm86 0h210v1h-210zm211 0h11v1h-11zm12 0h10v1h-10zm11 0h13v1h-13zm14 0h13v1h-13zm14 0h9v1h-9zm10 0h20v1h-20zm21 0h177v1h-177zm-683 1h12v1h-12zm13 0h30v1h-30zm31 0h34v1h-34zm35 0h4v1h-4zm5 0h18v1h-18zm19 0h2v1h-2zm3 0h2v1h-2zm3 0h14v1h-14zm15 0h1v1h-1zm2 0h4v1h-4zm5 0h20v1h-20zm21 0h4v1h-4zm6 0h2v1h-2zm4 0h26v1h-26zm27 0h29v1h-29zm30 0h12v1h-12zm13 0h30v1h-30zm31 0h2v1h-2zm3 0h4v1h-4zm5 0h4v1h-4zm5 0h1v1h-1zm2 0h2v1h-2zm3 0h1v1h-1zm2 0h3v1h-3zm4 0h6v1h-6zm7 0h7v1h-7zm8 0h26v1h-26zm27 0h85v1h-85zm86 0h29v1h-29zm30 0h89v1h-89zm90 0h36v1h-36zm37 0h8v1h-8zm9 0h28v1h-28zm29 0h4v1h-4zm5 0h36v1h-36zm37 0h13v1h-13zm15 0h10v1h-10zm11 0h130v1h-130zm131 0h51v1h-51zm-809 1h30v1h-30zm31 0h45v1h-45zm46 0h11v1h-11zm12 0h6v1h-6zm7 0h2v1h-2zm3 0h6v1h-6zm7 0h16v1h-16zm17 0h2v1h-2zm4 0h3v1h-3zm4 0h2v1h-2zm3 0h1v1h-1zm2 0h4v1h-4zm5 0h11v1h-11zm12 0h2v1h-2zm3 0h1v1h-1zm3 0h122v1h-122zm123 0h2v1h-2zm3 0h1v1h-1zm2 0h21v1h-21zm22 0h232v1h-232zm233 0h3v1h-3zm4 0h13v1h-13zm14 0h5v1h-5zm6 0h2v1h-2zm4 0h4v1h-4zm5 0h37v1h-37zm38 0h7v1h-7zm8 0h16v1h-16zm17 0h13v1h-13zm14 0h12v1h-12zm13 0h10v1h-10zm11 0h1v1h-1zm2 0h4v1h-4zm5 0h177v1h-177zm234 0h6v1h-6zm-917 1h105v1h-105zm107 0h3v1h-3zm4 0h11v1h-11zm15 0h11v1h-11zm12 0h9v1h-9zm10 0h9v1h-9zm10 0h10v1h-10zm11 0h3v1h-3zm4 0h15v1h-15zm16 0h54v1h-54zm55 0h19v1h-19zm20 0h1v1h-1zm2 0h4v1h-4zm5 0h15v1h-15zm16 0h7v1h-7zm10 0h4v1h-4zm5 0h2v1h-2zm3 0h24v1h-24zm25 0h67v1h-67zm68 0h26v1h-26zm27 0h15v1h-15zm16 0h27v1h-27zm28 0h10v1h-10zm11 0h65v1h-65zm67 0h18v1h-18zm19 0h3v1h-3zm4 0h62v1h-62zm63 0h4v1h-4zm5 0h9v1h-9zm10 0h3v1h-3zm4 0h23v1h-23zm24 0h6v1h-6zm7 0h4v1h-4zm5 0h14v1h-14zm15 0h3v1h-3zm4 0h153v1h-153zm201 0h15v1h-15zm-908 1h14v1h-14zm15 0h8v1h-8zm9 0h31v1h-31zm32 0h5v1h-5zm6 0h2v1h-2zm3 0h11v1h-11zm12 0h6v1h-6zm7 0h11v1h-11zm12 0h9v1h-9zm10 0h19v1h-19zm20 0h4v1h-4zm5 0h2v1h-2zm3 0h14v1h-14zm15 0h2v1h-2zm3 0h3v1h-3zm4 0h1v1h-1zm3 0h2v1h-2zm3 0h8v1h-8zm9 0h36v1h-36zm37 0h14v1h-14zm15 0h22v1h-22zm23 0h14v1h-14zm15 0h5v1h-5zm6 0h3v1h-3zm4 0h6v1h-6zm7 0h6v1h-6zm7 0h1v1h-1zm2 0h1v1h-1zm3 0h1v1h-1zm2 0h2v1h-2zm4 0h3v1h-3zm4 0h6v1h-6zm7 0h10v1h-10zm11 0h79v1h-79zm80 0h3v1h-3zm4 0h36v1h-36zm37 0h44v1h-44zm45 0h50v1h-50zm51 0h16v1h-16zm17 0h6v1h-6zm7 0h10v1h-10zm11 0h10v1h-10zm11 0h31v1h-31zm33 0h1v1h-1zm2 0h16v1h-16zm17 0h18v1h-18zm19 0h2v1h-2zm3 0h6v1h-6zm7 0h4v2h-4zm5 0h10v1h-10zm11 0h22v1h-22zm23 0h159v1h-159zm199 0h23v1h-23zm-900 1h33v1h-33zm34 0h29v1h-29zm30 0h9v1h-9zm10 0h4v1h-4zm5 0h26v1h-26zm27 0h17v1h-17zm20 0h2v1h-2zm3 0h1v1h-1zm2 0h5v1h-5zm6 0h1v1h-1zm2 0h8v1h-8zm9 0h3v1h-3zm4 0h5v1h-5zm6 0h3v2h-3zm4 0h24v1h-24zm25 0h13v1h-13zm14 0h19v1h-19zm20 0h2v1h-2zm3 0h23v1h-23zm24 0h12v1h-12zm13 0h3v1h-3zm5 0h9v1h-9zm10 0h1v1h-1zm2 0h4v2h-4zm5 0h3v1h-3zm4 0h6v1h-6zm7 0h7v1h-7zm8 0h24v1h-24zm25 0h113v1h-113zm114 0h29v1h-29zm30 0h74v1h-74zm75 0h5v1h-5zm6 0h17v1h-17zm18 0h42v1h-42zm43 0h1v1h-1zm2 0h33v1h-33zm34 0h2v2h-2zm3 0h4v1h-4zm5 0h2v1h-2zm3 0h1v1h-1zm7 0h8v1h-8zm10 0h11v1h-11zm13 0h75v1h-75zm76 0h94v1h-94zm125 0h32v1h-32zm-891 1h73v1h-73zm75 0h24v1h-24zm25 0h5v1h-5zm6 0h4v4h-4zm5 0h14v2h-14zm15 0h4v1h-4zm5 0h2v1h-2zm3 0h14v1h-14zm15 0h8v1h-8zm13 0h4v1h-4zm5 0h2v1h-2zm3 0h14v1h-14zm15 0h24v1h-24zm25 0h28v1h-28zm29 0h15v1h-15zm16 0h10v1h-10zm11 0h11v1h-11zm18 0h2v1h-2zm3 0h12v1h-12zm13 0h4v1h-4zm5 0h46v1h-46zm47 0h18v1h-18zm19 0h91v1h-91zm92 0h84v1h-84zm85 0h3v1h-3zm4 0h11v1h-11zm12 0h5v1h-5zm6 0h31v1h-31zm32 0h12v1h-12zm13 0h8v1h-8zm9 0h1v1h-1zm2 0h11v1h-11zm12 0h10v1h-10zm14 0h6v1h-6zm7 0h5v1h-5zm6 0h1v1h-1zm2 0h6v1h-6zm7 0h8v1h-8zm9 0h177v1h-177zm200 0h40v1h-40zm-883 1h4v1h-4zm5 0h36v1h-36zm37 0h30v1h-30zm31 0h1v1h-1zm3 0h15v1h-15zm16 0h10v1h-10zm11 0h2v1h-2zm23 0h1v1h-1zm2 0h1v1h-1zm3 0h6v1h-6zm8 0h4v1h-4zm5 0h13v1h-13zm14 0h2v1h-2zm3 0h5v1h-5zm6 0h4v1h-4zm6 0h11v1h-11zm12 0h13v1h-13zm14 0h16v1h-16zm17 0h16v1h-16zm17 0h22v1h-22zm23 0h9v1h-9zm10 0h2v1h-2zm3 0h6v1h-6zm7 0h1v2h-1zm2 0h6v1h-6zm7 0h1v1h-1zm2 0h18v1h-18zm19 0h68v1h-68zm69 0h63v1h-63zm64 0h24v1h-24zm25 0h87v1h-87zm88 0h6v1h-6zm7 0h6v1h-6zm7 0h3v2h-3zm4 0h6v1h-6zm7 0h2v1h-2zm3 0h32v1h-32zm34 0h1v1h-1zm2 0h14v2h-14zm15 0h12v1h-12zm13 0h7v1h-7zm8 0h17v1h-17zm18 0h5v1h-5zm6 0h12v1h-12zm13 0h32v1h-32zm33 0h138v1h-138zm152 0h49v1h-49zm-874 1h18v2h-18zm19 0h32v1h-32zm33 0h11v1h-11zm12 0h6v1h-6zm7 0h2v1h-2zm4 0h12v1h-12zm13 0h10v1h-10zm11 0h6v1h-6zm12 0h3v1h-3zm4 0h2v1h-2zm3 0h5v1h-5zm8 0h4v1h-4zm6 0h2v1h-2zm3 0h13v1h-13zm14 0h8v1h-8zm9 0h1v1h-1zm2 0h8v1h-8zm9 0h1v1h-1zm2 0h4v1h-4zm5 0h8v1h-8zm9 0h1v1h-1zm2 0h35v1h-35zm36 0h27v1h-27zm28 0h14v1h-14zm15 0h9v1h-9zm12 0h8v1h-8zm9 0h8v1h-8zm9 0h2v1h-2zm3 0h2v1h-2zm3 0h2v1h-2zm3 0h13v1h-13zm14 0h57v1h-57zm58 0h29v1h-29zm30 0h31v1h-31zm32 0h9v1h-9zm10 0h13v1h-13zm14 0h41v1h-41zm42 0h46v1h-46zm47 0h13v1h-13zm18 0h1v1h-1zm2 0h40v1h-40zm41 0h1v1h-1zm18 0h1v1h-1zm2 0h1v1h-1zm2 0h16v1h-16zm17 0h4v1h-4zm5 0h4v1h-4zm5 0h2v1h-2zm3 0h4v1h-4zm5 0h6v1h-6zm7 0h5v1h-5zm6 0h5v2h-5zm6 0h85v1h-85zm86 0h8v1h-8zm9 0h76v1h-76zm82 0h57v1h-57zm-847 1h9v1h-9zm10 0h12v1h-12zm13 0h9v1h-9zm10 0h12v1h-12zm13 0h5v1h-5zm6 0h5v1h-5zm6 0h6v1h-6zm7 0h7v1h-7zm8 0h6v1h-6zm7 0h5v1h-5zm12 0h1v1h-1zm2 0h3v1h-3zm4 0h7v1h-7zm9 0h2v1h-2zm3 0h1v1h-1zm2 0h2v1h-2zm3 0h6v1h-6zm7 0h1v1h-1zm2 0h6v1h-6zm7 0h7v1h-7zm8 0h3v1h-3zm4 0h8v1h-8zm9 0h35v1h-35zm36 0h11v1h-11zm12 0h31v1h-31zm32 0h9v1h-9zm10 0h1v1h-1zm2 0h1v1h-1zm3 0h4v1h-4zm5 0h1v1h-1zm2 0h4v1h-4zm5 0h4v1h-4zm6 0h2v4h-2zm3 0h4v1h-4zm5 0h1v1h-1zm2 0h34v1h-34zm35 0h95v1h-95zm96 0h38v1h-38zm39 0h4v1h-4zm5 0h42v1h-42zm43 0h4v1h-4zm5 0h19v1h-19zm21 0h7v1h-7zm8 0h5v1h-5zm6 0h6v1h-6zm7 0h6v1h-6zm7 0h2v2h-2zm3 0h7v1h-7zm8 0h2v1h-2zm3 0h12v1h-12zm13 0h5v1h-5zm6 0h3v1h-3zm4 0h9v1h-9zm10 0h5v1h-5zm6 0h2v1h-2zm3 0h8v1h-8zm9 0h15v1h-15zm16 0h4v1h-4zm5 0h23v1h-23zm24 0h3v1h-3zm4 0h2v1h-2zm9 0h16v1h-16zm18 0h216v1h-216zm-707 1h13v1h-13zm14 0h54v1h-54zm55 0h3v1h-3zm4 0h25v1h-25zm26 0h3v1h-3zm4 0h2v1h-2zm3 0h2v1h-2zm3 0h1v1h-1zm2 0h4v1h-4zm5 0h9v1h-9zm10 0h4v1h-4zm6 0h1v1h-1zm3 0h3v1h-3zm4 0h12v1h-12zm14 0h2v1h-2zm3 0h1v1h-1zm2 0h12v1h-12zm13 0h5v1h-5zm6 0h7v1h-7zm9 0h16v1h-16zm17 0h14v1h-14zm15 0h47v1h-47zm48 0h5v1h-5zm6 0h3v1h-3zm6 0h3v1h-3zm4 0h1v1h-1zm5 0h117v1h-117zm118 0h29v1h-29zm30 0h3v1h-3zm4 0h24v1h-24zm25 0h63v1h-63zm64 0h23v1h-23zm25 0h12v1h-12zm16 0h20v1h-20zm21 0h14v1h-14zm15 0h2v1h-2zm3 0h13v1h-13zm14 0h1v1h-1zm2 0h6v1h-6zm7 0h4v1h-4zm6 0h3v1h-3zm4 0h3v1h-3zm4 0h3v1h-3zm4 0h2v1h-2zm3 0h5v1h-5zm6 0h17v1h-17zm19 0h12v1h-12zm13 0h233v1h-233zm-690 1h4v1h-4zm5 0h11v1h-11zm12 0h6v1h-6zm7 0h13v1h-13zm14 0h5v1h-5zm6 0h32v1h-32zm33 0h28v1h-28zm29 0h4v1h-4zm5 0h6v1h-6zm7 0h4v1h-4zm5 0h1v1h-1zm3 0h3v1h-3zm5 0h17v1h-17zm18 0h8v1h-8zm9 0h8v1h-8zm9 0h11v1h-11zm12 0h11v1h-11zm12 0h32v1h-32zm33 0h1v1h-1zm2 0h4v1h-4zm5 0h34v1h-34zm35 0h4v2h-4zm5 0h6v1h-6zm8 0h4v1h-4zm9 0h13v1h-13zm14 0h25v1h-25zm26 0h46v1h-46zm47 0h1v1h-1zm2 0h61v1h-61zm62 0h5v1h-5zm6 0h100v1h-100zm101 0h2v1h-2zm3 0h2v1h-2zm3 0h13v1h-13zm14 0h3v2h-3zm4 0h5v1h-5zm7 0h3v1h-3zm4 0h11v1h-11zm12 0h7v1h-7zm9 0h2v1h-2zm3 0h7v1h-7zm8 0h7v1h-7zm9 0h8v1h-8zm9 0h5v1h-5zm6 0h8v1h-8zm9 0h4v1h-4zm6 0h6v2h-6zm7 0h23v1h-23zm24 0h4v1h-4zm6 0h24v1h-24zm25 0h29v1h-29zm30 0h61v1h-61zm62 0h117v1h-117zm-806 1h14v1h-14zm15 0h4v1h-4zm5 0h18v1h-18zm19 0h36v1h-36zm37 0h17v1h-17zm18 0h4v1h-4zm5 0h6v1h-6zm7 0h2v1h-2zm3 0h1v1h-1zm2 0h12v2h-12zm13 0h1v1h-1zm2 0h4v2h-4zm6 0h1v1h-1zm3 0h1v1h-1zm2 0h1v1h-1zm2 0h15v1h-15zm16 0h2v1h-2zm3 0h3v2h-3zm4 0h4v2h-4zm5 0h31v1h-31zm32 0h4v1h-4zm5 0h27v1h-27zm28 0h14v1h-14zm15 0h13v1h-13zm14 0h4v1h-4zm10 0h3v1h-3zm5 0h1v2h-1zm2 0h5v1h-5zm9 0h7v1h-7zm8 0h8v1h-8zm9 0h13v1h-13zm14 0h30v1h-30zm31 0h6v1h-6zm7 0h50v1h-50zm51 0h12v1h-12zm13 0h17v1h-17zm19 0h33v1h-33zm34 0h60v1h-60zm61 0h17v1h-17zm18 0h4v1h-4zm5 0h1v1h-1zm3 0h5v1h-5zm10 0h30v1h-30zm32 0h7v1h-7zm8 0h2v1h-2zm3 0h2v2h-2zm3 0h5v2h-5zm6 0h7v1h-7zm8 0h13v1h-13zm14 0h7v1h-7zm15 0h16v1h-16zm17 0h16v1h-16zm17 0h180v1h-180zm181 0h49v1h-49zm-874 1h12v1h-12zm13 0h9v1h-9zm10 0h36v1h-36zm37 0h4v1h-4zm5 0h7v1h-7zm8 0h6v1h-6zm7 0h18v1h-18zm19 0h3v1h-3zm4 0h2v1h-2zm3 0h4v1h-4zm25 0h7v1h-7zm9 0h6v1h-6zm8 0h6v1h-6zm8 0h1v1h-1zm11 0h3v1h-3zm4 0h38v1h-38zm39 0h8v1h-8zm9 0h3v1h-3zm4 0h5v1h-5zm6 0h6v1h-6zm7 0h24v1h-24zm25 0h1v1h-1zm2 0h1v1h-1zm3 0h3v1h-3zm4 0h5v1h-5zm8 0h2v1h-2zm3 0h5v1h-5zm6 0h4v1h-4zm5 0h3v1h-3zm4 0h3v1h-3zm4 0h7v1h-7zm9 0h4v1h-4zm65 0h20v1h-20zm21 0h9v1h-9zm10 0h33v1h-33zm34 0h8v1h-8zm9 0h8v1h-8zm9 0h94v1h-94zm96 0h5v1h-5zm6 0h6v1h-6zm7 0h19v1h-19zm20 0h6v1h-6zm7 0h6v1h-6zm7 0h2v1h-2zm3 0h9v1h-9zm19 0h13v1h-13zm16 0h13v1h-13zm14 0h4v1h-4zm7 0h23v1h-23zm24 0h6v1h-6zm7 0h2v1h-2zm3 0h14v1h-14zm15 0h33v1h-33zm34 0h51v1h-51zm52 0h4v1h-4zm5 0h93v1h-93zm94 0h30v1h-30zm-33 1h10v1h-10zm11 0h52v1h-52zm-11 1h63v2h-63zm0 2h40v1h-40zm41 0h22v1h-22zm-41 1h63v1h-63zm0 1h5v1h-5zm6 0h44v1h-44zm45 0h8v1h-8zm-51 1h47v1h-47zm0 1h35v1h-35zm0 1h23v1h-23zm0 1h11v1h-11zm189 120h10v1h-10zm11 0h1v1h-1zm4 0h9v1h-9zm10 0h5v1h-5zm-25 1h12v4h-12zm13 0h18v1h-18zm2 1h8v1h-8zm9 0h5v1h-5zm6 0h1v1h-1zm-17 1h1v1h-1zm2 0h11v1h-11zm14 0h1v1h-1zm-15 1h10v1h-10zm12 0h1v1h-1zm4 0h1v1h-1zm-30 1h5v1h-5zm6 0h7v1h-7zm8 0h11v1h-11zm12 0h2v1h-2zm3 0h1v1h-1zm-29 1h4v1h-4zm5 0h8v1h-8zm10 0h9v1h-9zm10 0h4v1h-4zm5 0h1v3h-1zm-30 1h14v1h-14zm15 0h8v1h-8zm10 0h2v1h-2zm-25 1h12v1h-12zm13 0h1v1h-1zm2 0h9v1h-9zm11 0h1v1h-1zm2 0h1v1h-1zm-28 1h4v1h-4zm5 0h3v1h-3zm4 0h3v1h-3zm5 0h9v1h-9zm10 0h4v1h-4zm5 0h2v1h-2zm-29 21h1v19h-1zm-128 89h2v1h-2zm-4 1h6v1h-6zm-4 1h10v1h-10zm-3 1h11v1h-11zm-4 1h11v1h-11zm-4 1h9v1h-9zm-3 1h6v1h-6zm-4 1h4v1h-4zm-582 1h61v1h-61zm578 0h2v1h-2zm-891 1h271v3h-271zm273 0h6v3h-6zm7 0h1v2h-1zm2 0h341v2h-341zm342 0h23v3h-23zm25 0h3v1h-3zm6 0h3v2h-3zm4 0h4v3h-4zm5 0h4v1h-4zm6 0h6v1h-6zm7 0h10v1h-10zm11 0h1v1h-1zm4 0h16v1h-16zm17 0h3v1h-3zm4 0h3v1h-3zm4 0h4v1h-4zm6 0h2v1h-2zm5 0h1v2h-1zm2 0h2v1h-2zm4 0h1v1h-1zm124 0h2v3h-2zm-209 1h4v1h-4zm15 0h5v2h-5zm7 0h5v1h-5zm6 0h4v2h-4zm6 0h4v1h-4zm10 0h11v1h-11zm13 0h3v1h-3zm5 0h4v1h-4zm6 0h2v1h-2zm3 0h1v1h-1zm6 0h1v1h-1zm5 0h1v1h-1zm-448 1h1v1h-1zm2 0h2v1h-2zm3 0h3v1h-3zm4 0h21v1h-21zm82 0h244v1h-244zm245 0h4v1h-4zm29 0h5v1h-5zm6 0h3v1h-3zm16 0h5v1h-5zm12 0h5v1h-5zm12 0h15v1h-15zm16 0h1v1h-1zm2 0h1v1h-1zm2 0h1v1h-1zm3 0h5v1h-5zm6 0h2v1h-2zm4 0h1v1h-1zm189 56h7v1h-7zm-9 1h5v1h-5zm6 0h9v1h-9zm-14 1h24v1h-24zm-586 1h61v1h-61zm578 0h32v1h-32zm-891 1h860v1h-860zm883 0h22v1h-22zm23 0h2v1h-2zm3 0h14v1h-14zm-909 1h317v1h-317zm318 0h542v1h-542zm557 0h30v1h-30zm31 0h17v1h-17zm-906 1h142v1h-142zm143 0h104v1h-104zm105 0h77v1h-77zm78 0h463v1h-463zm464 0h70v1h-70zm77 0h27v1h-27zm28 0h16v1h-16zm17 0h11v1h-11zm-912 1h494v1h-494zm495 0h200v1h-200zm201 0h227v1h-227zm-696 1h736v1h-736zm737 0h163v1h-163zm164 0h12v1h-12zm13 0h9v1h-9zm-914 1h34v1h-34zm35 0h885v1h-885zm-35 1h548v1h-548zm549 0h289v1h-289zm290 0h63v1h-63zm64 0h3v1h-3zm4 0h6v1h-6zm-907 1h34v1h-34zm35 0h726v1h-726zm727 0h144v1h-144zm-762 1h276v1h-276zm277 0h255v1h-255zm256 0h366v1h-366zm-533 1h45v1h-45zm46 0h267v1h-267zm328 0h460v1h-460zm461 0h58v1h-58zm25 1h26v1h-26zm0 1h19v1h-19zm0 1h12v1h-12zm0 1h5v1h-5z"/>
<path fill="#10e000" d="M0 0m967 206h2v1h-2zm-4 1h6v1h-6zm-3 1h3v1h-3zm4 0h2v1h-2zm3 0h2v1h-2zm-11 1h8v1h-8zm9 0h2v1h-2zm3 0h1v1h-1zm-16 1h15v1h-15zm-4 1h11v1h-11zm12 0h3v1h-3zm-15 1h14v1h-14zm-4 1h9v1h-9zm10 0h5v1h-5zm-555 1h1v1h-1zm10 0h1v3h-1zm8 0h1v1h-1zm3 0h1v2h-1zm520 0h1v1h-1zm2 0h8v1h-8zm9 0h1v1h-1zm2 0h2v1h-2zm-904 1h1v1h-1zm3 0h2v2h-2zm3 0h3v2h-3zm5 0h3v1h-3zm8 0h6v1h-6zm12 0h7v1h-7zm8 0h5v1h-5zm6 0h1v1h-1zm5 0h2v1h-2zm335 0h2v1h-2zm15 0h2v1h-2zm44 0h2v2h-2zm10 0h1v4h-1zm16 0h1v2h-1zm15 0h1v1h-1zm4 0h1v4h-1zm18 0h1v1h-1zm11 0h2v3h-2zm9 0h1v1h-1zm8 0h2v1h-2zm4 0h2v2h-2zm119 0h1v1h-1zm3 0h1v1h-1zm3 0h3v1h-3zm5 0h4v1h-4zm5 0h3v1h-3zm5 0h1v1h-1zm2 0h8v1h-8zm10 0h1v1h-1zm3 0h4v2h-4zm5 0h1v1h-1zm2 0h4v1h-4zm5 0h5v1h-5zm6 0h4v1h-4zm5 0h14v1h-14zm15 0h9v1h-9zm11 0h3v1h-3zm4 0h4v1h-4zm5 0h11v1h-11zm12 0h33v1h-33zm34 0h8v1h-8zm9 0h30v1h-30zm31 0h34v1h-34zm35 0h17v1h-17zm19 0h7v1h-7zm8 0h2v1h-2zm-889 1h1v2h-1zm10 0h1v1h-1zm3 0h1v1h-1zm7 0h10v1h-10zm11 0h2v2h-2zm8 0h1v1h-1zm335 0h1v1h-1zm268 0h1v2h-1zm11 0h1v1h-1zm2 0h1v1h-1zm3 0h3v1h-3zm6 0h1v1h-1zm6 0h2v1h-2zm3 0h1v1h-1zm2 0h1v1h-1zm13 0h5v1h-5zm7 0h13v1h-13zm14 0h4v1h-4zm5 0h39v1h-39zm40 0h10v1h-10zm11 0h7v1h-7zm8 0h2v1h-2zm3 0h46v1h-46zm47 0h3v1h-3zm4 0h22v1h-22zm23 0h13v1h-13zm14 0h15v1h-15zm16 0h7v1h-7zm-887 1h1v1h-1zm3 0h2v1h-2zm24 0h2v1h-2zm7 0h3v1h-3zm406 0h1v1h-1zm95 0h1v2h-1zm130 0h1v1h-1zm5 0h2v1h-2zm7 0h3v1h-3zm13 0h33v1h-33zm34 0h5v1h-5zm6 0h7v1h-7zm8 0h10v1h-10zm11 0h51v1h-51zm52 0h1v1h-1zm3 0h7v1h-7zm8 0h43v1h-43zm45 0h1v1h-1zm2 0h4v1h-4zm5 0h25v1h-25zm26 0h1v1h-1zm-887 1h1v1h-1zm32 0h2v1h-2zm3 0h1v1h-1zm476 0h1v1h-1zm156 0h1v1h-1zm8 0h1v1h-1zm12 0h9v1h-9zm10 0h22v1h-22zm23 0h5v1h-5zm6 0h1v1h-1zm2 0h2v1h-2zm3 0h9v1h-9zm10 0h17v1h-17zm19 0h3v1h-3zm4 0h29v1h-29zm30 0h1v1h-1zm2 0h50v1h-50zm51 0h6v1h-6zm7 0h2v1h-2zm4 0h5v1h-5zm6 0h5v1h-5zm6 0h8v1h-8zm10 0h5v1h-5zm14 0h1v1h-1zm-176 1h1v1h-1zm53 0h1v1h-1zm30 0h1v1h-1zm-34 1h1v1h-1zm14 1h1v1h-1zm-88 1h1v2h-1zm4 0h2v1h-2zm3 0h1v1h-1zm29 0h1v2h-1zm2 0h1v2h-1zm55 0h1v1h-1zm36 0h1v1h-1zm-125 1h1v1h-1zm39 0h1v2h-1zm8 0h1v1h-1zm5 0h1v1h-1zm13 0h1v1h-1zm30 0h1v1h-1zm-22 1h1v1h-1zm17 0h1v1h-1zm9 0h1v1h-1zm5 0h1v1h-1zm-494 112h46v1h-46zm47 0h1v1h-1zm2 0h11v1h-11zm-363 1h12v1h-12zm13 0h10v1h-10zm11 0h1v1h-1zm2 0h8v1h-8zm9 0h13v1h-13zm14 0h8v1h-8zm9 0h5v1h-5zm6 0h9v1h-9zm10 0h8v1h-8zm11 0h13v1h-13zm14 0h3v2h-3zm4 0h2v1h-2zm3 0h4v2h-4zm5 0h13v1h-13zm15 0h4v1h-4zm5 0h15v1h-15zm16 0h4v1h-4zm5 0h3v1h-3zm4 0h1v1h-1zm2 0h3v1h-3zm4 0h3v1h-3zm5 0h12v1h-12zm14 0h3v1h-3zm4 0h1v1h-1zm2 0h2v1h-2zm3 0h29v1h-29zm30 0h16v1h-16zm17 0h23v1h-23zm24 0h4v1h-4zm5 0h4v1h-4zm5 0h1v1h-1zm2 0h2v1h-2zm3 0h1v2h-1zm2 0h4v2h-4zm6 0h2v1h-2zm3 0h4v1h-4zm5 0h3v1h-3zm4 0h32v1h-32zm33 0h63v1h-63zm64 0h2v1h-2zm3 0h37v1h-37zm39 0h7v1h-7zm8 0h73v1h-73zm74 0h28v1h-28zm29 0h2v1h-2zm3 0h2v1h-2zm3 0h10v1h-10zm11 0h2v1h-2zm3 0h2v1h-2zm4 0h1v1h-1zm2 0h20v1h-20zm21 0h5v1h-5zm6 0h8v1h-8zm9 0h4v1h-4zm5 0h1v1h-1zm2 0h9v1h-9zm10 0h10v1h-10zm11 0h3v1h-3zm4 0h11v1h-11zm12 0h4v2h-4zm6 0h2v1h-2zm4 0h4v1h-4zm5 0h3v1h-3zm4 0h11v1h-11zm12 0h5v1h-5zm6 0h1v1h-1zm3 0h2v1h-2zm3 0h9v1h-9zm10 0h15v1h-15zm16 0h13v1h-13zm14 0h125v1h-125zm-735 1h22v1h-22zm23 0h19v1h-19zm20 0h4v1h-4zm5 0h1v1h-1zm2 0h10v1h-10zm11 0h7v1h-7zm8 0h3v1h-3zm4 0h16v1h-16zm17 0h3v1h-3zm4 0h4v1h-4zm10 0h1v1h-1zm7 0h3v1h-3zm4 0h2v1h-2zm3 0h4v1h-4zm8 0h2v2h-2zm3 0h1v1h-1zm2 0h2v1h-2zm4 0h4v1h-4zm6 0h6v1h-6zm7 0h3v1h-3zm4 0h5v1h-5zm6 0h8v1h-8zm9 0h1v1h-1zm2 0h51v1h-51zm52 0h43v1h-43zm45 0h3v1h-3zm5 0h4v1h-4zm14 0h1v2h-1zm2 0h6v1h-6zm7 0h2v1h-2zm3 0h9v1h-9zm10 0h1v1h-1zm2 0h4v1h-4zm5 0h9v1h-9zm10 0h3v1h-3zm4 0h14v1h-14zm15 0h7v1h-7zm8 0h43v1h-43zm44 0h4v1h-4zm5 0h33v1h-33zm34 0h1v1h-1zm2 0h2v1h-2zm3 0h17v1h-17zm18 0h5v1h-5zm7 0h4v1h-4zm5 0h42v1h-42zm43 0h25v1h-25zm27 0h12v1h-12zm13 0h6v1h-6zm7 0h6v1h-6zm7 0h3v1h-3zm4 0h15v1h-15zm16 0h1v1h-1zm2 0h18v1h-18zm19 0h5v1h-5zm9 0h1v1h-1zm2 0h9v1h-9zm10 0h19v1h-19zm20 0h3v1h-3zm9 0h3v1h-3zm5 0h18v1h-18zm19 0h1v1h-1zm2 0h2v1h-2zm3 0h7v1h-7zm8 0h26v1h-26zm27 0h1v1h-1zm2 0h75v1h-75zm76 0h54v1h-54zm55 0h6v1h-6zm-854 1h65v1h-65zm67 0h5v1h-5zm6 0h3v1h-3zm4 0h1v1h-1zm2 0h19v1h-19zm20 0h6v1h-6zm7 0h2v2h-2zm3 0h1v2h-1zm2 0h9v1h-9zm10 0h1v1h-1zm2 0h1v1h-1zm8 0h1v1h-1zm4 0h8v1h-8zm9 0h3v1h-3zm4 0h6v1h-6zm7 0h2v1h-2zm4 0h6v1h-6zm8 0h2v1h-2zm3 0h2v1h-2zm3 0h11v1h-11zm12 0h2v1h-2zm3 0h2v1h-2zm3 0h7v1h-7zm8 0h2v1h-2zm3 0h16v1h-16zm17 0h24v1h-24zm25 0h1v1h-1zm2 0h1v1h-1zm2 0h2v1h-2zm3 0h11v1h-11zm12 0h2v2h-2zm3 0h2v1h-2zm3 0h7v1h-7zm9 0h3v1h-3zm4 0h1v3h-1zm5 0h2v1h-2zm3 0h1v1h-1zm2 0h3v1h-3zm5 0h1v1h-1zm2 0h9v1h-9zm10 0h14v1h-14zm15 0h6v1h-6zm7 0h17v1h-17zm18 0h25v1h-25zm26 0h14v1h-14zm15 0h16v1h-16zm17 0h16v1h-16zm17 0h14v1h-14zm15 0h8v1h-8zm9 0h1v1h-1zm2 0h5v1h-5zm6 0h7v1h-7zm8 0h33v1h-33zm34 0h22v1h-22zm23 0h24v1h-24zm25 0h5v2h-5zm6 0h13v1h-13zm14 0h10v1h-10zm12 0h22v1h-22zm24 0h7v1h-7zm8 0h2v5h-2zm4 0h1v2h-1zm2 0h2v1h-2zm3 0h2v1h-2zm3 0h2v2h-2zm4 0h9v1h-9zm10 0h7v1h-7zm8 0h5v1h-5zm6 0h1v1h-1zm2 0h8v2h-8zm9 0h1v1h-1zm2 0h3v1h-3zm4 0h7v1h-7zm8 0h1v1h-1zm2 0h5v1h-5zm6 0h5v3h-5zm7 0h1v2h-1zm2 0h51v1h-51zm52 0h48v1h-48zm49 0h12v1h-12zm13 0h54v1h-54zm-806 1h18v1h-18zm19 0h22v1h-22zm23 0h7v1h-7zm8 0h1v1h-1zm2 0h3v1h-3zm4 0h3v1h-3zm4 0h16v1h-16zm17 0h21v1h-21zm22 0h3v1h-3zm4 0h2v1h-2zm8 0h3v1h-3zm4 0h5v1h-5zm6 0h2v1h-2zm5 0h4v1h-4zm5 0h2v2h-2zm3 0h2v1h-2zm3 0h3v1h-3zm5 0h9v1h-9zm10 0h2v1h-2zm4 0h1v1h-1zm3 0h7v1h-7zm9 0h3v1h-3zm5 0h5v1h-5zm6 0h7v1h-7zm8 0h2v1h-2zm3 0h23v1h-23zm24 0h10v1h-10zm11 0h35v1h-35zm36 0h1v1h-1zm5 0h3v1h-3zm6 0h5v1h-5zm6 0h2v1h-2zm6 0h2v1h-2zm4 0h13v1h-13zm14 0h1v1h-1zm2 0h4v1h-4zm5 0h17v1h-17zm18 0h62v1h-62zm63 0h1v1h-1zm2 0h43v1h-43zm44 0h2v1h-2zm3 0h1v1h-1zm3 0h6v1h-6zm7 0h21v1h-21zm22 0h62v1h-62zm63 0h11v1h-11zm18 0h4v1h-4zm5 0h8v1h-8zm9 0h3v1h-3zm4 0h1v1h-1zm2 0h7v1h-7zm8 0h7v1h-7zm8 0h7v1h-7zm8 0h9v1h-9zm10 0h3v1h-3zm10 0h5v1h-5zm9 0h2v1h-2zm3 0h7v1h-7zm8 0h1v1h-1zm2 0h1v1h-1zm2 0h7v1h-7zm8 0h3v1h-3zm13 0h14v1h-14zm15 0h6v1h-6zm17 0h4v1h-4zm5 0h4v1h-4zm5 0h1v1h-1zm2 0h69v1h-69zm70 0h15v1h-15zm16 0h69v1h-69zm-791 1h14v1h-14zm15 0h17v1h-17zm18 0h8v1h-8zm9 0h10v1h-10zm11 0h7v1h-7zm8 0h14v1h-14zm15 0h2v1h-2zm3 0h14v1h-14zm15 0h4v1h-4zm5 0h5v2h-5zm7 0h4v8h-4zm5 0h6v1h-6zm7 0h5v1h-5zm8 0h2v3h-2zm3 0h1v1h-1zm5 0h13v1h-13zm14 0h6v1h-6zm7 0h2v1h-2zm4 0h9v1h-9zm10 0h1v1h-1zm2 0h1v1h-1zm2 0h11v1h-11zm14 0h31v1h-31zm32 0h5v1h-5zm6 0h17v1h-17zm18 0h15v1h-15zm16 0h5v1h-5zm7 0h4v2h-4zm6 0h3v1h-3zm4 0h1v1h-1zm2 0h3v1h-3zm7 0h1v3h-1zm2 0h7v1h-7zm10 0h1v1h-1zm2 0h2v2h-2zm3 0h4v1h-4zm5 0h4v1h-4zm5 0h18v1h-18zm19 0h6v1h-6zm7 0h10v1h-10zm11 0h43v1h-43zm44 0h8v1h-8zm9 0h21v1h-21zm22 0h14v1h-14zm15 0h3v1h-3zm4 0h20v1h-20zm21 0h10v1h-10zm11 0h30v1h-30zm31 0h5v1h-5zm6 0h39v1h-39zm40 0h13v1h-13zm14 0h1v1h-1zm2 0h1v1h-1zm2 0h6v1h-6zm7 0h2v1h-2zm3 0h6v1h-6zm7 0h5v1h-5zm6 0h9v1h-9zm10 0h1v1h-1zm2 0h4v1h-4zm8 0h10v1h-10zm11 0h7v1h-7zm8 0h2v1h-2zm3 0h1v1h-1zm2 0h6v1h-6zm7 0h7v1h-7zm8 0h3v2h-3zm5 0h1v1h-1zm2 0h7v1h-7zm8 0h4v1h-4zm5 0h7v1h-7zm8 0h2v2h-2zm9 0h13v1h-13zm14 0h3v2h-3zm4 0h12v1h-12zm14 0h55v1h-55zm56 0h48v1h-48zm49 0h16v1h-16zm17 0h10v1h-10zm11 0h6v1h-6zm-854 1h39v1h-39zm40 0h5v1h-5zm6 0h18v1h-18zm20 0h4v1h-4zm5 0h1v1h-1zm2 0h6v1h-6zm7 0h2v1h-2zm3 0h15v1h-15zm28 0h13v1h-13zm20 0h9v1h-9zm10 0h5v1h-5zm6 0h4v1h-4zm6 0h4v1h-4zm5 0h2v1h-2zm3 0h4v1h-4zm6 0h3v1h-3zm4 0h13v1h-13zm16 0h1v1h-1zm2 0h28v1h-28zm30 0h11v1h-11zm12 0h10v1h-10zm11 0h7v1h-7zm8 0h1v1h-1zm3 0h4v1h-4zm6 0h1v2h-1zm2 0h4v2h-4zm10 0h6v1h-6zm8 0h2v1h-2zm8 0h4v1h-4zm5 0h1v1h-1zm2 0h4v1h-4zm8 0h1v1h-1zm2 0h9v1h-9zm10 0h60v1h-60zm61 0h48v1h-48zm49 0h9v1h-9zm10 0h4v1h-4zm5 0h1v2h-1zm2 0h2v1h-2zm3 0h18v1h-18zm20 0h25v1h-25zm26 0h26v1h-26zm27 0h9v1h-9zm10 0h5v1h-5zm6 0h3v1h-3zm4 0h14v1h-14zm15 0h10v1h-10zm11 0h2v1h-2zm3 0h3v4h-3zm4 0h1v1h-1zm2 0h4v1h-4zm5 0h10v1h-10zm11 0h4v2h-4zm5 0h2v1h-2zm3 0h5v1h-5zm6 0h7v1h-7zm12 0h1v1h-1zm2 0h5v1h-5zm6 0h1v1h-1zm2 0h6v2h-6zm7 0h4v2h-4zm5 0h1v2h-1zm2 0h7v1h-7zm10 0h3v1h-3zm8 0h2v1h-2zm3 0h2v1h-2zm3 0h11v1h-11zm12 0h1v1h-1zm3 0h2v1h-2zm6 0h6v1h-6zm7 0h12v1h-12zm17 0h1v1h-1zm2 0h34v1h-34zm35 0h73v1h-73zm74 0h36v1h-36zm37 0h5v1h-5zm64 0h4v1h-4zm-919 1h12v1h-12zm13 0h2v1h-2zm3 0h1v1h-1zm2 0h4v1h-4zm5 0h38v1h-38zm39 0h8v1h-8zm12 0h24v1h-24zm25 0h6v1h-6zm12 0h11v1h-11zm20 0h2v1h-2zm4 0h8v1h-8zm9 0h10v1h-10zm12 0h1v1h-1zm2 0h8v1h-8zm9 0h1v1h-1zm2 0h15v1h-15zm16 0h11v1h-11zm12 0h18v1h-18zm19 0h1v1h-1zm2 0h5v1h-5zm6 0h7v1h-7zm8 0h3v1h-3zm4 0h8v1h-8zm9 0h5v1h-5zm6 0h7v1h-7zm16 0h3v1h-3zm4 0h4v1h-4zm5 0h1v2h-1zm2 0h2v1h-2zm3 0h2v1h-2zm6 0h2v1h-2zm3 0h1v1h-1zm3 0h1v1h-1zm2 0h1v1h-1zm2 0h2v2h-2zm3 0h1v2h-1zm2 0h4v1h-4zm5 0h10v1h-10zm11 0h8v1h-8zm9 0h21v1h-21zm22 0h1v1h-1zm2 0h25v1h-25zm26 0h10v1h-10zm11 0h9v1h-9zm10 0h10v1h-10zm11 0h5v1h-5zm6 0h13v1h-13zm14 0h9v1h-9zm12 0h8v1h-8zm9 0h12v1h-12zm13 0h10v1h-10zm11 0h62v1h-62zm63 0h11v1h-11zm12 0h1v1h-1zm5 0h1v1h-1zm2 0h2v1h-2zm3 0h6v1h-6zm11 0h17v1h-17zm23 0h7v1h-7zm8 0h8v1h-8zm12 0h1v1h-1zm3 0h7v1h-7zm22 0h11v1h-11zm12 0h1v1h-1zm2 0h8v1h-8zm9 0h5v1h-5zm6 0h5v1h-5zm6 0h2v1h-2zm4 0h5v1h-5zm6 0h4v1h-4zm6 0h2v1h-2zm4 0h9v1h-9zm10 0h17v1h-17zm18 0h52v1h-52zm53 0h86v1h-86zm133 0h16v1h-16zm-907 1h8v1h-8zm9 0h15v1h-15zm16 0h13v1h-13zm14 0h1v1h-1zm2 0h10v1h-10zm11 0h1v1h-1zm2 0h9v1h-9zm10 0h3v1h-3zm4 0h4v1h-4zm5 0h3v1h-3zm4 0h6v1h-6zm7 0h11v1h-11zm12 0h2v1h-2zm3 0h3v1h-3zm4 0h1v1h-1zm8 0h12v1h-12zm15 0h3v1h-3zm5 0h3v1h-3zm4 0h3v1h-3zm5 0h6v1h-6zm8 0h9v1h-9zm10 0h7v1h-7zm9 0h17v1h-17zm18 0h1v1h-1zm2 0h9v1h-9zm10 0h21v1h-21zm22 0h23v1h-23zm24 0h4v1h-4zm5 0h12v1h-12zm13 0h1v1h-1zm2 0h1v1h-1zm3 0h2v1h-2zm3 0h1v1h-1zm2 0h1v1h-1zm2 0h1v1h-1zm5 0h1v1h-1zm2 0h1v1h-1zm4 0h2v1h-2zm3 0h4v1h-4zm6 0h3v1h-3zm9 0h1v1h-1zm3 0h18v1h-18zm19 0h3v1h-3zm4 0h20v1h-20zm22 0h38v1h-38zm39 0h2v1h-2zm3 0h10v1h-10zm11 0h8v1h-8zm9 0h14v1h-14zm15 0h11v1h-11zm12 0h8v1h-8zm9 0h4v1h-4zm5 0h3v1h-3zm4 0h6v1h-6zm7 0h17v1h-17zm18 0h57v1h-57zm58 0h5v1h-5zm7 0h4v1h-4zm6 0h5v1h-5zm7 0h5v2h-5zm10 0h1v2h-1zm2 0h4v2h-4zm5 0h2v1h-2zm4 0h26v1h-26zm27 0h1v1h-1zm2 0h1v1h-1zm4 0h1v2h-1zm2 0h4v1h-4zm6 0h2v1h-2zm3 0h5v1h-5zm6 0h6v1h-6zm7 0h8v1h-8zm9 0h4v1h-4zm5 0h4v1h-4zm7 0h1v1h-1zm3 0h4v1h-4zm5 0h8v1h-8zm9 0h2v1h-2zm3 0h1v1h-1zm2 0h1v1h-1zm2 0h5v2h-5zm7 0h7v1h-7zm8 0h2v1h-2zm3 0h9v1h-9zm10 0h2v1h-2zm3 0h2v1h-2zm3 0h6v1h-6zm7 0h10v1h-10zm11 0h7v1h-7zm8 0h7v1h-7zm8 0h5v1h-5zm6 0h16v1h-16zm17 0h46v1h-46zm47 0h5v1h-5zm6 0h12v1h-12zm13 0h20v1h-20zm55 0h28v1h-28zm-894 1h11v1h-11zm12 0h2v1h-2zm3 0h12v1h-12zm13 0h33v1h-33zm34 0h7v1h-7zm8 0h1v2h-1zm3 0h9v1h-9zm10 0h14v1h-14zm16 0h2v1h-2zm3 0h2v5h-2zm8 0h4v2h-4zm5 0h7v1h-7zm10 0h4v1h-4zm5 0h2v1h-2zm4 0h1v1h-1zm2 0h18v1h-18zm19 0h1v1h-1zm2 0h3v1h-3zm5 0h5v1h-5zm6 0h1v1h-1zm2 0h13v1h-13zm14 0h5v1h-5zm6 0h7v1h-7zm8 0h19v1h-19zm20 0h5v1h-5zm6 0h5v1h-5zm7 0h11v1h-11zm12 0h6v1h-6zm7 0h6v1h-6zm8 0h3v1h-3zm4 0h2v1h-2zm3 0h4v1h-4zm6 0h5v1h-5zm6 0h2v1h-2zm7 0h1v3h-1zm2 0h2v1h-2zm3 0h1v1h-1zm2 0h7v1h-7zm8 0h3v1h-3zm4 0h33v1h-33zm34 0h10v1h-10zm11 0h1v1h-1zm2 0h15v1h-15zm16 0h2v1h-2zm3 0h4v1h-4zm5 0h17v1h-17zm18 0h13v1h-13zm14 0h14v1h-14zm15 0h2v1h-2zm3 0h13v1h-13zm14 0h1v1h-1zm2 0h1v1h-1zm2 0h19v1h-19zm21 0h36v1h-36zm37 0h3v1h-3zm4 0h11v1h-11zm12 0h28v1h-28zm29 0h4v1h-4zm7 0h6v1h-6zm24 0h15v1h-15zm16 0h9v1h-9zm10 0h6v1h-6zm7 0h2v4h-2zm6 0h5v1h-5zm6 0h1v5h-1zm2 0h1v1h-1zm2 0h9v1h-9zm10 0h1v1h-1zm2 0h9v1h-9zm10 0h3v1h-3zm5 0h3v1h-3zm4 0h1v1h-1zm3 0h1v2h-1zm2 0h2v3h-2zm4 0h10v1h-10zm11 0h2v1h-2zm3 0h2v5h-2zm11 0h7v1h-7zm8 0h12v1h-12zm13 0h4v1h-4zm5 0h25v1h-25zm27 0h45v1h-45zm46 0h2v1h-2zm3 0h5v1h-5zm6 0h12v1h-12zm13 0h40v1h-40zm41 0h7v1h-7zm30 0h7v1h-7zm8 0h18v1h-18zm19 0h13v1h-13zm-910 1h39v1h-39zm40 0h3v1h-3zm4 0h5v1h-5zm6 0h11v1h-11zm12 0h1v1h-1zm2 0h6v1h-6zm9 0h3v1h-3zm4 0h6v1h-6zm8 0h3v1h-3zm4 0h5v1h-5zm6 0h3v1h-3zm4 0h3v4h-3zm17 0h6v1h-6zm7 0h1v1h-1zm3 0h2v1h-2zm5 0h3v1h-3zm5 0h2v2h-2zm5 0h5v1h-5zm8 0h2v1h-2zm3 0h1v1h-1zm3 0h2v1h-2zm3 0h4v2h-4zm5 0h3v2h-3zm4 0h5v2h-5zm7 0h5v1h-5zm6 0h4v1h-4zm6 0h12v1h-12zm13 0h16v1h-16zm17 0h2v1h-2zm3 0h15v1h-15zm16 0h17v1h-17zm18 0h7v1h-7zm8 0h4v1h-4zm5 0h3v1h-3zm5 0h4v1h-4zm5 0h1v4h-1zm2 0h4v1h-4zm9 0h4v1h-4zm5 0h1v1h-1zm2 0h1v1h-1zm2 0h3v1h-3zm4 0h17v1h-17zm18 0h10v1h-10zm12 0h3v1h-3zm4 0h5v1h-5zm6 0h8v1h-8zm9 0h9v1h-9zm10 0h11v1h-11zm12 0h4v1h-4zm5 0h16v1h-16zm17 0h15v1h-15zm16 0h2v1h-2zm5 0h9v1h-9zm10 0h14v1h-14zm15 0h17v1h-17zm18 0h2v1h-2zm3 0h3v1h-3zm4 0h23v1h-23zm24 0h1v1h-1zm2 0h3v1h-3zm4 0h10v1h-10zm11 0h26v1h-26zm27 0h4v1h-4zm5 0h11v1h-11zm12 0h1v1h-1zm4 0h12v1h-12zm13 0h2v1h-2zm5 0h5v1h-5zm6 0h10v1h-10zm11 0h4v1h-4zm5 0h16v1h-16zm24 0h2v1h-2zm7 0h6v1h-6zm7 0h6v1h-6zm7 0h5v4h-5zm7 0h1v1h-1zm2 0h4v1h-4zm5 0h1v1h-1zm2 0h5v1h-5zm11 0h1v2h-1zm2 0h9v1h-9zm10 0h1v1h-1zm6 0h4v2h-4zm6 0h1v1h-1zm2 0h6v1h-6zm7 0h17v1h-17zm18 0h7v1h-7zm8 0h4v1h-4zm5 0h26v1h-26zm27 0h50v1h-50zm51 0h4v1h-4zm5 0h8v1h-8zm9 0h39v1h-39zm50 0h2v1h-2zm3 0h36v1h-36zm37 0h12v1h-12zm-911 1h15v1h-15zm16 0h6v1h-6zm8 0h14v1h-14zm15 0h10v1h-10zm11 0h1v1h-1zm2 0h3v1h-3zm5 0h3v1h-3zm4 0h2v1h-2zm3 0h1v1h-1zm2 0h6v1h-6zm8 0h2v1h-2zm3 0h1v1h-1zm2 0h14v1h-14zm15 0h4v1h-4zm17 0h6v1h-6zm7 0h5v1h-5zm9 0h1v1h-1zm4 0h1v1h-1zm8 0h6v1h-6zm7 0h1v1h-1zm3 0h8v1h-8zm24 0h11v2h-11zm12 0h1v1h-1zm3 0h2v1h-2zm3 0h10v1h-10zm11 0h2v1h-2zm3 0h7v1h-7zm8 0h4v1h-4zm6 0h3v1h-3zm4 0h8v1h-8zm9 0h11v1h-11zm12 0h21v1h-21zm22 0h4v2h-4zm8 0h1v1h-1zm5 0h2v1h-2zm8 0h2v1h-2zm5 0h3v2h-3zm5 0h28v1h-28zm30 0h2v1h-2zm3 0h1v1h-1zm2 0h16v1h-16zm17 0h16v1h-16zm17 0h8v1h-8zm9 0h5v1h-5zm6 0h1v1h-1zm2 0h2v1h-2zm3 0h22v1h-22zm23 0h15v1h-15zm16 0h8v1h-8zm9 0h4v1h-4zm5 0h1v2h-1zm2 0h3v1h-3zm4 0h3v1h-3zm4 0h13v1h-13zm15 0h6v1h-6zm7 0h3v1h-3zm4 0h21v1h-21zm22 0h7v1h-7zm8 0h35v1h-35zm36 0h7v1h-7zm8 0h2v1h-2zm4 0h5v1h-5zm6 0h4v1h-4zm5 0h1v1h-1zm2 0h3v2h-3zm6 0h3v1h-3zm5 0h3v1h-3zm4 0h8v1h-8zm9 0h10v1h-10zm11 0h1v1h-1zm2 0h6v1h-6zm13 0h5v1h-5zm8 0h7v1h-7zm8 0h1v1h-1zm2 0h3v2h-3zm10 0h4v1h-4zm5 0h2v1h-2zm3 0h6v1h-6zm7 0h2v1h-2zm8 0h6v1h-6zm7 0h5v1h-5zm16 0h29v1h-29zm30 0h14v1h-14zm15 0h3v1h-3zm4 0h3v1h-3zm4 0h123v1h-123zm124 0h48v1h-48zm49 0h7v1h-7zm-916 1h12v1h-12zm13 0h2v1h-2zm3 0h22v1h-22zm23 0h24v1h-24zm25 0h6v2h-6zm7 0h1v2h-1zm2 0h2v2h-2zm3 0h7v1h-7zm8 0h6v1h-6zm7 0h7v1h-7zm20 0h10v1h-10zm15 0h1v1h-1zm3 0h1v1h-1zm2 0h2v2h-2zm4 0h2v1h-2zm3 0h1v1h-1zm2 0h3v1h-3zm4 0h2v2h-2zm4 0h9v1h-9zm10 0h3v1h-3zm4 0h4v1h-4zm5 0h1v1h-1zm2 0h1v1h-1zm16 0h21v1h-21zm22 0h8v1h-8zm9 0h4v1h-4zm5 0h22v1h-22zm23 0h3v1h-3zm4 0h13v1h-13zm14 0h1v1h-1zm9 0h4v1h-4zm7 0h4v1h-4zm6 0h2v1h-2zm4 0h1v1h-1zm2 0h1v2h-1zm6 0h5v1h-5zm6 0h1v1h-1zm2 0h5v1h-5zm6 0h37v1h-37zm38 0h11v2h-11zm12 0h29v1h-29zm30 0h2v1h-2zm4 0h10v1h-10zm11 0h19v1h-19zm20 0h13v1h-13zm16 0h4v1h-4zm5 0h6v1h-6zm7 0h10v1h-10zm11 0h23v1h-23zm24 0h9v1h-9zm10 0h5v1h-5zm6 0h13v1h-13zm14 0h2v1h-2zm3 0h15v1h-15zm16 0h4v1h-4zm5 0h6v1h-6zm7 0h1v1h-1zm4 0h2v1h-2zm3 0h2v1h-2zm3 0h1v1h-1zm2 0h4v1h-4zm9 0h8v1h-8zm9 0h1v1h-1zm2 0h6v1h-6zm7 0h21v1h-21zm26 0h1v2h-1zm2 0h4v1h-4zm8 0h6v1h-6zm7 0h2v1h-2zm13 0h7v1h-7zm8 0h4v2h-4zm5 0h3v1h-3zm4 0h5v1h-5zm6 0h8v1h-8zm9 0h3v1h-3zm7 0h2v1h-2zm3 0h20v1h-20zm21 0h7v1h-7zm8 0h5v1h-5zm6 0h11v1h-11zm14 0h8v1h-8zm9 0h31v1h-31zm32 0h90v1h-90zm91 0h56v1h-56zm-867 1h2v1h-2zm3 0h2v1h-2zm3 0h17v1h-17zm18 0h12v1h-12zm13 0h12v1h-12zm13 0h10v1h-10zm11 0h2v1h-2zm15 0h22v1h-22zm31 0h3v1h-3zm4 0h13v1h-13zm16 0h3v1h-3zm7 0h2v1h-2zm3 0h6v1h-6zm10 0h6v1h-6zm7 0h1v1h-1zm2 0h1v1h-1zm3 0h1v1h-1zm4 0h3v1h-3zm4 0h5v1h-5zm6 0h3v1h-3zm4 0h7v1h-7zm8 0h16v1h-16zm17 0h13v1h-13zm14 0h3v1h-3zm4 0h2v1h-2zm3 0h4v1h-4zm5 0h3v1h-3zm4 0h11v1h-11zm12 0h5v1h-5zm6 0h3v1h-3zm4 0h9v1h-9zm13 0h7v1h-7zm12 0h2v1h-2zm6 0h1v1h-1zm2 0h2v1h-2zm6 0h3v1h-3zm4 0h50v1h-50zm63 0h14v1h-14zm15 0h6v1h-6zm7 0h5v1h-5zm6 0h7v1h-7zm8 0h3v1h-3zm4 0h8v1h-8zm9 0h15v1h-15zm16 0h2v1h-2zm3 0h2v1h-2zm3 0h2v1h-2zm3 0h1v1h-1zm2 0h2v1h-2zm4 0h2v1h-2zm3 0h10v1h-10zm11 0h6v1h-6zm7 0h2v1h-2zm3 0h6v1h-6zm7 0h3v1h-3zm4 0h30v1h-30zm31 0h8v1h-8zm9 0h19v1h-19zm20 0h1v1h-1zm2 0h11v1h-11zm12 0h2v1h-2zm4 0h4v1h-4zm5 0h5v1h-5zm6 0h1v1h-1zm2 0h2v1h-2zm6 0h4v1h-4zm5 0h9v1h-9zm11 0h4v1h-4zm5 0h7v1h-7zm8 0h6v1h-6zm7 0h1v1h-1zm2 0h1v1h-1zm6 0h2v1h-2zm3 0h1v1h-1zm5 0h10v1h-10zm11 0h2v1h-2zm9 0h2v1h-2zm3 0h4v1h-4zm10 0h4v1h-4zm5 0h3v1h-3zm5 0h2v1h-2zm3 0h7v1h-7zm8 0h1v1h-1zm5 0h5v1h-5zm7 0h2v1h-2zm3 0h1v1h-1zm2 0h1v1h-1zm4 0h2v1h-2zm4 0h13v1h-13zm14 0h26v1h-26zm27 0h10v1h-10zm11 0h7v1h-7zm8 0h11v1h-11zm12 0h51v1h-51zm52 0h38v1h-38zm39 0h26v1h-26zm27 0h10v1h-10zm11 0h19v1h-19zm145 104h17v1h-17zm18 0h13v1h-13zm-18 1h8v1h-8zm9 0h3v1h-3zm6 0h9v1h-9zm10 0h5v1h-5zm-25 1h6v1h-6zm7 0h5v1h-5zm7 0h12v1h-12zm13 0h1v1h-1zm2 0h2v1h-2zm-29 1h12v1h-12zm13 0h8v1h-8zm9 0h1v1h-1zm3 0h6v1h-6zm-25 1h14v1h-14zm15 0h3v1h-3zm4 0h7v1h-7zm8 0h4v1h-4zm-27 1h12v1h-12zm15 0h15v1h-15zm-15 1h13v2h-13zm14 0h10v2h-10zm12 0h1v1h-1zm2 0h2v1h-2zm-3 1h2v1h-2zm4 0h2v1h-2zm-29 1h12v2h-12zm15 0h12v1h-12zm15 0h1v3h-1zm-17 1h14v1h-14zm-13 1h14v1h-14zm15 0h6v1h-6zm7 0h1v1h-1zm2 0h4v1h-4zm-24 1h12v1h-12zm13 0h1v1h-1zm2 0h8v1h-8zm9 0h2v1h-2zm3 0h4v1h-4zm-27 1h1v1h-1zm2 0h12v1h-12zm13 0h12v1h-12zm13 0h3v1h-3zm-156 123h2v1h-2zm-608 8h61v1h-61zm-313 1h70v1h-70zm71 0h17v1h-17zm19 0h55v2h-55zm56 0h117v1h-117zm118 0h6v2h-6zm9 0h6v2h-6zm10 0h1v2h-1zm2 0h2v2h-2zm3 0h3v2h-3zm4 0h326v1h-326zm327 0h4v2h-4zm6 0h22v2h-22zm23 0h4v1h-4zm7 0h3v2h-3zm5 0h3v1h-3zm4 0h4v1h-4zm6 0h6v2h-6zm7 0h4v1h-4zm5 0h5v1h-5zm12 0h13v1h-13zm15 0h3v1h-3zm4 0h2v1h-2zm3 0h2v1h-2zm3 0h1v1h-1zm2 0h2v1h-2zm3 0h3v1h-3zm5 0h1v1h-1zm129 0h2v2h-2zm-858 1h65v1h-65zm66 0h4v1h-4zm5 0h5v1h-5zm8 0h3v1h-3zm4 0h5v1h-5zm63 0h113v1h-113zm114 0h3v1h-3zm32 0h6v1h-6zm8 0h13v1h-13zm74 0h194v1h-194zm196 0h12v1h-12zm13 0h11v1h-11zm12 0h18v1h-18zm19 0h4v1h-4zm34 0h5v1h-5zm11 0h4v1h-4zm5 0h5v1h-5zm14 0h3v1h-3zm5 0h4v1h-4zm11 0h23v1h-23zm24 0h1v1h-1zm5 0h2v1h-2zm-657 1h3v1h-3zm8 0h1v1h-1zm5 0h1v1h-1zm2 0h1v1h-1zm2 0h2v1h-2zm4 0h1v1h-1zm6 0h2v1h-2zm18 0h1v1h-1zm17 0h2v1h-2zm11 0h1v1h-1zm139 0h1v1h-1zm10 0h1v1h-1zm5 0h1v1h-1zm2 0h2v1h-2zm5 0h1v1h-1zm259 0h1v1h-1zm15 0h1v1h-1zm2 0h4v1h-4zm9 0h3v1h-3zm4 0h1v1h-1zm2 0h1v1h-1zm4 0h1v1h-1zm2 0h1v1h-1zm8 0h1v1h-1zm5 0h1v1h-1zm17 0h1v1h-1zm16 0h1v1h-1zm-583 1h1v1h-1zm4 0h1v1h-1zm8 0h2v1h-2zm13 0h2v1h-2zm7 0h1v1h-1zm4 0h1v1h-1zm3 0h1v1h-1zm2 0h1v1h-1zm15 0h1v1h-1zm7 0h1v1h-1zm17 0h1v1h-1zm8 0h1v1h-1zm110 0h1v1h-1zm2 0h1v1h-1zm9 0h1v1h-1zm32 0h1v1h-1zm105 0h1v1h-1zm161 0h1v1h-1zm3 0h4v1h-4zm5 0h1v1h-1zm8 0h2v1h-2zm5 0h1v1h-1zm10 0h1v1h-1zm3 0h2v1h-2zm8 0h1v1h-1zm2 0h1v1h-1zm3 0h1v1h-1zm24 0h1v1h-1zm-547 1h1v1h-1zm11 0h1v1h-1zm5 0h2v1h-2zm8 0h1v1h-1zm2 0h2v1h-2zm7 0h1v1h-1zm6 0h1v1h-1zm4 0h1v1h-1zm9 0h2v1h-2zm4 0h1v1h-1zm2 0h1v1h-1zm8 0h1v1h-1zm110 0h2v1h-2zm6 0h3v1h-3zm10 0h1v1h-1zm20 0h1v1h-1zm124 0h1v1h-1zm2 0h1v1h-1zm123 0h1v1h-1zm5 0h2v1h-2zm3 0h2v1h-2zm6 0h1v1h-1zm33 0h2v1h-2zm5 0h1v1h-1zm2 0h1v1h-1zm6 0h1v1h-1zm8 0h1v1h-1zm2 0h1v1h-1zm4 0h1v1h-1zm16 0h1v1h-1zm-583 1h1v1h-1zm2 0h3v1h-3zm36 0h1v1h-1zm15 0h1v1h-1zm2 0h1v1h-1zm5 0h4v1h-4zm16 0h2v1h-2zm3 0h1v1h-1zm3 0h2v1h-2zm9 0h1v1h-1zm4 0h3v1h-3zm23 0h1v1h-1zm13 0h1v1h-1zm66 0h2v1h-2zm6 0h1v1h-1zm3 0h1v1h-1zm21 0h1v1h-1zm119 0h1v1h-1zm2 0h2v1h-2zm10 0h1v1h-1zm8 0h2v1h-2zm3 0h1v1h-1zm2 0h1v1h-1zm5 0h1v1h-1zm118 0h2v1h-2zm3 0h1v1h-1zm9 0h1v1h-1zm38 0h1v1h-1zm4 0h1v1h-1zm8 0h1v1h-1zm6 0h1v1h-1zm4 0h1v1h-1zm3 0h1v1h-1zm11 0h1v1h-1zm5 0h1v1h-1zm-544 1h1v1h-1zm3 0h1v1h-1zm23 0h1v1h-1zm5 0h3v1h-3zm6 0h1v1h-1zm14 0h1v1h-1zm40 0h1v1h-1zm75 0h1v1h-1zm10 0h2v1h-2zm13 0h2v1h-2zm13 0h1v1h-1zm2 0h1v1h-1zm5 0h1v1h-1zm63 0h1v1h-1zm32 0h1v1h-1zm5 0h1v1h-1zm9 0h1v1h-1zm4 0h1v1h-1zm2 0h1v1h-1zm7 0h2v1h-2zm3 0h1v1h-1zm2 0h1v1h-1zm4 0h1v1h-1zm115 0h1v1h-1zm7 0h3v1h-3zm46 0h1v1h-1zm8 0h2v1h-2zm-510 1h1v1h-1zm7 0h1v1h-1zm12 0h1v1h-1zm27 0h2v1h-2zm6 0h1v1h-1zm13 0h1v1h-1zm7 0h1v1h-1zm3 0h2v1h-2zm11 0h2v1h-2zm19 0h1v1h-1zm44 0h1v1h-1zm6 0h1v1h-1zm54 0h1v1h-1zm58 0h1v1h-1zm28 0h1v1h-1zm9 0h7v1h-7zm9 0h1v1h-1zm2 0h1v1h-1zm2 0h1v1h-1zm10 0h1v1h-1zm196 0h3v1h-3zm6 0h1v1h-1zm5 0h1v1h-1zm-481 1h1v1h-1zm13 0h1v1h-1zm4 0h1v1h-1zm7 0h1v1h-1zm11 0h5v1h-5zm7 0h1v1h-1zm4 0h1v1h-1zm5 0h1v1h-1zm6 0h1v1h-1zm186 0h1v1h-1zm18 0h1v1h-1zm17 0h1v1h-1zm4 0h1v1h-1zm191 0h3v1h-3zm4 0h2v1h-2zm5 0h1v1h-1zm-587 1h2v1h-2zm4 0h1v1h-1zm47 0h1v1h-1zm56 0h1v1h-1zm12 0h1v1h-1zm2 0h1v1h-1zm9 0h1v1h-1zm5 0h1v1h-1zm10 0h1v1h-1zm3 0h2v1h-2zm4 0h1v1h-1zm3 0h1v1h-1zm3 0h3v1h-3zm42 0h1v1h-1zm56 0h1v1h-1zm6 0h1v1h-1zm7 0h1v1h-1zm77 0h1v1h-1zm38 0h2v1h-2zm-438 1h1v1h-1zm8 0h1v1h-1zm45 0h1v1h-1zm3 0h2v1h-2zm48 0h1v1h-1zm56 0h1v1h-1zm10 0h1v1h-1zm4 0h1v1h-1zm5 0h2v1h-2zm6 0h1v1h-1zm15 0h1v1h-1zm4 0h1v1h-1zm3 0h1v1h-1zm8 0h1v1h-1zm4 0h1v1h-1zm34 0h1v1h-1zm52 0h2v1h-2zm3 0h1v1h-1zm27 0h1v1h-1zm8 0h1v1h-1zm21 0h1v1h-1zm26 0h2v1h-2zm9 0h1v1h-1zm4 0h1v1h-1zm39 0h1v1h-1zm203 0h1v1h-1zm-636 1h1v1h-1zm34 0h1v1h-1zm119 0h1v1h-1zm7 0h1v1h-1zm18 0h2v1h-2zm21 0h1v1h-1zm9 0h1v1h-1zm4 0h1v1h-1zm13 0h1v1h-1zm18 0h1v1h-1zm55 0h1v1h-1zm17 0h1v1h-1zm26 0h1v1h-1zm2 0h1v1h-1zm7 0h1v1h-1zm4 0h1v1h-1zm5 0h3v1h-3zm6 0h1v1h-1zm5 0h2v1h-2zm15 0h2v1h-2zm157 0h1v1h-1zm98 0h1v1h-1zm-597 1h1v1h-1zm134 0h1v1h-1zm34 0h1v1h-1zm3 0h1v1h-1zm4 0h2v1h-2zm21 0h1v1h-1zm69 0h2v1h-2zm11 0h1v1h-1zm5 0h1v1h-1zm3 0h1v1h-1zm8 0h1v1h-1zm4 0h1v1h-1zm3 0h1v1h-1zm5 0h1v1h-1zm2 0h1v1h-1zm2 0h1v1h-1zm5 0h1v1h-1zm2 0h1v1h-1zm4 0h1v1h-1zm7 0h1v1h-1zm3 0h2v1h-2zm4 0h3v1h-3zm7 0h2v1h-2zm4 0h1v1h-1zm2 0h1v1h-1zm46 0h1v1h-1zm2 0h3v1h-3zm5 0h1v1h-1zm195 0h3v1h-3zm-645 1h2v1h-2zm3 0h1v1h-1zm40 0h1v1h-1zm119 0h3v1h-3zm55 0h1v1h-1zm7 0h1v1h-1zm5 0h1v1h-1zm5 0h1v1h-1zm7 0h1v1h-1zm4 0h1v1h-1zm5 0h1v1h-1zm60 0h1v1h-1zm2 0h2v1h-2zm6 0h1v1h-1zm3 0h1v1h-1zm3 0h1v1h-1zm2 0h1v1h-1zm2 0h2v1h-2zm3 0h1v1h-1zm2 0h1v1h-1zm15 0h1v1h-1zm5 0h2v1h-2zm8 0h1v1h-1zm4 0h1v1h-1zm9 0h1v1h-1zm2 0h1v1h-1zm7 0h1v1h-1zm4 0h2v1h-2zm9 0h1v1h-1zm46 0h1v1h-1zm2 0h1v1h-1zm7 0h1v1h-1zm18 0h1v1h-1zm78 0h3v1h-3zm-536 1h2v1h-2zm7 0h1v1h-1zm30 0h1v1h-1zm119 0h1v1h-1zm54 0h1v1h-1zm2 0h1v1h-1zm2 0h1v1h-1zm3 0h1v1h-1zm2 0h2v1h-2zm5 0h1v1h-1zm5 0h1v1h-1zm2 0h3v1h-3zm69 0h1v1h-1zm8 0h2v1h-2zm6 0h1v1h-1zm5 0h1v1h-1zm6 0h2v1h-2zm5 0h1v1h-1zm3 0h3v1h-3zm8 0h1v1h-1zm23 0h1v1h-1zm7 0h1v1h-1zm67 0h1v1h-1zm6 0h1v1h-1zm13 0h1v1h-1zm2 0h1v1h-1zm5 0h1v1h-1zm71 0h1v1h-1zm103 0h1v1h-1zm-647 1h1v1h-1zm7 0h1v1h-1zm18 0h2v1h-2zm7 0h2v1h-2zm4 0h1v1h-1zm3 0h1v1h-1zm4 0h1v1h-1zm2 0h1v1h-1zm2 0h2v1h-2zm116 0h2v1h-2zm67 0h1v1h-1zm4 0h1v1h-1zm12 0h1v1h-1zm90 0h1v1h-1zm2 0h1v1h-1zm16 0h1v1h-1zm4 0h1v1h-1zm88 0h1v1h-1zm4 0h1v1h-1zm4 0h1v1h-1zm20 0h1v1h-1zm37 0h1v1h-1zm26 0h1v1h-1zm6 0h1v1h-1zm-541 1h1v1h-1zm6 0h1v1h-1zm19 0h1v1h-1zm8 0h1v1h-1zm2 0h1v1h-1zm5 0h1v1h-1zm2 0h1v1h-1zm191 0h3v1h-3zm9 0h1v1h-1zm3 0h1v1h-1zm90 0h1v1h-1zm118 0h1v1h-1zm5 0h1v1h-1zm2 0h1v1h-1zm7 0h4v1h-4zm69 0h2v1h-2zm3 0h1v1h-1zm-530 1h2v1h-2zm6 0h1v1h-1zm14 0h1v1h-1zm3 0h1v1h-1zm417 0h2v1h-2zm5 0h4v1h-4zm5 0h1v1h-1zm2 0h2v1h-2zm12 0h1v1h-1zm6 0h1v1h-1zm61 0h1v1h-1zm106 0h3v1h-3zm-645 1h2v1h-2zm11 0h2v1h-2zm14 0h3v1h-3zm10 0h1v1h-1zm427 0h1v1h-1zm12 0h1v1h-1zm2 0h2v1h-2zm3 0h1v1h-1zm10 0h1v1h-1zm20 0h1v1h-1zm4 0h1v1h-1zm13 0h2v1h-2zm11 0h1v1h-1zm-527 1h1v1h-1zm7 0h2v1h-2zm3 0h2v1h-2zm453 0h1v1h-1zm2 0h1v1h-1zm5 0h3v1h-3zm8 0h1v1h-1zm2 0h1v1h-1zm7 0h1v1h-1zm5 0h1v1h-1zm19 0h2v1h-2zm3 0h2v1h-2zm4 0h1v1h-1zm-513 1h2v1h-2zm4 0h1v1h-1zm464 0h2v1h-2zm3 0h2v1h-2zm10 0h1v1h-1zm5 0h1v1h-1zm2 0h1v1h-1zm11 0h1v1h-1zm4 0h3v1h-3zm11 0h5v1h-5zm323 0h1v1h-1zm-367 1h1v1h-1zm6 0h1v1h-1zm4 0h1v1h-1zm3 0h2v1h-2zm6 0h1v1h-1zm6 0h1v1h-1zm2 0h1v1h-1zm3 0h1v1h-1zm8 0h1v1h-1zm330 0h1v1h-1zm-361 1h1v1h-1zm2 0h1v1h-1zm6 0h1v1h-1zm5 0h2v1h-2zm6 0h1v1h-1zm6 0h1v1h-1zm-24 1h1v1h-1zm14 0h1v1h-1zm9 0h1v1h-1zm398 41h3v1h-3zm-7 1h10v1h-10zm-7 1h17v1h-17zm-7 1h24v1h-24zm-586 1h61v1h-61zm580 0h8v1h-8zm9 0h21v1h-21zm-902 1h860v2h-860zm886 0h37v1h-37zm-7 1h3v1h-3zm4 0h1v1h-1zm2 0h38v1h-38zm-885 1h34v1h-34zm35 0h334v1h-334zm335 0h378v1h-378zm379 0h40v1h-40zm41 0h70v1h-70zm82 0h44v1h-44zm45 0h6v1h-6zm-917 1h860v1h-860zm865 0h17v1h-17zm18 0h40v1h-40zm-883 1h174v1h-174zm175 0h682v1h-682zm683 0h42v1h-42zm43 0h3v1h-3zm4 0h18v1h-18zm-905 1h329v1h-329zm330 0h566v1h-566zm567 0h26v1h-26zm-897 1h412v1h-412zm413 0h9v1h-9zm10 0h85v1h-85zm86 0h379v1h-379zm381 0h3v1h-3zm4 0h25v1h-25zm-894 1h296v1h-296zm297 0h587v1h-587zm588 0h2v1h-2zm3 0h3v1h-3zm4 0h4v1h-4zm5 0h14v1h-14zm15 0h1v1h-1zm-912 1h730v1h-730zm731 0h58v1h-58zm59 0h117v1h-117zm-790 1h407v1h-407zm408 0h386v1h-386zm387 0h106v1h-106zm-795 1h152v1h-152zm153 0h160v1h-160zm221 0h420v1h-420zm421 0h54v1h-54zm55 0h45v1h-45zm10 1h29v1h-29zm0 1h23v1h-23zm0 1h17v1h-17zm0 1h10v1h-10zm0 1h4v1h-4z"/>
<path fill="#30d000" d="M0 0m968 210h1v1h-1zm-5 1h3v1h-3zm4 0h2v1h-2zm-8 1h10v1h-10zm-3 1h5v1h-5zm6 0h6v1h-6zm-10 1h15v1h-15zm16 0h1v2h-1zm-20 1h5v1h-5zm6 0h3v1h-3zm4 0h1v1h-1zm2 0h1v2h-1zm3 0h4v1h-4zm-18 1h6v1h-6zm8 0h3v1h-3zm4 0h2v1h-2zm7 0h2v2h-2zm3 0h2v1h-2zm-26 1h4v1h-4zm5 0h3v1h-3zm7 0h1v1h-1zm2 0h1v1h-1zm13 0h1v1h-1zm-30 1h2v1h-2zm3 0h3v1h-3zm7 0h1v1h-1zm-863 1h1v1h-1zm3 0h1v2h-1zm447 0h1v1h-1zm29 0h1v1h-1zm156 0h1v2h-1zm8 0h1v1h-1zm12 0h24v1h-24zm25 0h1v1h-1zm2 0h4v1h-4zm5 0h10v1h-10zm11 0h1v1h-1zm2 0h23v1h-23zm24 0h15v1h-15zm16 0h25v1h-25zm26 0h3v1h-3zm4 0h9v1h-9zm11 0h16v1h-16zm17 0h19v1h-19zm20 0h3v1h-3zm4 0h2v2h-2zm5 0h6v1h-6zm7 0h2v1h-2zm3 0h8v1h-8zm11 0h5v1h-5zm9 0h1v1h-1zm5 0h2v2h-2zm-205 1h2v1h-2zm3 0h32v1h-32zm33 0h6v1h-6zm7 0h5v1h-5zm6 0h22v1h-22zm24 0h5v1h-5zm6 0h11v1h-11zm12 0h1v1h-1zm2 0h9v1h-9zm10 0h11v1h-11zm12 0h40v1h-40zm41 0h4v1h-4zm5 0h2v1h-2zm16 0h1v2h-1zm5 0h2v2h-2zm9 0h3v1h-3zm-190 1h1v1h-1zm2 0h10v1h-10zm11 0h6v1h-6zm7 0h12v1h-12zm13 0h6v1h-6zm7 0h3v1h-3zm4 0h44v1h-44zm45 0h2v1h-2zm3 0h21v1h-21zm22 0h32v1h-32zm34 0h6v1h-6zm16 0h1v1h-1zm-163 1h2v1h-2zm3 0h3v4h-3zm5 0h1v2h-1zm2 0h2v1h-2zm5 0h23v1h-23zm24 0h1v4h-1zm2 0h8v1h-8zm9 0h3v1h-3zm4 0h30v1h-30zm31 0h10v1h-10zm11 0h10v1h-10zm11 0h3v1h-3zm4 0h20v1h-20zm21 0h4v1h-4zm5 0h2v1h-2zm4 0h2v1h-2zm7 0h4v1h-4zm-148 1h1v1h-1zm10 0h1v1h-1zm5 0h8v1h-8zm9 0h11v1h-11zm12 0h1v1h-1zm5 0h4v1h-4zm5 0h1v1h-1zm2 0h5v1h-5zm6 0h2v1h-2zm3 0h1v1h-1zm2 0h3v1h-3zm4 0h8v1h-8zm9 0h2v1h-2zm3 0h2v1h-2zm3 0h13v1h-13zm14 0h1v1h-1zm2 0h7v1h-7zm8 0h6v1h-6zm7 0h15v1h-15zm16 0h1v1h-1zm3 0h2v1h-2zm7 0h2v1h-2zm15 0h1v1h-1zm-142 1h2v1h-2zm7 0h7v2h-7zm9 0h5v1h-5zm6 0h5v2h-5zm16 0h7v1h-7zm11 0h6v1h-6zm7 0h15v1h-15zm16 0h16v1h-16zm17 0h7v1h-7zm14 0h3v1h-3zm-86 1h1v2h-1zm46 0h4v1h-4zm7 0h4v1h-4zm5 0h32v1h-32zm-79 1h1v2h-1zm12 0h5v2h-5zm15 0h3v2h-3zm57 0h28v1h-28zm-47 1h75v1h-75zm-24 1h3v2h-3zm15 0h1v2h-1zm9 0h93v1h-93zm0 1h1v1h-1zm3 0h5v1h-5zm6 0h2v1h-2zm3 0h37v1h-37zm62 0h34v1h-34zm-97 1h1v2h-1zm27 0h2v1h-2zm11 0h2v1h-2zm4 0h4v1h-4zm5 0h23v1h-23zm52 0h28v1h-28zm-57 1h1v1h-1zm6 0h1v1h-1zm5 0h4v1h-4zm47 0h20v1h-20zm22 0h3v1h-3zm-73 1h2v1h-2zm8 0h1v1h-1zm2 0h4v1h-4zm57 0h4v1h-4zm7 0h1v1h-1zm-65 1h1v1h-1zm5 0h1v1h-1zm3 0h1v1h-1zm48 0h1v1h-1zm3 0h2v1h-2zm-53 1h2v1h-2zm3 0h1v1h-1zm2 0h2v1h-2zm42 0h1v1h-1zm2 0h1v1h-1zm2 0h2v1h-2zm-47 1h1v1h-1zm3 0h1v1h-1zm2 0h2v1h-2zm34 0h1v1h-1zm2 0h2v1h-2zm3 0h1v1h-1zm-40 1h1v1h-1zm3 0h3v1h-3zm6 0h1v1h-1zm3 0h1v1h-1zm12 0h2v1h-2zm10 0h1v1h-1zm2 0h1v1h-1zm-30 1h3v1h-3zm7 0h1v1h-1zm9 0h2v1h-2zm4 0h1v1h-1zm3 0h5v1h-5zm-19 1h2v1h-2zm6 0h1v1h-1zm5 0h1v1h-1zm6 0h1v1h-1zm-13 1h2v1h-2zm3 0h4v1h-4zm11 0h1v1h-1zm233 200h3v1h-3zm4 0h5v1h-5zm6 0h1v1h-1zm3 0h1v1h-1zm2 0h16v1h-16zm-14 1h12v1h-12zm13 0h9v1h-9zm10 0h7v1h-7zm-24 1h12v1h-12zm15 0h16v1h-16zm-15 1h24v1h-24zm25 0h3v1h-3zm4 0h2v1h-2zm-29 1h13v1h-13zm14 0h7v1h-7zm8 0h7v1h-7zm-22 1h12v1h-12zm13 0h1v1h-1zm2 0h16v1h-16zm-15 1h28v2h-28zm29 1h1v2h-1zm-29 1h12v1h-12zm15 0h2v1h-2zm3 0h10v1h-10zm-18 1h13v1h-13zm15 0h9v1h-9zm11 0h5v1h-5zm-26 1h14v1h-14zm15 0h3v1h-3zm4 0h9v1h-9zm11 0h1v1h-1zm-30 1h13v1h-13zm14 0h9v1h-9zm11 0h6v1h-6zm-25 1h12v2h-12zm14 0h12v1h-12zm13 0h4v1h-4zm-14 1h1v1h-1zm2 0h8v1h-8zm9 0h1v1h-1zm2 0h2v1h-2zm3 0h2v1h-2zm-765 146h61v1h-61zm-313 1h65v1h-65zm72 0h2v1h-2zm13 0h2v1h-2zm6 0h2v1h-2zm5 0h2v1h-2zm3 0h10v1h-10zm13 0h15v1h-15zm18 0h9v2h-9zm10 0h5v1h-5zm7 0h112v1h-112zm113 0h3v1h-3zm5 0h5v1h-5zm8 0h5v2h-5zm10 0h1v2h-1zm3 0h1v2h-1zm3 0h2v2h-2zm12 0h258v1h-258zm259 0h8v1h-8zm10 0h4v1h-4zm5 0h1v1h-1zm8 0h2v1h-2zm5 0h1v1h-1zm10 0h7v1h-7zm8 0h4v1h-4zm5 0h2v1h-2zm3 0h4v1h-4zm6 0h3v2h-3zm5 0h2v2h-2zm3 0h15v1h-15zm16 0h3v2h-3zm5 0h4v1h-4zm5 0h3v1h-3zm6 0h3v1h-3zm4 0h5v1h-5zm6 0h5v1h-5zm7 0h4v2h-4zm5 0h5v2h-5zm12 0h13v1h-13zm14 0h6v1h-6zm7 0h1v1h-1zm2 0h1v1h-1zm3 0h3v1h-3zm5 0h1v1h-1zm3 0h2v1h-2zm3 0h1v1h-1zm127 0h2v2h-2zm-858 1h60v1h-60zm61 0h3v1h-3zm30 0h1v1h-1zm6 0h1v1h-1zm3 0h1v1h-1zm2 0h7v1h-7zm10 0h4v1h-4zm5 0h6v1h-6zm7 0h3v1h-3zm17 0h4v1h-4zm6 0h1v1h-1zm2 0h109v1h-109zm112 0h2v1h-2zm4 0h4v1h-4zm37 0h11v1h-11zm72 0h32v1h-32zm33 0h152v1h-152zm153 0h7v1h-7zm39 0h2v1h-2zm4 0h2v1h-2zm3 0h3v1h-3zm6 0h1v1h-1zm3 0h3v1h-3zm13 0h10v1h-10zm11 0h4v1h-4zm9 0h4v1h-4zm6 0h4v1h-4zm5 0h4v1h-4zm5 0h4v1h-4zm6 0h6v1h-6zm24 0h15v1h-15zm16 0h9v1h-9zm10 0h1v1h-1zm8 0h1v1h-1zm4 0h1v1h-1zm187 72h4v1h-4zm-6 1h10v1h-10zm-6 1h16v1h-16zm-6 1h9v1h-9zm10 0h12v1h-12zm-598 1h61v1h-61zm582 0h28v1h-28zm-895 1h200v1h-200zm201 0h659v1h-659zm688 0h15v1h-15zm16 0h18v1h-18zm-905 1h21v1h-21zm22 0h119v1h-119zm120 0h718v1h-718zm741 0h10v1h-10zm11 0h29v1h-29zm-894 1h231v1h-231zm232 0h628v1h-628zm645 0h46v1h-46zm-877 1h29v1h-29zm30 0h830v1h-830zm840 0h1v1h-1zm2 0h20v1h-20zm21 0h14v1h-14zm15 0h3v1h-3zm4 0h11v1h-11zm-912 1h276v1h-276zm277 0h517v1h-517zm518 0h65v1h-65zm69 0h28v1h-28zm29 0h30v1h-30zm-893 1h906v1h-906zm907 0h16v1h-16zm-907 1h352v1h-352zm353 0h133v1h-133zm134 0h436v1h-436zm-487 1h907v1h-907zm908 0h2v1h-2zm3 0h12v1h-12zm-911 1h872v1h-872zm873 0h48v1h-48zm-873 1h915v1h-915zm0 1h29v2h-29zm30 0h152v1h-152zm153 0h727v1h-727zm-153 1h339v1h-339zm340 0h534v1h-534zm-370 1h34v1h-34zm35 0h278v1h-278zm339 0h52v1h-52zm53 0h472v1h-472zm433 1h33v1h-33zm0 1h27v1h-27zm0 1h22v1h-22zm0 1h16v1h-16zm0 1h11v1h-11zm0 1h5v1h-5z"/>
<path fill="#50b800" d="M0 0m834 229h25v1h-25zm-2 1h29v1h-29zm-21 1h2v1h-2zm8 0h43v1h-43zm1 1h1v1h-1zm5 0h53v1h-53zm1 1h2v1h-2zm3 0h5v1h-5zm30 0h17v1h-17zm18 0h2v1h-2zm-47 1h1v1h-1zm3 0h1v1h-1zm2 0h2v1h-2zm26 0h12v1h-12zm13 0h1v1h-1zm-40 1h1v1h-1zm3 0h3v1h-3zm6 0h1v1h-1zm3 0h1v1h-1zm12 0h2v1h-2zm4 0h7v1h-7zm8 0h1v1h-1zm-30 1h3v1h-3zm7 0h1v1h-1zm9 0h2v1h-2zm4 0h1v1h-1zm3 0h5v1h-5zm-19 1h2v1h-2zm6 0h1v1h-1zm5 0h1v1h-1zm6 0h1v1h-1zm-13 1h2v1h-2zm3 0h4v1h-4zm11 0h1v1h-1zm233 198h5v1h-5zm6 0h6v1h-6zm8 0h12v1h-12zm13 0h4v1h-4zm-27 1h12v1h-12zm13 0h18v1h-18zm-13 1h5v1h-5zm6 0h7v1h-7zm10 0h15v1h-15zm-752 162h61v1h-61zm-313 1h60v1h-60zm61 0h3v1h-3zm36 0h1v1h-1zm3 0h1v2h-1zm3 0h4v2h-4zm9 0h3v1h-3zm7 0h4v1h-4zm6 0h2v2h-2zm6 0h3v2h-3zm4 0h4v1h-4zm6 0h2v1h-2zm9 0h7v1h-7zm8 0h100v1h-100zm103 0h2v1h-2zm4 0h2v1h-2zm11 0h2v2h-2zm10 0h1v1h-1zm3 0h2v2h-2zm13 0h1v2h-1zm2 0h102v1h-102zm103 0h20v1h-20zm21 0h1v1h-1zm2 0h122v1h-122zm123 0h4v1h-4zm9 0h4v1h-4zm41 0h1v1h-1zm4 0h2v1h-2zm8 0h3v1h-3zm6 0h1v1h-1zm4 0h1v1h-1zm3 0h10v1h-10zm11 0h3v1h-3zm5 0h3v1h-3zm4 0h5v1h-5zm7 0h3v1h-3zm4 0h4v2h-4zm6 0h4v1h-4zm6 0h5v1h-5zm6 0h4v2h-4zm6 0h4v2h-4zm10 0h11v1h-11zm12 0h4v1h-4zm5 0h1v1h-1zm2 0h3v1h-3zm5 0h2v1h-2zm3 0h4v1h-4zm7 0h1v1h-1zm10 0h1v1h-1zm121 0h2v2h-2zm-858 1h59v1h-59zm113 0h1v2h-1zm24 0h1v1h-1zm14 0h3v1h-3zm7 0h19v1h-19zm20 0h12v1h-12zm13 0h65v1h-65zm70 0h1v2h-1zm5 0h1v1h-1zm38 0h9v1h-9zm68 0h1v1h-1zm2 0h31v1h-31zm35 0h8v1h-8zm9 0h7v1h-7zm13 0h4v1h-4zm5 0h116v1h-116zm119 0h1v1h-1zm7 0h3v1h-3zm46 0h1v1h-1zm8 0h2v1h-2zm13 0h9v1h-9zm11 0h2v1h-2zm5 0h2v1h-2zm3 0h9v1h-9zm16 0h11v1h-11zm24 0h1v1h-1zm4 0h12v1h-12zm13 0h10v1h-10zm11 0h1v1h-1zm3 0h2v1h-2zm4 0h1v1h-1zm5 0h1v1h-1zm-622 1h1v1h-1zm19 0h1v1h-1zm27 0h2v1h-2zm6 0h1v1h-1zm13 0h1v1h-1zm7 0h1v1h-1zm3 0h2v1h-2zm11 0h2v1h-2zm19 0h1v1h-1zm44 0h1v1h-1zm60 0h1v1h-1zm58 0h1v1h-1zm28 0h1v1h-1zm9 0h7v1h-7zm9 0h1v1h-1zm2 0h1v1h-1zm2 0h1v1h-1zm10 0h1v1h-1zm196 0h3v1h-3zm6 0h1v1h-1zm5 0h1v1h-1zm-481 1h1v1h-1zm13 0h1v1h-1zm4 0h1v1h-1zm7 0h1v1h-1zm11 0h5v1h-5zm7 0h1v1h-1zm4 0h1v1h-1zm5 0h1v1h-1zm6 0h1v1h-1zm186 0h1v1h-1zm18 0h1v1h-1zm17 0h1v1h-1zm4 0h1v1h-1zm191 0h3v1h-3zm4 0h2v1h-2zm5 0h1v1h-1zm-587 1h2v1h-2zm4 0h1v1h-1zm47 0h1v1h-1zm56 0h1v1h-1zm12 0h1v1h-1zm2 0h1v1h-1zm9 0h1v1h-1zm5 0h1v1h-1zm10 0h1v1h-1zm3 0h2v1h-2zm4 0h1v1h-1zm3 0h1v1h-1zm3 0h3v1h-3zm42 0h1v1h-1zm56 0h1v1h-1zm6 0h1v1h-1zm7 0h1v1h-1zm77 0h1v1h-1zm38 0h2v1h-2zm-438 1h1v1h-1zm8 0h1v1h-1zm45 0h1v1h-1zm3 0h2v1h-2zm48 0h1v1h-1zm56 0h1v1h-1zm10 0h1v1h-1zm4 0h1v1h-1zm5 0h2v1h-2zm6 0h1v1h-1zm15 0h1v1h-1zm4 0h1v1h-1zm3 0h1v1h-1zm8 0h1v1h-1zm4 0h1v1h-1zm34 0h1v1h-1zm52 0h2v1h-2zm3 0h1v1h-1zm27 0h1v1h-1zm8 0h1v1h-1zm21 0h1v1h-1zm26 0h2v1h-2zm9 0h1v1h-1zm4 0h1v1h-1zm39 0h1v1h-1zm203 0h1v1h-1zm-636 1h1v1h-1zm34 0h1v1h-1zm119 0h1v1h-1zm7 0h1v1h-1zm18 0h2v1h-2zm21 0h1v1h-1zm9 0h1v1h-1zm4 0h1v1h-1zm13 0h1v1h-1zm18 0h1v1h-1zm55 0h1v1h-1zm17 0h1v1h-1zm26 0h1v1h-1zm2 0h1v1h-1zm7 0h1v1h-1zm4 0h1v1h-1zm5 0h3v1h-3zm6 0h1v1h-1zm5 0h2v1h-2zm15 0h2v1h-2zm157 0h1v1h-1zm98 0h1v1h-1zm-597 1h1v1h-1zm134 0h1v1h-1zm34 0h1v1h-1zm3 0h1v1h-1zm4 0h2v1h-2zm21 0h1v1h-1zm69 0h2v1h-2zm11 0h1v1h-1zm5 0h1v1h-1zm3 0h1v1h-1zm8 0h1v1h-1zm4 0h1v1h-1zm3 0h1v1h-1zm5 0h1v1h-1zm2 0h1v1h-1zm2 0h1v1h-1zm5 0h1v1h-1zm2 0h1v1h-1zm4 0h1v1h-1zm7 0h1v1h-1zm3 0h2v1h-2zm4 0h3v1h-3zm7 0h2v1h-2zm4 0h1v1h-1zm2 0h1v1h-1zm46 0h1v1h-1zm2 0h3v1h-3zm5 0h1v1h-1zm195 0h3v1h-3zm-645 1h2v1h-2zm3 0h1v1h-1zm40 0h1v1h-1zm119 0h3v1h-3zm55 0h1v1h-1zm7 0h1v1h-1zm5 0h1v1h-1zm5 0h1v1h-1zm7 0h1v1h-1zm4 0h1v1h-1zm5 0h1v1h-1zm60 0h1v1h-1zm2 0h2v1h-2zm6 0h1v1h-1zm3 0h1v1h-1zm3 0h1v1h-1zm2 0h1v1h-1zm2 0h2v1h-2zm3 0h1v1h-1zm2 0h1v1h-1zm15 0h1v1h-1zm5 0h2v1h-2zm8 0h1v1h-1zm4 0h1v1h-1zm9 0h1v1h-1zm2 0h1v1h-1zm7 0h1v1h-1zm4 0h2v1h-2zm9 0h1v1h-1zm46 0h1v1h-1zm2 0h1v1h-1zm7 0h1v1h-1zm18 0h1v1h-1zm78 0h3v1h-3zm-536 1h2v1h-2zm7 0h1v1h-1zm30 0h1v1h-1zm119 0h1v1h-1zm54 0h1v1h-1zm2 0h1v1h-1zm2 0h1v1h-1zm3 0h1v1h-1zm2 0h2v1h-2zm5 0h1v1h-1zm5 0h1v1h-1zm2 0h3v1h-3zm69 0h1v1h-1zm8 0h2v1h-2zm6 0h1v1h-1zm5 0h1v1h-1zm6 0h2v1h-2zm5 0h1v1h-1zm3 0h3v1h-3zm8 0h1v1h-1zm23 0h1v1h-1zm7 0h1v1h-1zm67 0h1v1h-1zm6 0h1v1h-1zm13 0h1v1h-1zm2 0h1v1h-1zm5 0h1v1h-1zm71 0h1v1h-1zm103 0h1v1h-1zm-647 1h1v1h-1zm7 0h1v1h-1zm18 0h2v1h-2zm7 0h2v1h-2zm4 0h1v1h-1zm3 0h1v1h-1zm4 0h1v1h-1zm2 0h1v1h-1zm2 0h2v1h-2zm116 0h2v1h-2zm67 0h1v1h-1zm4 0h1v1h-1zm12 0h1v1h-1zm90 0h1v1h-1zm2 0h1v1h-1zm16 0h1v1h-1zm4 0h1v1h-1zm88 0h1v1h-1zm4 0h1v1h-1zm4 0h1v1h-1zm20 0h1v1h-1zm37 0h1v1h-1zm26 0h1v1h-1zm6 0h1v1h-1zm-541 1h1v1h-1zm6 0h1v1h-1zm19 0h1v1h-1zm8 0h1v1h-1zm2 0h1v1h-1zm5 0h1v1h-1zm2 0h1v1h-1zm191 0h3v1h-3zm9 0h1v1h-1zm3 0h1v1h-1zm90 0h1v1h-1zm118 0h1v1h-1zm5 0h1v1h-1zm2 0h1v1h-1zm7 0h4v1h-4zm69 0h2v1h-2zm3 0h1v1h-1zm-530 1h2v1h-2zm6 0h1v1h-1zm14 0h1v1h-1zm3 0h1v1h-1zm417 0h2v1h-2zm5 0h4v1h-4zm5 0h1v1h-1zm2 0h2v1h-2zm12 0h1v1h-1zm6 0h1v1h-1zm61 0h1v1h-1zm106 0h3v1h-3zm-645 1h2v1h-2zm11 0h2v1h-2zm14 0h3v1h-3zm10 0h1v1h-1zm427 0h1v1h-1zm12 0h1v1h-1zm2 0h2v1h-2zm3 0h1v1h-1zm10 0h1v1h-1zm20 0h1v1h-1zm4 0h1v1h-1zm13 0h2v1h-2zm11 0h1v1h-1zm-527 1h1v1h-1zm7 0h2v1h-2zm3 0h2v1h-2zm453 0h1v1h-1zm2 0h1v1h-1zm5 0h3v1h-3zm8 0h1v1h-1zm2 0h1v1h-1zm7 0h1v1h-1zm5 0h1v1h-1zm19 0h2v1h-2zm3 0h2v1h-2zm4 0h1v1h-1zm-513 1h2v1h-2zm4 0h1v1h-1zm464 0h2v1h-2zm3 0h2v1h-2zm10 0h1v1h-1zm5 0h1v1h-1zm2 0h1v1h-1zm11 0h1v1h-1zm4 0h3v1h-3zm11 0h5v1h-5zm323 0h1v1h-1zm-367 1h1v1h-1zm6 0h1v1h-1zm4 0h1v1h-1zm3 0h2v1h-2zm6 0h1v1h-1zm6 0h1v1h-1zm2 0h1v1h-1zm3 0h1v1h-1zm8 0h1v1h-1zm330 0h1v1h-1zm-361 1h1v1h-1zm2 0h1v1h-1zm6 0h1v1h-1zm5 0h2v1h-2zm6 0h1v1h-1zm6 0h1v1h-1zm-24 1h1v1h-1zm14 0h1v1h-1zm9 0h1v1h-1zm399 66h2v1h-2zm-6 1h8v1h-8zm-5 1h13v1h-13zm-6 1h19v1h-19zm-591 1h61v1h-61zm586 0h24v1h-24zm-899 1h103v1h-103zm104 0h756v1h-756zm789 0h16v1h-16zm17 0h5v1h-5zm6 0h7v1h-7zm-916 1h591v1h-591zm592 0h171v1h-171zm172 0h96v1h-96zm123 0h36v1h-36zm-887 1h29v1h-29zm30 0h607v1h-607zm608 0h222v1h-222zm244 0h33v1h-33zm34 0h7v1h-7zm-916 1h107v1h-107zm108 0h752v1h-752zm768 0h6v1h-6zm7 0h39v1h-39zm-883 1h29v1h-29zm30 0h317v1h-317zm318 0h21v1h-21zm22 0h419v1h-419zm420 0h70v1h-70zm81 0h52v1h-52zm-871 1h390v1h-390zm391 0h469v1h-469zm474 0h58v1h-58zm-865 1h40v1h-40zm41 0h348v1h-348zm349 0h533v1h-533zm-390 1h834v1h-834zm835 0h29v1h-29zm30 0h6v1h-6zm7 0h13v1h-13zm14 0h37v1h-37zm-886 1h29v1h-29zm30 0h4v1h-4zm5 0h73v1h-73zm74 0h814v1h-814zm-109 1h369v1h-369zm370 0h550v1h-550zm-370 1h872v1h-872zm873 0h41v1h-41zm-873 1h369v1h-369zm370 0h286v1h-286zm287 0h232v1h-232zm233 0h19v1h-19zm-890 1h313v1h-313zm374 0h460v1h-460zm461 0h69v1h-69zm25 1h30v1h-30zm31 0h7v1h-7zm-31 1h33v1h-33zm0 1h27v1h-27zm0 1h3v1h-3zm4 0h18v1h-18zm-4 1h17v1h-17zm0 1h11v1h-11zm0 1h6v1h-6z"/>
<path fill="#68a800" d="M0 0m834 233h25v1h-25zm0 1h1v1h-1zm3 0h24v1h-24zm3 1h3v1h-3zm4 0h2v2h-2zm3 0h11v1h-11zm13 0h2v1h-2zm-12 1h8v1h-8zm13 0h2v1h-2zm-13 1h2v1h-2zm3 0h4v1h-4zm11 0h1v1h-1zm-503 365h59v1h-59zm60 0h1v1h-1zm-373 1h59v1h-59zm104 0h2v1h-2zm55 0h12v1h-12zm13 0h5v1h-5zm7 0h2v1h-2zm4 0h7v1h-7zm11 0h17v1h-17zm18 0h43v1h-43zm93 0h4v1h-4zm5 0h3v1h-3zm64 0h27v1h-27zm28 0h2v1h-2zm18 0h1v1h-1zm17 0h3v1h-3zm4 0h111v1h-111zm191 0h3v1h-3zm4 0h2v1h-2zm5 0h1v1h-1zm4 0h2v1h-2zm3 0h10v1h-10zm11 0h4v1h-4zm5 0h12v1h-12zm14 0h9v1h-9zm10 0h18v1h-18zm19 0h2v1h-2zm3 0h1v1h-1zm3 0h3v1h-3zm5 0h2v1h-2zm4 0h2v1h-2zm7 0h1v1h-1zm129 0h2v1h-2zm62 96h3v1h-3zm-6 1h4v1h-4zm5 0h4v1h-4zm-10 1h14v1h-14zm-596 1h61v1h-61zm591 0h19v1h-19zm-904 1h775v1h-775zm776 0h84v1h-84zm122 0h2v1h-2zm3 0h9v1h-9zm10 0h12v1h-12zm-911 1h29v1h-29zm30 0h830v1h-830zm863 0h30v2h-30zm-893 1h126v1h-126zm127 0h513v1h-513zm514 0h219v1h-219zm246 0h5v1h-5zm-887 1h29v1h-29zm30 0h272v1h-272zm273 0h557v1h-557zm579 0h41v1h-41zm-882 1h21v1h-21zm22 0h838v1h-838zm855 0h46v1h-46zm-877 1h860v1h-860zm871 0h52v1h-52zm-871 1h155v1h-155zm156 0h704v1h-704zm710 0h49v1h-49zm50 0h7v1h-7zm-916 1h302v1h-302zm303 0h620v1h-620zm-303 1h29v1h-29zm30 0h371v1h-371zm372 0h168v1h-168zm169 0h350v1h-350zm351 0h1v1h-1zm-922 1h65v1h-65zm66 0h67v1h-67zm68 0h142v1h-142zm143 0h512v1h-512zm513 0h133v1h-133zm-790 1h369v1h-369zm370 0h493v1h-493zm494 0h29v1h-29zm30 0h22v1h-22zm23 0h6v1h-6zm-917 1h29v1h-29zm30 0h759v1h-759zm760 0h133v1h-133zm-790 1h799v1h-799zm800 0h34v1h-34zm35 0h88v1h-88zm-835 1h65v1h-65zm66 0h773v1h-773zm774 0h76v1h-76zm77 0h6v1h-6zm-917 1h921v1h-921zm922 0h1v1h-1zm-922 1h350v1h-350zm351 0h438v1h-438zm439 0h93v1h-93zm94 0h2v1h-2zm4 0h3v1h-3zm4 0h27v1h-27zm-892 1h29v1h-29zm30 0h4v1h-4zm5 0h73v1h-73zm74 0h204v1h-204zm265 0h390v1h-390zm391 0h120v1h-120zm121 0h27v1h-27zm-26 1h30v1h-30zm31 0h17v1h-17zm-31 1h38v1h-38zm39 0h3v1h-3zm-39 1h36v1h-36zm0 1h31v1h-31zm0 1h25v1h-25zm0 1h20v1h-20zm0 1h14v1h-14zm0 1h9v1h-9zm0 1h3v1h-3z"/>
<path fill="#90bc00" d="M0 0m963 600h6v1h-6zm-6 1h12v1h-12zm-6 1h12v1h-12zm-592 1h2v1h-2zm3 0h56v2h-56zm583 0h12v1h-12zm-899 1h59v1h-59zm104 0h2v1h-2zm56 0h11v1h-11zm13 0h3v1h-3zm6 0h2v2h-2zm5 0h6v1h-6zm15 0h2v1h-2zm3 0h3v1h-3zm4 0h4v1h-4zm6 0h4v1h-4zm5 0h38v1h-38zm88 0h4v2h-4zm5 0h5v1h-5zm64 0h27v1h-27zm29 0h1v2h-1zm35 0h2v1h-2zm4 0h110v2h-110zm203 0h13v1h-13zm15 0h3v1h-3zm4 0h23v1h-23zm24 0h18v1h-18zm19 0h2v1h-2zm3 0h1v1h-1zm3 0h1v1h-1zm2 0h5v1h-5zm6 0h3v1h-3zm11 0h1v1h-1zm126 0h2v1h-2zm35 0h12v1h-12zm-893 1h54v1h-54zm56 0h2v1h-2zm48 0h1v1h-1zm56 0h1v1h-1zm2 0h9v1h-9zm12 0h1v1h-1zm11 0h4v1h-4zm15 0h1v1h-1zm4 0h1v1h-1zm3 0h2v1h-2zm8 0h1v1h-1zm2 0h37v1h-37zm94 0h2v1h-2zm24 0h1v1h-1zm8 0h1v1h-1zm21 0h1v1h-1zm10 0h26v1h-26zm271 0h42v1h-42zm43 0h26v2h-26zm30 0h1v1h-1zm3 0h1v1h-1zm9 0h1v1h-1zm6 0h1v1h-1zm122 0h41v1h-41zm-849 1h1v1h-1zm34 0h1v1h-1zm119 0h1v1h-1zm7 0h1v1h-1zm18 0h2v1h-2zm21 0h1v1h-1zm9 0h1v1h-1zm4 0h1v1h-1zm13 0h1v1h-1zm18 0h1v1h-1zm55 0h1v1h-1zm17 0h1v1h-1zm26 0h1v1h-1zm2 0h1v1h-1zm7 0h1v1h-1zm4 0h1v1h-1zm5 0h3v1h-3zm6 0h1v1h-1zm5 0h2v1h-2zm15 0h2v1h-2zm157 0h1v1h-1zm98 0h1v1h-1zm5 0h33v1h-33zm206 0h33v1h-33zm-808 1h1v1h-1zm134 0h1v1h-1zm34 0h1v1h-1zm3 0h1v1h-1zm4 0h2v1h-2zm21 0h1v1h-1zm69 0h2v1h-2zm11 0h1v1h-1zm5 0h1v1h-1zm3 0h1v1h-1zm8 0h1v1h-1zm4 0h1v1h-1zm3 0h1v1h-1zm5 0h1v1h-1zm2 0h1v1h-1zm2 0h1v1h-1zm5 0h1v1h-1zm2 0h1v1h-1zm4 0h1v1h-1zm7 0h1v1h-1zm3 0h2v1h-2zm4 0h3v1h-3zm7 0h2v1h-2zm4 0h1v1h-1zm2 0h1v1h-1zm46 0h1v1h-1zm2 0h3v1h-3zm5 0h1v1h-1zm195 0h3v1h-3zm168 0h44v2h-44zm-813 1h2v1h-2zm3 0h1v1h-1zm40 0h1v1h-1zm119 0h3v1h-3zm55 0h1v1h-1zm7 0h1v1h-1zm5 0h1v1h-1zm5 0h1v1h-1zm7 0h1v1h-1zm4 0h1v1h-1zm5 0h1v1h-1zm60 0h1v1h-1zm2 0h2v1h-2zm6 0h1v1h-1zm3 0h1v1h-1zm3 0h1v1h-1zm2 0h1v1h-1zm2 0h2v1h-2zm3 0h1v1h-1zm2 0h1v1h-1zm15 0h1v1h-1zm5 0h2v1h-2zm8 0h1v1h-1zm4 0h1v1h-1zm9 0h1v1h-1zm2 0h1v1h-1zm7 0h1v1h-1zm4 0h2v1h-2zm9 0h1v1h-1zm46 0h1v1h-1zm2 0h1v1h-1zm7 0h1v1h-1zm18 0h1v1h-1zm78 0h3v1h-3zm-536 1h2v1h-2zm7 0h1v1h-1zm30 0h1v1h-1zm119 0h1v1h-1zm54 0h1v1h-1zm2 0h1v1h-1zm2 0h1v1h-1zm3 0h1v1h-1zm2 0h2v1h-2zm5 0h1v1h-1zm5 0h1v1h-1zm2 0h3v1h-3zm69 0h1v1h-1zm8 0h2v1h-2zm6 0h1v1h-1zm5 0h1v1h-1zm6 0h2v1h-2zm5 0h1v1h-1zm3 0h3v1h-3zm8 0h1v1h-1zm23 0h1v1h-1zm7 0h1v1h-1zm67 0h1v1h-1zm6 0h1v1h-1zm13 0h1v1h-1zm2 0h1v1h-1zm5 0h1v1h-1zm71 0h1v1h-1zm103 0h1v1h-1zm-647 1h1v1h-1zm7 0h1v1h-1zm18 0h2v1h-2zm7 0h2v1h-2zm4 0h1v1h-1zm3 0h1v1h-1zm4 0h1v1h-1zm2 0h1v1h-1zm2 0h2v1h-2zm116 0h2v1h-2zm67 0h1v1h-1zm4 0h1v1h-1zm12 0h1v1h-1zm90 0h1v1h-1zm2 0h1v1h-1zm16 0h1v1h-1zm4 0h1v1h-1zm88 0h1v1h-1zm4 0h1v1h-1zm4 0h1v1h-1zm20 0h1v1h-1zm37 0h1v1h-1zm26 0h1v1h-1zm6 0h1v1h-1zm-541 1h1v1h-1zm6 0h1v1h-1zm19 0h1v1h-1zm8 0h1v1h-1zm2 0h1v1h-1zm5 0h1v1h-1zm2 0h1v1h-1zm191 0h3v1h-3zm9 0h1v1h-1zm3 0h1v1h-1zm90 0h1v1h-1zm118 0h1v1h-1zm5 0h1v1h-1zm2 0h1v1h-1zm7 0h4v1h-4zm69 0h2v1h-2zm3 0h1v1h-1zm170 0h100v2h-100zm-700 1h2v1h-2zm6 0h1v1h-1zm14 0h1v1h-1zm3 0h1v1h-1zm417 0h2v1h-2zm5 0h4v1h-4zm5 0h1v1h-1zm2 0h2v1h-2zm12 0h1v1h-1zm6 0h1v1h-1zm61 0h1v1h-1zm106 0h3v1h-3zm-645 1h2v1h-2zm11 0h2v1h-2zm14 0h3v1h-3zm10 0h1v1h-1zm427 0h1v1h-1zm12 0h1v1h-1zm2 0h2v1h-2zm3 0h1v1h-1zm10 0h1v1h-1zm20 0h1v1h-1zm4 0h1v1h-1zm13 0h2v1h-2zm11 0h1v1h-1zm-527 1h1v1h-1zm7 0h2v1h-2zm3 0h2v1h-2zm453 0h1v1h-1zm2 0h1v1h-1zm5 0h3v1h-3zm8 0h1v1h-1zm2 0h1v1h-1zm7 0h1v1h-1zm5 0h1v1h-1zm19 0h2v1h-2zm3 0h2v1h-2zm4 0h1v1h-1zm-513 1h2v1h-2zm4 0h1v1h-1zm464 0h2v1h-2zm3 0h2v1h-2zm10 0h1v1h-1zm5 0h1v1h-1zm2 0h1v1h-1zm11 0h1v1h-1zm4 0h3v1h-3zm11 0h5v1h-5zm323 0h1v1h-1zm-367 1h1v1h-1zm6 0h1v1h-1zm4 0h1v1h-1zm3 0h2v1h-2zm6 0h1v1h-1zm6 0h1v1h-1zm2 0h1v1h-1zm3 0h1v1h-1zm8 0h1v1h-1zm330 0h1v1h-1zm-361 1h1v1h-1zm2 0h1v1h-1zm6 0h1v1h-1zm5 0h2v1h-2zm6 0h1v1h-1zm6 0h1v1h-1zm-24 1h1v1h-1zm14 0h1v1h-1zm9 0h1v1h-1zm224 1h1v1h-1zm8 0h1v1h-1zm-7 2h1v1h-1zm6 0h1v1h-1zm-39 1h1v1h-1zm8 0h1v1h-1zm7 0h1v1h-1zm10 0h1v1h-1zm-24 2h1v1h-1zm6 0h1v1h-1zm9 0h1v1h-1zm8 0h1v1h-1zm-22 2h1v1h-1zm4 0h1v1h-1zm11 0h1v1h-1zm6 0h1v1h-1zm-20 2h1v1h-1zm2 0h1v1h-1zm13 0h1v1h-1zm4 0h1v1h-1zm-18 2h1v1h-1zm15 0h1v1h-1zm2 0h1v1h-1zm-1 2h1v1h-1zm185 86h4v1h-4zm-606 1h61v1h-61zm600 0h10v1h-10zm-913 1h269v1h-269zm270 0h113v1h-113zm114 0h476v1h-476zm524 0h15v1h-15zm-908 1h372v1h-372zm373 0h416v1h-416zm417 0h70v1h-70zm112 0h5v1h-5zm6 0h1v1h-1zm2 0h3v1h-3zm4 0h9v1h-9zm-914 1h106v1h-106zm107 0h753v1h-753zm789 0h27v1h-27zm-896 1h29v1h-29zm30 0h339v1h-339zm340 0h490v1h-490zm521 0h2v1h-2zm3 0h29v1h-29zm-894 1h860v1h-860zm885 0h38v1h-38zm-885 1h52v1h-52zm53 0h469v1h-469zm470 0h337v1h-337zm357 0h12v1h-12zm13 0h9v1h-9zm10 0h20v1h-20zm-903 1h369v1h-369zm370 0h490v1h-490zm504 0h34v1h-34zm35 0h14v1h-14zm-909 1h860v1h-860zm869 0h31v1h-31zm32 0h22v1h-22zm-901 1h369v1h-369zm370 0h490v1h-490zm493 0h45v1h-45zm46 0h14v1h-14zm-909 1h789v1h-789zm790 0h96v1h-96zm97 0h36v1h-36zm-887 1h895v1h-895zm896 0h25v1h-25zm26 0h1v1h-1zm-922 1h29v2h-29zm30 0h339v1h-339zm340 0h553v1h-553zm-340 1h394v1h-394zm395 0h84v1h-84zm85 0h325v1h-325zm326 0h58v1h-58zm59 0h11v1h-11zm12 0h2v1h-2zm3 0h13v1h-13zm-910 1h369v1h-369zm370 0h517v1h-517zm518 0h35v1h-35zm-888 1h148v1h-148zm149 0h62v1h-62zm63 0h691v1h-691zm692 0h15v1h-15zm16 0h3v1h-3zm-920 1h887v1h-887zm888 0h27v1h-27zm28 0h7v1h-7zm-916 1h551v1h-551zm552 0h40v1h-40zm41 0h148v1h-148zm149 0h55v1h-55zm56 0h125v1h-125zm-798 1h372v1h-372zm373 0h550v1h-550zm-373 1h775v1h-775zm776 0h115v1h-115zm116 0h25v1h-25zm26 0h5v2h-5zm-918 1h197v1h-197zm198 0h171v1h-171zm172 0h254v1h-254zm255 0h12v1h-12zm13 0h279v1h-279zm-638 1h481v1h-481zm482 0h326v1h-326zm327 0h73v1h-73zm74 0h13v1h-13zm14 0h26v1h-26zm-897 1h29v1h-29zm30 0h465v1h-465zm466 0h370v1h-370zm371 0h30v1h-30zm31 0h25v1h-25zm-898 1h206v1h-206zm207 0h162v1h-162zm163 0h2v1h-2zm3 0h37v1h-37zm38 0h152v1h-152zm153 0h359v1h-359zm-564 1h95v1h-95zm96 0h32v1h-32zm33 0h577v1h-577zm578 0h177v1h-177zm178 0h38v1h-38zm-885 1h240v1h-240zm241 0h682v1h-682zm-241 1h227v1h-227zm228 0h16v1h-16zm17 0h652v1h-652zm653 0h25v1h-25zm-898 1h372v2h-372zm373 0h158v1h-158zm159 0h82v1h-82zm83 0h219v1h-219zm220 0h77v1h-77zm78 0h10v1h-10zm-540 1h514v1h-514zm515 0h9v1h-9zm10 0h25v1h-25z"/>
<path fill="#b0d800" d="M0 0m963 602h6v1h-6zm-6 1h12v1h-12zm-6 1h12v1h-12zm-592 1h2v1h-2zm4 0h6v2h-6zm7 0h11v1h-11zm12 0h7v2h-7zm8 0h20v1h-20zm21 0h7v1h-7zm534 0h12v1h-12zm-898 1h7v2h-7zm9 0h33v2h-33zm34 0h9v1h-9zm119 0h6v2h-6zm23 0h1v1h-1zm32 0h1v2h-1zm2 0h1v1h-1zm2 0h12v1h-12zm13 0h17v1h-17zm76 0h4v2h-4zm14 0h10v1h-10zm19 0h6v1h-6zm7 0h1v1h-1zm2 0h6v1h-6zm7 0h3v1h-3zm5 0h3v1h-3zm6 0h1v1h-1zm4 0h4v1h-4zm6 0h9v1h-9zm11 0h2v1h-2zm4 0h3v1h-3zm47 0h108v1h-108zm203 0h3v1h-3zm4 0h4v1h-4zm66 0h1v2h-1zm2 0h1v1h-1zm3 0h2v2h-2zm6 0h1v1h-1zm8 0h1v1h-1zm3 0h1v1h-1zm120 0h2v1h-2zm35 0h12v1h-12zm-849 1h8v1h-8zm178 0h1v2h-1zm2 0h3v1h-3zm5 0h5v1h-5zm6 0h13v1h-13zm14 0h3v1h-3zm70 0h1v1h-1zm3 0h1v1h-1zm3 0h1v1h-1zm2 0h1v1h-1zm2 0h2v1h-2zm3 0h1v1h-1zm2 0h1v1h-1zm15 0h1v1h-1zm5 0h2v1h-2zm8 0h1v1h-1zm4 0h1v1h-1zm9 0h3v1h-3zm8 0h2v1h-2zm5 0h2v1h-2zm9 0h1v1h-1zm46 0h1v1h-1zm2 0h1v1h-1zm4 0h2v1h-2zm3 0h99v1h-99zm198 0h64v1h-64zm68 0h2v1h-2zm6 0h1v1h-1zm2 0h1v1h-1zm3 0h1v1h-1zm5 0h1v1h-1zm124 0h41v1h-41zm-846 1h2v1h-2zm7 0h1v1h-1zm30 0h1v1h-1zm119 0h1v1h-1zm56 0h1v1h-1zm2 0h1v1h-1zm3 0h1v1h-1zm2 0h2v1h-2zm5 0h1v1h-1zm5 0h1v1h-1zm2 0h3v1h-3zm69 0h1v1h-1zm8 0h2v1h-2zm6 0h1v1h-1zm5 0h1v1h-1zm6 0h2v1h-2zm5 0h1v1h-1zm3 0h3v1h-3zm8 0h1v1h-1zm23 0h1v1h-1zm7 0h1v1h-1zm67 0h1v1h-1zm6 0h1v1h-1zm13 0h1v1h-1zm2 0h1v1h-1zm5 0h1v1h-1zm71 0h1v1h-1zm103 0h1v1h-1zm4 0h60v1h-60zm206 0h33v1h-33zm-857 1h1v1h-1zm7 0h1v1h-1zm18 0h2v1h-2zm7 0h2v1h-2zm4 0h1v1h-1zm3 0h1v1h-1zm4 0h1v1h-1zm2 0h1v1h-1zm2 0h2v1h-2zm116 0h2v1h-2zm67 0h1v1h-1zm4 0h1v1h-1zm12 0h1v1h-1zm90 0h1v1h-1zm2 0h1v1h-1zm16 0h1v1h-1zm4 0h1v1h-1zm88 0h1v1h-1zm4 0h1v1h-1zm4 0h1v1h-1zm20 0h1v1h-1zm37 0h1v1h-1zm26 0h1v1h-1zm6 0h1v1h-1zm268 0h44v2h-44zm-809 1h1v1h-1zm6 0h1v1h-1zm19 0h1v1h-1zm8 0h1v1h-1zm2 0h1v1h-1zm5 0h1v1h-1zm2 0h1v1h-1zm191 0h3v1h-3zm9 0h1v1h-1zm3 0h1v1h-1zm90 0h1v1h-1zm118 0h1v1h-1zm5 0h1v1h-1zm2 0h1v1h-1zm7 0h4v1h-4zm69 0h2v1h-2zm3 0h1v1h-1zm-530 1h2v1h-2zm6 0h1v1h-1zm14 0h1v1h-1zm3 0h1v1h-1zm417 0h2v1h-2zm5 0h4v1h-4zm5 0h1v1h-1zm2 0h2v1h-2zm12 0h1v1h-1zm6 0h1v1h-1zm61 0h1v1h-1zm106 0h3v1h-3zm-645 1h2v1h-2zm11 0h2v1h-2zm14 0h3v1h-3zm10 0h1v1h-1zm427 0h1v1h-1zm12 0h1v1h-1zm2 0h2v1h-2zm3 0h1v1h-1zm10 0h1v1h-1zm20 0h1v1h-1zm4 0h1v1h-1zm13 0h2v1h-2zm11 0h1v1h-1zm-527 1h1v1h-1zm7 0h2v1h-2zm3 0h2v1h-2zm453 0h1v1h-1zm2 0h1v1h-1zm5 0h3v1h-3zm8 0h1v1h-1zm2 0h1v1h-1zm7 0h1v1h-1zm5 0h1v1h-1zm19 0h2v1h-2zm3 0h2v1h-2zm4 0h1v1h-1zm180 0h72v1h-72zm74 0h1v1h-1zm11 0h1v1h-1zm5 0h1v1h-1zm3 0h1v1h-1zm4 0h1v1h-1zm-790 1h2v1h-2zm4 0h1v1h-1zm464 0h2v1h-2zm3 0h2v1h-2zm10 0h1v1h-1zm5 0h1v1h-1zm2 0h1v1h-1zm11 0h1v1h-1zm4 0h3v1h-3zm11 0h5v1h-5zm179 0h71v1h-71zm75 0h1v1h-1zm3 0h1v1h-1zm3 0h1v1h-1zm3 0h1v1h-1zm6 0h2v1h-2zm9 0h1v1h-1zm45 0h1v1h-1zm-367 1h1v1h-1zm6 0h1v1h-1zm4 0h1v1h-1zm3 0h2v1h-2zm6 0h1v1h-1zm6 0h1v1h-1zm2 0h1v1h-1zm3 0h1v1h-1zm8 0h1v1h-1zm330 0h1v1h-1zm-361 1h1v1h-1zm2 0h1v1h-1zm6 0h1v1h-1zm5 0h2v1h-2zm6 0h1v1h-1zm6 0h1v1h-1zm-24 1h1v1h-1zm14 0h1v1h-1zm9 0h1v1h-1z"/>
<path fill="#d0d000" d="M0 0m963 604h6v1h-6zm-6 1h12v1h-12zm-6 1h18v1h-18zm-585 1h2v1h-2zm6 0h1v1h-1zm5 0h1v1h-1zm6 0h6v1h-6zm8 0h3v1h-3zm8 0h1v1h-1zm4 0h1v2h-1zm4 0h1v2h-1zm538 0h24v1h-24zm-896 1h1v1h-1zm2 0h3v2h-3zm5 0h2v1h-2zm4 0h5v3h-5zm6 0h23v1h-23zm25 0h4v1h-4zm5 0h2v1h-2zm116 0h2v1h-2zm67 0h1v1h-1zm4 0h4v1h-4zm10 0h1v2h-1zm2 0h2v1h-2zm90 0h3v1h-3zm110 0h1v1h-1zm4 0h3v1h-3zm4 0h12v1h-12zm15 0h4v2h-4zm5 0h70v1h-70zm174 0h3v1h-3zm63 0h2v1h-2zm3 0h1v1h-1zm2 0h1v1h-1zm4 0h1v3h-1zm2 0h1v1h-1zm5 0h1v3h-1zm2 0h1v1h-1zm5 0h1v1h-1zm121 0h2v1h-2zm35 0h30v1h-30zm-882 1h1v1h-1zm9 0h8v2h-8zm10 0h5v1h-5zm7 0h2v1h-2zm3 0h2v1h-2zm5 0h1v1h-1zm2 0h1v1h-1zm191 0h3v1h-3zm12 0h1v1h-1zm90 0h1v1h-1zm114 0h2v2h-2zm4 0h11v1h-11zm20 0h36v2h-36zm37 0h25v3h-25zm26 0h5v1h-5zm110 0h64v2h-64zm65 0h3v1h-3zm4 0h1v1h-1zm5 0h2v2h-2zm3 0h1v1h-1zm130 0h59v1h-59zm-852 1h2v2h-2zm25 0h4v1h-4zm6 0h1v1h-1zm4 0h1v2h-1zm418 0h4v1h-4zm5 0h1v1h-1zm2 0h3v1h-3zm77 0h1v2h-1zm2 0h1v1h-1zm172 0h2v1h-2zm3 0h2v1h-2zm15 0h1v1h-1zm123 0h53v1h-53zm-842 1h3v1h-3zm5 0h7v1h-7zm10 0h3v1h-3zm437 0h1v1h-1zm11 0h5v1h-5zm6 0h29v1h-29zm169 0h60v3h-60zm160 0h91v1h-91zm-798 1h1v1h-1zm7 0h2v1h-2zm3 0h2v1h-2zm453 0h1v1h-1zm2 0h1v1h-1zm5 0h3v1h-3zm8 0h1v1h-1zm2 0h1v1h-1zm7 0h1v1h-1zm5 0h1v1h-1zm19 0h2v1h-2zm3 0h2v1h-2zm4 0h1v1h-1zm280 0h44v1h-44zm46 0h39v1h-39zm-839 1h2v1h-2zm4 0h1v1h-1zm464 0h2v1h-2zm3 0h2v1h-2zm10 0h1v1h-1zm5 0h1v1h-1zm2 0h1v1h-1zm11 0h1v1h-1zm4 0h3v1h-3zm11 0h5v1h-5zm286 0h1v1h-1zm4 0h1v1h-1zm3 0h31v1h-31zm32 0h33v1h-33zm-369 1h1v1h-1zm6 0h1v1h-1zm4 0h1v1h-1zm3 0h2v1h-2zm6 0h1v1h-1zm6 0h1v1h-1zm2 0h1v1h-1zm3 0h1v1h-1zm8 0h1v1h-1zm285 0h1v1h-1zm4 0h1v1h-1zm5 0h3v1h-3zm5 0h30v2h-30zm31 0h1v1h-1zm-361 1h1v1h-1zm2 0h1v1h-1zm6 0h1v1h-1zm5 0h2v1h-2zm6 0h1v1h-1zm6 0h1v1h-1zm191 0h70v4h-70zm71 0h6v1h-6zm8 0h1v1h-1zm3 0h1v1h-1zm3 0h2v2h-2zm4 0h2v1h-2zm3 0h2v1h-2zm3 0h1v1h-1zm2 0h2v1h-2zm4 0h1v1h-1zm7 0h1v1h-1zm2 0h2v1h-2zm-325 1h1v1h-1zm14 0h1v1h-1zm9 0h1v1h-1zm264 0h1v1h-1zm6 0h1v2h-1zm10 0h1v1h-1zm2 0h2v1h-2zm4 0h1v1h-1zm2 0h1v1h-1zm-23 1h1v1h-1zm2 0h2v1h-2zm6 0h2v1h-2zm4 0h1v1h-1zm2 0h3v1h-3zm4 0h1v2h-1zm3 0h2v1h-2zm4 0h1v1h-1zm-27 1h3v1h-3zm4 0h1v1h-1zm5 0h1v1h-1zm5 0h2v1h-2zm8 0h1v1h-1zm6 0h1v1h-1zm-99 1h32v1h-32zm33 0h7v2h-7zm8 0h29v1h-29zm31 0h2v1h-2zm6 0h1v1h-1zm3 0h1v1h-1zm4 0h3v1h-3zm7 0h1v1h-1zm3 0h1v1h-1zm2 0h1v1h-1zm-97 1h9v2h-9zm15 0h11v2h-11zm19 1h5v1h-5zm-33 1h7v2h-7zm15 0h9v2h-9zm15 1h1v2h-1zm7 0h1v2h-1zm2 0h1v2h-1zm2 0h2v2h-2zm8 0h2v1h-2zm3 0h1v2h-1zm16 0h3v1h-3zm13 0h1v1h-1zm2 0h1v1h-1zm2 0h3v1h-3zm13 0h1v1h-1zm4 0h1v1h-1zm3 0h1v1h-1zm2 0h1v1h-1zm7 0h1v1h-1zm5 0h1v1h-1zm7 0h1v2h-1zm4 0h1v2h-1zm-129 1h5v2h-5zm15 0h7v2h-7zm19 0h1v1h-1zm9 0h1v1h-1zm4 0h3v1h-3zm6 0h2v1h-2zm4 0h1v1h-1zm2 0h1v1h-1zm7 0h4v1h-4zm9 0h2v1h-2zm4 0h4v1h-4zm5 0h8v1h-8zm9 0h2v1h-2zm4 0h5v1h-5zm6 0h5v1h-5zm6 0h1v1h-1zm4 0h2v1h-2zm3 0h4v1h-4zm5 0h1v1h-1zm2 0h1v1h-1zm-95 1h1v2h-1zm2 0h6v1h-6zm7 0h1v2h-1zm2 0h1v2h-1zm3 0h6v1h-6zm8 0h1v2h-1zm2 0h15v1h-15zm18 0h10v1h-10zm11 0h1v1h-1zm2 0h1v2h-1zm4 0h2v1h-2zm3 0h1v1h-1zm2 0h1v2h-1zm3 0h2v2h-2zm3 0h3v1h-3zm4 0h2v1h-2zm3 0h1v1h-1zm2 0h6v1h-6zm7 0h4v1h-4zm5 0h6v1h-6zm7 0h3v2h-3zm-125 1h3v2h-3zm15 0h5v2h-5zm14 0h4v1h-4zm5 0h1v1h-1zm7 0h1v1h-1zm2 0h3v1h-3zm8 0h1v1h-1zm3 0h2v1h-2zm3 0h1v1h-1zm2 0h6v1h-6zm10 0h5v1h-5zm7 0h2v1h-2zm25 0h1v1h-1zm6 0h1v1h-1zm2 0h3v1h-3zm5 0h1v1h-1zm5 0h1v1h-1zm2 0h1v1h-1zm2 0h1v1h-1zm-122 2h1v2h-1zm15 0h3v2h-3zm1 2h1v2h-1z"/>
<path fill="#e4d000" d="M0 0m963 609h6v1h-6zm-6 1h12v1h-12zm-6 1h18v1h-18zm-884 1h2v1h-2zm4 0h1v1h-1zm464 0h5v1h-5zm8 0h6v1h-6zm7 0h4v1h-4zm5 0h5v1h-5zm7 0h3v2h-3zm4 0h7v1h-7zm9 0h1v2h-1zm6 0h5v1h-5zm323 0h2v1h-2zm41 0h24v1h-24zm-408 1h1v1h-1zm6 0h5v1h-5zm7 0h3v1h-3zm6 0h4v1h-4zm11 0h3v1h-3zm338 0h1v1h-1zm34 0h30v1h-30zm-395 1h3v1h-3zm8 0h1v1h-1zm5 0h3v1h-3zm6 0h1v1h-1zm5 0h2v1h-2zm132 0h60v4h-60zm206 0h63v1h-63zm0 1h59v1h-59zm60 0h3v1h-3zm-104 1h1v1h-1zm4 0h1v1h-1zm5 0h1v1h-1zm3 0h30v1h-30zm32 0h43v2h-43zm45 0h8v1h-8zm11 0h2v1h-2zm6 0h1v1h-1zm-107 1h4v1h-4zm12 0h31v1h-31zm78 0h1v1h-1zm3 0h4v1h-4zm-253 1h59v1h-59zm161 0h1v1h-1zm3 0h1v1h-1zm2 0h1v1h-1zm5 0h32v1h-32zm34 0h16v1h-16zm17 0h2v1h-2zm3 0h4v1h-4zm6 0h10v1h-10zm11 0h1v1h-1zm3 0h2v1h-2zm-244 1h1v1h-1zm8 0h7v1h-7zm8 0h3v1h-3zm4 0h1v1h-1zm3 0h1v1h-1zm2 0h14v1h-14zm16 0h17v1h-17zm118 0h1v1h-1zm5 0h1v1h-1zm8 0h30v1h-30zm32 0h2v1h-2zm5 0h4v1h-4zm5 0h2v1h-2zm3 0h2v1h-2zm4 0h1v1h-1zm4 0h1v1h-1zm5 0h3v1h-3zm4 0h2v1h-2zm6 0h2v1h-2zm5 0h1v1h-1zm-234 1h1v1h-1zm6 0h1v1h-1zm9 0h1v1h-1zm2 0h3v1h-3zm5 0h3v1h-3zm9 0h1v1h-1zm3 0h13v1h-13zm22 0h6v5h-6zm17 0h6v2h-6zm15 0h18v1h-18zm19 0h13v1h-13zm15 0h3v1h-3zm4 0h1v1h-1zm5 0h1v1h-1zm8 0h1v1h-1zm2 0h2v1h-2zm7 0h2v1h-2zm3 0h1v1h-1zm4 0h1v1h-1zm3 0h33v1h-33zm35 0h1v1h-1zm14 0h1v1h-1zm13 0h1v1h-1zm4 0h1v1h-1zm-180 1h3v1h-3zm44 0h2v1h-2zm4 0h5v1h-5zm6 0h7v1h-7zm10 0h12v1h-12zm13 0h1v1h-1zm3 0h1v1h-1zm8 0h1v1h-1zm3 0h1v1h-1zm5 0h1v1h-1zm3 0h1v1h-1zm2 0h1v1h-1zm5 0h2v1h-2zm4 0h3v1h-3zm5 0h3v1h-3zm4 0h6v1h-6zm8 0h8v1h-8zm9 0h6v1h-6zm7 0h1v1h-1zm3 0h1v1h-1zm-117 1h4v3h-4zm108 0h2v1h-2zm0 1h1v1h-1zm-125 2h7v1h-7zm16 0h5v1h-5zm-14 1h5v1h-5zm14 0h3v1h-3zm-13 1h5v1h-5zm12 0h2v1h-2zm-11 1h4v1h-4zm2 1h1v1h-1z"/>
<path fill="#f0c000" d="M0 0m545 615h1v1h-1zm14 0h1v1h-1zm9 0h1v1h-1zm223 10h1v1h-1zm7 0h1v2h-1zm2 0h1v2h-1zm2 0h2v2h-2zm8 0h2v1h-2zm3 0h1v2h-1zm16 0h3v1h-3zm13 0h1v1h-1zm2 0h1v1h-1zm2 0h3v1h-3zm5 0h1v1h-1zm2 0h1v1h-1zm2 0h2v2h-2zm4 0h1v1h-1zm4 0h1v1h-1zm3 0h1v1h-1zm2 0h1v1h-1zm7 0h1v1h-1zm5 0h1v1h-1zm7 0h1v2h-1zm4 0h1v2h-1zm-95 1h1v2h-1zm9 0h1v1h-1zm4 0h3v1h-3zm6 0h2v1h-2zm4 0h1v1h-1zm2 0h1v1h-1zm7 0h4v1h-4zm9 0h2v1h-2zm4 0h4v1h-4zm5 0h8v1h-8zm13 0h5v1h-5zm6 0h4v1h-4zm6 0h1v1h-1zm4 0h2v1h-2zm3 0h4v1h-4zm5 0h1v1h-1zm2 0h1v1h-1zm-92 1h1v1h-1zm6 0h5v1h-5zm6 0h8v1h-8zm9 0h23v1h-23zm24 0h54v1h-54zm-37 1h1v1h-1zm6 0h3v1h-3zm5 0h1v1h-1zm2 0h15v1h-15zm18 0h10v1h-10zm11 0h1v1h-1zm2 0h1v2h-1zm4 0h2v1h-2zm3 0h1v1h-1zm2 0h1v2h-1zm3 0h2v2h-2zm3 0h3v1h-3zm4 0h2v1h-2zm3 0h1v1h-1zm2 0h6v1h-6zm7 0h4v1h-4zm5 0h6v1h-6zm7 0h3v2h-3zm-68 1h1v1h-1zm2 0h6v1h-6zm10 0h5v1h-5zm7 0h2v1h-2zm25 0h1v1h-1zm6 0h1v1h-1zm2 0h3v1h-3zm5 0h1v1h-1zm5 0h1v1h-1zm2 0h1v1h-1zm2 0h1v1h-1z"/>
<path fill="#f8b000" d="M0 0m802 628h1v1h-1zm8 0h2v1h-2zm19 0h3v1h-3zm13 0h1v1h-1zm2 0h1v1h-1zm2 0h3v1h-3zm5 0h1v1h-1zm2 0h1v1h-1zm2 0h2v2h-2zm4 0h1v1h-1zm4 0h1v1h-1zm3 0h1v1h-1zm2 0h1v1h-1zm7 0h1v1h-1zm5 0h1v1h-1zm7 0h1v2h-1zm4 0h1v2h-1zm-80 1h1v1h-1zm4 0h1v1h-1zm4 0h1v1h-1zm2 0h1v1h-1zm7 0h4v1h-4zm9 0h2v1h-2zm4 0h4v1h-4zm5 0h8v1h-8zm13 0h5v1h-5zm6 0h5v1h-5zm6 0h1v1h-1zm4 0h2v1h-2zm3 0h4v1h-4zm5 0h1v1h-1zm2 0h1v1h-1zm-65 1h2v1h-2zm4 0h4v1h-4zm5 0h59v1h-59zm-4 1h1v1h-1zm5 0h4v1h-4zm5 0h52v1h-52zm1 1h50v1h-50zm1 1h43v1h-43zm3 1h3v1h-3zm4 0h2v1h-2zm3 0h33v1h-33zm-2 1h1v1h-1zm3 0h1v2h-1zm6 0h2v1h-2zm6 0h9v1h-9zm14 0h2v1h-2zm-11 1h3v1h-3z"/>
<path fill="#919191" d="M0 0m1112 38h1v1h-1zm-2 2h1v1h-1zm2 1h1v1h-1zm-2 1h1v1h-1zm-14 1h2v1h-2zm17 0h1v1h-1zm-3 2h1v4h-1zm-13 1h1v1h-1zm15 0h1v1h-1zm-7 2h1v1h-1zm7 0h1v1h-1zm-1 2h2v1h-2zm-1 2h1v1h-1zm2 0h2v1h-2zm-14 2h1v1h-1zm12 1h2v1h-2zm1 1h1v1h-1zm2 0h1v1h-1zm-8 1h1v1h-1zm-8 1h1v1h-1zm4 0h1v1h-1zm10 0h1v1h-1zm-13 1h1v1h-1zm14 0h2v1h-2zm1 1h1v2h-1zm-10 2h1v1h-1zm9 0h1v1h-1zm-6 1h1v1h-1zm5 0h1v1h-1zm2 0h1v1h-1zm-17 2h1v1h-1zm6 1h1v2h-1zm11 0h1v2h-1zm-3 1h1v1h-1zm-7 1h1v1h-1zm8 2h1v1h-1zm-1 1h1v1h-1zm-12 1h1v1h-1zm-1 1h1v1h-1zm15 0h1v1h-1zm-2 1h1v1h-1zm3 0h1v1h-1zm-7 1h1v1h-1zm-10 1h2v1h-2zm9 0h1v1h-1zm7 0h1v1h-1zm-13 1h1v1h-1zm2 0h1v1h-1zm12 0h1v1h-1zm-15 1h1v1h-1zm14 0h1v1h-1zm-16 1h1v1h-1zm16 2h1v1h-1zm-17 2h1v1h-1zm16 0h2v1h-2zm-15 1h1v1h-1zm14 2h1v1h-1zm-13 1h1v2h-1zm15 0h2v1h-2zm-2 1h1v1h-1zm-4 1h1v1h-1zm4 0h2v1h-2zm-9 1h1v1h-1zm9 0h1v1h-1zm0 1h2v2h-2zm-13 1h1v1h-1zm4 1h1v1h-1zm9 0h1v1h-1zm3 0h1v1h-1zm-3 1h2v1h-2zm-8 1h1v1h-1zm0 3h2v1h-2zm-3 1h1v4h-1zm13 1h2v1h-2zm-1 1h1v1h-1zm-1 1h1v1h-1zm-14 2h1v1h-1zm3 0h1v1h-1zm3 0h1v1h-1zm8 0h1v1h-1zm3 0h1v1h-1zm-18 1h1v1h-1zm2 0h2v1h-2zm0 2h1v2h-1zm7 1h1v1h-1zm-8 1h1v1h-1zm1 1h1v1h-1zm2 0h1v1h-1zm5 0h1v1h-1zm-9 2h2v1h-2zm8 1h3v1h-3zm-7 1h2v1h-2zm6 0h4v1h-4zm-7 1h1v1h-1zm3 0h2v1h-2zm4 0h5v1h-5zm-6 1h1v1h-1zm2 0h1v1h-1zm4 0h4v1h-4zm-7 1h1v1h-1zm3 0h2v1h-2zm4 0h5v1h-5zm-7 1h2v1h-2zm4 0h1v1h-1zm3 0h2v1h-2zm3 0h2v1h-2zm-9 1h4v1h-4zm6 0h5v1h-5zm-7 1h2v1h-2zm4 0h1v1h-1zm3 0h3v2h-3zm4 0h1v2h-1zm-11 1h1v1h-1zm3 0h1v3h-1zm-3 1h2v1h-2zm7 0h5v3h-5zm-7 2h4v1h-4zm0 1h1v1h-1zm2 0h3v1h-3zm6 0h4v1h-4zm-7 1h2v1h-2zm3 0h1v1h-1zm3 0h3v1h-3zm4 0h1v1h-1zm-11 1h2v1h-2zm3 0h2v1h-2zm4 0h1v2h-1zm3 0h2v1h-2zm-10 1h3v3h-3zm9 0h2v1h-2zm-5 1h1v1h-1zm3 0h3v1h-3zm4 0h1v1h-1zm-4 1h5v1h-5zm-5 1h2v1h-2zm5 0h2v1h-2zm3 0h1v1h-1zm-10 1h3v1h-3zm8 0h4v1h-4zm-4 1h1v2h-1zm3 0h1v1h-1zm2 0h3v1h-3zm-9 1h1v1h-1zm2 0h1v1h-1zm-2 1h2v1h-2zm3 0h2v1h-2zm-1 1h3v2h-3zm-2 2h1v1h-1zm4 0h1v1h-1zm-3 1h2v1h-2zm3 1h1v1h-1zm-3 2h1v1h-1zm2 0h1v1h-1zm-3 1h2v1h-2zm3 0h2v1h-2zm20 0h8v1h-8zm-22 1h3v1h-3zm19 0h11v2h-11zm-20 1h5v1h-5zm0 1h2v1h-2zm3 0h1v1h-1zm3 0h25v7h-25zm-6 1h5v9h-5zm6 6h17v1h-17zm0 1h14v1h-14zm-134 20h2v1h-2zm-4 1h6v1h-6zm-4 1h10v1h-10zm-3 1h13v1h-13zm-4 1h17v1h-17zm-4 1h21v1h-21zm-3 1h24v1h-24zm-4 1h28v1h-28zm-582 1h61v1h-61zm578 0h32v1h-32zm-891 1h921v1h-921zm0 1h917v1h-917zm0 1h913v1h-913zm0 1h910v1h-910zm0 1h906v1h-906zm0 1h902v1h-902zm0 1h899v1h-899zm0 1h895v1h-895zm0 1h313v1h-313zm374 0h517v1h-517zm269 5h3v1h-3zm-3 1h3v1h-3zm-3 1h3v1h-3zm-46 1h1v1h-1zm43 0h3v1h-3zm-43 1h3v1h-3zm-1 1h4v2h-4zm14 0h2v3h-2zm-36 2h2v1h-2zm22 0h5v1h-5zm11 0h1v1h-1zm-301 1h1v1h-1zm267 0h4v2h-4zm10 0h4v1h-4zm5 0h1v1h-1zm3 0h2v1h-2zm4 0h7v1h-7zm8 0h1v1h-1zm2 0h3v1h-3zm4 0h3v1h-3zm5 0h1v1h-1zm3 0h1v1h-1zm17 0h1v1h-1zm-479 1h1v3h-1zm61 0h1v2h-1zm47 0h1v1h-1zm42 0h2v5h-2zm277 0h7v1h-7zm8 0h3v1h-3zm4 0h25v2h-25zm26 0h4v1h-4zm14 0h2v1h-2zm-547 1h2v2h-2zm126 0h1v2h-1zm49 0h2v2h-2zm25 0h1v2h-1zm3 0h1v1h-1zm10 0h2v1h-2zm127 0h1v2h-1zm137 0h1v1h-1zm3 0h1v1h-1zm5 0h5v1h-5zm7 0h1v3h-1zm3 0h11v1h-11zm38 0h5v1h-5zm13 0h4v1h-4zm-560 1h1v2h-1zm9 0h1v1h-1zm13 0h1v1h-1zm2 0h1v1h-1zm4 0h1v1h-1zm10 0h1v1h-1zm40 0h1v2h-1zm31 0h1v3h-1zm16 0h2v1h-2zm10 0h1v1h-1zm7 0h3v1h-3zm53 0h1v1h-1zm2 0h1v1h-1zm3 0h1v2h-1zm3 0h1v1h-1zm6 0h2v1h-2zm8 0h2v1h-2zm9 0h4v1h-4zm264 0h5v1h-5zm7 0h7v1h-7zm12 0h43v1h-43zm51 0h5v1h-5zm-557 1h2v1h-2zm4 0h4v1h-4zm6 0h4v2h-4zm7 0h1v1h-1zm2 0h3v1h-3zm5 0h2v1h-2zm3 0h1v1h-1zm7 0h3v1h-3zm15 0h1v1h-1zm12 0h1v2h-1zm7 0h1v1h-1zm2 0h1v1h-1zm8 0h2v2h-2zm23 0h1v1h-1zm12 0h2v1h-2zm4 0h1v2h-1zm4 0h3v1h-3zm10 0h2v1h-2zm3 0h1v1h-1zm2 0h8v1h-8zm47 0h5v1h-5zm6 0h2v1h-2zm3 0h3v1h-3zm8 0h3v1h-3zm4 0h5v1h-5zm7 0h5v1h-5zm7 0h1v1h-1zm4 0h5v2h-5zm13 0h1v1h-1zm106 0h1v1h-1zm2 0h1v1h-1zm6 0h5v1h-5zm6 0h1v1h-1zm7 0h1v2h-1zm124 0h15v2h-15zm20 0h44v1h-44zm46 0h1v1h-1zm2 0h1v1h-1zm2 0h8v1h-8zm-561 1h3v1h-3zm5 0h9v1h-9zm17 0h6v1h-6zm7 0h5v1h-5zm9 0h5v2h-5zm14 0h1v1h-1zm2 0h2v1h-2zm3 0h2v1h-2zm6 0h1v1h-1zm7 0h7v1h-7zm9 0h2v1h-2zm8 0h1v1h-1zm3 0h1v1h-1zm16 0h2v2h-2zm12 0h3v1h-3zm8 0h4v1h-4zm5 0h1v2h-1zm3 0h1v2h-1zm2 0h14v1h-14zm16 0h1v1h-1zm32 0h2v1h-2zm4 0h15v1h-15zm16 0h10v2h-10zm11 0h6v2h-6zm7 0h4v1h-4zm16 0h5v2h-5zm29 0h1v1h-1zm79 0h3v1h-3zm8 0h8v1h-8zm153 0h2v1h-2zm3 0h60v1h-60zm-511 1h4v1h-4zm6 0h14v3h-14zm17 0h12v1h-12zm13 0h1v2h-1zm12 0h2v2h-2zm4 0h2v1h-2zm3 0h6v1h-6zm7 0h7v1h-7zm8 0h12v1h-12zm13 0h3v2h-3zm5 0h4v1h-4zm6 0h1v1h-1zm17 0h2v2h-2zm3 0h3v2h-3zm5 0h5v2h-5zm7 0h5v1h-5zm11 0h17v1h-17zm23 0h1v1h-1zm23 0h4v1h-4zm5 0h16v1h-16zm35 0h14v1h-14zm27 0h2v1h-2zm10 0h2v1h-2zm7 0h2v1h-2zm8 0h1v1h-1zm71 0h7v1h-7zm8 0h9v1h-9zm11 0h2v1h-2zm3 0h2v2h-2zm6 0h2v1h-2zm116 0h20v3h-20zm21 0h62v1h-62zm65 0h2v1h-2zm-580 1h1v1h-1zm2 0h6v1h-6zm23 0h14v1h-14zm17 0h6v1h-6zm14 0h30v1h-30zm36 0h7v1h-7zm19 0h3v1h-3zm19 0h30v1h-30zm34 0h2v2h-2zm11 0h1v1h-1zm11 0h33v1h-33zm34 0h21v1h-21zm23 0h13v1h-13zm21 0h3v1h-3zm6 0h4v1h-4zm9 0h2v3h-2zm70 0h8v1h-8zm9 0h13v1h-13zm17 0h1v2h-1zm2 0h4v2h-4zm15 0h1v3h-1zm99 0h1v2h-1zm24 0h68v1h-68zm70 0h1v2h-1zm-586 1h9v2h-9zm26 0h16v1h-16zm17 0h7v1h-7zm9 0h3v1h-3zm4 0h49v3h-49zm56 0h10v2h-10zm11 0h6v1h-6zm7 0h32v1h-32zm33 0h1v1h-1zm5 0h2v1h-2zm8 0h2v2h-2zm9 0h72v1h-72zm80 0h10v1h-10zm11 0h1v1h-1zm30 0h1v3h-1zm43 0h26v1h-26zm89 0h1v2h-1zm78 0h69v1h-69zm-505 1h44v1h-44zm98 0h1v2h-1zm14 0h47v1h-47zm61 0h73v1h-73zm81 0h12v1h-12zm84 0h33v1h-33zm50 0h1v1h-1zm14 0h1v1h-1zm77 0h98v1h-98zm-493 1h12v1h-12zm13 0h45v1h-45zm102 0h59v1h-59zm63 0h3v1h-3zm5 0h77v1h-77zm82 0h1v3h-1zm3 0h14v1h-14zm15 0h3v1h-3zm67 0h36v2h-36zm44 0h1v1h-1zm2 0h2v1h-2zm6 0h4v1h-4zm6 0h1v1h-1zm3 0h2v1h-2zm4 0h2v2h-2zm26 0h2v2h-2zm51 0h99v1h-99zm-492 1h108v1h-108zm111 0h64v1h-64zm66 0h4v1h-4zm6 0h79v3h-79zm84 0h22v2h-22zm30 0h1v1h-1zm2 0h2v1h-2zm3 0h1v2h-1zm6 0h2v1h-2zm28 0h1v1h-1zm7 0h1v3h-1zm51 0h4v1h-4zm6 0h6v2h-6zm7 0h6v1h-6zm12 0h1v1h-1zm4 0h3v1h-3zm4 0h1v1h-1zm10 0h1v1h-1zm17 0h1v2h-1zm38 0h100v1h-100zm106 0h2v3h-2zm-599 1h111v1h-111zm112 0h70v2h-70zm152 0h1v1h-1zm30 0h1v1h-1zm4 0h4v1h-4zm9 0h4v2h-4zm8 0h1v2h-1zm3 0h1v1h-1zm7 0h3v1h-3zm4 0h1v1h-1zm7 0h3v1h-3zm13 0h40v2h-40zm45 0h5v2h-5zm14 0h7v1h-7zm8 0h6v3h-6zm8 0h5v1h-5zm12 0h5v1h-5zm6 0h3v1h-3zm18 0h1v1h-1zm16 0h2v1h-2zm11 0h2v1h-2zm5 0h101v1h-101zm120 0h1v2h-1zm248 0h1v6h-1zm-913 1h1v2h-1zm13 0h1v1h-1zm39 0h112v1h-112zm265 0h27v1h-27zm29 0h2v1h-2zm4 0h7v1h-7zm21 0h3v1h-3zm6 0h6v2h-6zm10 0h5v1h-5zm67 0h14v1h-14zm22 0h6v2h-6zm9 0h1v1h-1zm3 0h10v2h-10zm18 0h1v1h-1zm2 0h2v1h-2zm3 0h3v1h-3zm4 0h1v1h-1zm4 0h1v2h-1zm3 0h1v1h-1zm6 0h4v1h-4zm11 0h4v2h-4zm5 0h103v2h-103zm105 0h1v1h-1zm29 0h1v3h-1zm12 0h1v2h-1zm-687 1h1v3h-1zm5 0h1v1h-1zm4 0h2v1h-2zm3 0h1v1h-1zm9 0h2v1h-2zm28 0h183v1h-183zm185 0h111v1h-111zm112 0h9v1h-9zm10 0h6v2h-6zm8 0h2v1h-2zm3 0h4v1h-4zm15 0h9v1h-9zm10 0h3v1h-3zm6 0h41v1h-41zm44 0h7v1h-7zm8 0h15v3h-15zm31 0h3v2h-3zm18 0h1v1h-1zm4 0h4v1h-4zm5 0h5v1h-5zm11 0h2v1h-2zm5 0h5v1h-5zm9 0h1v1h-1zm113 0h2v2h-2zm3 0h3v1h-3zm5 0h1v1h-1zm3 0h1v1h-1zm5 0h2v3h-2zm232 0h1v4h-1zm7 0h1v4h-1zm-905 1h2v1h-2zm8 0h2v3h-2zm5 0h4v1h-4zm11 0h6v2h-6zm19 0h1v1h-1zm2 0h4v1h-4zm6 0h185v1h-185zm186 0h122v1h-122zm130 0h3v1h-3zm4 0h13v1h-13zm15 0h13v1h-13zm15 0h42v1h-42zm44 0h8v2h-8zm25 0h14v1h-14zm19 0h17v1h-17zm18 0h10v1h-10zm12 0h7v1h-7zm8 0h7v1h-7zm9 0h2v1h-2zm4 0h108v2h-108zm113 0h4v2h-4zm5 0h2v1h-2zm3 0h2v1h-2zm11 0h1v1h-1zm4 0h2v1h-2zm12 0h2v1h-2zm3 0h2v1h-2zm193 0h2v1h-2zm-885 1h3v2h-3zm12 0h9v1h-9zm10 0h2v1h-2zm19 0h1v2h-1zm3 0h6v1h-6zm7 0h309v1h-309zm310 0h24v1h-24zm25 0h58v1h-58zm85 0h18v1h-18zm19 0h28v2h-28zm30 0h19v2h-19zm130 0h3v1h-3zm9 0h5v1h-5zm6 0h1v1h-1zm7 0h2v1h-2zm4 0h5v2h-5zm9 0h1v1h-1zm2 0h1v1h-1zm2 0h5v1h-5zm195 0h3v2h-3zm8 0h1v2h-1zm-887 1h2v1h-2zm7 0h19v1h-19zm21 0h5v1h-5zm11 0h269v1h-269zm330 0h70v1h-70zm71 0h9v1h-9zm10 0h34v1h-34zm85 0h113v1h-113zm114 0h15v1h-15zm16 0h4v1h-4zm14 0h12v1h-12zm175 0h1v1h-1zm7 0h2v1h-2zm5 0h1v1h-1zm10 0h1v1h-1zm-741 72h1v1h-1zm-6 3h1v1h-1zm23 4h1v1h-1zm0 3h1v2h-1zm-34 2h1v1h-1zm-40 1h1v1h-1zm220 1h1v1h-1zm-198 1h1v1h-1zm172 1h1v1h-1zm358 0h1v2h-1zm-511 1h1v1h-1zm33 0h1v1h-1zm118 0h1v2h-1zm35 0h1v1h-1zm313 0h1v1h-1zm-500 1h1v1h-1zm34 1h1v1h-1zm-32 1h1v1h-1zm5 0h1v1h-1zm88 0h1v1h-1zm62 0h1v1h-1zm6 0h1v1h-1zm283 0h1v1h-1zm-522 1h1v1h-1zm557 0h1v1h-1zm57 0h1v1h-1zm-558 1h1v1h-1zm30 0h2v1h-2zm14 0h1v1h-1zm10 0h1v1h-1zm75 0h1v1h-1zm45 0h1v1h-1zm-175 1h1v1h-1zm59 0h1v1h-1zm42 0h1v1h-1zm80 0h1v1h-1zm368 0h1v1h-1zm-508 1h1v1h-1zm14 0h1v1h-1zm61 0h1v1h-1zm4 0h1v1h-1zm39 0h1v1h-1zm328 0h1v1h-1zm32 0h1v1h-1zm111 0h1v1h-1zm-662 1h1v1h-1zm35 0h1v1h-1zm32 0h1v1h-1zm106 0h1v1h-1zm43 0h1v1h-1zm283 0h1v1h-1zm77 0h1v1h-1zm-536 1h1v1h-1zm47 0h1v2h-1zm9 0h1v1h-1zm5 0h1v1h-1zm112 0h1v1h-1zm283 0h1v1h-1zm22 0h1v1h-1zm55 0h1v1h-1zm18 0h1v1h-1zm-393 1h1v1h-1zm18 0h1v1h-1zm9 0h1v1h-1zm328 0h1v1h-1zm52 0h1v1h-1zm-577 1h1v1h-1zm32 0h1v2h-1zm113 0h1v1h-1zm37 0h1v1h-1zm3 0h2v1h-2zm54 0h1v1h-1zm-180 1h1v1h-1zm108 0h1v1h-1zm30 0h1v1h-1zm55 0h1v1h-1zm210 0h1v1h-1zm25 0h1v1h-1zm66 0h1v1h-1zm15 0h1v1h-1zm23 0h1v1h-1zm-556 1h1v1h-1zm28 0h1v2h-1zm82 0h1v1h-1zm34 0h1v2h-1zm26 0h1v1h-1zm86 0h1v1h-1zm248 0h1v1h-1zm-559 1h1v1h-1zm5 0h1v1h-1zm19 0h1v1h-1zm23 0h1v1h-1zm31 0h1v1h-1zm62 0h1v1h-1zm52 0h1v1h-1zm174 0h1v1h-1zm127 0h1v1h-1zm9 0h1v1h-1zm-550 1h1v1h-1zm65 0h1v1h-1zm35 0h1v1h-1zm156 0h1v1h-1zm22 0h1v1h-1zm237 0h1v1h-1zm92 0h1v1h-1zm-531 1h1v1h-1zm31 0h1v1h-1zm10 0h1v1h-1zm21 0h1v1h-1zm4 0h1v1h-1zm16 0h1v1h-1zm108 0h1v1h-1zm5 0h1v1h-1zm96 0h1v2h-1zm43 0h1v1h-1zm125 0h1v1h-1zm4 0h1v1h-1zm82 0h1v2h-1zm-596 1h1v1h-1zm6 0h1v1h-1zm3 0h1v1h-1zm19 0h1v1h-1zm12 0h1v1h-1zm10 0h1v1h-1zm25 0h1v1h-1zm3 0h1v1h-1zm15 0h1v1h-1zm13 0h1v1h-1zm9 0h1v1h-1zm75 0h1v1h-1zm15 0h1v1h-1zm6 0h1v1h-1zm4 0h1v1h-1zm131 0h1v1h-1zm179 0h1v1h-1zm32 0h1v1h-1zm65 0h1v1h-1zm23 0h1v1h-1zm-622 1h1v1h-1zm45 0h1v1h-1zm15 0h1v1h-1zm48 0h1v1h-1zm14 0h1v1h-1zm47 0h1v1h-1zm18 0h1v1h-1zm28 0h1v1h-1zm33 0h1v1h-1zm330 0h1v1h-1zm3 0h1v1h-1zm7 0h1v1h-1zm9 0h1v1h-1zm-565 1h1v3h-1zm20 0h1v2h-1zm27 0h1v1h-1zm4 0h1v1h-1zm48 0h1v1h-1zm45 0h1v1h-1zm23 0h1v1h-1zm274 0h1v1h-1zm12 0h1v1h-1zm38 0h1v1h-1zm22 0h1v1h-1zm2 0h1v1h-1zm23 0h1v1h-1zm10 0h1v1h-1zm15 0h1v1h-1zm9 0h1v1h-1zm-678 1h1v1h-1zm37 0h1v1h-1zm31 0h1v1h-1zm3 0h1v1h-1zm16 0h1v1h-1zm69 0h1v1h-1zm12 0h1v1h-1zm112 0h1v1h-1zm154 0h1v1h-1zm25 0h1v1h-1zm95 0h1v1h-1zm72 0h1v1h-1zm21 0h1v2h-1zm18 0h1v1h-1zm19 0h1v1h-1zm-637 1h1v1h-1zm12 0h1v1h-1zm11 0h1v1h-1zm31 0h1v1h-1zm18 0h2v1h-2zm25 0h1v1h-1zm9 0h1v1h-1zm27 0h1v1h-1zm2 0h1v1h-1zm100 0h1v1h-1zm32 0h1v1h-1zm144 0h1v1h-1zm107 0h1v1h-1zm46 0h1v1h-1zm41 0h1v1h-1zm-638 1h1v1h-1zm46 0h1v1h-1zm12 0h1v1h-1zm7 0h1v1h-1zm15 0h1v1h-1zm26 0h1v1h-1zm4 0h1v1h-1zm12 0h1v1h-1zm30 0h1v1h-1zm36 0h1v1h-1zm12 0h1v1h-1zm52 0h1v1h-1zm13 0h1v1h-1zm228 0h1v1h-1zm5 0h1v1h-1zm20 0h1v1h-1zm76 0h1v1h-1zm6 0h1v1h-1zm28 0h1v1h-1zm42 0h1v1h-1zm18 0h1v1h-1zm-634 1h1v1h-1zm43 0h1v1h-1zm16 0h1v1h-1zm24 0h1v1h-1zm2 0h1v2h-1zm45 0h1v1h-1zm75 0h1v1h-1zm186 0h1v1h-1zm88 0h2v1h-2zm38 0h1v1h-1zm34 0h1v1h-1zm12 0h1v1h-1zm9 0h1v1h-1zm4 0h1v1h-1zm3 0h1v1h-1zm6 0h1v1h-1zm32 0h1v1h-1zm-685 1h1v1h-1zm33 0h1v1h-1zm6 0h1v1h-1zm67 0h1v2h-1zm68 0h1v1h-1zm87 0h1v1h-1zm5 0h1v1h-1zm13 0h1v1h-1zm3 0h2v1h-2zm88 0h1v1h-1zm2 0h1v1h-1zm62 0h1v1h-1zm113 0h1v1h-1zm25 0h1v1h-1zm24 0h2v1h-2zm21 0h1v1h-1zm15 0h1v1h-1zm9 0h1v1h-1zm37 0h1v1h-1zm5 0h2v1h-2zm-649 1h1v1h-1zm37 0h1v1h-1zm18 0h1v1h-1zm5 0h1v2h-1zm10 0h1v1h-1zm23 0h1v1h-1zm2 0h1v1h-1zm5 0h1v1h-1zm16 0h1v1h-1zm7 0h1v1h-1zm5 0h1v1h-1zm94 0h1v1h-1zm17 0h1v1h-1zm40 0h1v1h-1zm89 0h1v1h-1zm13 0h1v1h-1zm18 0h1v1h-1zm132 0h1v1h-1zm123 0h1v1h-1zm-590 1h1v1h-1zm3 0h1v1h-1zm19 0h1v1h-1zm15 0h1v1h-1zm7 0h1v1h-1zm9 0h1v1h-1zm2 0h1v1h-1zm52 0h1v1h-1zm13 0h1v1h-1zm40 0h1v1h-1zm7 0h1v1h-1zm22 0h1v2h-1zm4 0h1v1h-1zm161 0h1v1h-1zm95 0h2v1h-2zm34 0h1v1h-1zm30 0h1v1h-1zm21 0h2v1h-2zm21 0h2v1h-2zm25 0h1v2h-1zm111 0h1v1h-1zm99 0h1v1h-1zm-869 1h1v1h-1zm11 0h1v1h-1zm145 0h1v1h-1zm86 0h1v1h-1zm5 0h1v2h-1zm5 0h1v1h-1zm2 0h1v2h-1zm157 0h1v1h-1zm114 0h1v1h-1zm3 0h1v1h-1zm11 0h1v1h-1zm7 0h1v1h-1zm23 0h1v1h-1zm32 0h1v1h-1zm15 0h1v1h-1zm17 0h1v1h-1zm38 0h1v1h-1zm-596 1h1v1h-1zm4 0h2v1h-2zm8 0h1v1h-1zm13 0h1v1h-1zm34 0h1v1h-1zm9 0h1v1h-1zm2 0h1v1h-1zm114 0h1v1h-1zm112 0h1v1h-1zm39 0h1v1h-1zm23 0h1v1h-1zm7 0h1v2h-1zm48 0h1v1h-1zm54 0h1v2h-1zm20 0h1v1h-1zm21 0h1v1h-1zm8 0h1v1h-1zm46 0h1v1h-1zm-595 1h1v1h-1zm43 0h1v1h-1zm16 0h2v1h-2zm4 0h1v1h-1zm2 0h1v1h-1zm2 0h1v1h-1zm15 0h1v1h-1zm43 0h1v1h-1zm28 0h1v1h-1zm47 0h1v1h-1zm16 0h1v1h-1zm5 0h1v1h-1zm3 0h1v1h-1zm6 0h2v1h-2zm13 0h1v2h-1zm66 0h1v1h-1zm49 0h1v1h-1zm15 0h1v1h-1zm9 0h1v1h-1zm50 0h1v1h-1zm79 0h2v1h-2zm39 0h1v1h-1zm3 0h1v1h-1zm31 0h1v1h-1zm13 0h1v1h-1zm12 0h1v1h-1zm2 0h1v1h-1zm67 0h1v1h-1zm49 0h1v1h-1zm-743 1h1v1h-1zm56 0h1v1h-1zm5 0h1v1h-1zm15 0h1v1h-1zm15 0h1v1h-1zm14 0h2v1h-2zm35 0h1v1h-1zm71 0h1v1h-1zm2 0h1v1h-1zm18 0h2v1h-2zm155 0h1v1h-1zm5 0h2v1h-2zm111 0h1v1h-1zm18 0h1v1h-1zm2 0h1v1h-1zm8 0h1v1h-1zm8 0h1v1h-1zm8 0h1v1h-1zm17 0h1v1h-1zm27 0h1v1h-1zm8 0h1v1h-1zm13 0h1v1h-1zm31 0h2v1h-2zm99 0h1v1h-1zm110 0h1v1h-1zm-868 1h1v1h-1zm20 0h1v1h-1zm41 0h1v1h-1zm30 0h1v1h-1zm24 0h1v1h-1zm11 0h1v1h-1zm10 0h1v1h-1zm2 0h1v1h-1zm16 0h1v2h-1zm38 0h1v1h-1zm18 0h1v1h-1zm29 0h1v1h-1zm6 0h1v1h-1zm4 0h1v1h-1zm17 0h1v1h-1zm3 0h1v1h-1zm10 0h1v1h-1zm90 0h1v1h-1zm73 0h1v1h-1zm31 0h1v1h-1zm6 0h1v1h-1zm56 0h1v1h-1zm19 0h1v1h-1zm6 0h1v2h-1zm31 0h1v3h-1zm28 0h1v1h-1zm5 0h1v1h-1zm10 0h1v1h-1zm22 0h1v1h-1zm32 0h1v1h-1zm105 0h1v1h-1zm17 0h1v1h-1zm-803 1h1v1h-1zm31 0h1v2h-1zm40 0h1v1h-1zm20 0h1v1h-1zm10 0h1v1h-1zm17 0h1v1h-1zm9 0h1v3h-1zm94 0h1v2h-1zm5 0h1v1h-1zm5 0h1v3h-1zm12 0h1v1h-1zm2 0h1v1h-1zm2 0h1v1h-1zm7 0h1v1h-1zm130 0h1v1h-1zm15 0h1v1h-1zm5 0h1v1h-1zm73 0h1v1h-1zm16 0h1v1h-1zm30 0h1v1h-1zm7 0h1v1h-1zm26 0h1v1h-1zm6 0h1v1h-1zm8 0h1v2h-1zm12 0h1v1h-1zm24 0h1v1h-1zm10 0h1v1h-1zm18 0h1v1h-1zm16 0h1v1h-1zm13 0h1v1h-1zm4 0h1v1h-1zm2 0h1v1h-1zm202 0h1v1h-1zm-898 1h1v1h-1zm10 0h1v1h-1zm39 0h1v1h-1zm37 0h1v2h-1zm30 0h2v1h-2zm6 0h1v1h-1zm20 0h1v1h-1zm81 0h1v1h-1zm9 0h1v1h-1zm6 0h1v1h-1zm30 0h1v1h-1zm11 0h1v1h-1zm8 0h1v1h-1zm7 0h1v1h-1zm242 0h1v1h-1zm2 0h1v1h-1zm15 0h1v2h-1zm49 0h2v1h-2zm21 0h1v1h-1zm2 0h1v1h-1zm35 0h1v1h-1zm4 0h1v1h-1zm6 0h1v1h-1zm9 0h1v1h-1zm29 0h1v1h-1zm-682 1h1v1h-1zm13 0h1v1h-1zm16 0h1v1h-1zm5 0h1v1h-1zm11 0h1v3h-1zm12 0h1v1h-1zm7 0h1v1h-1zm2 0h1v1h-1zm20 0h2v1h-2zm6 0h1v1h-1zm16 0h2v1h-2zm50 0h1v1h-1zm81 0h1v2h-1zm24 0h1v1h-1zm47 0h2v1h-2zm43 0h1v1h-1zm47 0h1v2h-1zm9 0h1v1h-1zm5 0h1v1h-1zm4 0h1v1h-1zm7 0h1v1h-1zm76 0h1v1h-1zm6 0h1v1h-1zm13 0h2v1h-2zm11 0h1v1h-1zm2 0h1v1h-1zm41 0h1v1h-1zm3 0h1v2h-1zm9 0h1v1h-1zm6 0h1v1h-1zm26 0h1v1h-1zm2 0h1v1h-1zm2 0h1v1h-1zm56 0h1v2h-1zm7 0h1v1h-1zm19 0h1v1h-1zm-730 1h1v1h-1zm98 0h1v1h-1zm5 0h1v1h-1zm21 0h1v1h-1zm19 0h1v1h-1zm6 0h1v1h-1zm37 0h1v2h-1zm32 0h1v1h-1zm53 0h1v1h-1zm3 0h1v3h-1zm83 0h1v1h-1zm23 0h1v1h-1zm14 0h1v1h-1zm94 0h1v1h-1zm16 0h1v1h-1zm97 0h1v1h-1zm12 0h1v1h-1zm26 0h1v1h-1zm8 0h1v1h-1zm6 0h1v1h-1zm33 0h1v1h-1zm13 0h1v1h-1zm32 0h1v1h-1zm49 0h1v1h-1zm117 0h1v1h-1zm-837 1h1v1h-1zm4 0h1v1h-1zm12 0h1v1h-1zm14 0h1v2h-1zm22 0h1v1h-1zm4 0h1v1h-1zm6 0h2v1h-2zm5 0h1v1h-1zm12 0h1v1h-1zm21 0h2v1h-2zm103 0h1v2h-1zm7 0h1v1h-1zm9 0h1v1h-1zm4 0h1v3h-1zm34 0h1v1h-1zm19 0h1v1h-1zm60 0h1v1h-1zm4 0h2v1h-2zm11 0h1v1h-1zm33 0h1v1h-1zm92 0h1v2h-1zm2 0h1v1h-1zm26 0h1v2h-1zm45 0h1v1h-1zm9 0h1v1h-1zm7 0h1v2h-1zm9 0h1v1h-1zm15 0h1v2h-1zm3 0h1v1h-1zm2 0h1v1h-1zm21 0h2v1h-2zm41 0h1v1h-1zm-679 1h1v1h-1zm2 0h1v1h-1zm9 0h1v1h-1zm38 0h1v1h-1zm25 0h1v2h-1zm24 0h2v1h-2zm10 0h1v1h-1zm33 0h1v1h-1zm11 0h1v1h-1zm11 0h1v1h-1zm10 0h1v1h-1zm48 0h1v2h-1zm2 0h1v1h-1zm9 0h2v1h-2zm44 0h1v1h-1zm40 0h1v1h-1zm9 0h1v1h-1zm8 0h1v1h-1zm62 0h1v1h-1zm26 0h1v1h-1zm26 0h1v1h-1zm8 0h1v1h-1zm61 0h1v1h-1zm6 0h1v1h-1zm18 0h1v1h-1zm25 0h1v1h-1zm9 0h1v1h-1zm10 0h1v1h-1zm10 0h1v1h-1zm5 0h1v1h-1zm3 0h1v3h-1zm7 0h1v1h-1zm24 0h1v2h-1zm6 0h1v1h-1zm-673 1h1v1h-1zm112 0h1v1h-1zm19 0h1v1h-1zm22 0h1v1h-1zm16 0h1v1h-1zm77 0h1v1h-1zm4 0h1v1h-1zm18 0h1v1h-1zm8 0h1v1h-1zm12 0h1v1h-1zm6 0h1v1h-1zm38 0h1v2h-1zm12 0h1v2h-1zm30 0h1v1h-1zm4 0h1v1h-1zm45 0h1v2h-1zm120 0h1v1h-1zm2 0h1v1h-1zm52 0h1v1h-1zm3 0h1v2h-1zm5 0h1v1h-1zm10 0h1v1h-1zm-607 1h1v1h-1zm37 0h1v1h-1zm3 0h1v1h-1zm7 0h1v1h-1zm2 0h1v1h-1zm33 0h1v1h-1zm56 0h2v1h-2zm5 0h1v1h-1zm65 0h1v1h-1zm22 0h1v1h-1zm13 0h1v1h-1zm12 0h1v1h-1zm4 0h1v1h-1zm4 0h1v1h-1zm3 0h1v1h-1zm2 0h2v1h-2zm83 0h1v1h-1zm13 0h1v1h-1zm12 0h1v1h-1zm25 0h1v1h-1zm6 0h1v1h-1zm3 0h1v1h-1zm27 0h1v1h-1zm54 0h1v1h-1zm38 0h1v1h-1zm11 0h1v1h-1zm8 0h1v1h-1zm15 0h1v1h-1zm21 0h1v1h-1zm11 0h1v1h-1zm3 0h1v1h-1zm16 0h1v1h-1zm32 0h1v1h-1zm19 0h2v1h-2zm8 0h1v1h-1zm5 0h1v1h-1zm53 0h1v1h-1zm150 269h1v2h-1zm-800 3h1v1h-1zm787 1h1v1h-1zm-2 1h1v1h-1zm18 0h1v1h-1zm-401 1h1v1h-1zm404 0h1v1h-1zm6 0h1v1h-1zm2 0h1v1h-1zm-814 1h1v1h-1zm564 7h1v1h-1zm-55 4h1v1h-1zm273 3h1v1h-1zm-857 5h1v1h-1zm823 1h1v1h-1zm-483 3h1v1h-1zm0 2h1v1h-1zm536 0h1v1h-1zm-544 1h1v1h-1zm529 0h1v1h-1zm-263 1h1v1h-1zm207 1h1v1h-1zm77 5h1v1h-1zm2 2h1v1h-1zm-879 3h1v1h-1zm850 4h1v1h-1zm32 1h1v1h-1zm-34 1h1v1h-1zm11 3h1v1h-1zm18 1h1v1h-1zm-62 3h1v1h-1zm-820 4h1v1h-1zm842 0h1v1h-1zm36 0h1v1h-1zm-421 3h1v1h-1zm-452 6h1v1h-1zm335 10h1v1h-1zm-340 7h1v1h-1zm273 0h1v1h-1zm-273 5h1v1h-1zm760 1h1v1h-1zm127 1h1v1h-1zm-25 5h1v1h-1zm-6 1h1v1h-1zm-856 4h1v1h-1zm863 2h1v1h-1zm-523 1h1v1h-1zm420 3h1v1h-1zm-760 3h1v1h-1zm395 0h1v1h-1zm482 0h1v1h-1zm-758 2h1v1h-1zm771 0h1v1h-1zm-144 4h1v1h-1zm142 1h1v1h-1zm-436 1h1v1h-1zm-452 1h1v1h-1zm177 1h1v1h-1zm163 0h1v1h-1zm-274 1h1v1h-1zm611 0h1v1h-1zm-466 1h1v1h-1zm132 2h1v2h-1zm242 0h1v1h-1z"/>
<path fill="#c0c0c0" d="M0 0m1107 436h1v1h-1zm11 4h1v1h-1zm-11 1h3v1h-3zm9 2h1v1h-1zm-7 1h1v1h-1zm3 3h1v1h-1zm-4 1h1v1h-1zm11 0h1v1h-1zm-6 1h1v1h-1zm11 0h1v1h-1zm-1 3h1v1h-1zm-2 3h1v1h-1zm-8 2h1v1h-1zm-4 1h1v1h-1zm11 1h1v1h-1zm-1 1h1v1h-1zm4 0h1v1h-1zm-16 1h2v1h-2zm15 0h1v1h-1zm2 0h1v1h-1zm-8 2h1v1h-1zm2 0h1v1h-1zm5 0h2v1h-2zm-16 1h1v1h-1zm12 2h1v1h-1zm6 0h1v1h-1zm-18 1h1v1h-1zm14 2h1v1h-1zm2 1h1v1h-1zm-14 2h1v1h-1zm15 0h1v1h-1zm-2 1h1v1h-1zm-15 2h1v1h-1zm15 1h1v2h-1zm-4 1h1v1h-1zm1 1h1v1h-1zm3 2h1v1h-1zm-4 1h1v1h-1zm5 2h1v1h-1zm-14 1h1v1h-1zm12 0h1v1h-1zm3 1h1v1h-1zm-16 2h1v2h-1zm12 0h1v1h-1zm-6 5h1v1h-1zm2 0h1v1h-1zm3 0h1v1h-1zm5 2h2v1h-2zm-5 1h2v1h-2zm6 1h1v1h-1zm-5 2h1v1h-1zm-12 1h1v1h-1zm3 1h1v1h-1zm-3 3h1v1h-1zm-1 1h1v1h-1zm12 1h1v1h-1zm4 0h1v1h-1zm-14 2h1v1h-1zm13 2h1v2h-1zm-15 1h1v1h-1zm12 0h1v1h-1zm-7 1h1v1h-1zm-5 1h1v1h-1zm13 0h1v1h-1zm4 1h1v2h-1zm-11 2h1v1h-1zm8 0h1v2h-1zm2 1h1v1h-1zm0 2h1v1h-1zm-2 1h1v1h-1zm-13 1h1v1h-1zm6 1h1v1h-1zm4 2h1v1h-1zm-11 1h1v1h-1zm13 1h1v1h-1zm-13 1h1v1h-1zm17 2h1v1h-1zm-15 1h1v1h-1zm13 1h1v1h-1zm-4 1h1v1h-1zm-9 1h1v2h-1zm4 1h1v1h-1zm1 1h3v1h-3zm-2 1h1v1h-1zm2 0h1v1h-1zm2 0h1v3h-1zm6 0h1v2h-1zm-26 2h4v1h-4zm7 0h1v1h-1zm3 0h1v1h-1zm7 0h1v1h-1zm6 0h1v1h-1zm-23 1h2v1h-2zm3 0h3v1h-3zm6 0h2v1h-2zm7 0h4v2h-4zm12 0h1v1h-1zm-28 1h5v1h-5zm8 0h1v1h-1zm2 0h1v1h-1zm-10 1h1v1h-1zm2 0h1v1h-1zm4 0h4v1h-4zm12 0h1v1h-1zm2 0h1v1h-1zm5 0h1v1h-1zm-23 1h6v1h-6zm7 0h1v1h-1zm8 0h3v1h-3zm7 0h1v1h-1zm-24 1h1v1h-1zm2 0h2v1h-2zm3 0h1v1h-1zm2 0h4v1h-4zm11 0h3v1h-3zm-14 1h4v1h-4zm5 0h2v1h-2zm4 0h1v1h-1zm4 0h3v1h-3zm-17 1h1v3h-1zm3 0h1v1h-1zm4 0h4v1h-4zm7 0h1v1h-1zm2 0h2v1h-2zm3 0h2v1h-2zm-15 1h4v1h-4zm-1 1h6v1h-6zm25 1h1v1h-1zm-6 1h8v2h-8zm-13 2h21v1h-21zm-10 1h23v2h-23zm0 2h10v1h-10zm-128 19h2v1h-2zm-4 1h6v1h-6zm-4 1h10v1h-10zm-3 1h11v1h-11zm-4 1h11v1h-11zm-4 1h11v1h-11zm-3 1h11v1h-11zm-4 1h11v1h-11zm-582 1h61v1h-61zm578 0h11v1h-11zm-891 1h899v1h-899zm0 1h895v1h-895zm0 1h313v1h-313zm374 0h517v1h-517zm-103 3h1v1h-1zm381 8h1v1h-1zm16 0h1v1h-1zm-396 1h1v1h-1zm385 1h1v1h-1zm18 0h1v1h-1zm-388 1h1v1h-1zm365 0h1v1h-1zm16 0h1v1h-1zm21 0h2v3h-2zm-398 1h1v1h-1zm-226 1h1v1h-1zm12 0h1v1h-1zm492 0h1v1h-1zm88 0h1v1h-1zm18 0h1v1h-1zm-606 1h1v1h-1zm2 0h1v1h-1zm11 0h1v1h-1zm8 0h1v1h-1zm8 0h1v1h-1zm12 0h1v1h-1zm182 0h1v1h-1zm276 0h1v1h-1zm13 0h1v1h-1zm9 0h1v1h-1zm62 0h1v1h-1zm16 0h1v1h-1zm-600 1h1v1h-1zm12 0h1v1h-1zm29 0h1v1h-1zm19 0h1v1h-1zm446 0h1v1h-1zm6 0h1v1h-1zm6 0h1v1h-1zm6 0h2v1h-2zm5 0h1v1h-1zm-504 1h2v1h-2zm195 0h1v1h-1zm118 0h1v1h-1zm153 0h1v1h-1zm13 0h1v1h-1zm19 0h1v1h-1zm4 0h1v1h-1zm6 0h1v1h-1zm37 0h1v1h-1zm19 0h1v1h-1zm18 0h1v1h-1zm-615 1h1v1h-1zm12 0h1v1h-1zm14 0h1v1h-1zm22 0h1v1h-1zm9 0h2v1h-2zm13 0h1v1h-1zm4 0h1v1h-1zm10 0h1v1h-1zm4 0h2v1h-2zm119 0h1v1h-1zm34 0h1v1h-1zm2 0h1v1h-1zm124 0h1v1h-1zm146 0h1v1h-1zm2 0h1v1h-1zm37 0h1v1h-1zm-497 1h1v1h-1zm7 0h1v1h-1zm13 0h1v1h-1zm7 0h1v1h-1zm12 0h1v1h-1zm23 0h1v1h-1zm79 0h1v1h-1zm6 0h1v1h-1zm24 0h1v1h-1zm121 0h1v1h-1zm146 0h1v1h-1zm4 0h1v1h-1zm3 0h2v1h-2zm39 0h2v1h-2zm16 0h1v1h-1zm5 0h1v1h-1zm8 0h1v1h-1zm-569 1h1v1h-1zm2 0h1v1h-1zm53 0h1v1h-1zm152 0h1v1h-1zm24 0h1v1h-1zm115 0h1v1h-1zm12 0h1v1h-1zm7 0h1v1h-1zm4 0h1v1h-1zm8 0h1v1h-1zm118 0h1v1h-1zm63 0h1v1h-1zm27 0h1v1h-1zm-493 1h1v1h-1zm7 0h1v1h-1zm13 0h1v1h-1zm10 0h1v1h-1zm30 0h1v1h-1zm161 0h1v1h-1zm32 0h1v1h-1zm10 0h1v1h-1zm2 0h1v1h-1zm2 0h1v1h-1zm3 0h1v1h-1zm142 0h1v1h-1zm66 0h1v1h-1zm-504 1h1v1h-1zm27 0h1v1h-1zm7 0h1v1h-1zm42 0h1v1h-1zm114 0h1v1h-1zm118 0h1v1h-1zm-375 1h1v1h-1zm47 0h1v1h-1zm70 0h2v1h-2zm23 0h2v1h-2zm12 0h1v1h-1zm6 0h1v1h-1zm417 0h2v1h-2zm4 0h1v1h-1zm-584 1h1v1h-1zm51 0h1v1h-1zm69 0h1v1h-1zm29 0h1v1h-1zm10 0h1v1h-1zm93 0h1v1h-1zm11 0h1v1h-1zm83 0h2v1h-2zm43 0h1v1h-1zm203 0h1v1h-1zm-588 1h1v1h-1zm122 0h1v1h-1zm28 0h1v1h-1zm8 0h1v1h-1zm19 0h1v1h-1zm135 0h1v1h-1zm25 0h1v1h-1zm157 0h1v1h-1zm-542 1h1v1h-1zm34 0h1v1h-1zm185 0h1v1h-1zm24 0h1v1h-1zm96 0h1v1h-1zm3 0h2v1h-2zm17 0h1v1h-1zm6 0h1v1h-1zm5 0h1v1h-1zm7 0h1v1h-1zm6 0h1v1h-1zm52 0h1v1h-1zm202 0h1v1h-1zm-483 1h1v1h-1zm55 0h1v1h-1zm12 0h1v1h-1zm87 0h1v1h-1zm11 0h1v1h-1zm8 0h1v1h-1zm24 0h1v1h-1zm7 0h1v1h-1zm20 0h1v1h-1zm9 0h1v1h-1zm-392 1h1v1h-1zm40 0h1v1h-1zm178 0h1v1h-1zm9 0h2v1h-2zm95 0h2v1h-2zm6 0h1v1h-1zm6 0h1v1h-1zm9 0h1v1h-1zm29 0h1v1h-1zm80 0h1v1h-1zm13 0h1v1h-1zm81 0h1v1h-1zm-531 1h1v1h-1zm20 0h1v1h-1zm129 0h1v1h-1zm56 0h1v1h-1zm2 0h1v1h-1zm15 0h1v1h-1zm2 0h1v1h-1zm88 0h1v1h-1zm6 0h1v1h-1zm8 0h1v1h-1zm16 0h1v1h-1zm92 0h1v1h-1zm-450 1h1v1h-1zm7 0h1v1h-1zm19 0h1v1h-1zm209 0h1v1h-1zm11 0h1v1h-1zm200 0h1v1h-1zm9 0h1v1h-1zm16 0h1v1h-1zm67 0h1v1h-1zm3 0h1v1h-1zm-533 1h1v1h-1zm449 0h1v1h-1zm82 0h1v1h-1zm110 0h1v1h-1zm252 0h1v1h-1zm14 0h1v1h-1zm2 0h2v1h-2zm-903 1h1v1h-1zm16 0h2v1h-2zm4 0h1v1h-1zm418 0h1v1h-1zm4 0h1v1h-1zm5 0h1v1h-1zm4 0h1v1h-1zm16 0h1v1h-1zm169 0h1v1h-1zm253 0h2v1h-2zm6 0h1v1h-1zm10 0h1v1h-1zm-898 1h1v1h-1zm459 0h1v1h-1zm4 0h1v1h-1zm56 0h1v1h-1zm333 0h1v1h-1zm3 0h1v1h-1zm5 0h2v1h-2zm14 0h1v1h-1zm11 0h1v1h-1zm-888 1h1v1h-1zm4 0h1v1h-1zm501 0h1v1h-1zm131 0h2v1h-2zm21 0h1v1h-1zm2 0h1v1h-1zm15 0h2v1h-2zm167 0h1v1h-1zm18 0h1v1h-1zm12 0h1v1h-1zm-363 1h1v1h-1zm10 0h1v1h-1zm125 0h1v1h-1zm5 0h1v1h-1zm3 0h1v1h-1zm4 0h1v1h-1zm3 0h1v1h-1zm18 0h1v1h-1zm2 0h1v1h-1zm162 0h1v1h-1zm4 0h1v1h-1zm2 0h2v1h-2zm6 0h1v1h-1zm3 0h1v1h-1zm5 0h1v1h-1zm-375 1h1v1h-1zm62 0h1v1h-1zm99 0h1v1h-1zm17 0h3v1h-3zm6 0h1v1h-1zm12 0h1v1h-1zm4 0h1v1h-1zm4 0h1v1h-1zm48 0h1v1h-1zm6 0h1v1h-1zm8 0h1v1h-1zm17 0h2v1h-2zm35 0h1v1h-1zm12 0h2v1h-2zm19 0h2v1h-2zm5 0h1v1h-1zm14 0h1v1h-1zm9 0h1v1h-1zm-385 1h1v1h-1zm352 0h1v1h-1zm2 0h1v1h-1zm-3 1h1v1h-1zm-127 2h1v1h-1zm1 1h2v1h-2zm19 0h1v1h-1zm-684 1h1v1h-1zm667 0h1v1h-1zm15 0h1v1h-1zm4 0h1v1h-1zm2 0h1v1h-1zm3 0h1v1h-1zm3 0h1v1h-1zm39 0h1v1h-1zm-53 1h1v1h-1zm15 0h1v1h-1zm7 0h1v1h-1zm-33 1h1v1h-1zm3 0h1v1h-1zm25 0h1v1h-1zm7 0h1v1h-1zm8 0h2v1h-2zm-41 1h1v1h-1zm36 0h1v1h-1zm8 0h1v1h-1zm3 0h2v1h-2zm68 0h2v1h-2zm-70 1h1v1h-1zm4 0h1v1h-1zm63 0h1v1h-1zm-57 1h1v1h-1zm2 0h2v1h-2zm4 1h1v1h-1zm45 0h1v1h-1zm3 0h2v1h-2zm53 0h1v1h-1zm-100 1h1v1h-1zm2 0h1v1h-1zm7 0h1v1h-1zm-5 1h2v1h-2zm8 0h1v1h-1zm2 0h3v1h-3zm20 0h1v1h-1zm2 0h1v1h-1zm5 0h1v1h-1zm-33 1h1v1h-1zm10 0h1v1h-1zm13 0h1v1h-1zm-5 1h3v1h-3zm92 5h1v1h-1zm-285 1h1v1h-1zm-262 7h1v1h-1zm546 6h1v1h-1zm-213 3h1v1h-1zm41 1h1v1h-1zm-188 2h1v1h-1zm-16 2h1v1h-1zm350 3h1v1h-1zm-25 3h1v1h-1zm31 2h1v1h-1zm3 1h1v1h-1zm5 0h1v1h-1zm-166 1h1v1h-1zm-589 4h1v1h-1zm774 12h1v1h-1zm0 2h1v1h-1zm-568 2h1v1h-1zm-239 4h1v1h-1zm810 2h1v1h-1zm-262 1h1v1h-1zm244 2h1v1h-1zm10 0h1v1h-1zm-18 2h1v1h-1zm23 4h1v1h-1zm-850 3h1v1h-1zm818 6h1v1h-1zm4 0h1v1h-1zm-779 1h1v1h-1zm782 1h1v1h-1zm8 1h1v1h-1zm-63 11h1v1h-1zm80 3h1v1h-1zm-278 4h1v1h-1zm247 4h1v1h-1z"/>
<rect x="904" y="183" width="2" height="167" fill="#000"/>
<rect x="904" y="581" width="2" height="167" fill="#000"/>
<rect x="42" y="353" width="35" height="15" fill="#121878"/><rect x="77" y="353" width="32" height="15" fill="#13228a"/><rect x="109" y="353" width="36" height="15" fill="#132c9c"/><rect x="145" y="353" width="32" height="15" fill="#1a3ca8"/><rect x="177" y="353" width="33" height="15" fill="#0040c0"/><rect x="210" y="353" width="36" height="15" fill="#0058d0"/><rect x="246" y="353" width="32" height="15" fill="#0070cc"/><rect x="278" y="353" width="36" height="15" fill="#0090c4"/><rect x="314" y="353" width="33" height="15" fill="#00a8bc"/><rect x="347" y="353" width="32" height="15" fill="#00c0a8"/><rect x="379" y="353" width="36" height="15" fill="#00d080"/><rect x="415" y="353" width="32" height="15" fill="#00e840"/><rect x="447" y="353" width="33" height="15" fill="#00ff18"/><rect x="480" y="353" width="36" height="15" fill="#10e000"/><rect x="516" y="353" width="32" height="15" fill="#30d000"/><rect x="548" y="353" width="36" height="15" fill="#50b800"/><rect x="584" y="353" width="36" height="15" fill="#68a800"/><rect x="620" y="353" width="33" height="15" fill="#90bc00"/><rect x="653" y="353" width="36" height="15" fill="#b0d800"/><rect x="689" y="353" width="32" height="15" fill="#d0d000"/><rect x="721" y="353" width="32" height="15" fill="#e4d000"/><rect x="753" y="353" width="36" height="15" fill="#f0c000"/><rect x="789" y="353" width="33" height="15" fill="#f8b000"/><rect x="822" y="353" width="36" height="15" fill="#fca800"/><rect x="858" y="353" width="32" height="15" fill="#ffa000"/><rect x="890" y="353" width="33" height="15" fill="#ff8c00"/><rect x="923" y="353" width="36" height="15" fill="#ff7800"/><rect x="959" y="353" width="32" height="15" fill="#ff6400"/><rect x="991" y="353" width="32" height="15" fill="#f04400"/><rect x="1023" y="353" width="36" height="15" fill="#e02000"/><rect x="1059" y="353" width="33" height="15" fill="#d00c00"/><rect x="1092" y="353" width="30" height="15" fill="#c00000"/>
<rect x="42" y="751" width="35" height="15" fill="#121878"/><rect x="77" y="751" width="32" height="15" fill="#13228a"/><rect x="109" y="751" width="36" height="15" fill="#132c9c"/><rect x="145" y="751" width="32" height="15" fill="#1a3ca8"/><rect x="177" y="751" width="33" height="15" fill="#0040c0"/><rect x="210" y="751" width="36" height="15" fill="#0058d0"/><rect x="246" y="751" width="32" height="15" fill="#0070cc"/><rect x="278" y="751" width="36" height="15" fill="#0090c4"/><rect x="314" y="751" width="33" height="15" fill="#00a8bc"/><rect x="347" y="751" width="32" height="15" fill="#00c0a8"/><rect x="379" y="751" width="36" height="15" fill="#00d080"/><rect x="415" y="751" width="32" height="15" fill="#00e840"/><rect x="447" y="751" width="33" height="15" fill="#00ff18"/><rect x="480" y="751" width="36" height="15" fill="#10e000"/><rect x="516" y="751" width="32" height="15" fill="#30d000"/><rect x="548" y="751" width="36" height="15" fill="#50b800"/><rect x="584" y="751" width="36" height="15" fill="#68a800"/><rect x="620" y="751" width="33" height="15" fill="#90bc00"/><rect x="653" y="751" width="36" height="15" fill="#b0d800"/><rect x="689" y="751" width="32" height="15" fill="#d0d000"/><rect x="721" y="751" width="32" height="15" fill="#e4d000"/><rect x="753" y="751" width="36" height="15" fill="#f0c000"/><rect x="789" y="751" width="33" height="15" fill="#f8b000"/><rect x="822" y="751" width="36" height="15" fill="#fca800"/><rect x="858" y="751" width="32" height="15" fill="#ffa000"/><rect x="890" y="751" width="33" height="15" fill="#ff8c00"/><rect x="923" y="751" width="36" height="15" fill="#ff7800"/><rect x="959" y="751" width="32" height="15" fill="#ff6400"/><rect x="991" y="751" width="32" height="15" fill="#f04400"/><rect x="1023" y="751" width="36" height="15" fill="#e02000"/><rect x="1059" y="751" width="33" height="15" fill="#d00c00"/><rect x="1092" y="751" width="30" height="15" fill="#c00000"/>
<path fill="#00eeee" d="M176 62h11v1h-11zM181 58h1v10h-1zM176 112h11v1h-11zM181 108h1v10h-1zM176 162h11v1h-11zM181 158h1v10h-1zM176 212h11v1h-11zM181 208h1v10h-1zM176 262h11v1h-11zM181 258h1v10h-1zM176 312h11v1h-11zM181 308h1v10h-1zM311 62h11v1h-11zM316 58h1v10h-1zM311 112h11v1h-11zM316 108h1v10h-1zM311 162h11v1h-11zM316 158h1v10h-1zM311 212h11v1h-11zM316 208h1v10h-1zM311 262h11v1h-11zM316 258h1v10h-1zM311 312h11v1h-11zM316 308h1v10h-1zM446 62h11v1h-11zM451 58h1v10h-1zM446 112h11v1h-11zM451 108h1v10h-1zM446 162h11v1h-11zM451 158h1v10h-1zM446 212h11v1h-11zM451 208h1v10h-1zM446 262h11v1h-11zM451 258h1v10h-1zM446 312h11v1h-11zM451 308h1v10h-1zM581 62h11v1h-11zM586 58h1v10h-1zM581 112h11v1h-11zM586 108h1v10h-1zM581 162h11v1h-11zM586 158h1v10h-1zM581 212h11v1h-11zM586 208h1v10h-1zM581 262h11v1h-11zM586 258h1v10h-1zM581 312h11v1h-11zM586 308h1v10h-1zM716 62h11v1h-11zM721 58h1v10h-1zM716 112h11v1h-11zM721 108h1v10h-1zM716 162h11v1h-11zM721 158h1v10h-1zM716 212h11v1h-11zM721 208h1v10h-1zM716 262h11v1h-11zM721 258h1v10h-1zM716 312h11v1h-11zM721 308h1v10h-1zM851 62h11v1h-11zM856 58h1v10h-1zM851 112h11v1h-11zM856 108h1v10h-1zM851 162h11v1h-11zM856 158h1v10h-1zM851 212h11v1h-11zM856 208h1v10h-1zM851 262h11v1h-11zM856 258h1v10h-1zM851 312h11v1h-11zM856 308h1v10h-1zM986 62h11v1h-11zM991 58h1v10h-1zM986 112h11v1h-11zM991 108h1v10h-1zM986 162h11v1h-11zM991 158h1v10h-1zM986 212h11v1h-11zM991 208h1v10h-1zM986 262h11v1h-11zM991 258h1v10h-1zM986 312h11v1h-11zM991 308h1v10h-1z"/>
<path fill="#00eeee" d="M176 460h11v1h-11zM181 456h1v10h-1zM176 510h11v1h-11zM181 506h1v10h-1zM176 560h11v1h-11zM181 556h1v10h-1zM176 610h11v1h-11zM181 606h1v10h-1zM176 660h11v1h-11zM181 656h1v10h-1zM176 710h11v1h-11zM181 706h1v10h-1zM311 460h11v1h-11zM316 456h1v10h-1zM311 510h11v1h-11zM316 506h1v10h-1zM311 560h11v1h-11zM316 556h1v10h-1zM311 610h11v1h-11zM316 606h1v10h-1zM311 660h11v1h-11zM316 656h1v10h-1zM311 710h11v1h-11zM316 706h1v10h-1zM446 460h11v1h-11zM451 456h1v10h-1zM446 510h11v1h-11zM451 506h1v10h-1zM446 560h11v1h-11zM451 556h1v10h-1zM446 610h11v1h-11zM451 606h1v10h-1zM446 660h11v1h-11zM451 656h1v10h-1zM446 710h11v1h-11zM451 706h1v10h-1zM581 460h11v1h-11zM586 456h1v10h-1zM581 510h11v1h-11zM586 506h1v10h-1zM581 560h11v1h-11zM586 556h1v10h-1zM581 610h11v1h-11zM586 606h1v10h-1zM581 660h11v1h-11zM586 656h1v10h-1zM581 710h11v1h-11zM586 706h1v10h-1zM716 460h11v1h-11zM721 456h1v10h-1zM716 510h11v1h-11zM721 506h1v10h-1zM716 560h11v1h-11zM721 556h1v10h-1zM716 610h11v1h-11zM721 606h1v10h-1zM716 660h11v1h-11zM721 656h1v10h-1zM716 710h11v1h-11zM721 706h1v10h-1zM851 460h11v1h-11zM856 456h1v10h-1zM851 510h11v1h-11zM856 506h1v10h-1zM851 560h11v1h-11zM856 556h1v10h-1zM851 610h11v1h-11zM856 606h1v10h-1zM851 660h11v1h-11zM856 656h1v10h-1zM851 710h11v1h-11zM856 706h1v10h-1zM986 460h11v1h-11zM991 456h1v10h-1zM986 510h11v1h-11zM991 506h1v10h-1zM986 560h11v1h-11zM991 556h1v10h-1zM986 610h11v1h-11zM991 606h1v10h-1zM986 660h11v1h-11zM991 656h1v10h-1zM986 710h11v1h-11zM991 706h1v10h-1z"/>
<rect x="4" y="21" width="31" height="254" fill="#778899"/>
<rect x="7" y="24" width="25" height="50" fill="#191970"/>
<rect x="7" y="80" width="25" height="27" fill="#191970"/>
<rect x="7" y="113" width="25" height="27" fill="#191970"/>
<rect x="7" y="146" width="25" height="27" fill="#191970"/>
<rect x="7" y="179" width="25" height="27" fill="#191970"/>
<rect x="7" y="212" width="25" height="27" fill="#191970"/>
<path d="M22 86L13.5 93.5L22 101M30 86L21.5 93.5L30 101" stroke="#fff" stroke-width="1.6" fill="none" shape-rendering="geometricPrecision"/>
<path d="M25 119L16.5 126.5L25 134" stroke="#fff" stroke-width="1.6" fill="none" shape-rendering="geometricPrecision"/>
<rect x="15" y="156" width="13" height="2" fill="#fff"/><rect x="15" y="160.5" width="13" height="2" fill="#fff"/>
<path d="M17 185L25.5 192.5L17 200" stroke="#fff" stroke-width="1.6" fill="none" shape-rendering="geometricPrecision"/>
<path d="M13 218L21.5 225.5L13 233M21 218L29.5 225.5L21 233" stroke="#fff" stroke-width="1.6" fill="none" shape-rendering="geometricPrecision"/>
<rect x="7" y="245" width="25" height="27" fill="#fff"/>
<rect x="9" y="247" width="21" height="23" fill="#cccc00"/>
<rect x="4" y="411" width="31" height="254" fill="#778899"/>
<rect x="7" y="414" width="25" height="50" fill="#191970"/>
<rect x="7" y="470" width="25" height="27" fill="#191970"/>
<rect x="7" y="503" width="25" height="27" fill="#191970"/>
<rect x="7" y="536" width="25" height="27" fill="#191970"/>
<rect x="7" y="569" width="25" height="27" fill="#191970"/>
<rect x="7" y="602" width="25" height="27" fill="#191970"/>
<path d="M22 476L13.5 483.5L22 491M30 476L21.5 483.5L30 491" stroke="#fff" stroke-width="1.6" fill="none" shape-rendering="geometricPrecision"/>
<path d="M25 509L16.5 516.5L25 524" stroke="#fff" stroke-width="1.6" fill="none" shape-rendering="geometricPrecision"/>
<rect x="15" y="546" width="13" height="2" fill="#fff"/><rect x="15" y="550.5" width="13" height="2" fill="#fff"/>
<path d="M17 575L25.5 582.5L17 590" stroke="#fff" stroke-width="1.6" fill="none" shape-rendering="geometricPrecision"/>
<path d="M13 608L21.5 615.5L13 623M21 608L29.5 615.5L21 623" stroke="#fff" stroke-width="1.6" fill="none" shape-rendering="geometricPrecision"/>
<rect x="7" y="635" width="25" height="27" fill="#cccc00"/>
<rect x="17" y="27" width="2" height="9" fill="#fff"/><rect x="24" y="27" width="2" height="9" fill="#fff"/><path d="M18 27L21.5 33L25 27" stroke="#fff" stroke-width="2" fill="none" shape-rendering="geometricPrecision"/><rect x="17" y="38" width="2" height="10" fill="#fff"/><rect x="17" y="38" width="9" height="2" fill="#fff"/><rect x="17" y="42" width="8" height="2" fill="#fff"/><rect x="17" y="46" width="9" height="2" fill="#fff"/><rect x="17" y="50" width="2" height="9" fill="#fff"/><rect x="24" y="50" width="2" height="9" fill="#fff"/><path d="M18 50.5L25 58.5" stroke="#fff" stroke-width="2.2" fill="none" shape-rendering="geometricPrecision"/><rect x="17" y="61" width="2" height="8" fill="#fff"/><rect x="24" y="61" width="2" height="8" fill="#fff"/><rect x="18" y="68" width="7" height="2" fill="#fff"/>
<rect x="17" y="417" width="2" height="9" fill="#fff"/><rect x="24" y="417" width="2" height="9" fill="#fff"/><path d="M18 417L21.5 423L25 417" stroke="#fff" stroke-width="2" fill="none" shape-rendering="geometricPrecision"/><rect x="17" y="428" width="2" height="10" fill="#fff"/><rect x="17" y="428" width="9" height="2" fill="#fff"/><rect x="17" y="432" width="8" height="2" fill="#fff"/><rect x="17" y="436" width="9" height="2" fill="#fff"/><rect x="17" y="440" width="2" height="9" fill="#fff"/><rect x="24" y="440" width="2" height="9" fill="#fff"/><path d="M18 440.5L25 448.5" stroke="#fff" stroke-width="2.2" fill="none" shape-rendering="geometricPrecision"/><rect x="17" y="451" width="2" height="8" fill="#fff"/><rect x="24" y="451" width="2" height="8" fill="#fff"/><rect x="18" y="458" width="7" height="2" fill="#fff"/>
</svg>
<div class="t" style="left:52px;top:6px">12/12/95 01:13:34</div>
<div class="t" style="left:165px;top:6px">SABL</div>
<div class="t" style="left:218px;top:6px">TAR</div>
<div class="t" style="left:250px;top:6px">180.0 deg</div>
<div class="t" style="left:315px;top:6px">66#</div>
<div class="t" style="left:341px;top:6px">GDB</div>
<div class="c tm" style="left:153px;top:22px">01:15:26</div>
<div class="c tm" style="left:288px;top:22px">01:17:18</div>
<div class="c tm" style="left:423px;top:22px">01:19:10</div>
<div class="c tm" style="left:558px;top:22px">01:21:02</div>
<div class="c tm" style="left:693px;top:22px">01:22:54</div>
<div class="c tm" style="left:828px;top:22px">01:24:46</div>
<div class="c tm" style="left:963px;top:22px">01:26:38</div>
<div class="c" style="left:153px;top:58px">5.0</div>
<div class="c" style="left:153px;top:108px">4.0</div>
<div class="c" style="left:153px;top:158px">3.0</div>
<div class="c" style="left:153px;top:208px">2.0</div>
<div class="c" style="left:153px;top:258px">1.0</div>
<div class="c" style="left:153px;top:308px">0.0</div>
<div class="w" style="left:199px;top:370px;letter-spacing:1.3px">-9.8</div>
<div class="w" style="left:397px;top:370px;letter-spacing:1.3px">-4.2</div>
<div class="w" style="left:575px;top:370px">0.0</div>
<div class="w" style="left:750px;top:370px">4.2</div>
<div class="w" style="left:940px;top:370px">9.8</div>
<div class="t" style="left:52px;top:404px">12/12/95 01:13:34</div>
<div class="t" style="left:165px;top:404px">SABL</div>
<div class="t" style="left:218px;top:404px">TAR</div>
<div class="t" style="left:250px;top:404px">180.0 deg</div>
<div class="t" style="left:315px;top:404px">66#</div>
<div class="t" style="left:341px;top:404px">RDB</div>
<div class="c tm" style="left:153px;top:420px">01:15:26</div>
<div class="c tm" style="left:288px;top:420px">01:17:18</div>
<div class="c tm" style="left:423px;top:420px">01:19:10</div>
<div class="c tm" style="left:558px;top:420px">01:21:02</div>
<div class="c tm" style="left:693px;top:420px">01:22:54</div>
<div class="c tm" style="left:828px;top:420px">01:24:46</div>
<div class="c tm" style="left:963px;top:420px">01:26:38</div>
<div class="c" style="left:153px;top:456px">5.0</div>
<div class="c" style="left:153px;top:506px">4.0</div>
<div class="c" style="left:153px;top:556px">3.0</div>
<div class="c" style="left:153px;top:606px">2.0</div>
<div class="c" style="left:153px;top:656px">1.0</div>
<div class="c" style="left:153px;top:706px">0.0</div>
<div class="w" style="left:188px;top:768px;letter-spacing:1.3px">-13.0</div>
<div class="w" style="left:397px;top:768px;letter-spacing:1.3px">-6.4</div>
<div class="w" style="left:560px;top:768px;letter-spacing:1.3px">-0.5</div>
<div class="w" style="left:750px;top:768px">5.4</div>
<div class="w" style="left:933px;top:768px">12.0</div>
</body></html>
